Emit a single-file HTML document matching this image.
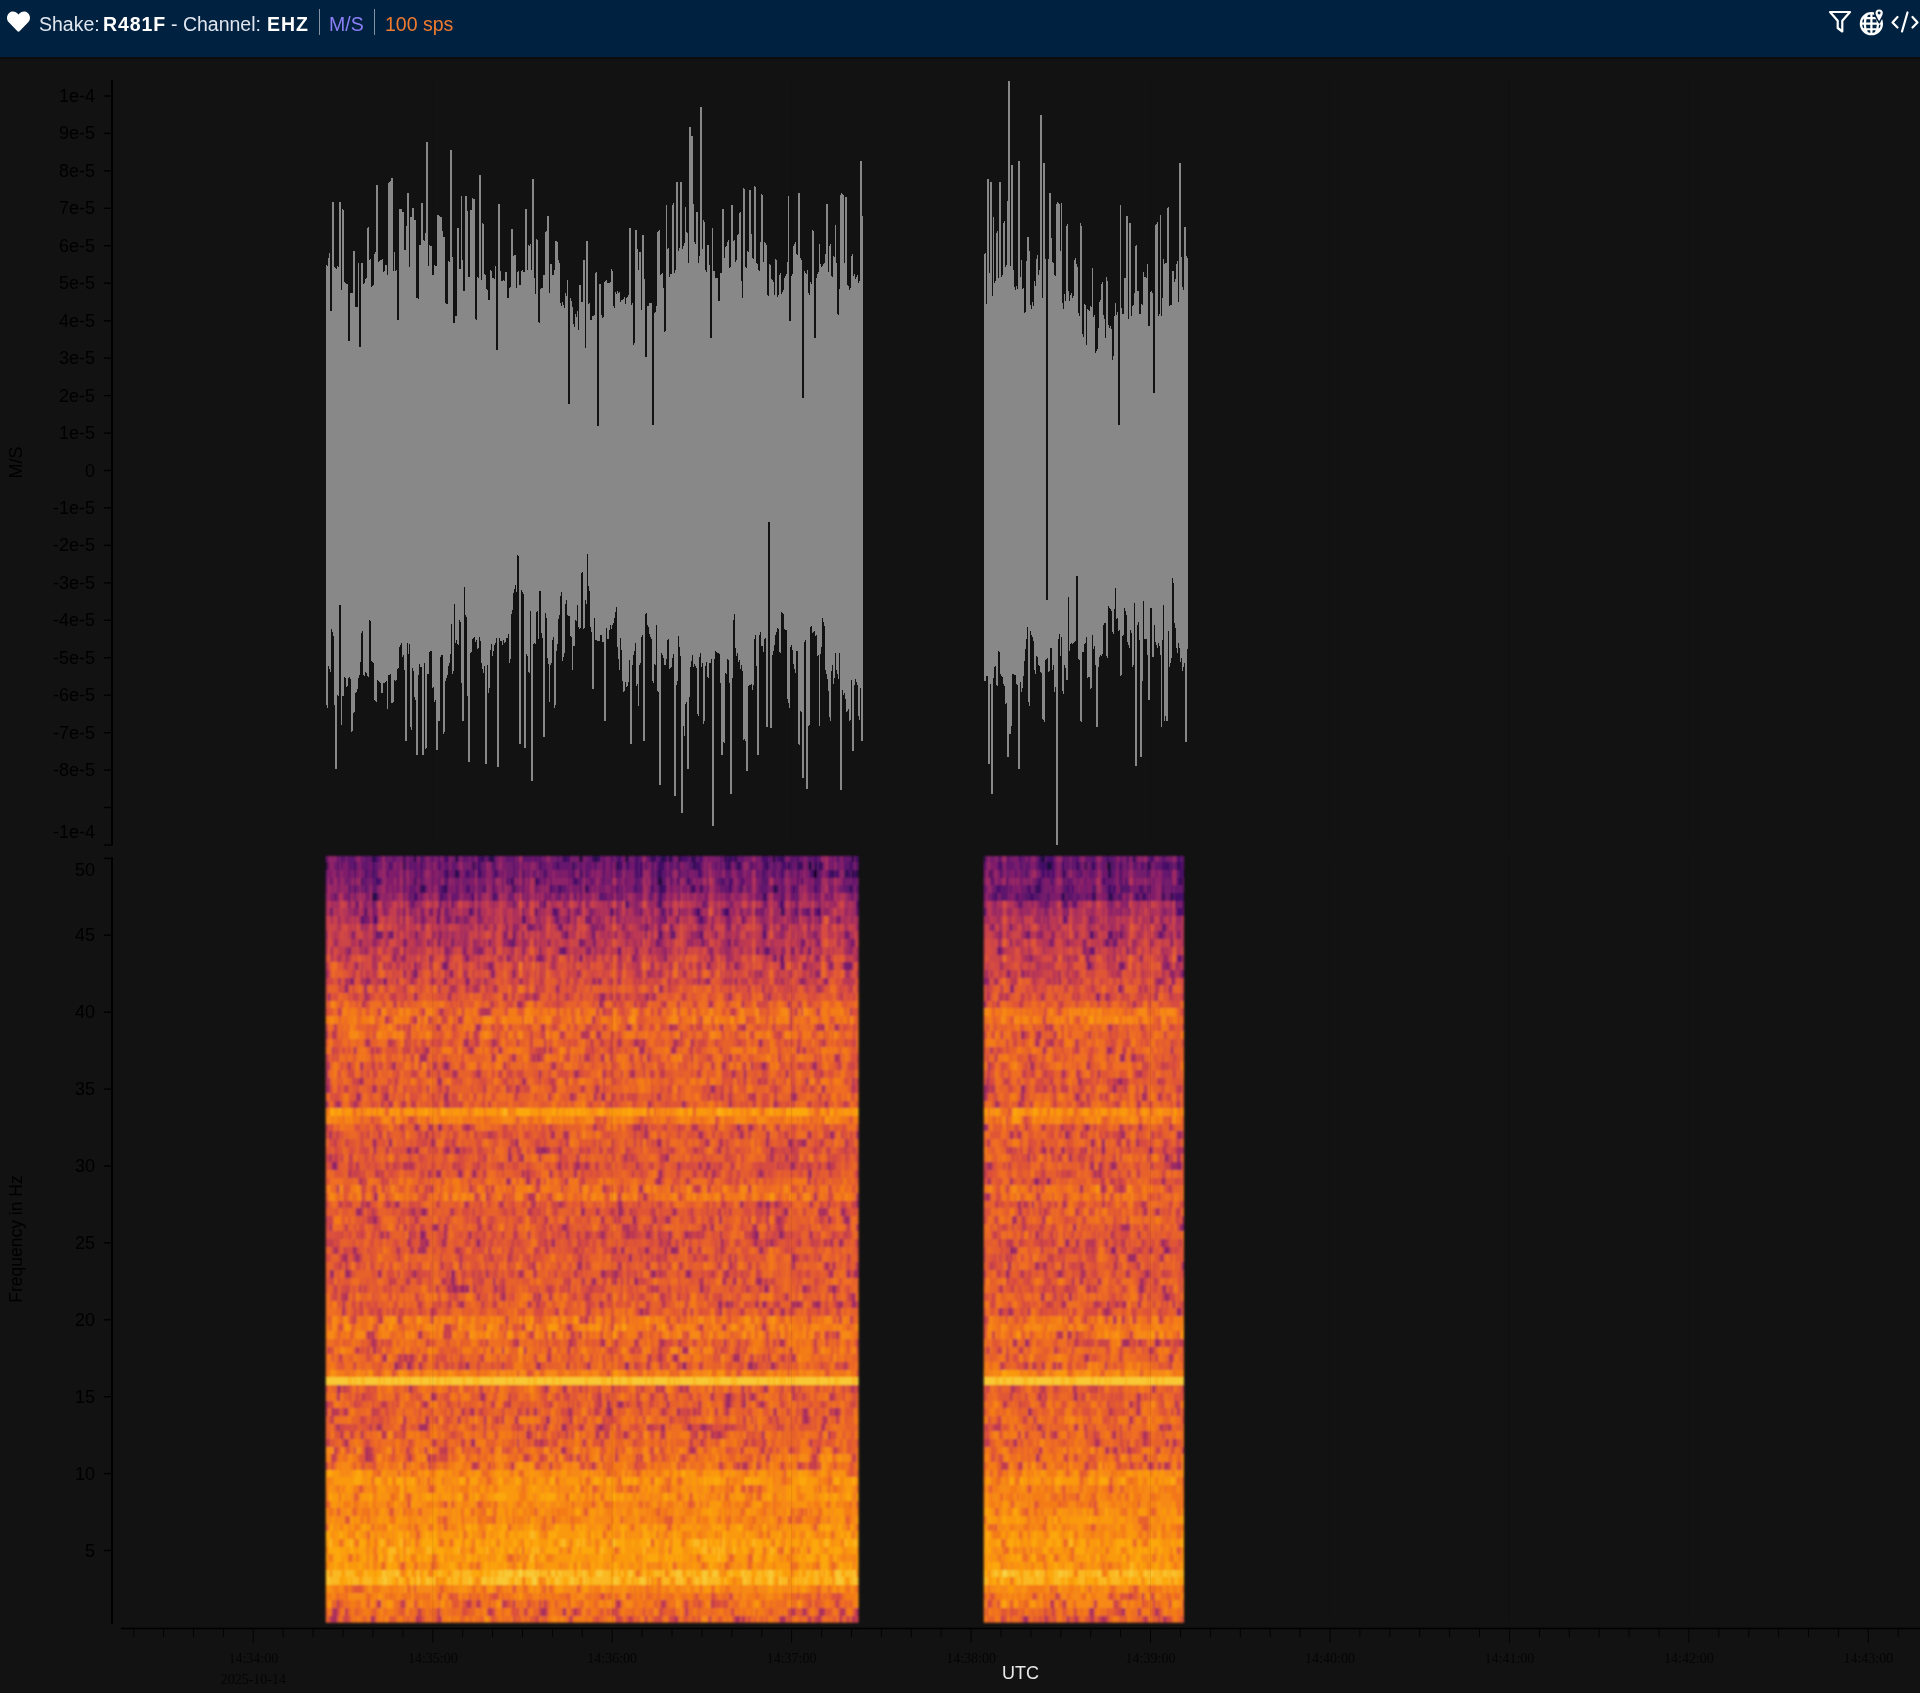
<!DOCTYPE html>
<html><head><meta charset="utf-8"><title>Shake R481F EHZ</title>
<style>
html,body{margin:0;padding:0;background:#121212;width:1920px;height:1693px;overflow:hidden;font-family:"Liberation Sans",sans-serif}
#wrap{position:absolute;left:0;top:0;width:1920px;height:1693px;filter:blur(0.45px)}
#hdr{position:absolute;left:0;top:0;width:1920px;height:57px;background:#00213f;box-shadow:0 1px 3px rgba(0,0,0,.6);z-index:2}
#hdr span{position:absolute;top:12.5px;font-size:19.5px;line-height:22px;white-space:nowrap}
.lt{color:#dfe6ef}
.bd{color:#ffffff;font-weight:bold;letter-spacing:0.9px}
.sep{position:absolute;top:9px;width:1px;height:26px;background:#8492a3}
svg{position:absolute;left:0;top:0}
.yl{font-size:18px;fill:#000;text-anchor:end;font-family:"Liberation Sans",sans-serif}
.xl{font-size:14px;fill:#050505;text-anchor:middle;font-family:"Liberation Serif",serif}
</style></head><body><div id="wrap">
<div id="hdr">
<svg width="23" height="21" viewBox="0 22 512 463" style="left:7px;top:11px"><path fill="#fff" d="M462.3 62.6C407.5 15.9 326 24.3 275.7 76.2L256 96.5l-19.7-20.3C186.1 24.3 104.5 15.9 49.7 62.6c-62.8 53.6-66.1 149.8-9.9 207.9l193.5 199.8c12.5 12.9 32.8 12.9 45.3 0l193.5-199.8c56.3-58.1 53-154.3-9.8-207.9z"/></svg>
<span class="lt" style="left:39px">Shake:</span>
<span class="bd" style="left:103px">R481F</span>
<span class="lt" style="left:171px">- Channel:</span>
<span class="bd" style="left:267px">EHZ</span>
<div class="sep" style="left:319px"></div>
<span style="left:329px;color:#8b7ff6">M/S</span>
<div class="sep" style="left:374px"></div>
<span style="left:385px;color:#f07b30">100 sps</span>
<svg width="26" height="26" viewBox="0 0 26 26" style="left:1827px;top:9px"><path fill="none" stroke="#fff" stroke-width="2.2" stroke-linejoin="round" d="M3 3H23L15.3 11.8V22.5L10.7 19V11.8Z"/></svg>
<svg width="31" height="29" viewBox="0 0 28 26" style="left:1857px;top:7px"><g fill="none" stroke="#fff" stroke-width="2"><circle cx="13" cy="15" r="9.5"/><path d="M3.5 15H22.5M5 10H21M5 20H21M13 5.5V24.5M9 6.5C6.5 12 6.5 18 9 23.5M17 6.5C19.5 12 19.5 18 17 23.5"/></g><path fill="#fff" stroke="#00213f" stroke-width="1.4" d="M20 1.5C17.6 1.5 16 3.3 16 5.4C16 7.8 20 14 20 14C20 14 24 7.8 24 5.4C24 3.3 22.4 1.5 20 1.5Z"/><circle cx="20" cy="5.3" r="1.3" fill="#00213f"/></svg>
<svg width="30" height="24" viewBox="0 0 30 24" style="left:1890px;top:10px"><path fill="none" stroke="#fff" stroke-width="2.2" stroke-linecap="round" stroke-linejoin="round" d="M7.5 7L2.5 12.5L7.5 17.5M22.5 7L27.5 12.5L22.5 17.5M17.5 2.5L12 21.5"/></svg>
</div>

<svg width="1920" height="1693" viewBox="0 0 1920 1693" style="top:0;left:0;pointer-events:none">
<path stroke="rgba(0,0,0,0.07)" stroke-width="1" fill="none" d="M253.3 80V845M432.8 80V845M612.2 80V845M791.6 80V845M971.1 80V845M1150.5 80V845M1330.0 80V845M1509.4 80V845M1688.9 80V845M1868.3 80V845"/>
<path stroke="#888" stroke-width="1" fill="none" d="M326.5 265V705M327.5 266V708M328.5 258V666M329.5 253V669M330.5 311V672M331.5 311V629M332.5 202V632M333.5 202V636M334.5 267V705M335.5 268V769M336.5 269V769M337.5 266V695M338.5 267V696M339.5 202V605M340.5 202V605M341.5 290V725M342.5 209V696M343.5 210V696M344.5 282V677M345.5 283V678M346.5 284V687M347.5 284V686M348.5 341V678M349.5 341V677M350.5 293V679M351.5 293V732M352.5 293V731M353.5 251V713M354.5 251V712M355.5 307V693M356.5 307V692M357.5 307V689M358.5 263V678M359.5 347V675M360.5 347V662M361.5 263V633M362.5 263V631M363.5 284V675M364.5 283V676M365.5 279V672M366.5 278V673M367.5 228V676M368.5 227V677M369.5 260V620M370.5 259V621M371.5 287V661M372.5 286V662M373.5 285V663M374.5 254V700M375.5 252V701M376.5 185V702M377.5 185V680M378.5 262V681M379.5 261V682M380.5 260V683M381.5 260V693M382.5 259V693M383.5 272V683M384.5 271V683M385.5 265V682M386.5 265V681M387.5 275V709M388.5 183V675M389.5 182V675M390.5 181V674M391.5 178V703M392.5 178V703M393.5 271V702M394.5 252V680M395.5 271V681M396.5 270V680M397.5 320V669M398.5 320V668M399.5 209V647M400.5 209V645M401.5 209V643M402.5 212V657M403.5 212V655M404.5 250V670M405.5 250V741M406.5 226V741M407.5 193V643M408.5 193V654M409.5 267V644M410.5 217V727M411.5 217V730M412.5 208V668M413.5 208V671M414.5 220V697M415.5 220V700M416.5 298V755M417.5 298V755M418.5 299V675M419.5 245V664M420.5 245V667M421.5 203V667M422.5 203V755M423.5 240V755M424.5 241V663M425.5 233V749M426.5 142V748M427.5 142V674M428.5 266V674M429.5 245V652M430.5 246V651M431.5 246V651M432.5 275V688M433.5 275V687M434.5 265V702M435.5 266V700M436.5 266V750M437.5 215V750M438.5 215V721M439.5 216V721M440.5 217V657M441.5 217V655M442.5 231V655M443.5 237V734M444.5 237V732M445.5 303V681M446.5 304V678M447.5 304V675M448.5 261V666M449.5 262V663M450.5 150V654M451.5 150V624M452.5 257V674M453.5 323V671M454.5 323V604M455.5 316V643M456.5 316V640M457.5 228V644M458.5 228V645M459.5 269V620M460.5 269V622M461.5 196V683M462.5 260V721M463.5 291V721M464.5 291V587M465.5 196V615M466.5 196V617M467.5 211V696M468.5 277V762M469.5 277V762M470.5 210V653M471.5 210V652M472.5 198V639M473.5 199V638M474.5 199V637M475.5 319V642M476.5 320V640M477.5 277V649M478.5 278V648M479.5 175V637M480.5 175V641M481.5 280V663M482.5 223V669M483.5 224V673M484.5 274V666M485.5 275V764M486.5 289V764M487.5 290V665M488.5 300V693M489.5 300V688M490.5 270V650M491.5 271V644M492.5 278V656M493.5 278V651M494.5 279V645M495.5 266V643M496.5 350V638M497.5 350V767M498.5 204V767M499.5 204V638M500.5 271V641M501.5 281V641M502.5 281V645M503.5 280V640M504.5 281V643M505.5 272V642M506.5 272V638M507.5 298V638M508.5 298V634M509.5 288V663M510.5 287V659M511.5 229V614M512.5 229V610M513.5 256V593M514.5 255V589M515.5 255V585M516.5 288V592M517.5 272V555M518.5 271V556M519.5 285V744M520.5 285V744M521.5 271V590M522.5 270V592M523.5 272V594M524.5 272V748M525.5 209V748M526.5 209V654M527.5 270V656M528.5 245V672M529.5 246V673M530.5 244V611M531.5 270V781M532.5 179V781M533.5 179V644M534.5 278V643M535.5 294V644M536.5 239V612M537.5 240V611M538.5 322V639M539.5 323V591M540.5 289V591M541.5 288V633M542.5 288V638M543.5 275V737M544.5 275V737M545.5 232V613M546.5 231V618M547.5 216V658M548.5 216V664M549.5 293V702M550.5 264V665M551.5 264V663M552.5 275V640M553.5 275V637M554.5 270V708M555.5 241V705M556.5 241V651M557.5 242V644M558.5 260V619M559.5 263V615M560.5 303V596M561.5 306V592M562.5 302V661M563.5 305V657M564.5 308V653M565.5 293V604M566.5 296V600M567.5 280V615M568.5 404V616M569.5 404V616M570.5 298V636M571.5 301V637M572.5 307V670M573.5 324V646M574.5 327V646M575.5 314V620M576.5 317V621M577.5 311V605M578.5 330V627M579.5 285V629M580.5 285V628M581.5 302V573M582.5 302V572M583.5 260V629M584.5 260V628M585.5 348V600M586.5 241V604M587.5 241V554M588.5 304V586M589.5 303V591M590.5 320V627M591.5 320V632M592.5 316V689M593.5 316V689M594.5 315V618M595.5 273V640M596.5 272V640M597.5 426V641M598.5 426V641M599.5 284V641M600.5 284V635M601.5 315V635M602.5 318V642M603.5 317V642M604.5 282V721M605.5 281V721M606.5 280V628M607.5 283V639M608.5 283V639M609.5 283V630M610.5 282V625M611.5 269V629M612.5 271V625M613.5 306V623M614.5 308V618M615.5 292V612M616.5 294V607M617.5 291V647M618.5 293V659M619.5 292V670M620.5 302V638M621.5 300V650M622.5 300V681M623.5 299V692M624.5 297V691M625.5 304V682M626.5 298V687M627.5 297V686M628.5 295V682M629.5 228V660M630.5 228V744M631.5 305V744M632.5 303V665M633.5 345V655M634.5 343V651M635.5 230V643M636.5 230V686M637.5 249V684M638.5 270V706M639.5 252V665M640.5 252V663M641.5 310V637M642.5 235V635M643.5 235V741M644.5 279V741M645.5 357V614M646.5 357V613M647.5 306V625M648.5 306V627M649.5 303V634M650.5 303V637M651.5 303V639M652.5 425V681M653.5 425V683M654.5 313V664M655.5 312V665M656.5 306V625M657.5 232V691M658.5 231V692M659.5 230V785M660.5 275V785M661.5 274V653M662.5 273V655M663.5 288V658M664.5 332V665M665.5 331V665M666.5 205V659M667.5 249V640M668.5 248V639M669.5 277V669M670.5 274V668M671.5 274V667M672.5 205V658M673.5 203V654M674.5 273V796M675.5 270V796M676.5 182V685M677.5 182V681M678.5 251V636M679.5 248V647M680.5 182V656M681.5 182V813M682.5 249V813M683.5 246V726M684.5 243V736M685.5 207V704M686.5 232V702M687.5 233V769M688.5 263V769M689.5 127V697M690.5 127V667M691.5 136V661M692.5 136V655M693.5 204V667M694.5 242V664M695.5 244V666M696.5 212V668M697.5 212V714M698.5 263V716M699.5 256V657M700.5 107V653M701.5 107V667M702.5 249V663M703.5 220V724M704.5 222V721M705.5 270V666M706.5 272V662M707.5 245V677M708.5 245V678M709.5 265V663M710.5 338V663M711.5 338V659M712.5 228V826M713.5 271V826M714.5 271V659M715.5 278V651M716.5 278V652M717.5 278V653M718.5 301V653M719.5 301V654M720.5 273V683M721.5 273V755M722.5 209V755M723.5 209V742M724.5 258V743M725.5 247V673M726.5 246V674M727.5 242V659M728.5 240V660M729.5 268V683M730.5 267V794M731.5 205V794M732.5 205V678M733.5 241V620M734.5 240V614M735.5 262V648M736.5 260V656M737.5 235V653M738.5 234V662M739.5 213V660M740.5 212V669M741.5 281V665M742.5 298V671M743.5 188V740M744.5 189V739M745.5 267V741M746.5 268V771M747.5 251V771M748.5 252V686M749.5 190V685M750.5 190V685M751.5 234V684M752.5 258V690M753.5 259V685M754.5 186V639M755.5 187V635M756.5 263V666M757.5 264V755M758.5 270V755M759.5 271V635M760.5 242V632M761.5 194V646M762.5 195V646M763.5 262V652M764.5 242V639M765.5 243V638M766.5 245V727M767.5 295V727M768.5 296V522M769.5 264V522M770.5 265V728M771.5 279V728M772.5 280V655M773.5 282V651M774.5 295V645M775.5 259V635M776.5 260V632M777.5 297V628M778.5 295V629M779.5 275V652M780.5 273V653M781.5 294V612M782.5 292V613M783.5 290V614M784.5 278V629M785.5 276V630M786.5 274V630M787.5 262V699M788.5 196V703M789.5 321V708M790.5 321V647M791.5 276V645M792.5 274V650M793.5 246V664M794.5 244V669M795.5 242V673M796.5 254V651M797.5 255V651M798.5 193V744M799.5 193V745M800.5 258V711M801.5 260V712M802.5 398V778M803.5 398V778M804.5 271V642M805.5 273V640M806.5 274V789M807.5 270V789M808.5 293V726M809.5 295V725M810.5 282V627M811.5 284V626M812.5 230V633M813.5 231V632M814.5 338V631M815.5 338V636M816.5 278V635M817.5 274V656M818.5 272V655M819.5 244V726M820.5 264V654M821.5 267V647M822.5 266V618M823.5 264V622M824.5 263V626M825.5 254V670M826.5 204V674M827.5 204V679M828.5 272V691M829.5 246V717M830.5 244V721M831.5 276V671M832.5 277V665M833.5 256V684M834.5 257V678M835.5 225V653M836.5 263V670M837.5 314V674M838.5 315V679M839.5 289V653M840.5 195V790M841.5 193V790M842.5 194V690M843.5 195V695M844.5 263V693M845.5 197V699M846.5 197V712M847.5 285V711M848.5 286V709M849.5 290V721M850.5 288V720M851.5 256V680M852.5 254V751M853.5 276V751M854.5 274V685M855.5 279V679M856.5 277V682M857.5 275V685M858.5 283V716M859.5 281V720M860.5 161V688M861.5 161V741M862.5 216V741"/>
<path stroke="#888" stroke-width="1" fill="none" d="M984.5 254V681M985.5 253V681M986.5 304V676M987.5 179V676M988.5 179V764M989.5 273V764M990.5 182V684M991.5 182V794M992.5 296V794M993.5 217V678M994.5 283V667M995.5 281V666M996.5 233V685M997.5 231V686M998.5 278V651M999.5 182V652M1000.5 182V674M1001.5 277V676M1002.5 275V677M1003.5 223V684M1004.5 221V686M1005.5 267V704M1006.5 265V703M1007.5 201V757M1008.5 81V757M1009.5 81V734M1010.5 266V734M1011.5 165V726M1012.5 165V674M1013.5 270V674M1014.5 287V675M1015.5 290V675M1016.5 286V684M1017.5 289V685M1018.5 161V769M1019.5 161V769M1020.5 277V682M1021.5 260V692M1022.5 289V688M1023.5 288V676M1024.5 313V661M1025.5 312V649M1026.5 261V639M1027.5 237V627M1028.5 237V702M1029.5 251V706M1030.5 305V631M1031.5 309V635M1032.5 302V637M1033.5 306V641M1034.5 281V670M1035.5 286V674M1036.5 259V656M1037.5 255V657M1038.5 275V665M1039.5 270V666M1040.5 115V672M1041.5 115V673M1042.5 298V719M1043.5 163V720M1044.5 163V722M1045.5 259V660M1046.5 600V659M1047.5 600V658M1048.5 259V672M1049.5 193V671M1050.5 193V648M1051.5 238V648M1052.5 262V670M1053.5 263V665M1054.5 275V692M1055.5 276V687M1056.5 204V845M1057.5 202V845M1058.5 203V639M1059.5 204V634M1060.5 251V656M1061.5 203V637M1062.5 303V691M1063.5 309V694M1064.5 294V665M1065.5 301V668M1066.5 226V680M1067.5 224V680M1068.5 291V597M1069.5 301V651M1070.5 295V644M1071.5 293V643M1072.5 298V644M1073.5 296V643M1074.5 260V642M1075.5 258V641M1076.5 264V576M1077.5 267V576M1078.5 313V659M1079.5 316V660M1080.5 223V721M1081.5 226V722M1082.5 334V652M1083.5 337V652M1084.5 304V644M1085.5 305V643M1086.5 345V637M1087.5 309V678M1088.5 310V677M1089.5 311V677M1090.5 306V689M1091.5 307V688M1092.5 268V635M1093.5 317V649M1094.5 315V646M1095.5 353V665M1096.5 351V727M1097.5 349V727M1098.5 328V667M1099.5 302V657M1100.5 300V655M1101.5 284V656M1102.5 282V654M1103.5 315V625M1104.5 319V623M1105.5 338V623M1106.5 277V656M1107.5 281V658M1108.5 325V606M1109.5 328V608M1110.5 326V609M1111.5 329V611M1112.5 360V632M1113.5 356V634M1114.5 316V609M1115.5 303V588M1116.5 315V619M1117.5 312V618M1118.5 425V631M1119.5 425V630M1120.5 205V676M1121.5 308V675M1122.5 314V636M1123.5 314V635M1124.5 278V608M1125.5 278V611M1126.5 216V615M1127.5 216V642M1128.5 319V645M1129.5 223V648M1130.5 223V630M1131.5 316V633M1132.5 306V667M1133.5 305V665M1134.5 293V603M1135.5 246V766M1136.5 245V766M1137.5 291V625M1138.5 291V622M1139.5 314V640M1140.5 314V757M1141.5 304V757M1142.5 305V681M1143.5 272V601M1144.5 277V639M1145.5 277V639M1146.5 278V639M1147.5 264V655M1148.5 326V700M1149.5 326V700M1150.5 292V608M1151.5 291V608M1152.5 293V657M1153.5 393V657M1154.5 393V625M1155.5 225V642M1156.5 224V645M1157.5 222V648M1158.5 316V643M1159.5 314V646M1160.5 215V655M1161.5 316V727M1162.5 298V640M1163.5 259V605M1164.5 264V721M1165.5 263V716M1166.5 263V721M1167.5 208V721M1168.5 207V631M1169.5 306V667M1170.5 305V663M1171.5 305V658M1172.5 271V578M1173.5 271V583M1174.5 282V623M1175.5 279V628M1176.5 264V648M1177.5 261V653M1178.5 302V643M1179.5 163V648M1180.5 163V662M1181.5 257V658M1182.5 287V671M1183.5 290V667M1184.5 227V663M1185.5 227V742M1186.5 256V742M1187.5 258V649"/>
<defs><filter id="sblur" x="-2%" y="-2%" width="104%" height="104%"><feGaussianBlur stdDeviation="0.85"/></filter></defs>
<clipPath id="c325"><rect x="325.5" y="856.0" width="533.0" height="766.5"/></clipPath><g filter="url(#sblur)"><g clip-path="url(#c325)"><rect x="325.5" y="854.56" width="533.0" height="7.69" fill="#63156d"/>
<rect x="325.5" y="862.25" width="533.0" height="7.69" fill="#69176e"/>
<rect x="325.5" y="869.94" width="533.0" height="7.69" fill="#71196d"/>
<rect x="325.5" y="877.62" width="533.0" height="7.69" fill="#7c1e6b"/>
<rect x="325.5" y="885.32" width="533.0" height="7.69" fill="#781c6c"/>
<rect x="325.5" y="893.01" width="533.0" height="7.69" fill="#8a2368"/>
<rect x="325.5" y="900.70" width="533.0" height="7.69" fill="#aa2f5c"/>
<rect x="325.5" y="908.39" width="533.0" height="7.69" fill="#9c2a63"/>
<rect x="325.5" y="916.08" width="533.0" height="7.69" fill="#a72e5e"/>
<rect x="325.5" y="923.77" width="533.0" height="7.69" fill="#b93655"/>
<rect x="325.5" y="931.46" width="533.0" height="7.69" fill="#b43458"/>
<rect x="325.5" y="939.15" width="533.0" height="7.69" fill="#b53457"/>
<rect x="325.5" y="946.84" width="533.0" height="7.69" fill="#ba3655"/>
<rect x="325.5" y="954.53" width="533.0" height="7.69" fill="#c8404b"/>
<rect x="325.5" y="962.22" width="533.0" height="7.69" fill="#cc4447"/>
<rect x="325.5" y="969.91" width="533.0" height="7.69" fill="#d14744"/>
<rect x="325.5" y="977.60" width="533.0" height="7.69" fill="#cc4348"/>
<rect x="325.5" y="985.29" width="533.0" height="7.69" fill="#db4f3c"/>
<rect x="325.5" y="992.98" width="533.0" height="7.69" fill="#d94e3d"/>
<rect x="325.5" y="1000.67" width="533.0" height="7.69" fill="#e35b32"/>
<rect x="325.5" y="1008.36" width="533.0" height="7.69" fill="#ea6628"/>
<rect x="325.5" y="1016.05" width="533.0" height="7.69" fill="#ed6c23"/>
<rect x="325.5" y="1023.74" width="533.0" height="7.69" fill="#e25a33"/>
<rect x="325.5" y="1031.43" width="533.0" height="7.69" fill="#e9642a"/>
<rect x="325.5" y="1039.12" width="533.0" height="7.69" fill="#e05536"/>
<rect x="325.5" y="1046.81" width="533.0" height="7.69" fill="#e35c31"/>
<rect x="325.5" y="1054.50" width="533.0" height="7.69" fill="#e45d30"/>
<rect x="325.5" y="1062.18" width="533.0" height="7.69" fill="#e25933"/>
<rect x="325.5" y="1069.88" width="533.0" height="7.69" fill="#df5537"/>
<rect x="325.5" y="1077.57" width="533.0" height="7.69" fill="#e45c30"/>
<rect x="325.5" y="1085.26" width="533.0" height="7.69" fill="#e05735"/>
<rect x="325.5" y="1092.95" width="533.0" height="7.69" fill="#e05735"/>
<rect x="325.5" y="1100.64" width="533.0" height="7.69" fill="#e05636"/>
<rect x="325.5" y="1108.33" width="533.0" height="7.69" fill="#f99310"/>
<rect x="325.5" y="1116.02" width="533.0" height="7.69" fill="#f3761b"/>
<rect x="325.5" y="1123.70" width="533.0" height="7.69" fill="#e05636"/>
<rect x="325.5" y="1131.39" width="533.0" height="7.69" fill="#de5338"/>
<rect x="325.5" y="1139.09" width="533.0" height="7.69" fill="#de5438"/>
<rect x="325.5" y="1146.78" width="533.0" height="7.69" fill="#d94e3d"/>
<rect x="325.5" y="1154.47" width="533.0" height="7.69" fill="#e05636"/>
<rect x="325.5" y="1162.16" width="533.0" height="7.69" fill="#d74c3f"/>
<rect x="325.5" y="1169.85" width="533.0" height="7.69" fill="#dc513a"/>
<rect x="325.5" y="1177.54" width="533.0" height="7.69" fill="#e55f2f"/>
<rect x="325.5" y="1185.23" width="533.0" height="7.69" fill="#e96529"/>
<rect x="325.5" y="1192.91" width="533.0" height="7.69" fill="#ec6b24"/>
<rect x="325.5" y="1200.61" width="533.0" height="7.69" fill="#dc503b"/>
<rect x="325.5" y="1208.30" width="533.0" height="7.69" fill="#d94e3d"/>
<rect x="325.5" y="1215.99" width="533.0" height="7.69" fill="#de5338"/>
<rect x="325.5" y="1223.68" width="533.0" height="7.69" fill="#df5437"/>
<rect x="325.5" y="1231.37" width="533.0" height="7.69" fill="#d64b40"/>
<rect x="325.5" y="1239.06" width="533.0" height="7.69" fill="#d94e3d"/>
<rect x="325.5" y="1246.75" width="533.0" height="7.69" fill="#dc513a"/>
<rect x="325.5" y="1254.43" width="533.0" height="7.69" fill="#df5437"/>
<rect x="325.5" y="1262.12" width="533.0" height="7.69" fill="#e25933"/>
<rect x="325.5" y="1269.82" width="533.0" height="7.69" fill="#d94e3d"/>
<rect x="325.5" y="1277.51" width="533.0" height="7.69" fill="#df5437"/>
<rect x="325.5" y="1285.20" width="533.0" height="7.69" fill="#dc503b"/>
<rect x="325.5" y="1292.88" width="533.0" height="7.69" fill="#e35a32"/>
<rect x="325.5" y="1300.58" width="533.0" height="7.69" fill="#dd513a"/>
<rect x="325.5" y="1308.27" width="533.0" height="7.69" fill="#e15834"/>
<rect x="325.5" y="1315.96" width="533.0" height="7.69" fill="#ef7020"/>
<rect x="325.5" y="1323.64" width="533.0" height="7.69" fill="#f1721e"/>
<rect x="325.5" y="1331.34" width="533.0" height="7.69" fill="#ee6d22"/>
<rect x="325.5" y="1339.03" width="533.0" height="7.69" fill="#e55e2f"/>
<rect x="325.5" y="1346.72" width="533.0" height="7.69" fill="#e96529"/>
<rect x="325.5" y="1354.41" width="533.0" height="7.69" fill="#e55e2f"/>
<rect x="325.5" y="1362.10" width="533.0" height="7.69" fill="#e05735"/>
<rect x="325.5" y="1369.79" width="533.0" height="7.69" fill="#f4791a"/>
<rect x="325.5" y="1377.48" width="533.0" height="7.69" fill="#f8c42f"/>
<rect x="325.5" y="1385.16" width="533.0" height="7.69" fill="#e45c31"/>
<rect x="325.5" y="1392.86" width="533.0" height="7.69" fill="#e35a32"/>
<rect x="325.5" y="1400.55" width="533.0" height="7.69" fill="#e15834"/>
<rect x="325.5" y="1408.24" width="533.0" height="7.69" fill="#e05636"/>
<rect x="325.5" y="1415.93" width="533.0" height="7.69" fill="#e45e30"/>
<rect x="325.5" y="1423.62" width="533.0" height="7.69" fill="#de5338"/>
<rect x="325.5" y="1431.31" width="533.0" height="7.69" fill="#e55f2e"/>
<rect x="325.5" y="1439.00" width="533.0" height="7.69" fill="#e55f2e"/>
<rect x="325.5" y="1446.69" width="533.0" height="7.69" fill="#e9642a"/>
<rect x="325.5" y="1454.38" width="533.0" height="7.69" fill="#eb6827"/>
<rect x="325.5" y="1462.07" width="533.0" height="7.69" fill="#eb6926"/>
<rect x="325.5" y="1469.76" width="533.0" height="7.69" fill="#f68715"/>
<rect x="325.5" y="1477.45" width="533.0" height="7.69" fill="#f88f12"/>
<rect x="325.5" y="1485.13" width="533.0" height="7.69" fill="#f68416"/>
<rect x="325.5" y="1492.83" width="533.0" height="7.69" fill="#f88e12"/>
<rect x="325.5" y="1500.52" width="533.0" height="7.69" fill="#f58117"/>
<rect x="325.5" y="1508.21" width="533.0" height="7.69" fill="#f58316"/>
<rect x="325.5" y="1515.89" width="533.0" height="7.69" fill="#f58117"/>
<rect x="325.5" y="1523.59" width="533.0" height="7.69" fill="#f88e12"/>
<rect x="325.5" y="1531.28" width="533.0" height="7.69" fill="#f99311"/>
<rect x="325.5" y="1538.97" width="533.0" height="7.69" fill="#fa9b0e"/>
<rect x="325.5" y="1546.66" width="533.0" height="7.69" fill="#fa9a0e"/>
<rect x="325.5" y="1554.35" width="533.0" height="7.69" fill="#f99410"/>
<rect x="325.5" y="1562.04" width="533.0" height="7.69" fill="#f88f12"/>
<rect x="325.5" y="1569.73" width="533.0" height="7.69" fill="#fbae15"/>
<rect x="325.5" y="1577.42" width="533.0" height="7.69" fill="#fbaf15"/>
<rect x="325.5" y="1585.11" width="533.0" height="7.69" fill="#f58117"/>
<rect x="325.5" y="1592.80" width="533.0" height="7.69" fill="#f0711f"/>
<rect x="325.5" y="1600.49" width="533.0" height="7.69" fill="#ec6a25"/>
<rect x="325.5" y="1608.18" width="533.0" height="7.69" fill="#e7622c"/>
<rect x="325.5" y="1615.87" width="533.0" height="7.69" fill="#e55f2f"/><g fill="none" stroke-width="1" shape-rendering="crispEdges" transform="translate(325.50 854.555) scale(2.20248 7.69000)"><path stroke="#070415" d="M222 2.5h1"/>
<path stroke="#0e0726" d="M203 0.5h1"/>
<path stroke="#150b37" d="M40 0.5h1m74 0h1m20 0h1m19 0h1m3 0h1m78 0h1M0 1.5h1M239 2.5h1M151 3.5h2"/>
<path stroke="#230b47" d="M21 0.5h1m37 0h1m15 0h1m40 0h1m5 0h1m30 0h1m27 0h1m1 0h1m2 0h1M35 1.5h1m31 0h1m64 0h1m86 0h2M59 2.5h1m176 0h1m4 0h1M204 4.5h1M21 5.5h2"/>
<path stroke="#310a56" d="M22 0.5h1m12 0h1m35 0h1m2 0h1m1 0h1m31 0h1m14 0h1m13 0h1m10 0h1m17 0h2m39 0h1M112 1.5h1m39 0h1m14 0h1m15 0h1m3 0h1m12 0h1m9 0h1m3 0h1m1 0h1m5 0h1m1 0h1M55 2.5h1m95 0h1m78 0h1M40 3.5h1m43 0h1m10 0h1M43 4.5h2m9 0h1m30 0h1m32 0h1m33 0h1m13 0h1m3 0h1m32 0h1m34 0h1M23 5.5h1m175 0h1M152 6.5h1M207 7.5h1"/>
<path stroke="#3f0a65" d="M43 0.5h1m10 0h1m15 0h1m39 0h1m10 0h1m27 0h1m2 0h1m1 0h1m2 0h1m3 0h1m36 0h1m7 0h1m7 0h1m26 0h1M13 1.5h1m29 0h1m32 0h1m20 0h1m7 0h1m27 0h1m26 0h1m8 0h1m12 0h1m10 0h1m21 0h1m9 0h1m12 0h1M21 2.5h1m38 0h1m9 0h1m6 0h1m11 0h1m9 0h1m12 0h1m3 0h1m35 0h1m7 0h1m9 0h1m50 0h1m7 0h1m7 0h1M16 3.5h1m6 0h1m89 0h1m50 0h1M106 4.5h1m46 0h1m29 0h1m4 0h1M40 5.5h1m35 0h1M18 7.5h1m76 0h1m73 0h1m12 0h1m41 0h1M152 10.5h1"/>
<path stroke="#4c0d6a" d="M23 0.5h1m31 0h1m13 0h1m25 0h1m1 0h1m11 0h1m14 0h1m8 0h1m7 0h1m20 0h2m6 0h1m11 0h1m1 0h2m13 0h2m4 0h1m16 0h1M21 1.5h1m7 0h1m21 0h1m17 0h1m52 0h1m3 0h1m7 0h1m2 0h1m2 0h2m1 0h1m7 0h1m1 0h1m14 0h1m19 0h1m10 0h1m7 0h2M18 2.5h1m24 0h1m10 0h1m9 0h1m2 0h1m1 0h1m62 0h1m8 0h1m1 0h1m25 0h1m28 0h1m4 0h1m3 0h1m6 0h1m5 0h1m7 0h1m3 0h1m7 0h1M24 3.5h1m71 0h1m63 0h1m19 0h1m2 0h2m4 0h1m10 0h1m13 0h1m1 0h1M53 4.5h1m10 0h1m7 0h1m29 0h1m29 0h1m7 0h1m7 0h1m18 0h1m44 0h1m9 0h1M41 5.5h1m10 0h1m13 0h1m85 0h1M99 6.5h1m36 0h1m70 0h1m33 0h1M51 7.5h1m13 0h1m38 0h1m63 0h1m12 0h1m41 0h1M22 8.5h1m66 0h1m80 0h1M199 10.5h1"/>
<path stroke="#59126b" d="M7 0.5h2m1 0h1m1 0h1m5 0h1m25 0h1m6 0h1m11 0h1m3 0h1m4 0h1m9 0h1m2 0h1m4 0h1m1 0h1m12 0h1m20 0h1m5 0h1m7 0h1m1 0h1m4 0h1m3 0h1m12 0h1m4 0h1m9 0h1m24 0h1m3 0h1m3 0h1m6 0h2m3 0h1m7 0h1m2 0h1m2 0h1M5 1.5h1m5 0h1m6 0h1m3 0h1m15 0h1m1 0h1m14 0h1m2 0h1m11 0h1m14 0h1m18 0h1m8 0h1m5 0h1m16 0h1m5 0h1m2 0h1m2 0h1m8 0h1m7 0h2m3 0h1m8 0h1m1 0h1m4 0h1m11 0h1m2 0h1m1 0h1m7 0h1m11 0h1m12 0h2m1 0h1m1 0h1M5 2.5h1m7 0h1m8 0h2m11 0h1m5 0h1m23 0h1m10 0h1m8 0h1m29 0h1m2 0h1m7 0h1m13 0h1m1 0h1m5 0h1m1 0h1m2 0h1m2 0h1m26 0h1m15 0h1m23 0h2m6 0h1m6 0h1M2 3.5h1m19 0h1m12 0h1m7 0h1m7 0h1m2 0h1m21 0h1m5 0h1m6 0h1m24 0h1m26 0h1m11 0h1m3 0h1m7 0h1m13 0h1m18 0h2m22 0h1m1 0h1M10 4.5h1m2 0h1m4 0h1m3 0h1m12 0h1m9 0h1m6 0h1m42 0h1m11 0h1m7 0h1m25 0h1m9 0h1m2 0h1m24 0h1m18 0h1m6 0h1m8 0h1m22 0h1m1 0h1m1 0h1M38 5.5h1m14 0h1m23 0h1m46 0h2m25 0h1m46 0h1m8 0h1m6 0h1M85 6.5h1m51 0h1m13 0h1M2 7.5h1m126 0h1m23 0h1m41 0h1m17 0h1m5 0h1M16 8.5h1m6 0h1M23 10.5h1m61 0h1m23 0h1m47 0h1m12 0h1M51 11.5h1m33 0h1M200 12.5h1"/>
<path stroke="#66166d" d="M0 0.5h1m4 0h1m5 0h1m1 0h1m2 0h1m2 0h2m3 0h1m2 0h1m2 0h2m4 0h1m1 0h2m1 0h1m6 0h1m11 0h1m1 0h1m1 0h1m1 0h1m16 0h2m2 0h1m1 0h1m1 0h1m1 0h1m13 0h1m11 0h2m8 0h2m3 0h1m8 0h1m2 0h1m3 0h1m4 0h1m9 0h1m2 0h1m2 0h1m15 0h3m11 0h2m8 0h1m1 0h1m2 0h1m4 0h1m1 0h1m6 0h1m5 0h2m2 0h1M7 1.5h1m2 0h1m1 0h1m3 0h2m1 0h1m3 0h1m12 0h1m2 0h1m1 0h1m2 0h1m7 0h1m1 0h1m2 0h1m1 0h1m6 0h1m5 0h1m14 0h1m1 0h1m8 0h2m3 0h1m2 0h5m4 0h2m1 0h1m1 0h1m8 0h1m8 0h1m11 0h1m5 0h1m2 0h1m17 0h1m17 0h1m8 0h1m4 0h1m2 0h1m17 0h1m4 0h1M0 2.5h1m9 0h1m8 0h1m8 0h1m11 0h1m16 0h2m4 0h1m8 0h1m5 0h1m8 0h1m6 0h1m5 0h1m9 0h1m8 0h1m9 0h1m3 0h1m20 0h1m9 0h1m14 0h1m2 0h1m4 0h2m7 0h1m3 0h1m5 0h1M17 3.5h2m2 0h1m33 0h1m27 0h1m1 0h1m11 0h1m1 0h1m12 0h1m2 0h1m4 0h2m3 0h2m2 0h1m6 0h1m3 0h1m1 0h1m5 0h1m1 0h1m27 0h1m2 0h1m6 0h1m18 0h1m15 0h1m11 0h1m3 0h2M21 4.5h1m16 0h3m10 0h1m3 0h1m3 0h1m5 0h1m1 0h1m3 0h1m4 0h1m12 0h1m13 0h1m1 0h1m2 0h1m10 0h1m22 0h2m27 0h1m1 0h1m7 0h2m1 0h1m12 0h1m1 0h2m6 0h1m5 0h1m9 0h2m10 0h2M4 5.5h1m38 0h1m10 0h1m2 0h3m7 0h1m21 0h1m9 0h1m6 0h1m6 0h1m12 0h2m4 0h1m1 0h1m12 0h1m12 0h1m39 0h1m11 0h1m26 0h1M14 6.5h1m6 0h1m17 0h1m17 0h1m148 0h1M66 7.5h1m36 0h1m6 0h1m19 0h1m25 0h1m41 0h1m19 0h1m3 0h1m18 0h1M17 8.5h1m33 0h1m38 0h1m13 0h1m5 0h1m43 0h1m16 0h1m17 0h1m34 0h1M92 9.5h1m13 0h1m92 0h1M41 10.5h1m194 0h1M115 11.5h1m34 0h1m20 0h1m11 0h1m32 0h1m22 0h1M108 12.5h1m24 0h1m85 0h1M207 13.5h1M207 14.5h1"/>
<path stroke="#731a6c" d="M6 0.5h1m2 0h1m7 0h1m10 0h2m2 0h2m13 0h1m1 0h1m7 0h2m6 0h1m7 0h1m3 0h1m3 0h1m12 0h1m1 0h1m1 0h2m2 0h3m1 0h1m5 0h2m4 0h1m12 0h1m6 0h2m18 0h1m18 0h1m2 0h1m9 0h1m1 0h1m2 0h1m1 0h1m12 0h1m4 0h1m2 0h1m14 0h1M4 1.5h1m9 0h1m9 0h1m3 0h1m1 0h1m14 0h1m2 0h1m14 0h2m3 0h1m2 0h1m3 0h1m1 0h1m2 0h1m1 0h3m1 0h1m5 0h1m2 0h1m4 0h1m10 0h1m2 0h1m8 0h1m30 0h1m3 0h1m4 0h2m10 0h2m15 0h1m9 0h1m2 0h2m6 0h1m7 0h1m6 0h1m3 0h2M11 2.5h1m5 0h1m2 0h1m11 0h1m5 0h1m5 0h1m6 0h1m1 0h1m12 0h1m4 0h1m8 0h1m1 0h3m1 0h1m4 0h2m2 0h1m1 0h2m7 0h1m4 0h1m22 0h1m1 0h2m11 0h1m7 0h1m3 0h3m3 0h2m4 0h1m18 0h1m2 0h1m1 0h1m4 0h1m1 0h2m2 0h1m2 0h2m6 0h1m15 0h1M0 3.5h1m8 0h2m2 0h1m5 0h1m5 0h1m15 0h1m2 0h1m3 0h1m10 0h2m1 0h3m4 0h2m1 0h1m7 0h1m21 0h1m13 0h1m11 0h1m4 0h1m9 0h1m10 0h1m1 0h1m2 0h1m3 0h1m2 0h1m3 0h1m2 0h1m3 0h1m4 0h1m14 0h1m5 0h1m2 0h1m21 0h1m7 0h3m2 0h1M11 4.5h1m2 0h1m1 0h2m1 0h1m3 0h1m33 0h1m5 0h1m5 0h2m9 0h1m3 0h1m1 0h2m16 0h1m4 0h1m3 0h1m10 0h1m1 0h1m6 0h2m2 0h1m1 0h1m10 0h1m9 0h1m19 0h1m6 0h1m3 0h2m15 0h1m11 0h1m8 0h2m2 0h2M10 5.5h1m2 0h1m21 0h1m3 0h1m29 0h1m8 0h1m4 0h2m20 0h1m3 0h1m5 0h1m13 0h1m18 0h1m4 0h1m42 0h1m16 0h1m8 0h1m18 0h1M10 6.5h1m15 0h1m25 0h1m118 0h2m11 0h1m14 0h1m24 0h1M35 7.5h1m18 0h1m14 0h1m19 0h1m15 0h1m8 0h1m5 0h1m11 0h1m10 0h1m8 0h1m7 0h1m19 0h1m7 0h1m25 0h1m2 0h1M18 8.5h1m36 0h1m3 0h1m3 0h1m41 0h1m12 0h1m1 0h1m38 0h1m9 0h1m44 0h1M121 9.5h1m35 0h1m25 0h1M12 10.5h1m11 0h2m3 0h2m90 0h1m23 0h1m5 0h1m6 0h1m39 0h1M15 11.5h1m20 0h1m20 0h1m26 0h1m37 0h1M97 12.5h1m8 0h2m91 0h1m1 0h1M154 13.5h1m49 0h1M54 14.5h1m181 0h3M40 15.5h1m44 0h1"/>
<path stroke="#801f6a" d="M25 0.5h1m8 0h1m2 0h1m7 0h1m4 0h1m1 0h2m24 0h1m1 0h1m5 0h1m24 0h1m2 0h1m2 0h1m7 0h1m1 0h2m6 0h1m9 0h1m13 0h1m13 0h4m1 0h1m12 0h1m1 0h1m2 0h1m20 0h1m10 0h2M1 1.5h1m4 0h1m1 0h2m10 0h1m4 0h1m1 0h1m4 0h2m3 0h1m4 0h1m4 0h1m2 0h1m2 0h1m8 0h1m2 0h1m12 0h1m2 0h1m9 0h1m4 0h1m4 0h2m14 0h1m3 0h1m2 0h2m1 0h2m1 0h2m7 0h1m6 0h1m2 0h1m5 0h1m6 0h1m8 0h1m1 0h1m4 0h1m1 0h1m3 0h2m3 0h1m4 0h1m1 0h2m19 0h2m7 0h1m2 0h1m10 0h1M2 2.5h1m5 0h2m2 0h1m1 0h1m1 0h1m10 0h1m1 0h3m1 0h1m5 0h1m2 0h1m5 0h2m2 0h1m3 0h1m5 0h1m12 0h1m3 0h1m10 0h1m10 0h2m1 0h2m1 0h3m3 0h1m6 0h1m1 0h1m2 0h1m1 0h2m9 0h2m15 0h1m9 0h2m4 0h1m5 0h2m2 0h1m7 0h1m1 0h1m9 0h1m8 0h1m4 0h2m1 0h1m6 0h1m1 0h1m5 0h1M5 3.5h2m4 0h1m8 0h1m7 0h3m1 0h2m2 0h1m1 0h2m9 0h1m7 0h1m7 0h3m3 0h1m15 0h1m4 0h1m5 0h1m11 0h2m6 0h2m2 0h1m4 0h1m4 0h1m4 0h2m10 0h1m18 0h1m18 0h1m2 0h3m3 0h1m7 0h2m6 0h1m6 0h2m9 0h1M0 4.5h1m4 0h1m6 0h1m14 0h2m1 0h1m1 0h2m2 0h1m4 0h2m5 0h1m11 0h1m1 0h1m3 0h1m8 0h1m1 0h1m19 0h1m1 0h1m1 0h1m8 0h1m1 0h1m3 0h1m3 0h1m1 0h1m2 0h1m3 0h2m5 0h1m1 0h1m8 0h1m1 0h1m6 0h2m4 0h2m1 0h1m3 0h1m7 0h1m11 0h1m6 0h1m4 0h2m3 0h1m4 0h1m7 0h1m1 0h1m6 0h1m11 0h1M2 5.5h1m6 0h1m8 0h2m4 0h1m5 0h1m16 0h1m3 0h1m3 0h1m4 0h1m2 0h3m4 0h1m4 0h1m9 0h1m5 0h1m9 0h2m1 0h1m5 0h1m5 0h1m11 0h1m1 0h1m2 0h1m2 0h1m4 0h3m28 0h1m9 0h2m11 0h1m1 0h1m5 0h4m1 0h1m2 0h1m8 0h1m2 0h2m2 0h1m1 0h2m7 0h1M18 6.5h1m3 0h1m68 0h1m5 0h1m43 0h1m8 0h1m49 0h1m12 0h2M13 7.5h1m7 0h2m15 0h1m4 0h1m3 0h2m6 0h1m111 0h1m29 0h1m10 0h1m3 0h1M19 8.5h1m1 0h1m13 0h1m8 0h1m5 0h1m5 0h1m13 0h1m48 0h1m12 0h1m12 0h1m6 0h2m28 0h2m28 0h1m19 0h2M82 9.5h1m2 0h1m7 0h1m3 0h1m9 0h1m27 0h1m9 0h2m4 0h2m22 0h1m31 0h1m11 0h1M81 10.5h1m7 0h1m81 0h1m50 0h1m14 0h1M46 11.5h1m36 0h1m17 0h1m15 0h1m33 0h1m34 0h1m36 0h1M10 12.5h1m52 0h1m6 0h1m48 0h1m21 0h1m33 0h1m20 0h1m15 0h1m3 0h1M64 13.5h1m32 0h1m18 0h1m22 0h1m63 0h1m19 0h1M40 14.5h1m132 0h1m12 0h1M57 15.5h1m165 0h1M12 16.5h1m14 0h1m36 0h1m59 0h1m48 0h1m12 0h1M152 17.5h1"/>
<path stroke="#8e2468" d="M1 0.5h4m9 0h2m26 0h1m3 0h1m9 0h1m4 0h1m6 0h1m10 0h1m20 0h1m71 0h1m36 0h1m16 0h1m4 0h1m2 0h1M2 1.5h2m11 0h1m15 0h1m2 0h1m11 0h1m2 0h1m6 0h1m3 0h1m13 0h1m13 0h1m1 0h1m2 0h1m41 0h1m8 0h1m2 0h1m13 0h1m10 0h1m61 0h1M1 2.5h1m1 0h2m1 0h2m7 0h1m8 0h2m10 0h1m10 0h1m2 0h1m10 0h1m11 0h2m6 0h1m11 0h1m2 0h1m6 0h1m13 0h1m3 0h1m1 0h2m5 0h2m15 0h1m24 0h1m2 0h2m7 0h3m3 0h1m2 0h1m19 0h1m3 0h1m8 0h1M3 3.5h1m4 0h1m18 0h1m14 0h1m2 0h3m2 0h1m1 0h1m5 0h1m2 0h1m12 0h2m14 0h1m9 0h2m1 0h7m14 0h1m9 0h2m3 0h1m5 0h1m12 0h1m8 0h1m1 0h1m15 0h1m7 0h1m1 0h1m5 0h1m6 0h1m1 0h2m1 0h1m1 0h1m1 0h2m2 0h1m7 0h1m4 0h1M3 4.5h1m2 0h1m1 0h1m6 0h1m8 0h1m4 0h1m1 0h1m5 0h1m8 0h2m1 0h1m6 0h1m1 0h1m2 0h1m16 0h1m4 0h1m4 0h1m1 0h3m3 0h1m14 0h1m2 0h1m6 0h1m1 0h1m3 0h2m2 0h1m3 0h1m22 0h2m4 0h1m3 0h1m3 0h1m5 0h1m6 0h2m6 0h1m1 0h1m14 0h1m5 0h1m1 0h1m13 0h1M0 5.5h1m2 0h1m1 0h1m2 0h1m2 0h1m14 0h3m2 0h1m5 0h1m4 0h1m1 0h1m17 0h1m24 0h1m4 0h1m2 0h1m1 0h1m2 0h1m7 0h1m9 0h3m19 0h1m9 0h1m3 0h1m1 0h2m8 0h1m2 0h2m2 0h1m3 0h1m1 0h1m1 0h1m4 0h2m4 0h2m25 0h1m8 0h1m8 0h1M17 6.5h1m20 0h1m1 0h1m10 0h1m3 0h1m2 0h1m8 0h1m30 0h1m9 0h1m6 0h1m2 0h1m21 0h1m42 0h1m14 0h1m6 0h1m25 0h1M14 7.5h1m2 0h1m5 0h1m2 0h2m16 0h1m22 0h1m45 0h1m1 0h1m5 0h1m18 0h3m5 0h1m5 0h1m2 0h1m12 0h1m12 0h1m1 0h1m6 0h1m3 0h1m19 0h1m10 0h1m8 0h1M40 8.5h1m2 0h1m10 0h1m5 0h1m3 0h1m4 0h1m11 0h1m27 0h1m14 0h1m4 0h1m21 0h1m8 0h1m7 0h1m3 0h1m2 0h1m14 0h1m7 0h1m4 0h1m15 0h2M16 9.5h1m70 0h1m6 0h1m27 0h2m1 0h2m29 0h1m25 0h1m15 0h1m10 0h1M51 10.5h2m29 0h1m25 0h1m13 0h1m14 0h1m28 0h1m1 0h2m7 0h1m29 0h1M22 11.5h1m12 0h1m31 0h1m6 0h1m41 0h1m35 0h1m11 0h1m1 0h1m15 0h1m34 0h1m6 0h1m13 0h1M18 12.5h1m35 0h2m13 0h1m6 0h1m12 0h1m57 0h1m6 0h1m52 0h1m30 0h1M31 13.5h1m3 0h1m11 0h1m7 0h1m40 0h1m1 0h1m16 0h1m24 0h1m34 0h1M53 14.5h1m20 0h2m141 0h1m11 0h1m5 0h1M41 15.5h1m33 0h2M11 16.5h1m7 0h1m6 0h1m27 0h1m114 0h1m46 0h1m10 0h1M9 17.5h1m8 0h1m86 0h1M126 18.5h1m56 0h1m17 0h1M22 37.5h1m128 0h1m48 0h1M38 38.5h1m2 0h1m13 0h1m43 0h1m6 0h1M3 40.5h2m101 0h1m7 0h1m45 0h1m12 0h1m54 0h1M51 41.5h1m15 0h1m84 0h1M200 45.5h1m3 0h1M44 46.5h1M22 47.5h1m117 0h1M43 49.5h2m20 0h1m90 0h1m6 0h1m31 0h2m9 0h1m13 0h1M69 50.5h1m125 0h1M13 51.5h1m143 0h1M212 52.5h1M40 54.5h1m17 0h1m105 0h1M141 55.5h1M58 56.5h1m3 0h1m107 0h1m29 0h1m29 0h1M199 58.5h1m14 0h1m8 0h1"/>
<path stroke="#9b2963" d="M26 0.5h1m74 0h1m123 0h1M26 1.5h1m34 0h1m11 0h1m5 0h1m14 0h1m95 0h2m39 0h1M26 2.5h1m7 0h1m2 0h1m7 0h2m21 0h1m19 0h1m25 0h1m20 0h1m8 0h3m11 0h2m20 0h1m28 0h1m24 0h1M1 3.5h1m2 0h1m2 0h1m4 0h1m1 0h2m10 0h1m4 0h1m5 0h1m15 0h1m2 0h1m16 0h1m3 0h1m1 0h1m1 0h1m4 0h1m4 0h1m25 0h1m5 0h1m22 0h2m7 0h1m6 0h1m8 0h1m4 0h1m9 0h1m38 0h1m6 0h2M2 4.5h1m1 0h1m2 0h1m1 0h1m10 0h1m4 0h1m8 0h1m15 0h1m17 0h1m4 0h2m4 0h1m1 0h2m15 0h1m18 0h1m28 0h1m8 0h1m5 0h1m14 0h1m13 0h1m18 0h1m15 0h2M12 5.5h1m1 0h1m1 0h1m3 0h1m4 0h1m3 0h1m2 0h1m3 0h1m11 0h1m7 0h1m4 0h1m10 0h1m1 0h1m5 0h1m1 0h1m7 0h1m12 0h1m3 0h1m4 0h1m9 0h2m11 0h1m1 0h1m1 0h1m6 0h1m16 0h1m1 0h1m2 0h1m2 0h1m8 0h1m4 0h1m2 0h1m21 0h1m5 0h1m9 0h1m9 0h1m3 0h1M0 6.5h1m4 0h1m7 0h1m5 0h1m3 0h1m4 0h1m6 0h1m5 0h3m10 0h1m14 0h1m6 0h1m6 0h1m2 0h1m32 0h1m8 0h1m3 0h2m4 0h2m2 0h1m4 0h2m4 0h1m2 0h1m11 0h1m4 0h1m8 0h1m20 0h1m4 0h1m13 0h2m2 0h1m2 0h1m6 0h1m2 0h1M3 7.5h1m6 0h3m6 0h1m8 0h1m4 0h1m5 0h2m16 0h1m12 0h1m14 0h1m10 0h2m21 0h1m2 0h1m10 0h1m2 0h1m14 0h1m10 0h2m2 0h1m10 0h1m1 0h1m9 0h1m1 0h1m7 0h2m2 0h4m4 0h1m8 0h1m5 0h1m1 0h1m10 0h2M15 8.5h1m25 0h1m3 0h1m11 0h1m3 0h2m32 0h3m8 0h1m1 0h1m4 0h1m9 0h1m2 0h1m6 0h1m14 0h1m1 0h1m46 0h1m1 0h2m3 0h2m4 0h1m2 0h1m8 0h2m5 0h1m9 0h1M18 9.5h1m3 0h1m21 0h1m27 0h2m3 0h1m8 0h1m8 0h1m9 0h1m14 0h1m22 0h2m3 0h1m20 0h3m15 0h1m12 0h1m2 0h1m20 0h1m11 0h1m4 0h1M0 10.5h1m21 0h1m5 0h1m20 0h1m5 0h1m1 0h1m3 0h1m1 0h1m43 0h1m23 0h1m21 0h1m2 0h1m10 0h1m32 0h1m5 0h1m12 0h1m1 0h1M4 11.5h1m16 0h1m19 0h1m6 0h1m9 0h1m4 0h1m17 0h2m6 0h2m4 0h1m25 0h1m14 0h1m33 0h1m2 0h1m24 0h1m38 0h1M31 12.5h1m30 0h1m4 0h2m2 0h1m46 0h1m1 0h1m1 0h1m30 0h1m2 0h1m17 0h1m6 0h3m4 0h1m14 0h1m4 0h1m11 0h1m16 0h1M30 13.5h1m51 0h2m98 0h1m23 0h1m15 0h1m5 0h1M55 14.5h1m92 0h1m79 0h1m1 0h1M0 15.5h1m34 0h1m27 0h1m50 0h1m31 0h1m48 0h1m1 0h1m22 0h1M18 16.5h1m53 0h1m48 0h1m95 0h1M223 17.5h1M1 18.5h1m16 0h1m21 0h1m15 0h1m37 0h1m30 0h1m20 0h1M87 19.5h1m36 0h1m64 0h1m20 0h1M69 22.5h1M63 24.5h1m12 0h1m89 0h1m30 0h1M13 25.5h1m129 0h1m70 0h1M43 26.5h1m41 0h1M16 27.5h1m37 0h2m142 0h2m22 0h1M58 28.5h1m38 0h1m28 0h1m12 0h1m45 0h1m4 0h1m18 0h1M16 29.5h1m34 0h1m166 0h1M0 30.5h1m21 0h1m64 0h1m87 0h2m49 0h1M27 31.5h1m26 0h1m67 0h1m3 0h1m85 0h1M0 32.5h1m4 0h1m7 0h1m133 0h1m14 0h1m20 0h1m20 0h1M41 35.5h1m5 0h1m3 0h2m69 0h1m19 0h1m2 0h1m41 0h1M2 36.5h1m106 0h1m35 0h1m24 0h1m17 0h1m30 0h1m9 0h2M29 37.5h1m56 0h1m86 0h1m36 0h2m5 0h1M22 38.5h1m14 0h1m21 0h2m35 0h1m1 0h1m79 0h1M83 39.5h1m5 0h1m46 0h1m18 0h1m53 0h1M212 40.5h1M47 41.5h1m12 0h2m27 0h1m12 0h1m73 0h1m20 0h1m21 0h2M151 42.5h1M28 45.5h1m3 0h1m61 0h1m38 0h1m54 0h1m8 0h1m3 0h1m18 0h1m20 0h1M14 46.5h2m41 0h1m58 0h2m15 0h2m23 0h1m49 0h2m14 0h1m1 0h1m7 0h2M149 47.5h1m5 0h1m23 0h1m48 0h1m7 0h2M2 48.5h1m46 0h2m57 0h1m26 0h1m1 0h1m37 0h1M25 49.5h1m2 0h1m96 0h1m11 0h1m8 0h1m60 0h1M45 50.5h1m7 0h1m49 0h1m98 0h1m26 0h1m3 0h2M42 51.5h1m1 0h1m86 0h1m2 0h1m10 0h2m7 0h1m3 0h2m37 0h1M14 52.5h1m123 0h1M115 53.5h1M2 54.5h2m5 0h2m13 0h1m32 0h1m15 0h1m51 0h2m4 0h1m16 0h2m15 0h1m63 0h1m7 0h1m2 0h1M37 55.5h1m19 0h2m17 0h1m44 0h2m8 0h1m49 0h1m3 0h1m10 0h2M64 56.5h1m12 0h1m139 0h1m13 0h1M80 57.5h1m16 0h1m141 0h1M62 58.5h1m29 0h1m85 0h2m2 0h1m1 0h1m27 0h1m20 0h1m5 0h2M8 59.5h1m134 0h1m35 0h1m27 0h1M32 66.5h1m4 0h2m25 0h1m31 0h1m22 0h1m16 0h2m24 0h1m29 0h2m9 0h1M38 69.5h1M71 70.5h1m110 0h2M45 71.5h1m82 0h1m4 0h2m20 0h1m26 0h1m7 0h1m7 0h1M66 72.5h1m28 0h1m32 0h2m30 0h1M5 74.5h1m37 0h1m1 0h1m53 0h1m8 0h1m15 0h2m27 0h1m11 0h1m5 0h1M198 75.5h1M67 76.5h1M21 99.5h1"/>
<path stroke="#a82f5d" d="M88 0.5h1m55 0h1m49 0h1m32 0h1M174 1.5h1m52 0h1M34 3.5h1m33 0h1m9 0h1m9 0h1m5 0h1m35 0h1m30 0h1m10 0h1m36 0h1m16 0h2M1 4.5h1m24 0h1m67 0h1m5 0h1m43 0h2m28 0h2m39 0h1m1 0h1m13 0h1M1 5.5h1m13 0h1m1 0h1m15 0h1m11 0h2m2 0h2m20 0h1m9 0h1m11 0h2m1 0h1m1 0h1m15 0h1m2 0h1m13 0h1m6 0h1m6 0h1m3 0h1m5 0h1m2 0h2m2 0h1m1 0h1m2 0h1m8 0h1m1 0h1m5 0h1m4 0h1m1 0h1m2 0h1m6 0h1m7 0h1m5 0h1m2 0h1m2 0h1m10 0h2M2 6.5h3m6 0h1m8 0h1m6 0h1m1 0h1m3 0h1m25 0h1m5 0h2m3 0h1m4 0h1m2 0h1m3 0h1m1 0h1m2 0h1m4 0h1m9 0h2m5 0h1m4 0h1m11 0h1m2 0h1m13 0h1m2 0h1m2 0h1m7 0h1m2 0h1m8 0h2m6 0h1m1 0h1m5 0h1m1 0h2m3 0h1m2 0h1m15 0h2m6 0h2m7 0h1m1 0h1m6 0h1m2 0h1M0 7.5h1m4 0h1m10 0h1m15 0h1m8 0h1m8 0h1m1 0h1m3 0h1m2 0h1m2 0h3m7 0h1m3 0h1m4 0h1m5 0h1m2 0h2m6 0h2m6 0h1m2 0h1m6 0h1m6 0h2m1 0h1m1 0h1m8 0h1m1 0h1m7 0h1m13 0h1m2 0h1m6 0h3m10 0h1m5 0h1m10 0h1m8 0h1m14 0h1m3 0h1m7 0h2M5 8.5h2m2 0h2m2 0h1m18 0h2m31 0h1m5 0h1m2 0h1m1 0h1m8 0h1m1 0h1m3 0h2m6 0h1m3 0h1m3 0h1m14 0h1m12 0h2m1 0h1m1 0h4m5 0h1m23 0h1m2 0h1m2 0h1m1 0h1m2 0h1m10 0h1m10 0h2m1 0h1m1 0h1m6 0h1m11 0h1m4 0h2m1 0h1m2 0h1M21 9.5h1m13 0h1m7 0h1m7 0h1m3 0h1m5 0h1m1 0h1m1 0h2m2 0h1m6 0h1m14 0h1m6 0h1m10 0h1m3 0h1m10 0h1m9 0h1m7 0h1m58 0h1m6 0h1m5 0h1m7 0h1m5 0h1M13 10.5h1m4 0h1m2 0h1m16 0h1m1 0h1m2 0h1m10 0h1m3 0h1m5 0h1m11 0h1m3 0h1m5 0h1m25 0h1m7 0h1m5 0h1m1 0h1m3 0h1m3 0h1m1 0h1m9 0h1m32 0h3m2 0h2m3 0h1m12 0h2m6 0h1m1 0h1m1 0h1m3 0h1m2 0h2m8 0h1m1 0h1m3 0h1M12 11.5h1m3 0h1m6 0h1m3 0h2m13 0h2m10 0h1m5 0h1m1 0h1m1 0h1m3 0h2m2 0h1m7 0h1m5 0h1m4 0h1m5 0h1m29 0h1m12 0h1m2 0h1m4 0h1m4 0h1m11 0h1m2 0h1m3 0h1m7 0h2m3 0h1m1 0h1m11 0h1m2 0h1m11 0h1m5 0h1m1 0h1m10 0h1m6 0h1M2 12.5h1m6 0h1m1 0h1m4 0h1m15 0h2m1 0h1m20 0h2m26 0h1m5 0h1m18 0h1m15 0h2m13 0h1m9 0h1m1 0h1m7 0h1m2 0h1m9 0h1m5 0h1m15 0h1m2 0h1m3 0h1m8 0h1m3 0h1m8 0h1m11 0h1m2 0h1m1 0h1M5 13.5h1m3 0h1m11 0h2m11 0h1m13 0h1m14 0h1m25 0h1m5 0h1m7 0h1m18 0h1m10 0h1m7 0h1m11 0h1m29 0h2m15 0h1m11 0h1m5 0h1m22 0h1M13 14.5h2m6 0h1m1 0h1m2 0h1m20 0h1m55 0h1m38 0h1m26 0h1m4 0h1m7 0h1m4 0h1m30 0h1m1 0h1M39 15.5h1m16 0h1m85 0h1m4 0h1m3 0h2m69 0h1m1 0h1m11 0h2M6 16.5h1m2 0h1m6 0h1m15 0h1m6 0h1m8 0h1m39 0h1m33 0h1m6 0h1m3 0h1m47 0h1m22 0h1m2 0h1m7 0h1m10 0h1M51 17.5h1m6 0h1m9 0h1m8 0h1m120 0h1M81 18.5h1m9 0h1m3 0h1m13 0h1m14 0h1m4 0h1m15 0h1m3 0h1M31 19.5h1m43 0h1m12 0h1m36 0h1m48 0h1M52 20.5h1m17 0h1m1 0h1m150 0h1M40 21.5h1M51 22.5h1m85 0h1m18 0h1m22 0h1m10 0h1m32 0h1m1 0h1m6 0h1M0 23.5h1m106 0h1m16 0h1M19 24.5h1m44 0h1m68 0h1m6 0h2m2 0h1m14 0h1m66 0h1M45 25.5h2m18 0h2m12 0h1m19 0h1m2 0h1m54 0h2M44 26.5h2m30 0h1m17 0h1m1 0h1m28 0h1m20 0h1m36 0h1m48 0h1M10 27.5h1m19 0h2m17 0h1m31 0h1m21 0h1m76 0h1m12 0h1m27 0h1M0 28.5h1m68 0h1m43 0h2M1 29.5h1m13 0h1m36 0h1m36 0h2m148 0h1M1 30.5h1m53 0h1m67 0h1M14 31.5h2m95 0h1m13 0h1m25 0h1m31 0h1m10 0h1m18 0h1M6 32.5h1m22 0h1m5 0h1m191 0h1M64 35.5h1m75 0h1m51 0h2M103 36.5h1m137 0h1M48 37.5h1m60 0h1m69 0h1m36 0h1m19 0h1M83 38.5h1m13 0h1m3 0h1m100 0h1M2 39.5h1m111 0h1m39 0h1m47 0h1M118 40.5h1m22 0h1m28 0h1m40 0h1M23 41.5h1m26 0h1m62 0h1M15 42.5h1m66 0h2m7 0h2m3 0h1m12 0h1m40 0h1m13 0h1m54 0h1M5 43.5h1m42 0h1m77 0h1m16 0h1M22 44.5h2m198 0h1M16 45.5h1m2 0h1m86 0h1m121 0h1M39 46.5h1m5 0h1m46 0h1m30 0h1M125 47.5h1m79 0h2M54 48.5h1m139 0h2M38 49.5h1m15 0h1m37 0h1m16 0h1m16 0h1m24 0h1m27 0h1m14 0h1M38 50.5h1m4 0h1m2 0h1m105 0h1m27 0h1m19 0h1M4 51.5h1m28 0h1m131 0h1M8 52.5h2m51 0h1m121 0h1M61 53.5h1m32 0h1m19 0h1m18 0h1m12 0h1m14 0h1m21 0h1m28 0h1m14 0h1M88 54.5h1m43 0h1m49 0h1m58 0h1M53 55.5h1m63 0h1m22 0h1M59 56.5h1m1 0h1m88 0h1m48 0h1M9 57.5h1m92 0h1m106 0h1M8 58.5h1m87 0h1m28 0h1m69 0h1m2 0h1m23 0h1m11 0h1M119 59.5h1m82 0h1M21 62.5h1m21 0h1M21 63.5h1m65 0h1m23 0h1m13 0h2m14 0h1m10 0h1m28 0h1m25 0h1M22 64.5h1m67 0h1m19 0h1m51 0h2M26 65.5h2m8 0h1m64 0h1m45 0h1m4 0h1m5 0h2m25 0h3m24 0h1M31 66.5h1m11 0h1m119 0h1m31 0h1m40 0h1M5 69.5h2m93 0h1m7 0h1m41 0h1m10 0h1m2 0h1m24 0h1m9 0h1m39 0h1M5 70.5h1m42 0h2m74 0h1m29 0h1m20 0h1m17 0h2m34 0h1M0 71.5h1m182 0h1M3 72.5h1m58 0h1m28 0h1m18 0h2m105 0h2m10 0h1m1 0h2M46 73.5h1m13 0h1m11 0h1m13 0h1m13 0h2m9 0h1m105 0h2m7 0h1M24 74.5h1m19 0h1m127 0h1m53 0h1M7 75.5h1m8 0h1m9 0h1m65 0h1m30 0h1m12 0h1m38 0h1m2 0h1m49 0h1M9 76.5h1m56 0h1m28 0h1m21 0h1m102 0h1M18 77.5h1m89 0h1m57 0h1m31 0h1m24 0h1M18 78.5h1m19 0h1M4 98.5h1m93 0h2m8 0h1m103 0h1m4 0h1m6 0h2m9 0h1m5 0h1M3 99.5h2m36 0h1m69 0h1m47 0h1m26 0h2m1 0h1m17 0h1m31 0h1"/>
<path stroke="#b53457" d="M174 2.5h1m19 0h1M93 3.5h1m37 0h1m12 0h1m30 0h1m26 0h1m28 0h1M93 4.5h1m100 0h1m32 0h1M6 5.5h2m26 0h1m33 0h1m4 0h1m5 0h1m6 0h1m24 0h1m9 0h1m22 0h1m16 0h1m13 0h1m14 0h1m11 0h1m14 0h1m7 0h1m5 0h1m2 0h2M12 6.5h1m3 0h1m8 0h1m11 0h1m6 0h1m3 0h1m4 0h1m8 0h1m9 0h1m1 0h1m2 0h1m11 0h2m4 0h1m4 0h1m3 0h1m5 0h1m5 0h1m6 0h3m1 0h1m6 0h1m19 0h2m7 0h1m2 0h2m8 0h1m4 0h1m4 0h1m6 0h1m3 0h1m3 0h1m2 0h1m5 0h1m5 0h3m6 0h1m1 0h1m4 0h1m5 0h1M1 7.5h1m2 0h1m3 0h2m5 0h1m4 0h1m4 0h1m8 0h1m1 0h1m9 0h1m2 0h1m8 0h1m1 0h1m10 0h1m3 0h1m4 0h1m1 0h1m3 0h1m5 0h1m8 0h2m5 0h1m2 0h2m5 0h1m6 0h1m1 0h1m3 0h1m2 0h1m3 0h1m5 0h2m4 0h1m4 0h1m9 0h1m10 0h1m9 0h2m5 0h1m15 0h1m5 0h1m5 0h1m8 0h1m1 0h2m1 0h1M2 8.5h2m7 0h1m8 0h1m6 0h1m10 0h2m2 0h1m3 0h3m3 0h1m5 0h1m8 0h1m4 0h1m2 0h1m2 0h1m3 0h1m3 0h1m1 0h1m9 0h1m12 0h2m8 0h1m3 0h1m8 0h1m2 0h1m1 0h1m16 0h3m3 0h3m2 0h1m12 0h1m4 0h2m1 0h1m2 0h1m4 0h1m4 0h1m14 0h2m7 0h1m5 0h1m2 0h1m2 0h1m2 0h1M5 9.5h2m6 0h1m3 0h1m1 0h1m3 0h1m6 0h1m2 0h2m3 0h1m1 0h1m11 0h1m1 0h1m7 0h1m1 0h1m2 0h1m28 0h1m2 0h1m4 0h1m7 0h1m6 0h1m9 0h1m6 0h2m3 0h1m5 0h1m2 0h1m7 0h1m7 0h1m1 0h1m3 0h1m3 0h1m4 0h1m4 0h1m19 0h1m5 0h1m2 0h1m7 0h1M4 10.5h1m6 0h1m20 0h2m1 0h1m3 0h1m8 0h1m4 0h1m5 0h1m2 0h1m6 0h1m17 0h1m4 0h1m2 0h1m1 0h3m10 0h1m8 0h1m4 0h2m3 0h1m5 0h1m3 0h1m1 0h1m1 0h1m11 0h1m8 0h2m9 0h2m7 0h1m7 0h1m4 0h1m5 0h1m4 0h1m9 0h1m9 0h1m1 0h1m7 0h1M0 11.5h1m4 0h1m7 0h1m4 0h2m4 0h1m15 0h1m6 0h1m4 0h1m2 0h1m3 0h1m1 0h1m13 0h2m10 0h1m4 0h1m6 0h1m4 0h1m4 0h1m8 0h3m5 0h1m10 0h1m1 0h1m1 0h1m7 0h1m4 0h1m1 0h2m9 0h1m1 0h1m9 0h1m9 0h1m6 0h2m2 0h1m2 0h1m1 0h1m1 0h1m7 0h1m16 0h1m3 0h1M0 12.5h1m14 0h1m1 0h1m1 0h1m2 0h1m3 0h1m3 0h1m5 0h1m1 0h4m1 0h1m7 0h1m12 0h1m20 0h1m24 0h1m2 0h1m9 0h1m8 0h1m15 0h1m2 0h1m28 0h1m3 0h1m4 0h1m2 0h1m4 0h1m6 0h2m16 0h1m2 0h1m2 0h1m1 0h1m4 0h1M6 13.5h1m3 0h1m21 0h1m3 0h1m17 0h1m24 0h1m19 0h1m10 0h1m2 0h1m15 0h1m12 0h1m8 0h2m21 0h1m1 0h1m47 0h1m2 0h1m12 0h1M0 14.5h1m15 0h1m5 0h1m6 0h1m2 0h2m1 0h1m5 0h3m25 0h1m2 0h1m3 0h1m8 0h1m33 0h1m13 0h2m6 0h1m10 0h1m3 0h2m2 0h1m4 0h1m4 0h1m35 0h1m1 0h1m30 0h1M16 15.5h1m5 0h1m13 0h1m78 0h1m25 0h1m6 0h1m13 0h2m5 0h1m5 0h1m29 0h1m4 0h2M10 16.5h1m6 0h1m6 0h1m24 0h1m19 0h1m39 0h1m46 0h1m15 0h1m10 0h1m5 0h1m1 0h1m43 0h1m1 0h1m1 0h1M56 17.5h2m6 0h1m2 0h1m1 0h1m6 0h1m18 0h1m122 0h1m5 0h2m12 0h1M19 18.5h1m21 0h1m54 0h1m35 0h1m15 0h1m50 0h1m34 0h1M17 19.5h1m122 0h1m19 0h1m14 0h1m39 0h1M6 20.5h1m66 0h2m51 0h1m86 0h1m24 0h1M27 21.5h1m19 0h1m12 0h2m59 0h1m48 0h1M98 22.5h1m27 0h1m30 0h1m31 0h1m13 0h1m22 0h1M3 23.5h1m64 0h1m47 0h3m4 0h1m37 0h1m44 0h1M18 24.5h1m10 0h1m6 0h1m31 0h1m18 0h1m37 0h1m32 0h1M3 25.5h1m17 0h1m1 0h1m105 0h1m14 0h1m72 0h1M97 26.5h1m20 0h2m9 0h1M0 27.5h2m19 0h1m159 0h1m51 0h1M46 28.5h1m4 0h1m7 0h1m109 0h1m55 0h1M0 29.5h1m189 0h1M21 30.5h1m24 0h1m25 0h1m9 0h1m121 0h1m34 0h1M28 31.5h1m26 0h1m45 0h1m10 0h1M25 32.5h1m28 0h2m73 0h1m106 0h1M40 35.5h1m7 0h1m14 0h1m103 0h2m36 0h1M45 36.5h1m28 0h1m33 0h1m60 0h1m19 0h1m10 0h2M49 37.5h1m8 0h1m25 0h1m2 0h1m64 0h1m61 0h1m10 0h1M28 38.5h1m25 0h1m32 0h1m12 0h1m18 0h1m37 0h1m70 0h1M11 39.5h1m60 0h1m15 0h1m8 0h1M14 40.5h1m16 0h1m3 0h2m1 0h2m18 0h1m21 0h1m32 0h1m55 0h1m4 0h1m9 0h1m20 0h1m13 0h1m4 0h1M10 41.5h2m56 0h1m3 0h1m18 0h2m58 0h1m20 0h1m25 0h1M152 42.5h1M157 43.5h1M68 44.5h1m4 0h1m18 0h3m49 0h2m95 0h1M6 45.5h1m26 0h1m29 0h2m14 0h2m26 0h1m26 0h1m54 0h1m6 0h1M16 46.5h1m4 0h1m18 0h1m125 0h1m11 0h1m4 0h1m16 0h2m23 0h1m1 0h1M21 47.5h1m1 0h1m17 0h1m27 0h1m30 0h1m30 0h1m7 0h1m14 0h1m45 0h1m34 0h1M70 48.5h1m38 0h1m37 0h1m23 0h1m29 0h1m3 0h2m34 0h1M86 49.5h1m27 0h1m3 0h1m20 0h1m7 0h1m16 0h2m5 0h1m21 0h1M37 50.5h1m6 0h1m9 0h1m100 0h2m2 0h1m19 0h1m35 0h1M39 51.5h1m3 0h1m15 0h2m23 0h1m10 0h1m4 0h1m34 0h1m33 0h1m9 0h1m18 0h1M13 52.5h1m69 0h1m102 0h1m37 0h1M178 53.5h1m51 0h1m10 0h1M89 54.5h1m5 0h1m17 0h1m38 0h1m10 0h1m17 0h1m14 0h1M170 55.5h2M15 56.5h1m34 0h1m4 0h2m6 0h1m3 0h1m12 0h1m29 0h1m37 0h1m22 0h1m19 0h1m36 0h1M7 57.5h1m61 0h1m11 0h1m12 0h1m23 0h1m33 0h1M56 58.5h1m3 0h2m9 0h1m52 0h1m21 0h1m6 0h1m42 0h1m8 0h1m10 0h1m4 0h1m2 0h1m7 0h1M48 59.5h1m97 0h1m19 0h1M13 60.5h1m19 0h1m14 0h1m33 0h1m35 0h1m119 0h1M89 61.5h1m20 0h1m59 0h1m10 0h1m16 0h2M19 62.5h1m22 0h1m13 0h1m55 0h1m2 0h1m116 0h1M22 63.5h1m130 0h1m6 0h1M14 64.5h1m65 0h1M33 65.5h1m5 0h1m153 0h1m7 0h1M80 66.5h1m16 0h1m48 0h1m5 0h1m17 0h1m31 0h1M70 69.5h1m59 0h1m69 0h1m11 0h1M70 70.5h1m119 0h1m21 0h1M83 71.5h1m18 0h1m21 0h1m17 0h1m26 0h1m19 0h1m7 0h1M5 72.5h1m3 0h1m11 0h1m48 0h1m82 0h1m13 0h1m14 0h1m20 0h2M35 73.5h1m44 0h1M20 74.5h1m14 0h1m71 0h1m8 0h1m29 0h1m17 0h1m5 0h1M91 75.5h1m17 0h1m17 0h1m25 0h1m14 0h1m10 0h1M49 76.5h1m12 0h1m24 0h1m9 0h2m26 0h1M19 77.5h1m17 0h1m7 0h1m6 0h1m1 0h1m52 0h1m59 0h1m63 0h1M3 78.5h1m15 0h2m26 0h1m63 0h1m2 0h1m17 0h1M67 79.5h2m15 0h1m17 0h1m18 0h1m57 0h1m9 0h3m4 0h1M5 97.5h1m18 0h1m10 0h1m29 0h1m3 0h1m10 0h1m4 0h1m13 0h1m32 0h2m19 0h1m21 0h1M3 98.5h1m38 0h1m8 0h1m22 0h1m38 0h1m49 0h1m62 0h1M2 99.5h1m48 0h1m122 0h1m33 0h1m10 0h1m3 0h2"/>
<path stroke="#c13b50" d="M174 3.5h1m19 0h1M88 5.5h1m85 0h1M1 6.5h1m4 0h1m2 0h1m5 0h1m14 0h1m1 0h1m3 0h1m8 0h1m1 0h1m1 0h1m6 0h1m6 0h2m6 0h1m8 0h2m23 0h3m5 0h1m6 0h1m1 0h1m39 0h1m1 0h2m14 0h1m10 0h1m4 0h1m5 0h1m12 0h1m19 0h1M6 7.5h2m16 0h1m4 0h2m11 0h1m2 0h1m7 0h1m7 0h1m6 0h1m4 0h2m2 0h2m4 0h2m9 0h1m5 0h1m6 0h1m38 0h1m2 0h1m8 0h1m19 0h1m55 0h1M0 8.5h1m6 0h2m3 0h1m1 0h1m9 0h1m3 0h1m1 0h1m18 0h1m3 0h1m12 0h1m1 0h1m4 0h1m6 0h1m2 0h2m8 0h1m8 0h1m13 0h1m11 0h1m17 0h2m7 0h1m10 0h1m10 0h1m14 0h2m8 0h1m5 0h1m12 0h1m6 0h1M0 9.5h1m9 0h2m15 0h1m4 0h1m3 0h1m2 0h1m8 0h3m2 0h1m3 0h1m1 0h2m9 0h2m2 0h1m5 0h2m1 0h2m3 0h2m12 0h1m5 0h1m1 0h1m16 0h2m3 0h2m5 0h2m12 0h1m6 0h1m3 0h2m7 0h2m9 0h1m3 0h2m5 0h1m1 0h1m6 0h1m5 0h1m2 0h1m2 0h1m1 0h1m1 0h1m8 0h1m2 0h1m2 0h1m1 0h1m1 0h2M3 10.5h1m1 0h1m4 0h1m6 0h1m1 0h1m6 0h2m8 0h1m5 0h1m1 0h1m5 0h1m5 0h1m3 0h1m6 0h1m2 0h1m4 0h1m8 0h1m17 0h1m8 0h1m1 0h1m1 0h1m2 0h1m8 0h1m6 0h1m5 0h1m1 0h1m7 0h1m3 0h1m5 0h1m2 0h1m9 0h1m5 0h1m5 0h1m7 0h1m1 0h2m12 0h1m5 0h1m13 0h1m2 0h1m1 0h1m6 0h1M3 11.5h1m7 0h1m2 0h1m2 0h1m2 0h1m11 0h3m2 0h3m4 0h1m5 0h1m2 0h1m2 0h1m13 0h2m16 0h1m5 0h1m3 0h1m1 0h1m1 0h1m2 0h1m2 0h1m1 0h1m12 0h2m3 0h2m4 0h1m3 0h1m3 0h1m2 0h1m1 0h1m15 0h1m13 0h1m6 0h1m3 0h1m1 0h3m2 0h1m8 0h1m1 0h1m1 0h1m1 0h4m5 0h1m15 0h1M3 12.5h1m2 0h3m4 0h1m7 0h1m1 0h1m3 0h1m16 0h1m21 0h1m5 0h1m4 0h1m2 0h1m2 0h1m11 0h1m2 0h2m4 0h2m6 0h1m1 0h3m7 0h1m2 0h1m1 0h3m2 0h1m1 0h1m2 0h1m2 0h1m3 0h1m2 0h1m5 0h1m1 0h1m12 0h1m5 0h1m1 0h1m6 0h1m1 0h1m3 0h1m1 0h1m12 0h1m7 0h1m2 0h2m4 0h1m16 0h1M2 13.5h2m3 0h1m15 0h2m13 0h1m1 0h1m2 0h1m18 0h1m2 0h3m1 0h1m8 0h1m1 0h1m3 0h2m1 0h1m4 0h2m10 0h1m13 0h2m1 0h1m4 0h1m7 0h1m13 0h1m1 0h1m21 0h1m6 0h1m5 0h1m1 0h1m11 0h1m2 0h1m8 0h1m1 0h2m4 0h1m9 0h1m6 0h2m1 0h1M9 14.5h1m18 0h1m8 0h2m9 0h1m24 0h1m12 0h1m15 0h1m1 0h1m7 0h1m14 0h2m10 0h2m27 0h1m6 0h1m7 0h1m1 0h1m2 0h1m9 0h2m13 0h1m2 0h1m2 0h1m1 0h2m1 0h1M1 15.5h1m10 0h2m4 0h2m1 0h1m26 0h1m5 0h1m9 0h1m19 0h1m1 0h1m4 0h1m5 0h1m12 0h1m22 0h1m6 0h1m2 0h1m5 0h1m6 0h1m3 0h1m18 0h1m4 0h1m7 0h1m3 0h1m1 0h1m18 0h1m10 0h1m12 0h1M0 16.5h1m19 0h1m2 0h1m14 0h1m1 0h1m22 0h1m1 0h1m7 0h1m10 0h1m4 0h1m1 0h1m5 0h2m7 0h1m6 0h1m9 0h1m16 0h1m1 0h1m2 0h1m9 0h1m3 0h1m7 0h1m6 0h1m7 0h1m1 0h1m5 0h1m3 0h3m8 0h2m3 0h1m7 0h1m3 0h1m13 0h1m1 0h1M23 17.5h1m11 0h2m22 0h1m13 0h1m30 0h1m51 0h1m35 0h1M13 18.5h1m16 0h2m4 0h1m18 0h1m26 0h1m2 0h1m4 0h1m1 0h1m12 0h1m27 0h1m2 0h1m5 0h1m19 0h1M89 19.5h1m15 0h1m25 0h1m11 0h1m1 0h1m7 0h2m41 0h1M24 20.5h1m19 0h1m8 0h1m17 0h1m79 0h1m32 0h2M28 21.5h1m182 0h1M4 22.5h1m33 0h1m11 0h1m7 0h1m9 0h1m69 0h1m19 0h2m6 0h1m3 0h1m17 0h1m22 0h1m12 0h1m6 0h1M4 23.5h1m114 0h1m73 0h1M75 24.5h1m1 0h1m21 0h1m20 0h1m8 0h1m12 0h1m71 0h1m25 0h1M35 25.5h1m1 0h1m59 0h1m23 0h1m44 0h1m12 0h1M0 26.5h1m125 0h1m39 0h1m39 0h1m24 0h1M175 27.5h1m14 0h1m24 0h1M40 28.5h1m38 0h1m58 0h1m9 0h1m3 0h2m30 0h1M32 29.5h1m69 0h2m5 0h1m86 0h2m1 0h1M9 30.5h1m42 0h1m33 0h1m16 0h1m12 0h2m94 0h1m27 0h1M26 31.5h1m59 0h1m43 0h1m3 0h1m44 0h2m11 0h2m10 0h1m19 0h1M4 32.5h1m9 0h1m24 0h2m20 0h1m132 0h1m8 0h1m15 0h1M0 35.5h1m22 0h1m10 0h1m7 0h1m22 0h1m36 0h1m38 0h1m12 0h1m5 0h1m5 0h1m10 0h1M5 36.5h1m18 0h1m3 0h1m17 0h1m21 0h1m6 0h1m26 0h1m37 0h1m5 0h1m24 0h1m37 0h1m10 0h1m13 0h1M4 37.5h1m16 0h1m108 0h1m9 0h1m9 0h1m21 0h1m39 0h1m2 0h1M40 38.5h1m21 0h2m31 0h1m19 0h1m8 0h1m12 0h1m29 0h2m34 0h1m7 0h2m9 0h1m13 0h1M1 39.5h1m2 0h1m2 0h1m98 0h1m32 0h1m12 0h2m60 0h1m13 0h1M11 40.5h1m16 0h1m8 0h1m22 0h1m8 0h1m35 0h1m3 0h1m5 0h1m3 0h1m3 0h1m55 0h1m36 0h1m12 0h2M13 41.5h1m11 0h1m26 0h1m86 0h1m27 0h1m7 0h1m53 0h1m11 0h1M16 42.5h1m100 0h1m57 0h1M22 43.5h1m18 0h1m3 0h1m19 0h1m7 0h1m22 0h1m37 0h1m33 0h2m22 0h1M102 44.5h1m30 0h1M11 45.5h1m6 0h1m12 0h1m19 0h1m64 0h1m25 0h1m9 0h1m27 0h2m23 0h2m32 0h1M43 46.5h1m23 0h1m17 0h1m7 0h1m10 0h1m24 0h2m7 0h1m9 0h2m86 0h1M0 47.5h1m1 0h1m16 0h2m12 0h1m6 0h1m58 0h1m9 0h1m16 0h1m6 0h1m22 0h1m9 0h1m7 0h1m29 0h1m2 0h1m17 0h1m3 0h1M9 48.5h1m26 0h1m6 0h1m25 0h1m4 0h1m24 0h1m2 0h1m4 0h1m28 0h1m3 0h2m30 0h1m34 0h1m29 0h1M16 49.5h1m23 0h1m4 0h1m34 0h1m4 0h1m24 0h1m8 0h1m4 0h1m11 0h1m1 0h1m1 0h1m4 0h1m20 0h1m1 0h2m60 0h1m5 0h1M0 50.5h1m1 0h1m96 0h2m14 0h1m78 0h1m8 0h1m17 0h1m4 0h2m2 0h1m10 0h1M5 51.5h1m6 0h1m19 0h1m12 0h1m28 0h1m38 0h2m15 0h1m49 0h1M7 52.5h1m7 0h1m17 0h1m41 0h1m39 0h2m33 0h2m2 0h1m12 0h1m4 0h1m40 0h2m3 0h1m18 0h1M6 53.5h1m2 0h1m42 0h2m62 0h1m67 0h1m7 0h1m35 0h1m2 0h1M11 54.5h1m21 0h1m5 0h1m15 0h1m11 0h1m26 0h1m9 0h1m22 0h1m2 0h1m20 0h1m23 0h2m51 0h1m1 0h1M29 55.5h1m1 0h1m22 0h1m16 0h1m8 0h1m29 0h1m23 0h1m2 0h1m42 0h1m5 0h1m3 0h1m4 0h1m4 0h1M4 56.5h1m52 0h1m2 0h1m40 0h2m17 0h1m97 0h2M8 57.5h1m32 0h1m77 0h1m8 0h1m24 0h1m6 0h1m3 0h1m14 0h1m51 0h1m6 0h1m1 0h1M42 58.5h2m32 0h2m41 0h1m43 0h1m49 0h1m1 0h1M16 59.5h1m7 0h1m24 0h1m54 0h2m39 0h1m42 0h2m21 0h1M24 60.5h2m207 0h1M54 61.5h1m1 0h1m54 0h1m37 0h1M54 62.5h1m38 0h1m106 0h1m26 0h1M46 63.5h1m26 0h1m11 0h2m23 0h1m21 0h1m7 0h1m62 0h1m2 0h1m15 0h1M1 64.5h1m73 0h1m25 0h1m27 0h1m9 0h1m12 0h1m11 0h1m46 0h1M6 65.5h1m31 0h1m6 0h1m25 0h1m79 0h1m55 0h1M13 66.5h1m19 0h1m16 0h1m10 0h1m47 0h1m30 0h1m19 0h1M8 69.5h1m90 0h1m15 0h1m36 0h2M17 70.5h1m54 0h1m75 0h1m40 0h1m40 0h1M13 71.5h1m11 0h3m16 0h1m30 0h2m4 0h1m55 0h1m43 0h1M0 72.5h1m3 0h1m3 0h1m14 0h1m43 0h1m54 0h2m40 0h1m4 0h1m7 0h1M3 73.5h1m12 0h1m28 0h1m4 0h1m26 0h1m48 0h1m63 0h1m28 0h1m7 0h1m4 0h1M23 74.5h1m18 0h1m24 0h1m19 0h1m4 0h1m3 0h1m18 0h1m7 0h1m2 0h1m20 0h2m3 0h1m13 0h1m7 0h1m6 0h2m1 0h1m20 0h1m19 0h1M11 75.5h1m23 0h1m76 0h1m22 0h1m40 0h2M1 76.5h1m164 0h1m3 0h2m19 0h1m7 0h1M4 77.5h1m15 0h1m54 0h1m89 0h1M46 78.5h1m2 0h1m40 0h2m49 0h1m59 0h1m20 0h1m17 0h1M47 79.5h1m139 0h1m27 0h1m4 0h1m1 0h1M64 97.5h1m16 0h1m81 0h1m68 0h1M9 98.5h1m65 0h1m14 0h1m39 0h1m1 0h1m19 0h1m80 0h2M42 99.5h2m8 0h1m79 0h1m5 0h1m6 0h1m12 0h1m47 0h1m26 0h1m6 0h2"/>
<path stroke="#cc4447" d="M7 6.5h2m15 0h1m6 0h1m2 0h1m15 0h1m9 0h1m7 0h1m4 0h1m5 0h1m14 0h1m1 0h1m4 0h1m10 0h1m8 0h1m8 0h1m14 0h1m12 0h2m14 0h2m2 0h1m10 0h1m19 0h1m11 0h1m11 0h1M31 7.5h1m5 0h1m41 0h1m8 0h1m46 0h1m23 0h1m34 0h1m7 0h1M1 8.5h1m2 0h1m21 0h1m2 0h1m1 0h1m2 0h1m1 0h1m40 0h1m1 0h1m14 0h1m5 0h1m14 0h1m1 0h1m9 0h1m2 0h2m12 0h1m16 0h1m3 0h1m8 0h1m3 0h1m8 0h1m27 0h1M1 9.5h4m2 0h1m4 0h1m2 0h1m10 0h1m14 0h1m3 0h1m1 0h1m10 0h1m16 0h1m27 0h1m7 0h1m4 0h1m1 0h1m19 0h1m10 0h1m9 0h1m2 0h2m3 0h1m9 0h1m1 0h1m5 0h1m4 0h1m2 0h1m2 0h1m8 0h1m5 0h1m9 0h1m8 0h1m2 0h1m4 0h1M2 10.5h1m3 0h1m1 0h2m4 0h1m1 0h1m3 0h1m16 0h1m7 0h1m19 0h2m4 0h2m4 0h1m5 0h1m4 0h1m1 0h2m1 0h2m8 0h4m9 0h1m6 0h1m6 0h1m2 0h1m10 0h1m1 0h2m11 0h1m2 0h1m9 0h1m1 0h1m3 0h1m9 0h1m1 0h1m3 0h1m6 0h1m8 0h2m1 0h1m3 0h1m22 0h1M6 11.5h5m14 0h2m18 0h1m3 0h1m15 0h2m6 0h1m3 0h1m18 0h1m6 0h1m2 0h2m4 0h3m10 0h1m6 0h2m1 0h1m19 0h1m2 0h1m1 0h1m1 0h1m13 0h1m16 0h1m7 0h1m16 0h1m2 0h1m6 0h1m1 0h1m10 0h1M5 12.5h1m6 0h1m1 0h1m14 0h1m7 0h1m4 0h1m2 0h1m2 0h2m8 0h2m1 0h1m3 0h1m8 0h2m5 0h2m4 0h2m2 0h1m11 0h1m7 0h1m5 0h1m3 0h1m6 0h1m9 0h1m4 0h2m13 0h1m3 0h1m1 0h1m1 0h1m2 0h1m7 0h1m8 0h1m3 0h1m19 0h1m2 0h1m13 0h1m3 0h3M11 13.5h1m6 0h1m14 0h1m5 0h1m4 0h1m4 0h1m6 0h2m14 0h1m2 0h2m11 0h1m11 0h1m1 0h1m2 0h1m3 0h1m4 0h1m5 0h1m4 0h1m10 0h1m6 0h1m2 0h1m8 0h4m1 0h1m1 0h1m6 0h2m10 0h1m4 0h1m1 0h1m3 0h1m5 0h1m2 0h1m3 0h1m2 0h1m1 0h1m27 0h1M8 14.5h1m9 0h1m8 0h1m24 0h1m6 0h1m2 0h3m6 0h1m15 0h1m2 0h1m1 0h1m2 0h1m1 0h3m10 0h1m2 0h1m4 0h1m7 0h1m5 0h1m4 0h2m14 0h1m1 0h1m5 0h2m3 0h1m9 0h2m1 0h1m9 0h1m3 0h1m6 0h1m11 0h1m1 0h1m8 0h1m10 0h1M23 15.5h1m6 0h1m7 0h1m4 0h1m7 0h1m3 0h1m2 0h1m3 0h1m4 0h1m6 0h1m12 0h1m4 0h1m2 0h1m2 0h2m4 0h2m6 0h2m7 0h1m4 0h1m23 0h1m2 0h1m16 0h1m5 0h1m4 0h3m3 0h1m5 0h2m4 0h2m3 0h1m1 0h3m5 0h1m1 0h1m1 0h2m1 0h1m16 0h1M2 16.5h1m2 0h1m15 0h2m2 0h1m4 0h1m10 0h1m5 0h1m5 0h1m1 0h1m3 0h1m7 0h2m1 0h1m3 0h1m10 0h1m9 0h1m14 0h1m7 0h1m6 0h1m2 0h1m3 0h1m10 0h1m5 0h2m7 0h1m5 0h1m1 0h1m1 0h1m1 0h2m8 0h1m7 0h1m9 0h3m7 0h2m4 0h1m4 0h3m18 0h1M6 17.5h1m1 0h1m8 0h1m9 0h1m15 0h1m22 0h1m18 0h2m4 0h1m4 0h3m13 0h2m6 0h1m20 0h1m6 0h1m2 0h1m1 0h1m1 0h1m27 0h1m2 0h1m12 0h1m1 0h2m5 0h4m1 0h1m8 0h1m10 0h1m3 0h1M14 18.5h1m2 0h1m11 0h1m42 0h1m20 0h1m16 0h1m5 0h1m5 0h1m4 0h1m9 0h1m3 0h1m1 0h2m18 0h1m17 0h2m1 0h1m7 0h1m9 0h1m5 0h1m3 0h1m20 0h1M16 19.5h1m1 0h1m7 0h1m34 0h1m22 0h1m41 0h1m7 0h1m9 0h1m22 0h1m30 0h1m1 0h1m18 0h1M58 20.5h1m3 0h1m60 0h1m5 0h1m81 0h1m4 0h1M53 21.5h2m67 0h1m68 0h1M0 22.5h1m32 0h1m1 0h1m34 0h1m4 0h1m23 0h1m3 0h1m14 0h3m21 0h2m24 0h1m7 0h1m3 0h1m6 0h1m52 0h1M37 23.5h2m25 0h1m2 0h1m10 0h1m14 0h1m4 0h1m31 0h1m55 0h1m17 0h1M28 24.5h1m1 0h2m6 0h1m5 0h1m6 0h2m16 0h1m8 0h1m14 0h1m27 0h1m21 0h1m17 0h1m7 0h1m1 0h1m5 0h1m9 0h2m22 0h1m3 0h1m8 0h1m11 0h1M5 25.5h1m2 0h1m11 0h1m3 0h1m16 0h1m2 0h1m50 0h2m1 0h1m48 0h1m17 0h1M39 26.5h1m35 0h1m8 0h1m8 0h1m1 0h1m2 0h1m10 0h2m4 0h1m22 0h2m7 0h1m25 0h2m6 0h1m51 0h1M25 27.5h1m24 0h1m2 0h1m8 0h1m41 0h1m34 0h1m4 0h1m31 0h1m20 0h1m2 0h1m10 0h1m26 0h2M10 28.5h1m1 0h1m3 0h1m5 0h1m16 0h1m7 0h1m20 0h1m1 0h1m12 0h2m3 0h1m40 0h1m4 0h1m5 0h1m3 0h1m53 0h1m23 0h1m1 0h1M12 29.5h3m16 0h1m29 0h1m19 0h2m14 0h1m28 0h1m4 0h1m41 0h1m26 0h1m2 0h1m19 0h1m12 0h1m4 0h1M25 30.5h1m1 0h2m2 0h1m51 0h1m6 0h1m1 0h1m11 0h1m17 0h1m3 0h1m29 0h1m3 0h1m13 0h1m4 0h2m2 0h1m36 0h2m3 0h1M51 31.5h1m6 0h1m54 0h1m17 0h1m5 0h1m1 0h2m11 0h1m20 0h2m36 0h1M11 32.5h2m8 0h1m12 0h1m14 0h2m5 0h1m1 0h1m12 0h1m2 0h1m45 0h1m25 0h1m16 0h1m20 0h1m13 0h1m6 0h1m6 0h1m7 0h1m3 0h1m10 0h1M35 35.5h1m20 0h2m4 0h1m4 0h1m13 0h1m43 0h1m13 0h1m3 0h1m44 0h1m9 0h2m12 0h1M1 36.5h1m14 0h1m2 0h1m15 0h1m6 0h2m4 0h1m9 0h1m17 0h2m3 0h1m9 0h1m52 0h1m15 0h1m15 0h1m7 0h1m7 0h1m15 0h1m18 0h1m10 0h1M9 37.5h1m6 0h1m27 0h2m9 0h1m1 0h1m37 0h2m2 0h1m22 0h1m1 0h1m23 0h1m6 0h1m22 0h1m1 0h1m1 0h1m18 0h1m22 0h1m12 0h1M17 38.5h2m8 0h1m8 0h1m2 0h1m2 0h1m4 0h1m2 0h1m5 0h1m8 0h1m3 0h2m5 0h1m11 0h1m15 0h2m10 0h1m8 0h1m2 0h3m5 0h1m15 0h1m2 0h1m15 0h1m7 0h1m2 0h1m21 0h1m2 0h2m4 0h2m20 0h1m3 0h2M0 39.5h1m4 0h1m12 0h1m2 0h1m10 0h1m5 0h1m4 0h1m40 0h1m50 0h1m2 0h1m43 0h1m6 0h1m10 0h1m2 0h1m2 0h1m1 0h1m3 0h2m16 0h1m5 0h1M5 40.5h1m4 0h1m16 0h1m5 0h1m25 0h1m7 0h1m10 0h2m5 0h1m31 0h1m10 0h1m13 0h1m4 0h2m3 0h1m11 0h1m11 0h1m1 0h1m6 0h1m11 0h1m9 0h1m5 0h1m4 0h1m1 0h1m2 0h1m3 0h1m3 0h1M14 41.5h2m1 0h1m6 0h1m18 0h2m1 0h1m15 0h1m3 0h1m40 0h1m8 0h1m26 0h1m15 0h2m16 0h1m5 0h1m3 0h1m8 0h1m4 0h1M17 42.5h2m6 0h2m1 0h1m36 0h1m31 0h1m18 0h1m66 0h1m2 0h1m3 0h1m31 0h1M17 43.5h1m8 0h1m39 0h1m8 0h1m31 0h1m7 0h1m11 0h1m14 0h1m24 0h1m5 0h2m53 0h1M17 44.5h1m27 0h1m115 0h1m52 0h1m14 0h1M0 45.5h1m6 0h1m1 0h2m6 0h1m11 0h1m8 0h1m3 0h1m7 0h1m19 0h1m22 0h1m9 0h3m2 0h1m42 0h1m21 0h1m2 0h1m21 0h2m25 0h1m8 0h2m4 0h1M22 46.5h1m12 0h1m1 0h2m3 0h1m15 0h1m22 0h1m14 0h2m14 0h1m18 0h1m3 0h1m3 0h2m16 0h1m1 0h1m13 0h1m5 0h1m1 0h1m13 0h4m8 0h1m9 0h1M55 47.5h1m19 0h1m12 0h1m6 0h1m23 0h1m28 0h1m1 0h1m24 0h1m16 0h1m3 0h1m27 0h1M0 48.5h1m21 0h1m9 0h1m2 0h1m3 0h1m4 0h1m6 0h1m23 0h1m10 0h1m39 0h2m10 0h2m5 0h1m30 0h1M7 49.5h1m6 0h1m9 0h1m1 0h1m12 0h1m28 0h1m3 0h1m24 0h1m8 0h1m13 0h1m2 0h1m3 0h1m7 0h1m5 0h2m5 0h1m3 0h2m1 0h1m1 0h1m9 0h1m2 0h1m19 0h3m7 0h1m2 0h2m3 0h1m2 0h1m19 0h1m3 0h1m1 0h1M1 50.5h1m1 0h1m1 0h1m58 0h1m3 0h1m6 0h1m8 0h2m1 0h1m9 0h1m4 0h1m7 0h1m3 0h1m3 0h1m6 0h2m9 0h1m14 0h1m1 0h2m7 0h1m2 0h1m20 0h2m8 0h2m3 0h1m2 0h1m9 0h1m5 0h1m1 0h2M3 51.5h1m4 0h2m4 0h1m23 0h1m22 0h1m5 0h1m28 0h1m19 0h1m25 0h1m23 0h1m3 0h1m6 0h1m3 0h1m27 0h1M52 52.5h1m19 0h1m1 0h1m9 0h1m7 0h1m50 0h1m4 0h1m3 0h2m23 0h1m1 0h1M20 53.5h1m17 0h1m53 0h2m24 0h2m31 0h1m4 0h1m29 0h1m9 0h1M41 54.5h2m4 0h1m14 0h2m5 0h2m6 0h1m6 0h1m43 0h2m3 0h1m3 0h1m2 0h1m12 0h2m16 0h1m14 0h1m1 0h2m1 0h1m23 0h1m2 0h2M3 55.5h1m26 0h1m11 0h2m12 0h1m5 0h1m4 0h1m1 0h2m37 0h2m6 0h1m10 0h1m2 0h1m12 0h2m24 0h1m29 0h1m2 0h2m18 0h1M9 56.5h2m6 0h2m15 0h2m11 0h1m20 0h1m7 0h1m2 0h1m1 0h1m18 0h1m18 0h1m1 0h1m3 0h2m19 0h1m2 0h1m5 0h2m16 0h1m18 0h1m4 0h1m3 0h1m27 0h1m2 0h1M4 57.5h1m51 0h1m2 0h1m19 0h1m15 0h2m16 0h1m15 0h1m9 0h1m3 0h2m11 0h1m16 0h1m34 0h1m28 0h1M12 58.5h1m2 0h2m34 0h1m3 0h1m127 0h1m6 0h1m12 0h2m22 0h1m13 0h1M13 59.5h1m6 0h2m6 0h1m1 0h1m3 0h1m8 0h1m11 0h1m53 0h1m32 0h1m1 0h1m17 0h2m14 0h1m29 0h1m3 0h1m10 0h1m3 0h1m4 0h2M116 60.5h1m13 0h1m24 0h1m4 0h1m58 0h1M23 61.5h1m31 0h1m16 0h1m107 0h1M20 62.5h1m82 0h1m21 0h1m16 0h2m20 0h1m65 0h1M20 63.5h1m2 0h1m1 0h1m86 0h2m17 0h1m29 0h1m5 0h1m19 0h1m3 0h1m8 0h1m40 0h1M19 64.5h1m1 0h1m120 0h1m8 0h1m27 0h1m7 0h1m34 0h1M34 65.5h2m8 0h1m5 0h1m10 0h1m8 0h1m24 0h1m102 0h1M34 66.5h1m4 0h1m2 0h1m12 0h1m1 0h1m2 0h1m8 0h1m40 0h1m30 0h1m5 0h1m46 0h1m30 0h1m6 0h1m2 0h1M9 69.5h1m29 0h1m16 0h1m67 0h1m16 0h1m1 0h1m18 0h2m12 0h1m30 0h1m7 0h1m7 0h1m6 0h1m4 0h1m2 0h1m2 0h1M16 70.5h1m15 0h1m50 0h1m21 0h1m3 0h2m12 0h1m17 0h2m22 0h1m10 0h1m4 0h1m2 0h1m7 0h1m13 0h1m10 0h1m13 0h1M2 71.5h1m52 0h1m4 0h1m21 0h1m31 0h1m8 0h1m8 0h1m8 0h1m5 0h1m22 0h1m36 0h1m17 0h2m11 0h1m1 0h1M22 72.5h1m34 0h1m7 0h1m14 0h1m6 0h2m5 0h1m12 0h1m19 0h1m15 0h1m10 0h1m4 0h1m2 0h1m18 0h1m28 0h1m3 0h1m18 0h1M2 73.5h1m33 0h1m18 0h1m22 0h1m8 0h1m41 0h1m14 0h1m11 0h2m5 0h1m29 0h1m8 0h1m1 0h2M6 74.5h2m5 0h1m11 0h1m20 0h1m25 0h1m36 0h1m17 0h2m21 0h1m22 0h1m1 0h1m9 0h1m4 0h1m4 0h1m11 0h1M12 75.5h1m14 0h1m3 0h1m26 0h1m13 0h1m4 0h1m15 0h1m11 0h1m22 0h1m8 0h1m14 0h1m13 0h2m4 0h1m51 0h1M0 76.5h1m7 0h1m10 0h1m18 0h1m15 0h1m45 0h1m3 0h1m35 0h1m24 0h1m24 0h1m2 0h2m3 0h1M13 77.5h1m39 0h1m15 0h1m12 0h1m49 0h1m15 0h1m3 0h1m35 0h2m21 0h1M4 78.5h1m16 0h1m30 0h1m1 0h1m43 0h1m26 0h1m17 0h1m18 0h1m37 0h1m20 0h1m17 0h1M0 79.5h1m34 0h1m86 0h1m84 0h1m6 0h1m6 0h1M183 96.5h1M34 97.5h1m47 0h1m9 0h1m4 0h1m71 0h1m6 0h1m4 0h1M5 98.5h1m91 0h1m2 0h1m83 0h1m25 0h1M8 99.5h2m10 0h1m1 0h1m62 0h1m9 0h2m36 0h1m18 0h1m3 0h1m63 0h1m1 0h1m11 0h1m2 0h1"/>
<path stroke="#d74c3f" d="M46 6.5h1m14 0h1m31 0h1m17 0h1m5 0h1m13 0h1m3 0h1m25 0h1m28 0h1m43 0h1M93 7.5h1m23 0h1m57 0h1m55 0h1M25 8.5h1m11 0h1m63 0h1m12 0h1m111 0h1M8 9.5h2m4 0h1m5 0h1m7 0h2m1 0h1m5 0h1m4 0h1m13 0h1m11 0h1m9 0h2m10 0h1m9 0h1m13 0h2m38 0h2m22 0h1m1 0h1m10 0h2m9 0h1m14 0h1m7 0h3m6 0h1M1 10.5h1m5 0h1m7 0h1m15 0h1m2 0h1m11 0h2m20 0h1m5 0h1m3 0h2m16 0h1m3 0h2m15 0h1m31 0h1m30 0h1m8 0h1m35 0h3m3 0h1M1 11.5h2m26 0h3m46 0h2m31 0h1m34 0h1m27 0h2m2 0h1m30 0h1m15 0h1m3 0h1m4 0h1M4 12.5h1m15 0h1m4 0h1m2 0h1m18 0h1m2 0h1m1 0h2m6 0h1m12 0h1m18 0h1m3 0h1m3 0h1m1 0h1m32 0h1m1 0h1m7 0h1m13 0h1m1 0h1m3 0h1m1 0h2m2 0h2m36 0h1m11 0h1m4 0h1m2 0h1m4 0h1M0 13.5h1m3 0h1m3 0h1m4 0h1m2 0h1m2 0h2m4 0h1m3 0h1m7 0h1m3 0h1m3 0h1m5 0h1m16 0h1m1 0h2m2 0h1m15 0h1m21 0h1m10 0h1m4 0h1m3 0h1m2 0h1m2 0h1m6 0h1m1 0h1m1 0h1m21 0h1m1 0h1m3 0h1m2 0h1m10 0h1m1 0h1m1 0h1m1 0h1m11 0h1m5 0h2m3 0h2m8 0h1M1 14.5h1m8 0h3m4 0h1m1 0h2m9 0h2m2 0h1m1 0h1m2 0h1m4 0h2m10 0h2m9 0h2m1 0h1m8 0h2m3 0h1m4 0h1m11 0h1m3 0h1m1 0h1m1 0h1m5 0h3m4 0h1m6 0h1m6 0h1m6 0h1m3 0h1m1 0h1m1 0h1m2 0h1m17 0h1m8 0h1m2 0h1m5 0h1m1 0h1m2 0h1m5 0h1m1 0h3m21 0h1m5 0h1m7 0h1M10 15.5h2m3 0h1m4 0h1m6 0h2m2 0h3m3 0h1m4 0h1m16 0h1m6 0h1m2 0h2m1 0h1m4 0h1m5 0h1m5 0h2m12 0h1m2 0h1m2 0h1m1 0h1m4 0h1m2 0h2m1 0h2m1 0h1m1 0h2m3 0h1m1 0h1m2 0h3m5 0h1m11 0h1m8 0h1m1 0h1m17 0h1m1 0h2m13 0h1m5 0h1m2 0h1m16 0h2m8 0h1M1 16.5h1m1 0h1m4 0h1m4 0h1m1 0h1m12 0h2m3 0h1m2 0h2m5 0h2m5 0h3m3 0h2m2 0h3m8 0h1m3 0h2m3 0h1m2 0h1m2 0h2m2 0h1m1 0h1m12 0h1m8 0h1m2 0h1m1 0h2m9 0h1m5 0h1m2 0h1m1 0h1m4 0h3m2 0h2m4 0h1m2 0h1m2 0h1m1 0h1m13 0h1m5 0h1m1 0h1m5 0h1m3 0h1m3 0h1m1 0h1m9 0h1m9 0h3m2 0h1m3 0h1m1 0h1M0 17.5h1m6 0h1m2 0h1m1 0h1m9 0h1m5 0h1m3 0h3m17 0h1m10 0h1m1 0h1m6 0h1m1 0h2m2 0h1m5 0h1m14 0h1m6 0h1m2 0h1m19 0h1m2 0h1m7 0h1m6 0h1m9 0h2m16 0h2m2 0h1m7 0h1m1 0h1m1 0h1m3 0h1m9 0h3m4 0h1m4 0h1m1 0h2m5 0h1m7 0h2m3 0h1m1 0h1M0 18.5h1m1 0h1m1 0h1m5 0h1m1 0h1m7 0h2m3 0h1m6 0h1m1 0h2m15 0h3m3 0h1m1 0h1m11 0h1m2 0h1m5 0h1m3 0h1m3 0h2m7 0h1m3 0h2m5 0h1m2 0h2m2 0h1m7 0h1m4 0h1m1 0h1m7 0h1m1 0h1m6 0h1m26 0h1m14 0h2m9 0h1m3 0h1m2 0h1m1 0h1m9 0h1m1 0h2m9 0h1m4 0h1m1 0h2M7 19.5h1m26 0h1m22 0h1m18 0h1m5 0h2m11 0h1m4 0h1m2 0h2m1 0h2m6 0h1m6 0h1m11 0h1m7 0h1m10 0h1m15 0h1m13 0h1m14 0h1m1 0h1m11 0h1m2 0h1m5 0h1M0 20.5h1m4 0h1m45 0h1m30 0h1m22 0h1m10 0h1m10 0h2m5 0h2m7 0h1m4 0h1m3 0h1m7 0h1m4 0h1m20 0h1m53 0h1M39 21.5h1m1 0h1m20 0h1m49 0h1m23 0h1m63 0h1m28 0h1M37 22.5h1m14 0h1m23 0h1m2 0h1m3 0h1m8 0h1m11 0h1m5 0h1m2 0h1m13 0h1m8 0h1m10 0h2m3 0h2m15 0h1m26 0h1m13 0h1m3 0h1m7 0h1m12 0h2M22 23.5h1m35 0h1m10 0h1m12 0h1m16 0h1m6 0h1m1 0h1m20 0h1m3 0h1m46 0h1m24 0h1m9 0h1m5 0h1M40 24.5h1m7 0h3m5 0h2m8 0h1m35 0h1m7 0h1m2 0h1m10 0h1m1 0h1m5 0h1m1 0h1m4 0h1m20 0h1m6 0h1m2 0h1m1 0h1m17 0h1m7 0h1m6 0h1m2 0h2m15 0h1m12 0h2M4 25.5h1m5 0h1m19 0h1m1 0h1m3 0h1m1 0h1m1 0h1m1 0h1m21 0h1m2 0h1m7 0h1m17 0h1m7 0h1m8 0h1m7 0h3m7 0h1m1 0h1m1 0h1m3 0h1m5 0h1m25 0h3m35 0h1m8 0h1M3 26.5h1m1 0h1m15 0h1m13 0h1m18 0h1m7 0h1m23 0h1m30 0h1m3 0h1m21 0h1m7 0h1m23 0h1m8 0h1m2 0h1m24 0h1m9 0h1m1 0h1m14 0h1m1 0h1M7 27.5h1m3 0h1m3 0h1m6 0h1m1 0h1m4 0h1m12 0h2m2 0h1m9 0h1m4 0h1m7 0h1m32 0h1m4 0h1m13 0h1m8 0h2m19 0h3m6 0h1m2 0h1m6 0h1m18 0h1m5 0h1m11 0h1m6 0h1m1 0h2m2 0h1m3 0h1m7 0h1m4 0h1m2 0h1M6 28.5h1m4 0h1m7 0h1m1 0h1m1 0h1m8 0h2m7 0h1m13 0h1m1 0h1m9 0h1m8 0h1m5 0h1m4 0h1m1 0h1m11 0h1m3 0h5m5 0h2m10 0h1m2 0h1m16 0h1m18 0h1m1 0h1m1 0h1m9 0h3m3 0h1m12 0h2m5 0h1m5 0h1m10 0h1m4 0h1m1 0h1m8 0h1M17 29.5h1m10 0h2m12 0h1m7 0h1m8 0h1m10 0h3m7 0h1m20 0h1m28 0h1m26 0h1m22 0h1m3 0h1m2 0h1m10 0h1m9 0h1m3 0h1m27 0h1M2 30.5h1m2 0h2m1 0h1m5 0h1m8 0h1m2 0h1m8 0h2m5 0h2m7 0h1m2 0h1m11 0h1m4 0h1m6 0h1m5 0h1m3 0h1m2 0h1m60 0h1m2 0h1m15 0h2m4 0h1m6 0h1m5 0h1m11 0h2m2 0h1m9 0h2m20 0h1m2 0h1M2 31.5h1m1 0h2m14 0h1m4 0h1m9 0h1m3 0h1m1 0h1m6 0h2m7 0h1m1 0h1m7 0h2m7 0h1m10 0h1m7 0h1m6 0h1m20 0h1m14 0h1m2 0h1m6 0h1m1 0h1m5 0h1m3 0h1m10 0h1m4 0h2m6 0h1m10 0h1m2 0h3m27 0h1m10 0h1M26 32.5h1m1 0h1m1 0h1m5 0h1m22 0h2m58 0h1m7 0h2m2 0h2m6 0h2m7 0h1m5 0h2m32 0h1m2 0h1m3 0h1m3 0h2m5 0h1m2 0h2m15 0h1m10 0h1M21 34.5h1m8 0h1m7 0h2m47 0h1m38 0h1m16 0h1m33 0h1m60 0h1M2 35.5h1m11 0h1m9 0h1m6 0h1m14 0h1m19 0h1m13 0h1m1 0h1m2 0h1m9 0h1m2 0h1m2 0h1m19 0h1m1 0h1m20 0h1m1 0h1m1 0h1m4 0h1m7 0h2m22 0h2m2 0h1m4 0h1m9 0h1m21 0h3m6 0h1M0 36.5h1m3 0h1m2 0h1m17 0h1m23 0h1m1 0h1m3 0h1m3 0h1m4 0h1m6 0h3m6 0h1m1 0h3m5 0h1m1 0h1m5 0h2m10 0h1m3 0h1m11 0h1m1 0h1m14 0h1m7 0h1m12 0h1m1 0h1m12 0h1m3 0h1m1 0h1m1 0h1m18 0h1m5 0h1m13 0h1m1 0h1m2 0h1m4 0h1M2 37.5h2m6 0h1m12 0h1m2 0h1m8 0h1m5 0h3m3 0h1m6 0h1m14 0h2m5 0h1m8 0h1m11 0h1m8 0h2m28 0h1m6 0h1m2 0h1m16 0h1m6 0h1m47 0h1m3 0h1m3 0h1m3 0h1m8 0h1M4 38.5h2m5 0h2m2 0h2m2 0h1m10 0h1m1 0h1m1 0h1m14 0h1m3 0h1m4 0h1m2 0h1m2 0h1m1 0h1m4 0h1m20 0h1m10 0h1m3 0h1m3 0h1m5 0h2m19 0h1m12 0h1m4 0h1m1 0h1m10 0h2m6 0h1m8 0h2m12 0h1m4 0h2m2 0h2m10 0h1m1 0h2m2 0h1m5 0h2m2 0h1M3 39.5h1m6 0h1m31 0h1m1 0h1m9 0h1m5 0h3m6 0h3m15 0h1m19 0h3m17 0h1m2 0h2m2 0h1m2 0h1m2 0h2m24 0h1m4 0h2m8 0h1m1 0h2m16 0h1m8 0h1m7 0h1m3 0h1m8 0h2m4 0h1m3 0h1M1 40.5h2m9 0h1m6 0h1m2 0h2m6 0h1m1 0h1m7 0h1m2 0h1m1 0h1m2 0h2m3 0h1m7 0h2m5 0h1m3 0h1m13 0h2m3 0h2m8 0h1m2 0h1m2 0h2m3 0h1m3 0h1m5 0h1m4 0h1m1 0h1m5 0h2m6 0h1m9 0h1m5 0h1m1 0h2m2 0h3m4 0h1m4 0h1m16 0h3m1 0h6m2 0h1m1 0h3m3 0h1m2 0h1m3 0h1m14 0h1M12 41.5h1m9 0h1m3 0h1m2 0h2m17 0h1m6 0h1m15 0h1m8 0h1m9 0h1m2 0h2m11 0h1m10 0h1m2 0h1m2 0h1m21 0h1m7 0h1m14 0h1m4 0h1m4 0h1m5 0h1m8 0h1m1 0h1m3 0h1m2 0h1m8 0h1m3 0h2m6 0h1m4 0h1m4 0h1M27 42.5h1m14 0h1m10 0h1m17 0h1m23 0h1m3 0h1m8 0h1m6 0h1m28 0h1m4 0h1m8 0h1m1 0h1m2 0h1m18 0h1m1 0h1m2 0h1m11 0h1m26 0h1M16 43.5h1m4 0h1m24 0h2m28 0h1m8 0h1m9 0h1m32 0h1m8 0h1m48 0h1m25 0h1m4 0h1m11 0h1M27 44.5h1m16 0h1m11 0h1m12 0h1m4 0h1m6 0h1m19 0h1m40 0h1m17 0h1m19 0h1m47 0h1M20 45.5h1m5 0h2m11 0h2m33 0h1m9 0h2m3 0h2m4 0h1m1 0h1m1 0h1m22 0h1m9 0h1m6 0h1m8 0h1m1 0h1m5 0h2m21 0h1m11 0h1m3 0h1m6 0h2m3 0h1m2 0h2m9 0h1m2 0h1m6 0h1m4 0h1M19 46.5h2m2 0h1m6 0h1m3 0h1m6 0h1m4 0h1m9 0h1m5 0h3m5 0h1m9 0h1m1 0h1m1 0h1m9 0h2m3 0h1m3 0h1m20 0h1m3 0h1m12 0h1m5 0h1m4 0h1m11 0h2m9 0h1m14 0h3m11 0h2m17 0h1m13 0h1m2 0h1M1 47.5h1m15 0h1m6 0h1m10 0h1m2 0h1m3 0h1m8 0h1m12 0h1m1 0h1m1 0h1m1 0h1m3 0h1m1 0h1m5 0h1m4 0h1m5 0h2m9 0h1m5 0h1m21 0h1m8 0h1m10 0h2m7 0h1m5 0h1m3 0h1m4 0h1m1 0h1m10 0h1m7 0h1m10 0h1m17 0h1m4 0h1M1 48.5h1m11 0h1m1 0h3m5 0h2m13 0h1m1 0h1m7 0h1m6 0h1m29 0h1m12 0h1m6 0h2m3 0h1m13 0h1m3 0h1m5 0h1m9 0h1m3 0h1m2 0h2m21 0h1m6 0h2m5 0h2m3 0h1m10 0h1m11 0h1m2 0h1m5 0h1M0 49.5h1m1 0h1m1 0h3m3 0h2m3 0h1m1 0h1m3 0h2m4 0h1m23 0h3m7 0h1m2 0h1m1 0h1m2 0h1m1 0h1m3 0h3m9 0h1m10 0h2m3 0h1m1 0h1m9 0h1m18 0h1m8 0h1m10 0h1m7 0h1m13 0h1m25 0h1m2 0h1m3 0h2m1 0h1m1 0h2m3 0h1m1 0h1m1 0h2m7 0h1m5 0h1M4 50.5h1m7 0h1m7 0h2m9 0h2m6 0h1m11 0h2m10 0h1m1 0h1m4 0h3m1 0h1m3 0h1m9 0h1m9 0h1m12 0h1m4 0h2m1 0h1m1 0h2m4 0h1m4 0h1m7 0h1m6 0h2m20 0h1m7 0h1m3 0h2m10 0h1m4 0h2m5 0h1m3 0h2m2 0h1m10 0h1m3 0h1m6 0h1M10 51.5h2m7 0h1m29 0h1m3 0h1m8 0h1m6 0h3m8 0h1m2 0h1m5 0h1m7 0h1m1 0h1m1 0h1m4 0h1m3 0h1m1 0h1m4 0h1m3 0h2m3 0h4m2 0h1m10 0h2m2 0h1m3 0h1m1 0h1m2 0h1m3 0h1m3 0h1m24 0h1m1 0h1m8 0h1m7 0h1m1 0h3m9 0h1m7 0h1m10 0h1M0 52.5h2m4 0h1m5 0h1m3 0h1m3 0h1m39 0h1m1 0h1m13 0h1m1 0h1m8 0h1m2 0h2m2 0h2m1 0h1m16 0h1m3 0h1m11 0h4m1 0h1m1 0h1m8 0h1m21 0h1m1 0h2m1 0h1m16 0h2m7 0h1m17 0h1m4 0h1M4 53.5h2m1 0h1m6 0h2m1 0h1m3 0h1m3 0h1m3 0h1m12 0h2m12 0h2m10 0h1m4 0h1m3 0h2m4 0h1m1 0h1m19 0h2m4 0h1m22 0h1m2 0h1m7 0h1m1 0h1m4 0h1m2 0h1m4 0h1m18 0h1m5 0h1m40 0h1m10 0h1M21 54.5h1m3 0h1m2 0h3m6 0h2m4 0h3m20 0h1m7 0h1m1 0h1m3 0h1m2 0h1m1 0h1m1 0h1m13 0h1m8 0h1m3 0h1m1 0h1m17 0h1m3 0h1m2 0h1m1 0h1m3 0h1m2 0h1m9 0h1m5 0h1m6 0h2m5 0h1m2 0h1m1 0h1m11 0h1m16 0h1m23 0h2M1 55.5h2m33 0h1m1 0h1m2 0h1m5 0h1m7 0h1m3 0h1m19 0h1m1 0h1m29 0h1m8 0h1m5 0h1m5 0h1m9 0h1m2 0h1m14 0h1m28 0h1m8 0h1m15 0h1m8 0h1m2 0h1m6 0h1M7 56.5h2m17 0h2m1 0h1m21 0h1m18 0h1m7 0h1m13 0h1m3 0h1m6 0h1m2 0h3m7 0h1m1 0h1m3 0h3m9 0h1m3 0h1m2 0h1m5 0h1m3 0h1m9 0h1m1 0h1m8 0h1m1 0h1m8 0h2m4 0h1m14 0h1m9 0h1m1 0h1m3 0h1m1 0h1m14 0h1M3 57.5h1m17 0h1m7 0h1m21 0h1m6 0h1m14 0h1m2 0h1m7 0h2m15 0h1m10 0h1m4 0h1m2 0h1m13 0h1m7 0h1m11 0h1m17 0h1m3 0h3m8 0h1m8 0h1m33 0h1M13 58.5h1m5 0h1m2 0h2m7 0h2m16 0h1m2 0h1m40 0h1m1 0h1m1 0h3m18 0h1m1 0h2m4 0h1m1 0h2m2 0h1m4 0h1m3 0h1m3 0h1m1 0h1m6 0h1m25 0h2m4 0h1m4 0h2m7 0h1m5 0h1m4 0h1m19 0h1m6 0h1M7 59.5h1m7 0h1m7 0h1m1 0h1m5 0h1m1 0h1m1 0h1m2 0h1m3 0h1m4 0h1m2 0h1m19 0h1m7 0h1m10 0h1m5 0h4m19 0h1m6 0h1m15 0h1m10 0h1m17 0h1m6 0h1m5 0h1m13 0h1m3 0h1m1 0h1m2 0h1m3 0h1m8 0h1m4 0h1m3 0h1M11 60.5h2m21 0h1m62 0h1m17 0h1m5 0h1m61 0h1m15 0h1M6 61.5h2m74 0h1m2 0h1m23 0h1m20 0h1m25 0h2m13 0h1M55 62.5h1m8 0h1m16 0h1m18 0h1m10 0h1m93 0h1m22 0h1M28 63.5h2m25 0h1m14 0h1m29 0h1m23 0h1m26 0h1m2 0h4m18 0h1m31 0h1m18 0h1M3 64.5h1m12 0h1m7 0h1m77 0h1m25 0h1m2 0h1m6 0h1m1 0h1m29 0h1m6 0h1m2 0h2m4 0h1m3 0h1m10 0h1M7 65.5h1m11 0h1m5 0h1m11 0h1m14 0h3m23 0h1m21 0h1m1 0h1m7 0h1m5 0h1m3 0h1m5 0h1m19 0h1m3 0h1m2 0h1m22 0h1m1 0h1m17 0h1m2 0h1m8 0h1m1 0h1M7 66.5h1m46 0h1m7 0h2m11 0h1m19 0h1m22 0h1m7 0h1m15 0h1m12 0h1m9 0h1m17 0h1m4 0h2m6 0h1m3 0h1m3 0h2m4 0h1m23 0h1M30 67.5h1m61 0h1m35 0h1m58 0h1M0 69.5h1m9 0h1m8 0h1m2 0h1m55 0h1m19 0h1m10 0h1m2 0h1m3 0h1m1 0h1m14 0h1m10 0h1m6 0h1m8 0h1m22 0h1m8 0h1m5 0h1m41 0h1M14 70.5h1m3 0h3m20 0h1m1 0h1m6 0h1m3 0h2m30 0h1m12 0h1m4 0h1m3 0h1m12 0h1m5 0h2m18 0h1m11 0h1m6 0h1m2 0h1m15 0h1m2 0h1m6 0h1m17 0h2m1 0h1m18 0h1m4 0h1M1 71.5h1m12 0h2m5 0h1m8 0h1m1 0h1m13 0h1m9 0h1m15 0h1m16 0h1m9 0h3m8 0h1m1 0h1m9 0h1m2 0h1m3 0h1m5 0h1m7 0h1m4 0h1m35 0h1m3 0h1m7 0h1m2 0h1m14 0h1m5 0h1m18 0h1M24 72.5h1m2 0h2m19 0h1m14 0h1m7 0h1m20 0h1m15 0h2m2 0h1m6 0h1m4 0h1m27 0h1m8 0h1m1 0h1m1 0h1m2 0h1m1 0h1m21 0h1m16 0h1m6 0h1m5 0h1m7 0h1M17 73.5h2m2 0h1m2 0h2m2 0h1m81 0h1m6 0h1m10 0h1m1 0h2m57 0h1m11 0h1m11 0h1m2 0h1M4 74.5h1m3 0h4m7 0h1m14 0h1m50 0h1m2 0h2m5 0h1m4 0h1m16 0h1m14 0h2m6 0h2m7 0h1m17 0h3m7 0h1m1 0h1m3 0h1m2 0h1m19 0h1m9 0h1M6 75.5h1m18 0h1m31 0h1m37 0h1m37 0h1m9 0h1m4 0h1m31 0h2m9 0h1m2 0h1m30 0h1m3 0h3M3 76.5h1m14 0h1m73 0h1m3 0h1m2 0h1m3 0h1m91 0h1m27 0h2M10 77.5h1m10 0h1m8 0h1m31 0h1m17 0h1m21 0h1m79 0h1m14 0h1m3 0h2m2 0h1m4 0h1m1 0h1m11 0h1m7 0h1M30 78.5h1m6 0h1m15 0h1m38 0h1m4 0h1m6 0h1m4 0h1m8 0h1m29 0h1m4 0h1M3 79.5h1m13 0h1m4 0h1m43 0h1m2 0h1m4 0h1m10 0h1m9 0h2m19 0h2m22 0h2m18 0h1m24 0h1m30 0h1m2 0h1m4 0h1m6 0h1m6 0h1M54 84.5h1M85 95.5h1M51 96.5h1m5 0h1m18 0h2m47 0h2m10 0h1m30 0h1m6 0h2m7 0h1m29 0h1m8 0h1m6 0h1m1 0h2M23 97.5h1m16 0h1m111 0h1m1 0h1m22 0h2m41 0h1M43 98.5h1m18 0h2m12 0h1m8 0h1m1 0h1m3 0h1m20 0h1m1 0h2m9 0h1m5 0h1m12 0h1m19 0h1m46 0h1m4 0h1m1 0h1m21 0h1M10 99.5h1m39 0h1m72 0h1m10 0h1m2 0h1m1 0h1m9 0h3m5 0h1m5 0h1m5 0h1m15 0h1m4 0h1m1 0h1m17 0h1"/>
<path stroke="#e05636" d="M88 6.5h1m55 0h1m49 0h1M194 8.5h1M24 9.5h2m20 0h1m54 0h1m15 0h1m12 0h2m29 0h1m32 0h1m36 0h1M73 10.5h1m40 0h1m46 0h1m40 0h1M93 11.5h1m36 0h2m12 0h1m14 0h1m1 0h1m32 0h1m31 0h1m4 0h1M1 12.5h1m22 0h1m9 0h1m11 0h1m31 0h2m6 0h1m7 0h1m6 0h1m92 0h1M12 13.5h1m1 0h1m2 0h1m8 0h3m13 0h1m3 0h1m3 0h1m1 0h2m4 0h4m11 0h1m3 0h1m3 0h1m4 0h1m4 0h1m2 0h1m6 0h1m6 0h1m2 0h1m5 0h1m6 0h1m2 0h1m2 0h1m28 0h1m3 0h1m1 0h2m1 0h1m20 0h2m5 0h1m20 0h1m7 0h2m5 0h2m1 0h1M5 14.5h3m7 0h1m30 0h1m4 0h1m6 0h1m1 0h1m4 0h2m10 0h2m3 0h2m7 0h1m1 0h1m12 0h1m1 0h1m2 0h1m8 0h2m1 0h3m4 0h1m14 0h1m4 0h1m12 0h2m2 0h1m3 0h1m19 0h1m4 0h2m4 0h1m8 0h1m19 0h2m7 0h1M2 15.5h1m2 0h1m2 0h2m4 0h1m2 0h1m11 0h1m4 0h1m9 0h1m2 0h1m1 0h2m1 0h1m15 0h1m2 0h1m6 0h3m1 0h1m10 0h2m7 0h1m5 0h1m9 0h1m5 0h1m4 0h1m6 0h1m17 0h2m5 0h1m2 0h2m8 0h1m5 0h1m4 0h1m4 0h2m9 0h1m13 0h1m11 0h1m4 0h2m1 0h1m4 0h1M4 16.5h1m2 0h1m6 0h1m16 0h1m3 0h1m10 0h1m11 0h1m7 0h1m10 0h1m1 0h1m2 0h1m11 0h1m1 0h1m2 0h1m2 0h1m1 0h1m2 0h2m3 0h1m2 0h1m10 0h2m6 0h1m2 0h2m5 0h1m16 0h2m12 0h1m1 0h2m13 0h1m18 0h2m18 0h1m1 0h1m7 0h1M5 17.5h1m7 0h1m7 0h1m4 0h1m4 0h1m8 0h3m1 0h1m2 0h2m4 0h3m4 0h2m8 0h1m9 0h1m1 0h1m9 0h1m9 0h2m3 0h2m1 0h2m3 0h3m6 0h1m1 0h1m1 0h1m7 0h1m2 0h1m2 0h1m3 0h1m12 0h2m1 0h3m1 0h1m4 0h1m8 0h3m1 0h1m3 0h1m1 0h1m5 0h2m2 0h1m2 0h1m10 0h1m6 0h1m5 0h2m3 0h1m3 0h1M3 18.5h1m1 0h1m5 0h1m3 0h2m5 0h1m1 0h1m1 0h1m6 0h1m3 0h3m2 0h2m2 0h1m1 0h3m3 0h1m3 0h1m1 0h2m1 0h2m2 0h1m5 0h1m1 0h2m10 0h1m16 0h1m1 0h2m10 0h2m1 0h1m9 0h1m2 0h2m3 0h1m10 0h1m1 0h1m2 0h3m3 0h1m4 0h2m5 0h1m1 0h2m8 0h1m5 0h1m1 0h1m4 0h1m4 0h1m1 0h1m4 0h2m2 0h1m3 0h1m1 0h1m2 0h2m2 0h3m5 0h2m1 0h1M1 19.5h1m9 0h1m2 0h1m4 0h1m10 0h1m1 0h1m2 0h1m1 0h2m17 0h1m2 0h1m2 0h1m2 0h2m4 0h1m2 0h1m2 0h2m11 0h1m8 0h1m1 0h2m5 0h1m13 0h1m7 0h1m1 0h1m2 0h1m6 0h1m16 0h1m4 0h1m8 0h1m2 0h1m13 0h3m10 0h1m5 0h1m6 0h1m4 0h1m2 0h1m10 0h2M1 20.5h2m12 0h1m3 0h1m23 0h1m10 0h2m13 0h1m11 0h1m6 0h2m22 0h1m20 0h1m3 0h1m17 0h1m12 0h1m11 0h2m1 0h1m13 0h1m2 0h2m10 0h1m11 0h1m14 0h1m1 0h1M6 21.5h1m16 0h1m5 0h1m18 0h1m9 0h1m19 0h1m10 0h1m5 0h1m7 0h4m27 0h1m7 0h3m7 0h1m8 0h1m6 0h1m6 0h1m16 0h3m8 0h1m15 0h1m4 0h1m5 0h1M19 22.5h1m1 0h3m8 0h1m3 0h1m6 0h1m5 0h1m7 0h1m1 0h1m18 0h1m1 0h1m3 0h1m4 0h1m1 0h1m1 0h1m11 0h1m15 0h3m30 0h1m10 0h1m29 0h1m1 0h1m1 0h2m6 0h2m24 0h1m3 0h1m1 0h1M7 23.5h1m11 0h1m1 0h1m14 0h1m12 0h1m1 0h3m5 0h1m16 0h1m9 0h1m10 0h1m43 0h1m9 0h1m5 0h1m4 0h2m3 0h1m3 0h3m9 0h1m10 0h1m8 0h1m3 0h1m14 0h1m3 0h1m8 0h1m3 0h2M0 24.5h1m3 0h3m3 0h1m9 0h1m16 0h1m3 0h1m1 0h1m1 0h1m1 0h1m7 0h1m2 0h1m3 0h1m2 0h1m1 0h1m6 0h1m7 0h1m25 0h1m2 0h2m5 0h1m8 0h2m1 0h1m7 0h1m6 0h1m4 0h1m1 0h2m3 0h1m4 0h1m15 0h2m5 0h2m2 0h1m3 0h1m2 0h1m3 0h1m5 0h1m5 0h1m7 0h1m6 0h1m4 0h1m2 0h1m1 0h1M7 25.5h1m14 0h1m2 0h1m1 0h3m1 0h1m11 0h1m3 0h1m2 0h2m6 0h2m2 0h1m13 0h1m1 0h1m15 0h1m8 0h2m4 0h1m12 0h2m2 0h1m6 0h1m12 0h1m12 0h1m30 0h1m6 0h1m3 0h1m3 0h1m10 0h1m3 0h2m2 0h1m8 0h1m5 0h2M1 26.5h1m2 0h1m8 0h1m6 0h1m7 0h2m12 0h1m3 0h1m2 0h2m2 0h1m23 0h1m5 0h1m24 0h1m11 0h1m3 0h1m5 0h2m16 0h1m1 0h1m4 0h1m6 0h3m4 0h1m1 0h2m9 0h1m3 0h1m5 0h2m11 0h1m32 0h1m1 0h1M9 27.5h1m2 0h1m4 0h1m1 0h2m7 0h1m4 0h2m4 0h1m12 0h1m10 0h1m16 0h1m1 0h2m5 0h1m4 0h1m20 0h2m9 0h2m4 0h1m10 0h1m18 0h1m3 0h1m2 0h1m1 0h1m10 0h1m11 0h1m1 0h1m4 0h1m4 0h1m1 0h1m3 0h1m6 0h1m3 0h1m7 0h1m9 0h1M5 28.5h1m12 0h1m11 0h2m4 0h1m1 0h1m10 0h2m3 0h1m1 0h1m9 0h1m5 0h1m2 0h1m2 0h1m7 0h1m7 0h3m1 0h1m3 0h1m7 0h1m1 0h1m4 0h3m8 0h1m13 0h1m6 0h1m1 0h1m2 0h4m3 0h1m11 0h1m2 0h1m6 0h1m3 0h1m1 0h1m1 0h1m2 0h2m9 0h1m2 0h1m1 0h1m7 0h1m7 0h1m2 0h1m7 0h2M5 29.5h1m1 0h1m13 0h2m14 0h1m5 0h1m13 0h2m1 0h1m6 0h1m1 0h1m3 0h1m1 0h1m8 0h2m2 0h1m2 0h1m3 0h2m2 0h2m3 0h1m8 0h1m8 0h2m8 0h2m2 0h1m15 0h1m3 0h1m7 0h1m16 0h3m5 0h1m3 0h2m16 0h1m5 0h1m6 0h1m4 0h1m7 0h1M10 30.5h1m1 0h2m5 0h2m11 0h1m5 0h2m1 0h1m8 0h1m7 0h1m1 0h1m8 0h2m6 0h1m11 0h1m12 0h1m6 0h1m2 0h1m2 0h1m8 0h1m2 0h2m19 0h1m4 0h1m3 0h1m3 0h1m11 0h1m4 0h1m9 0h2m5 0h1m9 0h1m12 0h1m3 0h1M3 31.5h1m2 0h1m4 0h3m2 0h1m13 0h2m1 0h1m4 0h1m1 0h1m2 0h1m2 0h1m6 0h1m8 0h1m1 0h1m6 0h2m2 0h1m9 0h1m22 0h1m1 0h1m16 0h1m1 0h1m3 0h1m1 0h1m8 0h1m1 0h1m7 0h2m16 0h1m5 0h1m3 0h1m2 0h1m4 0h1m10 0h1m1 0h1m10 0h1m8 0h1m1 0h1m1 0h1m5 0h1M1 32.5h1m5 0h1m7 0h1m4 0h1m1 0h2m3 0h1m15 0h1m1 0h2m1 0h1m2 0h1m5 0h1m4 0h1m2 0h3m4 0h1m5 0h1m3 0h1m2 0h1m2 0h2m8 0h2m6 0h1m2 0h1m2 0h1m8 0h1m2 0h1m5 0h1m2 0h1m7 0h1m10 0h2m2 0h6m2 0h1m2 0h1m9 0h1m2 0h1m1 0h1m2 0h2m2 0h2m2 0h1m7 0h1m5 0h2m9 0h1m3 0h2m1 0h1m2 0h1m1 0h1m2 0h2m6 0h1M16 34.5h1m3 0h1m25 0h1m75 0h3m2 0h1m27 0h1m64 0h1M1 35.5h1m1 0h1m1 0h1m7 0h1m1 0h1m2 0h2m2 0h1m2 0h1m7 0h1m19 0h1m1 0h1m30 0h1m2 0h1m2 0h1m6 0h1m3 0h2m3 0h1m15 0h1m1 0h1m6 0h1m3 0h2m10 0h2m1 0h1m4 0h3m9 0h1m1 0h1m3 0h2m6 0h2m10 0h1m10 0h1m3 0h1m2 0h1m2 0h2m4 0h1m8 0h2m1 0h1m1 0h1m4 0h1M3 36.5h1m2 0h1m8 0h1m1 0h2m2 0h2m6 0h1m4 0h1m6 0h1m2 0h1m22 0h1m1 0h2m7 0h1m7 0h2m5 0h1m2 0h2m29 0h1m1 0h1m1 0h1m6 0h2m1 0h2m12 0h2m2 0h1m1 0h1m3 0h1m1 0h2m3 0h1m2 0h1m2 0h1m1 0h1m9 0h1m14 0h1m1 0h1m2 0h1m7 0h1m3 0h1m12 0h1m3 0h1M1 37.5h1m3 0h2m4 0h3m1 0h1m1 0h1m6 0h2m2 0h1m4 0h1m4 0h2m6 0h1m9 0h1m2 0h1m2 0h1m2 0h1m2 0h1m8 0h2m4 0h1m9 0h2m3 0h1m1 0h1m4 0h1m2 0h1m1 0h1m4 0h2m1 0h1m1 0h2m9 0h2m16 0h1m4 0h1m16 0h1m2 0h1m6 0h1m2 0h1m3 0h1m6 0h1m2 0h2m2 0h1m2 0h3m1 0h1m3 0h1m6 0h1m2 0h1m14 0h1M0 38.5h3m3 0h2m2 0h1m2 0h1m7 0h1m1 0h1m7 0h1m1 0h1m1 0h1m10 0h1m1 0h1m8 0h1m14 0h2m1 0h1m8 0h3m4 0h1m10 0h1m6 0h2m9 0h3m8 0h2m6 0h2m2 0h1m3 0h4m2 0h2m9 0h3m9 0h1m4 0h1m1 0h1m4 0h3m1 0h1m5 0h2m1 0h1m17 0h2m4 0h1m3 0h1m2 0h1m5 0h1m2 0h1M6 39.5h1m5 0h1m2 0h1m1 0h1m1 0h1m2 0h1m4 0h1m3 0h1m1 0h1m3 0h1m1 0h1m5 0h2m1 0h2m3 0h1m5 0h1m3 0h2m2 0h1m5 0h1m1 0h1m35 0h1m1 0h1m4 0h1m32 0h1m8 0h1m1 0h1m6 0h1m4 0h2m9 0h2m1 0h1m15 0h2m1 0h1m3 0h1m5 0h1m5 0h1m5 0h1m3 0h2m5 0h1M0 40.5h1m6 0h1m5 0h1m1 0h1m1 0h2m1 0h2m2 0h1m4 0h1m4 0h1m6 0h1m2 0h1m2 0h1m4 0h1m1 0h2m1 0h1m5 0h1m2 0h1m3 0h2m3 0h3m4 0h3m4 0h1m3 0h1m5 0h2m9 0h1m9 0h1m5 0h1m4 0h2m1 0h1m2 0h4m3 0h1m1 0h1m4 0h1m5 0h2m4 0h1m4 0h1m2 0h1m3 0h1m4 0h1m2 0h1m4 0h2m3 0h1m10 0h1m10 0h1m6 0h1m2 0h2m5 0h2m3 0h1m3 0h1M4 41.5h4m8 0h1m3 0h1m7 0h1m2 0h2m3 0h1m1 0h3m1 0h1m6 0h1m7 0h1m1 0h1m9 0h1m8 0h1m6 0h4m6 0h1m1 0h1m3 0h1m1 0h1m1 0h1m4 0h1m1 0h1m5 0h2m1 0h2m1 0h2m2 0h3m1 0h1m5 0h1m1 0h3m1 0h1m12 0h1m3 0h1m4 0h1m3 0h2m7 0h1m2 0h1m3 0h1m1 0h1m1 0h1m1 0h1m7 0h1m2 0h2m2 0h1m1 0h1m2 0h1m1 0h1m3 0h1m3 0h1m1 0h1m1 0h1m3 0h3m7 0h1M0 42.5h2m28 0h1m1 0h1m10 0h2m1 0h1m23 0h1m16 0h1m5 0h1m13 0h1m14 0h1m3 0h1m7 0h1m18 0h1m5 0h1m5 0h1m7 0h2m1 0h1m4 0h1m9 0h1m3 0h2m5 0h1m17 0h1m4 0h1m4 0h1m3 0h1m6 0h1M8 43.5h3m7 0h1m6 0h1m2 0h1m5 0h1m5 0h1m11 0h1m14 0h2m28 0h1m22 0h1m9 0h1m2 0h1m26 0h1m9 0h1m8 0h1m34 0h1m7 0h2m15 0h2M0 44.5h1m7 0h2m6 0h1m4 0h1m6 0h1m13 0h2m7 0h1m28 0h1m2 0h1m1 0h1m4 0h2m8 0h1m18 0h1m7 0h2m17 0h1m59 0h1m23 0h1M1 45.5h1m3 0h1m2 0h1m12 0h2m7 0h1m4 0h1m5 0h1m1 0h1m15 0h1m5 0h1m1 0h3m3 0h1m4 0h1m4 0h1m14 0h1m3 0h1m6 0h1m2 0h2m1 0h1m1 0h1m6 0h1m2 0h2m1 0h2m3 0h3m2 0h2m1 0h1m1 0h2m6 0h1m12 0h1m5 0h1m9 0h3m5 0h1m1 0h3m13 0h2m9 0h1m6 0h2m1 0h2m2 0h1m4 0h1M0 46.5h1m1 0h1m1 0h2m2 0h2m3 0h1m3 0h1m10 0h1m2 0h2m3 0h1m12 0h1m3 0h1m5 0h1m5 0h2m2 0h1m1 0h2m6 0h1m3 0h1m2 0h1m2 0h1m1 0h1m6 0h1m6 0h1m4 0h1m7 0h5m3 0h2m4 0h1m3 0h1m5 0h5m4 0h1m1 0h4m3 0h1m1 0h1m4 0h1m2 0h3m3 0h2m4 0h1m1 0h1m4 0h1m3 0h1m5 0h1m3 0h1m2 0h1m3 0h1m1 0h2m14 0h1m4 0h1m4 0h2m1 0h1M3 47.5h1m4 0h1m1 0h1m3 0h3m1 0h1m15 0h1m4 0h1m7 0h1m4 0h1m1 0h1m1 0h1m6 0h1m3 0h1m5 0h1m3 0h1m7 0h2m2 0h1m7 0h2m14 0h4m1 0h1m11 0h1m3 0h2m1 0h1m4 0h1m8 0h1m10 0h1m1 0h2m7 0h1m8 0h1m5 0h1m6 0h1m3 0h1m1 0h1m7 0h1m4 0h1m4 0h1m2 0h2m3 0h1m2 0h1M8 48.5h1m12 0h1m11 0h1m11 0h1m1 0h1m5 0h1m4 0h1m4 0h1m7 0h1m1 0h1m3 0h1m3 0h2m12 0h3m3 0h1m1 0h1m7 0h2m1 0h1m1 0h3m1 0h1m4 0h1m6 0h1m13 0h1m3 0h1m12 0h1m5 0h2m12 0h2m5 0h2m4 0h1m3 0h1m2 0h1m6 0h1m3 0h2m1 0h1m2 0h1m5 0h3m7 0h1M1 49.5h1m1 0h1m4 0h2m8 0h1m1 0h1m8 0h1m5 0h1m5 0h2m5 0h1m1 0h1m4 0h1m3 0h2m1 0h1m4 0h1m2 0h1m8 0h1m1 0h1m13 0h2m3 0h1m1 0h1m1 0h1m2 0h2m2 0h3m2 0h2m3 0h2m5 0h3m13 0h1m5 0h1m21 0h1m2 0h1m1 0h2m1 0h3m16 0h1m1 0h1m11 0h1m8 0h1m5 0h2m3 0h2M6 50.5h1m3 0h1m2 0h1m1 0h2m7 0h2m2 0h1m1 0h1m2 0h1m1 0h1m4 0h3m4 0h1m2 0h1m7 0h2m7 0h1m8 0h1m2 0h2m1 0h2m2 0h1m2 0h2m1 0h1m3 0h1m4 0h1m2 0h3m1 0h2m21 0h1m2 0h2m1 0h3m1 0h3m1 0h2m2 0h2m6 0h2m1 0h1m5 0h1m3 0h1m4 0h2m11 0h1m2 0h2m13 0h3m2 0h2m3 0h1m1 0h2m12 0h1m4 0h1m2 0h1M2 51.5h1m3 0h1m8 0h2m3 0h3m2 0h1m4 0h2m2 0h2m4 0h2m10 0h1m1 0h1m3 0h1m4 0h1m2 0h1m1 0h1m8 0h1m7 0h1m1 0h2m1 0h1m3 0h1m8 0h2m3 0h2m1 0h1m3 0h1m3 0h2m12 0h1m4 0h2m1 0h1m6 0h1m1 0h1m1 0h1m2 0h1m12 0h1m9 0h1m5 0h2m4 0h1m5 0h1m2 0h1m7 0h1m15 0h1m2 0h1m6 0h1m5 0h1M2 52.5h1m7 0h2m9 0h2m8 0h2m1 0h1m3 0h1m16 0h1m3 0h1m3 0h6m4 0h1m5 0h2m1 0h1m2 0h2m2 0h1m6 0h1m1 0h1m6 0h1m2 0h1m3 0h2m5 0h1m6 0h1m2 0h1m4 0h1m1 0h1m2 0h4m2 0h1m1 0h1m1 0h1m5 0h1m2 0h2m4 0h3m2 0h1m6 0h1m3 0h1m1 0h1m1 0h2m6 0h4m1 0h2m6 0h2m4 0h1m3 0h2m2 0h2m2 0h1m6 0h1m2 0h2m3 0h1m2 0h1M10 53.5h1m11 0h1m12 0h1m1 0h1m3 0h1m6 0h1m5 0h2m4 0h1m2 0h1m2 0h2m1 0h1m2 0h1m3 0h1m5 0h1m6 0h1m1 0h1m3 0h1m2 0h1m11 0h1m9 0h1m11 0h1m3 0h1m1 0h1m1 0h1m1 0h1m1 0h1m9 0h1m7 0h1m2 0h2m3 0h1m6 0h1m15 0h1m1 0h1m9 0h1m5 0h1m1 0h1m2 0h1m16 0h1m2 0h1m1 0h1m1 0h1M1 54.5h1m3 0h1m6 0h2m8 0h2m11 0h2m9 0h1m4 0h2m1 0h1m1 0h1m2 0h1m1 0h1m2 0h2m2 0h1m2 0h2m2 0h1m2 0h1m24 0h1m3 0h3m2 0h1m2 0h1m2 0h1m1 0h1m3 0h1m11 0h1m2 0h1m19 0h1m7 0h4m1 0h1m4 0h1m6 0h1m2 0h1m2 0h1m1 0h1m2 0h1m7 0h1m1 0h2m4 0h3m2 0h2m2 0h1m1 0h3m2 0h1m8 0h1M0 55.5h1m4 0h2m1 0h3m5 0h1m1 0h2m1 0h2m5 0h1m3 0h1m2 0h1m10 0h1m1 0h1m3 0h1m10 0h1m4 0h1m8 0h1m9 0h1m1 0h4m6 0h2m1 0h1m20 0h1m1 0h1m3 0h1m16 0h2m7 0h1m9 0h3m5 0h2m1 0h1m5 0h1m1 0h1m16 0h1m2 0h1m7 0h1m2 0h2m7 0h1M0 56.5h1m2 0h1m1 0h1m6 0h2m2 0h1m2 0h1m2 0h2m4 0h1m3 0h1m4 0h1m16 0h1m14 0h1m1 0h1m3 0h1m8 0h2m7 0h3m3 0h1m9 0h1m3 0h1m3 0h1m19 0h1m1 0h1m12 0h2m5 0h2m3 0h1m4 0h1m11 0h1m3 0h1m2 0h1m1 0h1m2 0h2m1 0h1m1 0h1m4 0h1m1 0h2m6 0h1m9 0h1m9 0h1m2 0h1M2 57.5h1m2 0h1m6 0h2m9 0h1m8 0h1m7 0h1m1 0h1m14 0h1m10 0h1m1 0h3m4 0h1m5 0h1m26 0h2m4 0h1m7 0h1m8 0h1m3 0h2m2 0h1m13 0h1m3 0h1m1 0h3m5 0h1m14 0h1m1 0h1m1 0h1m6 0h1m8 0h2m1 0h1m2 0h1m2 0h1m3 0h2m1 0h1m2 0h2m2 0h1M5 58.5h3m10 0h1m1 0h2m3 0h1m9 0h1m5 0h1m2 0h1m5 0h1m3 0h1m2 0h1m1 0h1m3 0h1m6 0h1m1 0h2m1 0h1m7 0h1m1 0h1m17 0h1m5 0h3m2 0h1m7 0h1m10 0h2m1 0h1m1 0h1m13 0h1m2 0h2m7 0h1m8 0h5m7 0h1m1 0h1m5 0h2m6 0h1m23 0h1m4 0h1m4 0h3M9 59.5h1m2 0h1m1 0h1m4 0h1m2 0h1m14 0h1m1 0h1m4 0h2m8 0h1m1 0h1m5 0h1m2 0h1m5 0h2m6 0h2m6 0h2m1 0h1m3 0h1m6 0h1m1 0h1m4 0h1m2 0h1m8 0h1m5 0h1m3 0h1m5 0h1m10 0h1m2 0h2m6 0h1m1 0h1m8 0h1m1 0h3m8 0h1m4 0h1m2 0h1m9 0h1m15 0h1m1 0h1m1 0h3m3 0h1M1 60.5h1m93 0h1m21 0h1m8 0h1m10 0h1m25 0h1m34 0h1m21 0h1m10 0h1m7 0h1M12 61.5h1m9 0h1m12 0h1m22 0h1m20 0h1m6 0h2m2 0h1m3 0h1m34 0h1m39 0h1m25 0h1M11 62.5h1m10 0h1m63 0h1m5 0h1m1 0h1m4 0h1m13 0h1m19 0h2m12 0h1m4 0h1m9 0h2m7 0h1m12 0h1m37 0h2m7 0h1M8 63.5h1m7 0h1m2 0h1m6 0h2m17 0h1m1 0h3m11 0h1m9 0h1m12 0h1m12 0h1m5 0h3m12 0h1m2 0h2m19 0h1m19 0h2m8 0h1m2 0h1m2 0h1m3 0h1m5 0h1m1 0h1m10 0h1m2 0h1m27 0h1m4 0h1M2 64.5h1m10 0h1m1 0h1m1 0h2m4 0h1m4 0h1m6 0h1m6 0h1m9 0h2m3 0h3m1 0h1m10 0h1m24 0h1m7 0h1m3 0h1m3 0h1m16 0h1m1 0h1m8 0h1m1 0h1m4 0h1m4 0h3m26 0h1m6 0h1m13 0h1m26 0h1m6 0h1m3 0h1M3 65.5h1m14 0h1m1 0h1m19 0h2m9 0h1m5 0h1m4 0h1m6 0h1m13 0h1m10 0h1m12 0h1m3 0h2m16 0h2m2 0h2m13 0h1m5 0h1m2 0h1m2 0h1m5 0h1m10 0h1m6 0h1m4 0h1m2 0h1m13 0h1m4 0h1m1 0h1m15 0h1M5 66.5h1m15 0h1m2 0h2m18 0h1m4 0h1m1 0h1m6 0h1m6 0h1m7 0h1m2 0h1m1 0h2m1 0h4m13 0h2m1 0h1m11 0h1m3 0h1m2 0h1m12 0h1m1 0h1m7 0h1m1 0h1m7 0h2m4 0h1m1 0h1m7 0h1m1 0h1m10 0h1m1 0h1m2 0h1m3 0h1m5 0h2m9 0h1m4 0h1m4 0h1m5 0h1m1 0h2m3 0h1m1 0h1m3 0h1M24 67.5h1m6 0h1m55 0h1m5 0h1m116 0h1m16 0h2m12 0h1M7 69.5h1m3 0h1m2 0h1m3 0h1m1 0h2m9 0h1m4 0h1m3 0h2m17 0h1m3 0h2m2 0h1m3 0h1m5 0h1m6 0h2m15 0h1m5 0h1m5 0h1m7 0h1m1 0h1m7 0h2m2 0h2m22 0h1m28 0h1m6 0h1m1 0h1m8 0h1m4 0h1m2 0h1m7 0h1m3 0h1m4 0h1m2 0h1m2 0h1M6 70.5h1m3 0h2m1 0h1m7 0h2m8 0h1m1 0h1m5 0h1m2 0h1m9 0h1m7 0h1m5 0h2m1 0h1m6 0h2m6 0h2m12 0h1m1 0h1m5 0h1m5 0h2m4 0h1m3 0h1m2 0h1m4 0h2m6 0h1m10 0h1m3 0h1m10 0h1m9 0h1m5 0h1m5 0h1m20 0h1m11 0h1m2 0h1m5 0h1m10 0h1M3 71.5h1m7 0h1m4 0h1m7 0h1m3 0h1m4 0h1m9 0h1m7 0h1m5 0h1m5 0h1m1 0h1m5 0h1m16 0h1m2 0h2m2 0h1m19 0h1m3 0h1m16 0h1m1 0h1m11 0h1m3 0h1m1 0h1m6 0h1m3 0h1m17 0h1m9 0h1m4 0h1m5 0h1m1 0h1m10 0h1m4 0h1m2 0h1M2 72.5h1m3 0h2m22 0h2m3 0h1m4 0h1m1 0h2m3 0h1m6 0h1m6 0h1m2 0h1m4 0h1m2 0h2m15 0h1m7 0h1m3 0h1m12 0h1m5 0h1m9 0h1m2 0h1m1 0h1m6 0h1m4 0h1m7 0h1m10 0h1m6 0h1m15 0h1m3 0h1m5 0h2m18 0h1m3 0h1m2 0h1m1 0h1m7 0h4M1 73.5h1m13 0h1m4 0h1m1 0h2m2 0h1m15 0h1m6 0h1m4 0h1m1 0h2m3 0h1m2 0h1m10 0h2m2 0h1m18 0h2m5 0h1m2 0h2m2 0h1m5 0h1m8 0h1m4 0h1m8 0h1m16 0h1m1 0h3m1 0h2m11 0h1m9 0h1m7 0h1m15 0h1m8 0h1m1 0h1m2 0h1m10 0h1M12 74.5h1m1 0h1m1 0h3m2 0h2m5 0h1m7 0h1m2 0h2m12 0h3m10 0h1m8 0h2m7 0h1m1 0h1m10 0h2m5 0h1m5 0h3m1 0h1m7 0h1m15 0h2m2 0h1m8 0h1m4 0h1m5 0h2m12 0h1m1 0h1m1 0h1m6 0h3m8 0h1m4 0h2m6 0h2m2 0h1m1 0h4m1 0h1M1 75.5h1m2 0h2m2 0h1m8 0h1m14 0h3m11 0h1m9 0h1m2 0h1m1 0h1m25 0h1m10 0h2m3 0h1m2 0h3m13 0h1m1 0h1m1 0h1m5 0h1m9 0h1m28 0h1m20 0h2m3 0h1m37 0h1m3 0h1M7 76.5h1m2 0h1m6 0h1m21 0h1m8 0h1m1 0h1m10 0h1m1 0h1m9 0h1m2 0h1m7 0h2m8 0h1m23 0h1m2 0h4m1 0h1m12 0h1m1 0h2m9 0h1m1 0h1m13 0h1m3 0h1m4 0h1m11 0h1m6 0h2m5 0h1m10 0h1m4 0h1m1 0h2m2 0h1m1 0h3m7 0h2m2 0h1M5 77.5h1m3 0h1m7 0h1m18 0h1m1 0h1m12 0h1m3 0h1m1 0h2m6 0h1m1 0h1m15 0h1m3 0h2m20 0h1m15 0h2m8 0h1m11 0h1m5 0h1m3 0h1m6 0h1m7 0h1m10 0h2m14 0h1m14 0h1m6 0h2m7 0h1m6 0h2M15 78.5h3m4 0h1m13 0h1m2 0h1m8 0h1m1 0h2m3 0h1m8 0h1m34 0h2m9 0h1m4 0h1m15 0h1m10 0h1m6 0h1m11 0h1m1 0h1m4 0h1m23 0h2m2 0h1m23 0h1M13 79.5h1m2 0h1m4 0h1m27 0h1m26 0h1m20 0h1m21 0h2m5 0h1m15 0h3m33 0h1m1 0h1m5 0h1m10 0h1m2 0h1m16 0h1m5 0h1M33 80.5h1m94 0h1m13 0h1m65 0h1m29 0h2M15 82.5h2m30 0h2m67 0h1m5 0h1m15 0h1m2 0h1m13 0h1m28 0h1m4 0h2m1 0h2m3 0h1M13 83.5h1m24 0h1M37 84.5h2m18 0h1m11 0h2m50 0h1m43 0h2M5 85.5h1m7 0h1m15 0h2m64 0h1m22 0h1m32 0h1m64 0h1M9 86.5h2m43 0h1m21 0h1m26 0h1m30 0h1m19 0h1m1 0h2m48 0h1m3 0h2m3 0h1m7 0h1M0 87.5h1m53 0h1m101 0h1m65 0h1M35 92.5h1M13 95.5h4m23 0h1m11 0h1m25 0h1m20 0h1m2 0h1m11 0h1M56 96.5h1m2 0h1m5 0h1m9 0h1m2 0h1m31 0h1m108 0h1m4 0h1m6 0h1M6 97.5h2m11 0h1m38 0h2m2 0h2m2 0h1m1 0h1m1 0h1m12 0h1m16 0h1m3 0h1m5 0h1m5 0h1m32 0h1m14 0h1m2 0h1m2 0h1m8 0h2m1 0h1m15 0h1m20 0h1m2 0h2m7 0h1m6 0h1M22 98.5h1m11 0h2m14 0h1m13 0h1m19 0h1m1 0h1m32 0h1m8 0h1m24 0h1m3 0h2m26 0h1m16 0h1m10 0h2m8 0h1m3 0h3M1 99.5h1m3 0h1m23 0h3m5 0h1m6 0h1m30 0h2m10 0h1m5 0h2m4 0h1m10 0h1m11 0h1m19 0h1m24 0h1m10 0h2m8 0h1m11 0h1m10 0h1m13 0h1m5 0h1m4 0h1"/>
<path stroke="#e7622c" d="M174 7.5h1M227 8.5h1M227 11.5h1M93 12.5h1M1 13.5h1m13 0h1m90 0h2m23 0h1m5 0h1m6 0h1m16 0h1m2 0h1m2 0h1m10 0h1m52 0h1m2 0h1M2 14.5h1m21 0h2m23 0h2m10 0h1m19 0h1m14 0h1m3 0h1m13 0h1m16 0h1m3 0h1m10 0h1m11 0h1m19 0h1m1 0h1m13 0h1m14 0h2m4 0h1m9 0h1M4 15.5h1m1 0h2m16 0h1m1 0h1m18 0h2m6 0h1m6 0h2m3 0h1m7 0h1m22 0h1m4 0h1m5 0h1m9 0h1m13 0h1m12 0h1m22 0h1m3 0h1m1 0h1m3 0h1m35 0h1m11 0h1m5 0h1M34 16.5h1m7 0h1m2 0h1m32 0h1m2 0h1m11 0h1m6 0h2m1 0h1m7 0h1m4 0h1m14 0h1m3 0h1m17 0h2m21 0h1m25 0h1m26 0h2M1 17.5h4m6 0h1m2 0h1m1 0h1m2 0h1m4 0h1m4 0h2m6 0h2m6 0h1m4 0h1m11 0h1m8 0h1m7 0h1m1 0h1m5 0h1m2 0h1m3 0h1m5 0h2m12 0h1m3 0h2m1 0h3m1 0h1m1 0h1m2 0h2m1 0h2m2 0h2m4 0h1m1 0h1m8 0h1m10 0h1m2 0h3m1 0h1m4 0h2m6 0h1m7 0h2m9 0h1m10 0h2m23 0h1M7 18.5h3m13 0h1m3 0h2m15 0h2m1 0h1m14 0h1m2 0h1m2 0h3m6 0h2m4 0h1m2 0h1m11 0h3m2 0h1m9 0h2m2 0h1m2 0h1m30 0h1m1 0h2m3 0h1m1 0h1m3 0h2m2 0h3m6 0h1m2 0h1m5 0h1m1 0h1m6 0h2m9 0h1m6 0h1m1 0h3m7 0h2m3 0h1m10 0h1M0 19.5h1m4 0h2m6 0h1m11 0h1m1 0h1m11 0h3m1 0h1m10 0h2m2 0h1m1 0h1m2 0h2m2 0h1m2 0h1m1 0h1m7 0h2m3 0h2m7 0h1m3 0h1m10 0h5m1 0h2m2 0h2m2 0h1m12 0h1m1 0h2m6 0h1m1 0h4m10 0h1m3 0h1m14 0h1m1 0h1m4 0h1m4 0h1m7 0h1m2 0h1m3 0h1m3 0h2m4 0h1m3 0h2m5 0h2m3 0h1m2 0h3M3 20.5h1m3 0h1m10 0h1m4 0h1m4 0h2m2 0h1m9 0h1m7 0h1m5 0h2m1 0h1m15 0h1m11 0h1m9 0h1m3 0h1m6 0h1m2 0h1m13 0h1m10 0h1m5 0h1m1 0h1m5 0h1m13 0h1m4 0h1m28 0h2m3 0h1m10 0h1m7 0h1m5 0h1m7 0h1M15 21.5h1m14 0h1m7 0h1m4 0h1m2 0h1m2 0h2m1 0h1m2 0h1m3 0h1m7 0h1m2 0h1m6 0h1m16 0h1m22 0h1m5 0h2m4 0h1m5 0h1m5 0h1m3 0h2m1 0h1m1 0h1m2 0h2m5 0h1m8 0h1m16 0h1m25 0h1m5 0h1m12 0h1m5 0h1m2 0h2M3 22.5h1m1 0h1m1 0h1m2 0h1m3 0h5m1 0h1m13 0h1m5 0h1m5 0h3m6 0h1m5 0h1m10 0h1m4 0h1m8 0h1m1 0h1m1 0h1m6 0h1m3 0h2m6 0h1m4 0h1m9 0h2m2 0h1m4 0h3m8 0h2m3 0h1m5 0h1m4 0h2m1 0h2m2 0h1m3 0h1m1 0h1m1 0h1m2 0h1m3 0h2m10 0h1m3 0h1m3 0h1m1 0h3m2 0h1m2 0h1m6 0h1m8 0h2m4 0h1m3 0h1m2 0h1M1 23.5h2m2 0h1m3 0h1m8 0h1m22 0h1m8 0h1m6 0h1m2 0h1m2 0h1m13 0h1m1 0h1m1 0h1m3 0h1m4 0h3m1 0h3m5 0h1m9 0h2m1 0h1m9 0h1m1 0h1m3 0h2m1 0h1m12 0h1m2 0h1m1 0h1m3 0h1m7 0h1m1 0h1m14 0h1m2 0h2m1 0h1m2 0h1m1 0h1m21 0h1m1 0h1m10 0h2m1 0h1m2 0h2M3 24.5h1m3 0h1m6 0h1m2 0h1m3 0h3m8 0h2m1 0h1m3 0h1m13 0h2m4 0h1m12 0h2m5 0h1m3 0h2m1 0h1m1 0h3m1 0h1m7 0h2m3 0h3m1 0h1m4 0h1m4 0h1m2 0h2m7 0h1m3 0h3m8 0h1m2 0h1m1 0h1m3 0h2m8 0h1m2 0h1m4 0h1m1 0h2m3 0h5m9 0h1m4 0h1m1 0h1m2 0h1m2 0h1m2 0h1m5 0h1m1 0h2m2 0h2m5 0h2m2 0h2M6 25.5h1m2 0h1m1 0h2m1 0h1m4 0h1m14 0h1m4 0h1m9 0h1m2 0h1m10 0h1m7 0h1m2 0h1m5 0h1m11 0h1m7 0h1m4 0h1m18 0h1m2 0h1m3 0h1m2 0h2m1 0h3m5 0h1m2 0h1m7 0h1m4 0h1m2 0h1m2 0h1m3 0h2m5 0h1m1 0h4m12 0h1m1 0h3m6 0h1m1 0h2m2 0h1m4 0h2m2 0h1m15 0h1m2 0h1M2 26.5h1m6 0h1m2 0h1m9 0h1m1 0h1m2 0h1m3 0h2m3 0h1m1 0h1m9 0h1m3 0h1m2 0h3m1 0h1m1 0h1m3 0h8m15 0h1m3 0h1m12 0h1m7 0h1m8 0h2m18 0h1m6 0h1m2 0h1m3 0h1m8 0h1m4 0h1m9 0h1m7 0h1m5 0h1m1 0h1m6 0h1m3 0h2m1 0h2m11 0h1m1 0h1m1 0h2m6 0h1M2 27.5h1m3 0h1m1 0h1m4 0h1m4 0h1m4 0h1m3 0h1m4 0h1m2 0h1m11 0h2m2 0h1m5 0h2m1 0h1m9 0h1m4 0h2m8 0h1m1 0h1m4 0h2m1 0h2m2 0h1m1 0h1m3 0h2m5 0h1m1 0h1m2 0h1m1 0h2m1 0h2m1 0h1m3 0h1m3 0h1m4 0h1m1 0h2m3 0h4m1 0h1m5 0h2m3 0h1m2 0h1m14 0h1m5 0h2m22 0h2m2 0h1m4 0h1m6 0h1m2 0h3m3 0h1M1 28.5h1m7 0h1m3 0h1m1 0h1m1 0h1m7 0h4m6 0h1m1 0h1m4 0h1m2 0h1m2 0h1m3 0h2m6 0h6m5 0h1m1 0h1m6 0h1m4 0h1m4 0h4m5 0h2m10 0h1m8 0h1m1 0h1m2 0h1m5 0h3m3 0h1m3 0h1m1 0h1m1 0h1m12 0h3m1 0h4m1 0h1m6 0h2m12 0h1m3 0h2m2 0h2m3 0h1m2 0h1m2 0h1m3 0h1m4 0h2m1 0h1m7 0h1m4 0h2m2 0h1m3 0h1M2 29.5h1m3 0h1m3 0h2m6 0h3m3 0h1m1 0h1m3 0h1m2 0h1m1 0h1m2 0h1m2 0h1m2 0h1m8 0h1m8 0h2m2 0h1m1 0h1m5 0h1m4 0h1m3 0h1m3 0h1m6 0h1m3 0h1m9 0h1m3 0h1m1 0h1m6 0h1m7 0h1m4 0h1m2 0h1m1 0h2m4 0h1m2 0h1m1 0h2m1 0h1m1 0h1m2 0h1m4 0h1m4 0h1m19 0h1m2 0h1m3 0h1m5 0h2m1 0h1m1 0h2m5 0h1m2 0h1m2 0h1m2 0h1m12 0h1m2 0h1M3 30.5h1m3 0h1m3 0h1m3 0h4m5 0h1m5 0h1m6 0h1m2 0h1m3 0h2m3 0h1m3 0h1m2 0h2m1 0h1m1 0h5m1 0h2m4 0h1m1 0h2m2 0h1m5 0h1m11 0h1m1 0h3m8 0h2m1 0h2m3 0h1m1 0h2m3 0h1m3 0h6m3 0h1m1 0h2m7 0h3m2 0h1m7 0h1m3 0h5m10 0h2m4 0h1m6 0h1m1 0h4m1 0h1m5 0h1m3 0h1m1 0h3m3 0h1m7 0h1m1 0h2m6 0h1M0 31.5h1m6 0h1m2 0h1m8 0h1m1 0h2m1 0h1m4 0h1m4 0h1m7 0h1m4 0h1m2 0h1m1 0h1m3 0h1m6 0h1m13 0h1m4 0h1m5 0h5m1 0h1m1 0h3m4 0h1m2 0h2m1 0h1m8 0h2m1 0h1m2 0h1m7 0h1m3 0h1m5 0h2m1 0h1m1 0h1m1 0h1m3 0h1m3 0h1m1 0h1m1 0h2m3 0h1m3 0h1m4 0h1m5 0h1m4 0h3m2 0h1m5 0h1m7 0h1m1 0h4m4 0h3m2 0h1m1 0h1m6 0h1m2 0h1m3 0h1m1 0h1m1 0h1M3 32.5h1m6 0h1m5 0h1m1 0h2m4 0h1m8 0h1m4 0h1m2 0h1m2 0h1m2 0h1m5 0h1m15 0h2m4 0h1m3 0h3m4 0h2m2 0h2m2 0h1m1 0h2m2 0h3m2 0h1m2 0h1m2 0h1m6 0h1m3 0h2m10 0h3m5 0h2m5 0h3m13 0h1m2 0h1m3 0h1m8 0h1m5 0h1m4 0h1m4 0h1m13 0h1m2 0h1m6 0h1m7 0h1m2 0h1m7 0h1M13 33.5h1m13 0h2m117 0h1m2 0h1m17 0h1m30 0h1m24 0h1M22 34.5h3m10 0h1m1 0h1m2 0h2m30 0h1m20 0h1m3 0h1m44 0h1m1 0h1m1 0h2m8 0h1m21 0h1m46 0h2M16 35.5h2m3 0h1m4 0h3m3 0h1m3 0h4m3 0h1m5 0h2m3 0h1m3 0h2m1 0h1m13 0h2m1 0h2m3 0h2m2 0h1m2 0h1m2 0h2m1 0h1m3 0h1m4 0h2m2 0h7m2 0h3m6 0h1m1 0h1m6 0h1m10 0h1m3 0h1m3 0h2m6 0h1m1 0h1m4 0h1m1 0h1m1 0h1m6 0h2m7 0h2m4 0h1m6 0h1m4 0h2m1 0h1m2 0h1m3 0h2m4 0h2m4 0h1m2 0h1M8 36.5h3m1 0h1m1 0h1m8 0h1m6 0h4m4 0h3m6 0h1m2 0h1m1 0h1m1 0h1m1 0h2m2 0h1m1 0h2m1 0h1m13 0h1m5 0h1m3 0h1m4 0h2m4 0h2m2 0h4m7 0h1m5 0h2m2 0h1m4 0h1m1 0h3m1 0h2m9 0h1m2 0h1m1 0h1m1 0h1m2 0h2m3 0h2m9 0h1m3 0h1m3 0h2m3 0h1m4 0h1m1 0h1m1 0h5m3 0h1m7 0h1m1 0h1m7 0h1m1 0h1m13 0h1m2 0h1M7 37.5h2m5 0h1m3 0h3m6 0h1m2 0h1m1 0h1m1 0h1m1 0h2m2 0h1m20 0h1m1 0h2m1 0h2m6 0h2m4 0h3m6 0h1m1 0h2m8 0h4m12 0h1m1 0h1m3 0h1m1 0h3m1 0h1m3 0h1m1 0h1m1 0h3m1 0h2m2 0h1m1 0h1m5 0h1m2 0h1m3 0h1m1 0h1m1 0h1m1 0h2m1 0h1m7 0h1m5 0h1m1 0h1m3 0h4m4 0h1m5 0h2m3 0h1m12 0h1m5 0h3m3 0h1m1 0h1m5 0h1M3 38.5h1m5 0h1m4 0h1m9 0h3m2 0h1m13 0h2m6 0h2m14 0h2m5 0h1m6 0h2m10 0h2m13 0h1m3 0h3m8 0h1m2 0h2m5 0h1m7 0h2m3 0h1m12 0h2m2 0h1m8 0h1m7 0h1m3 0h2m5 0h1m3 0h1m19 0h4m11 0h2M8 39.5h1m5 0h1m1 0h1m3 0h1m2 0h2m1 0h1m1 0h1m5 0h3m3 0h2m5 0h1m2 0h3m2 0h1m2 0h1m6 0h2m9 0h3m2 0h2m2 0h2m5 0h1m3 0h1m1 0h1m5 0h2m4 0h1m1 0h1m2 0h2m2 0h2m1 0h5m1 0h2m3 0h1m8 0h5m3 0h1m5 0h3m6 0h1m1 0h2m1 0h1m2 0h1m2 0h5m9 0h2m3 0h3m1 0h1m24 0h1m2 0h1m7 0h1m2 0h2M6 40.5h1m1 0h2m6 0h1m8 0h2m15 0h1m3 0h1m3 0h2m4 0h1m7 0h2m7 0h2m6 0h1m6 0h1m1 0h1m3 0h2m1 0h1m4 0h2m7 0h1m9 0h1m2 0h2m7 0h1m11 0h1m3 0h2m3 0h3m24 0h2m3 0h1m3 0h3m41 0h2m2 0h2M0 41.5h1m1 0h1m5 0h2m8 0h2m1 0h1m5 0h1m5 0h1m1 0h1m1 0h1m7 0h1m8 0h1m1 0h1m1 0h1m4 0h1m1 0h1m4 0h1m2 0h1m3 0h1m1 0h1m1 0h4m11 0h1m11 0h2m1 0h1m2 0h2m10 0h2m3 0h1m1 0h2m1 0h2m8 0h1m3 0h1m3 0h3m1 0h1m3 0h4m3 0h1m4 0h1m6 0h1m3 0h1m3 0h1m1 0h1m2 0h1m10 0h2m1 0h1m1 0h1m2 0h1m3 0h1m3 0h1m3 0h1m1 0h1m7 0h3m1 0h1M8 42.5h5m1 0h1m9 0h1m6 0h1m3 0h2m3 0h1m6 0h1m1 0h1m2 0h1m3 0h1m4 0h2m1 0h1m1 0h4m2 0h1m5 0h2m10 0h1m11 0h1m3 0h1m11 0h4m1 0h1m7 0h1m1 0h1m1 0h1m1 0h1m4 0h2m13 0h1m4 0h1m3 0h1m12 0h2m4 0h1m3 0h1m2 0h1m5 0h1m1 0h2m1 0h2m1 0h2m1 0h1m1 0h1m6 0h1m2 0h1m1 0h2m2 0h2m2 0h3m3 0h2m1 0h1M4 43.5h1m15 0h1m2 0h1m9 0h1m1 0h1m2 0h2m2 0h1m1 0h1m4 0h1m6 0h2m4 0h1m9 0h1m1 0h1m7 0h1m1 0h1m23 0h2m6 0h1m8 0h1m3 0h1m2 0h1m2 0h1m16 0h1m5 0h1m18 0h1m5 0h1m1 0h1m1 0h1m11 0h1m1 0h1m4 0h1m4 0h1m1 0h1m18 0h1m3 0h1M5 44.5h1m7 0h1m15 0h1m8 0h1m7 0h1m5 0h1m22 0h1m6 0h1m1 0h1m10 0h1m2 0h1m9 0h2m3 0h1m2 0h1m26 0h1m4 0h1m13 0h1m16 0h1m11 0h2m4 0h2m6 0h1m3 0h1m5 0h2m4 0h1m1 0h1M2 45.5h1m9 0h4m7 0h1m10 0h1m1 0h2m6 0h1m3 0h2m2 0h7m1 0h1m5 0h1m4 0h1m3 0h2m4 0h2m3 0h3m2 0h1m4 0h1m3 0h1m9 0h2m2 0h1m3 0h1m1 0h2m1 0h1m5 0h1m8 0h1m5 0h1m2 0h1m1 0h1m4 0h1m3 0h1m4 0h3m1 0h1m3 0h1m2 0h2m1 0h1m7 0h1m1 0h1m24 0h1m3 0h3m3 0h1m9 0h1m4 0h1M1 46.5h1m1 0h1m3 0h1m2 0h3m5 0h1m5 0h4m1 0h1m3 0h1m14 0h1m1 0h3m1 0h2m4 0h2m6 0h1m4 0h6m8 0h2m13 0h1m3 0h4m1 0h1m1 0h1m1 0h1m9 0h1m11 0h1m12 0h1m10 0h1m1 0h1m4 0h2m4 0h1m5 0h1m4 0h4m5 0h1m7 0h1m11 0h1m1 0h1m1 0h4m8 0h2M7 47.5h1m3 0h1m1 0h1m11 0h1m5 0h2m3 0h1m6 0h4m1 0h1m4 0h1m3 0h1m2 0h1m1 0h1m2 0h1m12 0h4m1 0h2m5 0h1m5 0h1m4 0h1m1 0h1m1 0h1m2 0h1m8 0h1m2 0h1m1 0h1m1 0h1m2 0h3m6 0h1m1 0h1m4 0h1m1 0h3m9 0h2m1 0h1m2 0h1m4 0h1m1 0h1m1 0h1m7 0h2m1 0h3m4 0h2m6 0h1m4 0h1m6 0h4m1 0h4m14 0h2m3 0h1m2 0h1M3 48.5h1m1 0h1m1 0h1m2 0h3m1 0h1m4 0h2m4 0h3m3 0h1m5 0h1m3 0h2m3 0h1m5 0h1m4 0h1m1 0h2m1 0h1m1 0h1m1 0h3m3 0h1m3 0h1m1 0h1m4 0h2m2 0h1m1 0h1m3 0h1m6 0h1m3 0h1m8 0h1m1 0h1m3 0h1m9 0h1m3 0h1m8 0h2m9 0h1m2 0h1m1 0h1m1 0h3m1 0h1m1 0h3m4 0h1m4 0h3m6 0h1m4 0h1m9 0h1m5 0h1m2 0h3m4 0h1m3 0h1m6 0h3m6 0h1M12 49.5h2m9 0h1m6 0h5m2 0h1m8 0h2m1 0h1m8 0h1m4 0h1m9 0h2m3 0h1m3 0h3m3 0h2m1 0h1m1 0h1m37 0h3m15 0h1m8 0h1m1 0h2m11 0h2m8 0h1m3 0h1m9 0h2m17 0h3m8 0h1m11 0h1m1 0h1M7 50.5h3m1 0h1m2 0h1m2 0h1m1 0h1m2 0h2m3 0h1m1 0h1m4 0h1m1 0h1m11 0h2m5 0h3m2 0h3m3 0h1m6 0h1m3 0h1m3 0h1m9 0h1m15 0h1m4 0h2m6 0h1m2 0h2m3 0h3m2 0h1m10 0h1m16 0h1m1 0h2m2 0h2m2 0h4m3 0h1m4 0h1m1 0h1m3 0h2m26 0h1m7 0h1m5 0h1m4 0h1m1 0h2M0 51.5h2m5 0h1m9 0h2m4 0h2m4 0h1m6 0h2m8 0h3m1 0h2m3 0h3m14 0h1m2 0h1m5 0h2m3 0h1m4 0h1m6 0h1m3 0h1m2 0h1m1 0h1m10 0h1m4 0h1m1 0h1m10 0h2m2 0h1m8 0h1m12 0h1m4 0h1m5 0h1m1 0h2m5 0h2m2 0h1m1 0h1m3 0h1m2 0h1m7 0h1m2 0h1m6 0h6m1 0h2m2 0h2m3 0h1m1 0h2m1 0h1m1 0h2m2 0h1M3 52.5h3m11 0h3m3 0h1m2 0h5m4 0h1m3 0h3m1 0h4m1 0h4m1 0h2m1 0h2m11 0h1m1 0h1m5 0h1m15 0h1m5 0h3m2 0h1m1 0h2m1 0h1m7 0h1m2 0h4m1 0h1m1 0h1m16 0h1m11 0h2m2 0h3m11 0h2m2 0h1m2 0h1m5 0h3m6 0h1m7 0h1m2 0h1m13 0h1m3 0h1m2 0h2m1 0h1m3 0h2m2 0h2M0 53.5h4m4 0h1m2 0h1m1 0h1m2 0h1m1 0h1m5 0h1m1 0h1m3 0h1m3 0h1m4 0h2m6 0h1m3 0h1m10 0h1m2 0h1m4 0h1m3 0h2m4 0h1m3 0h1m5 0h1m8 0h1m2 0h3m2 0h1m1 0h1m3 0h1m3 0h1m7 0h2m1 0h4m7 0h1m3 0h1m6 0h1m2 0h1m3 0h1m6 0h1m2 0h3m1 0h1m4 0h1m3 0h1m1 0h1m7 0h2m5 0h1m1 0h2m5 0h3m1 0h1m3 0h2m2 0h5m6 0h1m2 0h1m1 0h1m4 0h1M0 54.5h1m3 0h1m1 0h1m1 0h1m5 0h7m6 0h1m3 0h2m15 0h2m3 0h1m25 0h1m1 0h2m3 0h1m3 0h1m5 0h4m2 0h1m2 0h2m4 0h1m5 0h1m1 0h1m1 0h3m11 0h1m6 0h1m12 0h4m2 0h2m35 0h1m1 0h1m3 0h1m2 0h2m1 0h1m10 0h1m3 0h2m5 0h1M7 55.5h1m3 0h1m3 0h1m1 0h1m2 0h1m2 0h1m2 0h2m5 0h2m4 0h2m3 0h2m15 0h1m2 0h1m1 0h1m5 0h4m2 0h1m3 0h5m1 0h1m5 0h2m2 0h1m2 0h1m1 0h2m1 0h1m6 0h3m2 0h2m13 0h1m1 0h2m1 0h2m8 0h1m2 0h4m1 0h1m4 0h4m3 0h1m3 0h1m2 0h1m7 0h1m4 0h1m2 0h2m12 0h3m2 0h2m1 0h1m4 0h4m3 0h1m2 0h1m5 0h1m4 0h3M1 56.5h2m3 0h1m4 0h1m2 0h1m5 0h2m2 0h2m4 0h2m1 0h1m2 0h1m1 0h6m2 0h1m1 0h2m2 0h2m11 0h2m5 0h3m7 0h2m2 0h2m1 0h2m6 0h2m5 0h1m6 0h2m2 0h1m11 0h3m1 0h3m2 0h1m3 0h1m1 0h2m1 0h1m8 0h1m2 0h2m3 0h1m2 0h4m7 0h5m1 0h1m3 0h2m7 0h1m11 0h1m2 0h3m8 0h1m2 0h2m1 0h1m7 0h1m2 0h2m1 0h1M6 57.5h1m3 0h1m5 0h3m3 0h1m1 0h1m3 0h1m4 0h1m1 0h1m2 0h1m4 0h2m7 0h1m2 0h1m4 0h4m3 0h1m7 0h1m6 0h1m4 0h1m10 0h1m4 0h1m2 0h2m6 0h2m5 0h3m1 0h1m1 0h1m12 0h1m4 0h4m2 0h1m5 0h1m7 0h1m2 0h1m1 0h2m3 0h1m4 0h3m2 0h1m7 0h2m8 0h1m2 0h1m4 0h1m2 0h1m4 0h1m1 0h2m5 0h1m3 0h2m2 0h1M2 58.5h1m6 0h1m1 0h1m2 0h1m2 0h1m6 0h1m1 0h3m1 0h1m5 0h1m1 0h2m8 0h1m4 0h1m10 0h2m2 0h2m4 0h1m3 0h1m1 0h2m5 0h1m3 0h1m2 0h1m9 0h1m7 0h1m2 0h1m7 0h1m3 0h1m2 0h1m4 0h1m4 0h1m1 0h1m5 0h4m5 0h2m1 0h1m7 0h4m25 0h1m4 0h1m4 0h4m8 0h2m5 0h1m1 0h2M5 59.5h1m5 0h1m5 0h1m8 0h2m1 0h1m2 0h1m3 0h1m3 0h2m9 0h3m3 0h1m5 0h2m1 0h2m1 0h1m3 0h1m1 0h3m3 0h2m1 0h1m15 0h1m1 0h1m7 0h1m1 0h4m5 0h2m1 0h1m4 0h1m10 0h1m7 0h2m3 0h1m2 0h2m1 0h1m5 0h1m8 0h1m9 0h3m5 0h2m2 0h1m1 0h2m4 0h2m3 0h1m3 0h2m10 0h1m3 0h2m4 0h2m1 0h4M2 60.5h1m4 0h1m15 0h1m16 0h1m18 0h1m21 0h1m5 0h1m1 0h1m6 0h1m1 0h1m7 0h1m12 0h1m9 0h1m1 0h1m22 0h1m1 0h1m2 0h1m2 0h1m3 0h1m10 0h2m3 0h1m3 0h1m6 0h1m12 0h2m3 0h1m18 0h1m3 0h1m5 0h1M2 61.5h1m2 0h1m15 0h1m11 0h2m5 0h1m2 0h1m13 0h1m1 0h1m20 0h1m7 0h1m10 0h1m6 0h1m5 0h1m13 0h1m21 0h1m19 0h1m19 0h2m10 0h1m8 0h1m27 0h1M5 62.5h2m5 0h1m5 0h1m4 0h1m6 0h1m4 0h1m8 0h1m1 0h1m6 0h1m3 0h1m5 0h1m27 0h1m16 0h1m5 0h1m1 0h1m1 0h2m4 0h1m4 0h1m15 0h1m2 0h1m2 0h1m18 0h1m5 0h1m9 0h1m8 0h1m5 0h1m7 0h1m8 0h1m5 0h1m4 0h1m3 0h1M4 63.5h2m3 0h3m5 0h2m5 0h1m7 0h2m6 0h1m13 0h1m1 0h1m1 0h1m3 0h4m3 0h1m2 0h1m7 0h1m2 0h1m6 0h1m3 0h2m2 0h2m1 0h1m4 0h1m1 0h2m5 0h1m3 0h2m2 0h1m3 0h1m2 0h1m2 0h2m1 0h1m8 0h1m2 0h1m9 0h2m4 0h1m1 0h1m1 0h1m2 0h1m5 0h1m1 0h2m2 0h1m1 0h2m2 0h1m2 0h1m6 0h1m5 0h1m8 0h1m6 0h1m6 0h1m1 0h1m5 0h1m3 0h1M0 64.5h1m24 0h1m1 0h1m1 0h1m9 0h1m1 0h1m3 0h1m5 0h1m2 0h3m10 0h2m7 0h1m7 0h3m4 0h1m3 0h1m4 0h1m5 0h1m4 0h1m2 0h1m4 0h1m1 0h2m1 0h1m2 0h1m5 0h1m15 0h2m9 0h1m15 0h1m8 0h1m2 0h1m2 0h1m7 0h2m1 0h1m5 0h1m1 0h1m3 0h1m6 0h1m1 0h1m8 0h1M5 65.5h1m4 0h3m3 0h1m4 0h1m9 0h2m13 0h1m2 0h1m6 0h1m2 0h2m2 0h1m1 0h3m14 0h1m1 0h1m1 0h1m3 0h1m13 0h1m3 0h2m3 0h1m1 0h1m5 0h1m1 0h1m1 0h1m2 0h1m10 0h4m6 0h1m21 0h1m2 0h1m8 0h1m4 0h1m5 0h1m2 0h1m2 0h1m1 0h1m2 0h1m3 0h1m11 0h1m2 0h2m10 0h1m2 0h3M6 66.5h1m1 0h1m3 0h1m3 0h2m4 0h2m5 0h1m5 0h2m3 0h1m4 0h1m7 0h1m2 0h1m2 0h1m6 0h3m1 0h3m1 0h1m2 0h1m12 0h3m9 0h5m5 0h1m2 0h2m5 0h1m4 0h1m2 0h1m3 0h1m3 0h1m12 0h1m4 0h1m7 0h1m1 0h1m6 0h1m1 0h5m1 0h1m3 0h2m12 0h1m1 0h1m5 0h1m1 0h1m1 0h2m1 0h1m4 0h1m2 0h2m4 0h1m10 0h1M22 67.5h2m19 0h1m25 0h1m8 0h1m12 0h1m6 0h1m38 0h1m4 0h2m2 0h1m10 0h1m1 0h1m16 0h1m5 0h2m4 0h1m5 0h2m2 0h1M3 69.5h2m12 0h1m5 0h1m1 0h1m6 0h2m1 0h1m1 0h1m10 0h2m5 0h1m1 0h2m6 0h2m2 0h1m3 0h2m8 0h1m2 0h2m1 0h1m6 0h2m7 0h2m7 0h1m2 0h1m1 0h1m2 0h1m6 0h1m4 0h1m2 0h1m4 0h1m2 0h3m1 0h1m8 0h1m9 0h1m3 0h2m4 0h3m3 0h1m5 0h2m1 0h1m7 0h1m2 0h2m3 0h2m2 0h1m2 0h2m1 0h1m4 0h1m2 0h2m4 0h1m2 0h1M8 70.5h2m5 0h1m7 0h1m2 0h1m11 0h1m1 0h1m12 0h1m2 0h1m11 0h1m4 0h1m13 0h1m2 0h3m4 0h1m5 0h1m7 0h1m2 0h1m1 0h1m12 0h1m2 0h1m3 0h1m3 0h1m9 0h2m3 0h1m2 0h1m1 0h1m1 0h2m4 0h1m1 0h1m6 0h3m7 0h1m8 0h1m1 0h1m4 0h1m4 0h2m5 0h1m2 0h1m13 0h3m3 0h1m2 0h1M8 71.5h1m3 0h1m4 0h3m2 0h2m5 0h1m1 0h1m4 0h5m11 0h1m1 0h1m3 0h2m1 0h1m2 0h1m1 0h3m5 0h1m5 0h1m3 0h4m2 0h1m2 0h2m2 0h2m4 0h1m1 0h5m1 0h1m1 0h1m2 0h1m10 0h1m2 0h2m7 0h2m4 0h2m2 0h1m1 0h1m1 0h1m3 0h4m1 0h1m1 0h1m1 0h1m1 0h1m6 0h3m2 0h1m5 0h2m4 0h1m16 0h1m6 0h3m2 0h3m5 0h1m2 0h1m3 0h2m3 0h1M10 72.5h1m3 0h2m1 0h1m2 0h1m4 0h2m2 0h1m15 0h2m5 0h2m2 0h1m1 0h1m15 0h3m1 0h2m1 0h1m1 0h3m4 0h1m2 0h1m2 0h1m2 0h2m3 0h3m6 0h1m1 0h1m5 0h1m3 0h2m5 0h1m1 0h1m4 0h3m3 0h2m4 0h1m4 0h2m18 0h1m3 0h1m2 0h1m2 0h3m1 0h2m6 0h1m2 0h1m5 0h1m3 0h1m1 0h1m1 0h1m8 0h2M0 73.5h1m11 0h3m4 0h1m7 0h1m1 0h1m1 0h1m6 0h1m2 0h1m1 0h1m3 0h2m10 0h1m3 0h1m6 0h2m1 0h1m11 0h1m21 0h1m6 0h2m5 0h2m2 0h1m7 0h1m6 0h1m8 0h2m3 0h1m4 0h1m7 0h1m3 0h1m6 0h2m2 0h1m17 0h1m2 0h1m2 0h3m3 0h1m1 0h1m6 0h1m2 0h1m4 0h3m1 0h1m3 0h3M0 74.5h2m13 0h1m10 0h2m1 0h2m7 0h1m2 0h1m5 0h1m3 0h1m6 0h2m4 0h2m2 0h2m1 0h1m1 0h1m3 0h2m12 0h1m1 0h1m7 0h1m3 0h1m7 0h1m15 0h1m13 0h1m10 0h1m36 0h1m7 0h4m5 0h1m1 0h1m3 0h1m6 0h1m2 0h1m2 0h2m7 0h5M0 75.5h1m12 0h1m1 0h1m2 0h1m1 0h1m15 0h1m6 0h1m1 0h1m1 0h1m3 0h1m2 0h2m4 0h1m1 0h1m4 0h1m3 0h1m6 0h1m6 0h1m3 0h1m10 0h1m1 0h1m1 0h1m5 0h2m3 0h1m2 0h2m11 0h1m2 0h1m3 0h1m2 0h1m5 0h1m6 0h1m10 0h1m8 0h1m7 0h1m5 0h1m6 0h2m2 0h1m3 0h2m2 0h1m1 0h1m1 0h3m2 0h1m6 0h1m14 0h1M2 76.5h1m1 0h2m14 0h2m2 0h1m5 0h1m3 0h2m1 0h1m13 0h3m1 0h1m3 0h1m5 0h1m8 0h2m4 0h1m2 0h1m5 0h3m1 0h1m7 0h2m2 0h1m2 0h2m2 0h1m3 0h1m15 0h3m8 0h2m3 0h1m2 0h1m5 0h1m1 0h4m4 0h1m1 0h1m5 0h1m2 0h1m8 0h1m4 0h1m7 0h1m1 0h1m4 0h1m1 0h4m17 0h2m1 0h2m4 0h2M6 77.5h1m15 0h3m6 0h1m2 0h1m4 0h1m23 0h2m3 0h1m1 0h1m3 0h1m1 0h1m4 0h1m2 0h1m4 0h1m6 0h3m11 0h2m4 0h1m1 0h2m7 0h1m3 0h1m2 0h1m7 0h1m25 0h1m16 0h2m17 0h1m8 0h1m19 0h2m4 0h2M2 78.5h1m23 0h1m2 0h1m1 0h1m25 0h2m10 0h1m2 0h1m13 0h1m2 0h1m3 0h1m11 0h1m2 0h1m3 0h1m3 0h1m2 0h1m9 0h1m20 0h1m3 0h2m8 0h1m9 0h1m4 0h1m3 0h3m2 0h1m1 0h2m5 0h1m25 0h1M2 79.5h1m16 0h2m15 0h1m6 0h2m3 0h1m5 0h1m26 0h1m1 0h1m17 0h1m3 0h2m8 0h1m12 0h2m15 0h1m2 0h1m13 0h1m8 0h1m9 0h1m6 0h1m3 0h1m13 0h1m1 0h1m30 0h2M24 80.5h1m14 0h1m21 0h1m9 0h1m1 0h1m14 0h1m42 0h1m9 0h1m49 0h1m45 0h1m3 0h1M21 81.5h1m24 0h1m27 0h1m44 0h1m13 0h1m14 0h1m7 0h1m3 0h2m46 0h1m19 0h2M121 82.5h1m12 0h1m40 0h1m20 0h1m27 0h1m3 0h1m2 0h1M14 83.5h1m15 0h1m6 0h1m25 0h1m45 0h1m15 0h1m34 0h1m4 0h2m15 0h1m10 0h1m2 0h2M0 84.5h2m26 0h1m48 0h1m34 0h1m14 0h1m15 0h1m47 0h1m36 0h1m9 0h1m2 0h1M35 85.5h1m6 0h2m22 0h1m5 0h1m77 0h1m38 0h1m9 0h1m24 0h1M51 86.5h1m1 0h1m45 0h1m55 0h1m27 0h1m10 0h1m18 0h2m21 0h2M21 87.5h1m19 0h1m41 0h1m15 0h1m12 0h1m15 0h1m10 0h1m15 0h1M19 88.5h1m21 0h2m20 0h1m62 0h1m74 0h1m28 0h1M57 89.5h1m90 0h1M89 90.5h1m42 0h1m23 0h1m42 0h1m7 0h1m11 0h1M11 91.5h1m37 0h1m33 0h2m84 0h1m13 0h2m7 0h2M26 92.5h1m7 0h1m13 0h2m19 0h1m88 0h1m12 0h1m10 0h1m9 0h1m30 0h1m6 0h1M9 95.5h1m2 0h1m24 0h1m15 0h1m13 0h1m4 0h1m17 0h1m132 0h2m3 0h1M5 96.5h1m13 0h1m32 0h1m5 0h1m10 0h1m2 0h1m1 0h1m5 0h1m28 0h1m14 0h1m3 0h2m2 0h1m5 0h1m7 0h2m3 0h1m5 0h1m9 0h1m9 0h1m3 0h1m14 0h1m11 0h1m3 0h1m4 0h2m1 0h1m5 0h1m2 0h1m4 0h1M3 97.5h2m36 0h1m15 0h1m2 0h1m13 0h1m9 0h1m6 0h1m1 0h2m3 0h1m2 0h1m20 0h1m8 0h1m18 0h1m11 0h1m5 0h1m2 0h1m14 0h1m21 0h1m9 0h1m5 0h2m7 0h1m2 0h1M0 98.5h1m5 0h1m3 0h1m2 0h2m6 0h1m11 0h1m4 0h1m2 0h1m2 0h1m2 0h1m1 0h1m8 0h1m6 0h3m5 0h1m6 0h1m13 0h3m10 0h1m3 0h1m12 0h1m8 0h1m5 0h1m7 0h2m2 0h1m2 0h3m9 0h1m2 0h1m5 0h1m5 0h1m13 0h1m5 0h1m13 0h1m3 0h1m16 0h1m2 0h1M0 99.5h1m10 0h1m5 0h2m16 0h1m4 0h1m8 0h1m11 0h2m2 0h1m4 0h2m5 0h1m8 0h1m1 0h1m1 0h1m7 0h1m1 0h1m11 0h1m8 0h1m2 0h2m10 0h1m3 0h2m4 0h1m1 0h1m11 0h1m1 0h1m1 0h1m1 0h1m24 0h1m2 0h2m1 0h2m10 0h1m5 0h2m1 0h1m2 0h1m6 0h1m1 0h1m7 0h1"/>
<path stroke="#ee6e22" d="M194 13.5h1M3 14.5h2m89 0h1m64 0h1m66 0h1M3 15.5h1m21 0h1m55 0h1m6 0h1m11 0h1m29 0h1m4 0h1m22 0h2m12 0h1m5 0h1m23 0h1m23 0h1m7 0h1M15 17.5h1m4 0h1m4 0h1m13 0h1m6 0h1m2 0h1m33 0h1m5 0h1m3 0h1m41 0h1m8 0h1m4 0h2m10 0h1m5 0h1m5 0h2m54 0h3M6 18.5h1m59 0h1m12 0h1m79 0h1m11 0h2m5 0h2m7 0h1m6 0h1m2 0h1m33 0h1M8 19.5h1m1 0h1m1 0h1m2 0h1m4 0h5m3 0h2m3 0h1m2 0h1m5 0h1m3 0h6m17 0h1m3 0h1m5 0h1m11 0h1m4 0h2m19 0h2m8 0h3m7 0h1m9 0h1m7 0h4m2 0h1m1 0h1m1 0h1m3 0h4m4 0h1m1 0h2m3 0h3m8 0h1m6 0h1m2 0h1m1 0h1m17 0h1m2 0h1m2 0h1m8 0h2M4 20.5h1m5 0h1m3 0h1m1 0h1m4 0h2m7 0h2m3 0h1m3 0h2m8 0h1m11 0h1m1 0h1m1 0h2m9 0h5m14 0h1m2 0h1m5 0h1m1 0h1m2 0h1m3 0h1m1 0h1m1 0h2m5 0h1m5 0h1m1 0h1m5 0h1m6 0h1m1 0h1m1 0h1m3 0h2m1 0h2m1 0h1m6 0h1m3 0h1m1 0h2m2 0h2m1 0h1m2 0h1m4 0h1m2 0h5m7 0h1m1 0h2m4 0h1m10 0h1m13 0h1m1 0h1M8 21.5h2m4 0h1m7 0h1m1 0h1m1 0h1m8 0h1m8 0h1m21 0h1m1 0h2m9 0h1m16 0h2m9 0h3m3 0h1m2 0h1m11 0h1m3 0h1m4 0h1m9 0h1m1 0h1m1 0h1m10 0h2m1 0h1m5 0h1m4 0h1m5 0h1m12 0h1m1 0h3m1 0h1m2 0h1m5 0h1m3 0h2m1 0h1m5 0h1m1 0h1m2 0h1m4 0h2M1 22.5h2m3 0h1m1 0h2m14 0h1m2 0h1m2 0h2m7 0h1m4 0h2m7 0h2m1 0h1m3 0h1m1 0h1m1 0h2m1 0h1m3 0h1m1 0h2m10 0h1m1 0h1m7 0h2m9 0h1m4 0h2m2 0h3m11 0h1m9 0h1m1 0h1m4 0h1m4 0h1m10 0h1m9 0h1m1 0h1m2 0h1m3 0h1m2 0h1m1 0h1m4 0h3m7 0h1m11 0h1m1 0h4m1 0h2m8 0h1M6 23.5h1m1 0h1m6 0h1m1 0h1m2 0h1m7 0h2m5 0h1m3 0h2m1 0h1m1 0h1m3 0h1m5 0h1m1 0h1m4 0h2m2 0h2m8 0h1m4 0h1m8 0h1m19 0h3m2 0h1m5 0h1m1 0h1m3 0h1m1 0h1m6 0h1m4 0h1m1 0h3m1 0h1m1 0h2m3 0h3m2 0h1m6 0h1m2 0h3m8 0h1m2 0h1m5 0h2m8 0h2m2 0h1m9 0h1m5 0h1m1 0h1m2 0h2m11 0h3m2 0h1M1 24.5h1m6 0h2m1 0h3m1 0h2m7 0h4m14 0h1m3 0h1m13 0h2m8 0h2m9 0h1m3 0h1m5 0h1m2 0h5m4 0h1m11 0h2m30 0h2m5 0h1m8 0h1m10 0h1m16 0h2m2 0h1m7 0h1m9 0h1m3 0h1m10 0h1m2 0h1m9 0h1M0 25.5h3m13 0h1m1 0h1m7 0h1m6 0h1m14 0h1m8 0h1m10 0h2m2 0h1m4 0h1m3 0h2m2 0h1m3 0h3m19 0h1m1 0h3m1 0h1m7 0h1m14 0h1m8 0h5m6 0h1m1 0h2m9 0h3m1 0h1m11 0h1m1 0h1m1 0h1m9 0h1m4 0h1m2 0h2m10 0h1m4 0h1m1 0h1m1 0h1m1 0h1m2 0h1M6 26.5h3m1 0h2m2 0h1m1 0h1m1 0h2m3 0h1m1 0h1m4 0h1m2 0h2m2 0h1m2 0h1m6 0h1m3 0h1m6 0h1m1 0h1m2 0h2m8 0h2m5 0h3m4 0h1m1 0h1m9 0h1m2 0h3m6 0h2m1 0h1m1 0h1m11 0h1m3 0h1m1 0h1m1 0h2m2 0h2m2 0h2m7 0h2m12 0h2m7 0h2m1 0h1m5 0h1m3 0h3m3 0h1m1 0h3m2 0h1m10 0h2m2 0h5m7 0h2m3 0h1m2 0h1M3 27.5h1m1 0h1m20 0h1m10 0h2m1 0h1m18 0h1m4 0h1m3 0h1m2 0h1m1 0h2m9 0h1m1 0h1m1 0h1m1 0h2m5 0h2m1 0h1m7 0h1m1 0h1m2 0h1m4 0h1m5 0h1m3 0h1m7 0h2m4 0h1m11 0h2m2 0h1m6 0h1m1 0h2m3 0h3m2 0h1m5 0h1m4 0h1m2 0h2m10 0h1m22 0h1m8 0h2M2 28.5h2m3 0h2m5 0h1m5 0h1m3 0h1m4 0h1m4 0h1m8 0h2m29 0h1m2 0h1m3 0h1m21 0h2m16 0h1m1 0h1m11 0h2m9 0h1m3 0h1m20 0h2m4 0h1m1 0h1m22 0h2m9 0h2m5 0h2m9 0h1m3 0h1m5 0h1M3 29.5h2m3 0h2m13 0h1m1 0h1m1 0h1m6 0h1m1 0h1m3 0h1m4 0h2m1 0h2m4 0h1m9 0h2m10 0h1m1 0h1m7 0h1m5 0h2m11 0h1m4 0h1m7 0h3m3 0h2m1 0h2m6 0h1m2 0h1m2 0h1m5 0h1m1 0h1m4 0h1m4 0h4m2 0h1m3 0h1m2 0h1m1 0h1m2 0h3m5 0h2m5 0h1m12 0h1m3 0h1m4 0h2m12 0h1m1 0h1m3 0h1M4 30.5h1m24 0h1m3 0h2m12 0h2m25 0h1m5 0h2m11 0h1m1 0h2m1 0h1m6 0h4m10 0h1m15 0h3m1 0h1m2 0h1m2 0h3m11 0h1m3 0h3m19 0h1m5 0h1m1 0h1m6 0h1m7 0h3m12 0h2m3 0h1m2 0h6M1 31.5h1m6 0h1m8 0h2m4 0h1m8 0h1m3 0h1m7 0h2m14 0h1m4 0h2m2 0h2m2 0h2m3 0h4m1 0h2m8 0h1m5 0h2m13 0h3m3 0h1m7 0h1m29 0h1m4 0h3m1 0h1m1 0h1m19 0h1m6 0h1m5 0h1m3 0h1m11 0h2m1 0h1m4 0h1m7 0h2m5 0h1M2 32.5h1m5 0h2m7 0h1m14 0h1m4 0h1m4 0h1m9 0h1m10 0h2m3 0h1m4 0h1m2 0h2m5 0h2m7 0h2m1 0h1m8 0h1m2 0h1m2 0h1m2 0h1m1 0h1m9 0h2m10 0h2m5 0h2m20 0h1m2 0h3m1 0h1m2 0h1m1 0h2m16 0h1m5 0h1m10 0h1m1 0h3m20 0h2M16 33.5h1m17 0h1m16 0h1m13 0h1m156 0h1m5 0h1M8 34.5h1m4 0h1m1 0h1m1 0h3m11 0h1m11 0h1m1 0h1m6 0h1m10 0h1m1 0h1m3 0h1m3 0h2m11 0h1m5 0h1m20 0h2m10 0h1m3 0h1m10 0h2m3 0h1m2 0h1m1 0h2m2 0h1m2 0h2m7 0h2m2 0h2m9 0h2m1 0h1m9 0h2m6 0h1m1 0h1m1 0h2m6 0h1m2 0h1m3 0h3m11 0h1m1 0h1m1 0h1M4 35.5h1m1 0h1m1 0h5m7 0h1m9 0h1m13 0h2m14 0h1m7 0h3m1 0h3m2 0h1m10 0h1m2 0h1m5 0h1m9 0h1m8 0h1m13 0h1m1 0h1m1 0h1m29 0h1m8 0h1m4 0h2m17 0h1m2 0h2m5 0h1m7 0h1m4 0h2m1 0h1m5 0h1m7 0h4M11 36.5h1m1 0h1m6 0h1m5 0h2m8 0h1m16 0h1m7 0h1m4 0h1m21 0h1m22 0h3m2 0h1m1 0h3m3 0h1m10 0h1m12 0h1m4 0h1m20 0h1m19 0h1m7 0h1m1 0h1m9 0h4m6 0h2m6 0h2M0 37.5h1m30 0h1m18 0h4m6 0h1m10 0h2m6 0h1m8 0h1m1 0h1m22 0h2m13 0h1m5 0h1m22 0h3m1 0h1m3 0h1m2 0h1m6 0h2m9 0h2m6 0h1m1 0h1m22 0h1m12 0h1m1 0h1m5 0h1M8 38.5h1m11 0h1m24 0h1m31 0h4m8 0h2m43 0h2m8 0h2m15 0h2m10 0h1m1 0h1m17 0h2m2 0h1m28 0h1M9 39.5h1m3 0h1m11 0h1m4 0h1m25 0h2m10 0h1m5 0h1m4 0h2m9 0h2m1 0h1m1 0h1m3 0h4m14 0h1m3 0h1m10 0h1m14 0h3m9 0h1m1 0h1m1 0h2m22 0h1m4 0h3m3 0h1m16 0h2m2 0h1m1 0h1m3 0h2M96 40.5h1m1 0h1m31 0h1m56 0h1m52 0h1M1 41.5h1m1 0h1m30 0h1m6 0h1m11 0h1m10 0h1m9 0h3m21 0h2m4 0h1m30 0h1m11 0h2m31 0h1m53 0h1m3 0h1M2 42.5h6m5 0h1m5 0h1m1 0h3m5 0h1m3 0h1m5 0h1m1 0h1m3 0h1m2 0h1m1 0h2m2 0h1m2 0h1m5 0h1m9 0h1m1 0h3m2 0h2m2 0h1m1 0h1m2 0h1m4 0h1m3 0h1m4 0h1m1 0h1m4 0h1m1 0h1m1 0h1m12 0h1m1 0h1m2 0h1m3 0h1m1 0h2m1 0h1m3 0h4m5 0h3m4 0h1m5 0h6m4 0h2m9 0h1m4 0h2m2 0h1m7 0h1m2 0h1m1 0h1m1 0h1m1 0h1m1 0h1m12 0h1m6 0h1m2 0h1M0 43.5h1m1 0h2m7 0h1m7 0h1m7 0h1m1 0h1m1 0h2m3 0h1m6 0h1m6 0h1m2 0h1m1 0h1m2 0h1m2 0h1m1 0h2m6 0h1m7 0h2m2 0h1m10 0h1m7 0h5m3 0h2m1 0h1m5 0h1m1 0h1m14 0h1m1 0h1m5 0h1m3 0h1m1 0h2m1 0h2m1 0h1m2 0h1m1 0h3m2 0h1m8 0h2m1 0h1m5 0h1m8 0h1m2 0h3m1 0h1m1 0h3m2 0h1m8 0h1m1 0h4m2 0h1m1 0h1m3 0h2m1 0h1m3 0h2m2 0h1M6 44.5h1m3 0h1m1 0h1m5 0h1m1 0h1m9 0h1m4 0h2m2 0h1m1 0h1m5 0h3m3 0h1m3 0h1m2 0h1m6 0h1m2 0h1m5 0h2m11 0h1m7 0h1m1 0h1m3 0h1m8 0h1m1 0h2m10 0h1m5 0h1m1 0h1m3 0h1m8 0h1m1 0h1m1 0h2m1 0h2m7 0h1m4 0h2m5 0h1m5 0h1m2 0h1m1 0h1m6 0h1m10 0h1m2 0h1m12 0h1m3 0h1m1 0h2m6 0h2m3 0h2M3 45.5h2m19 0h2m19 0h3m13 0h2m9 0h1m4 0h1m14 0h1m8 0h1m17 0h1m5 0h2m28 0h1m4 0h3m5 0h3m7 0h1m34 0h3m7 0h1M6 46.5h1m40 0h1m42 0h1m9 0h2m12 0h1m96 0h1m3 0h1m6 0h1m6 0h1m2 0h1M9 47.5h1m2 0h1m13 0h5m6 0h1m11 0h2m7 0h2m1 0h1m9 0h2m19 0h1m9 0h1m3 0h2m3 0h2m8 0h1m1 0h1m20 0h1m14 0h1m9 0h1m7 0h1m8 0h2m5 0h1m26 0h2m10 0h1m6 0h2M4 48.5h1m1 0h1m11 0h1m9 0h1m1 0h1m3 0h1m21 0h1m4 0h1m3 0h1m22 0h1m1 0h1m1 0h1m1 0h1m26 0h1m1 0h1m6 0h2m17 0h1m4 0h2m1 0h1m1 0h1m5 0h1m11 0h1m7 0h2m10 0h3m9 0h1m11 0h1m1 0h2m7 0h4m3 0h2M19 49.5h1m16 0h1m19 0h2m32 0h1m3 0h1m6 0h1m57 0h1m24 0h3m1 0h2m35 0h2m13 0h1M18 50.5h1m7 0h1m66 0h1m1 0h1m88 0h1M27 51.5h2m35 0h2m7 0h1m2 0h1m1 0h2m12 0h2m30 0h1m36 0h1m1 0h1m7 0h2m1 0h1m12 0h1m5 0h2m6 0h1m2 0h2m13 0h1m7 0h2m6 0h1m2 0h1M25 52.5h1m11 0h1m4 0h1m4 0h1m10 0h1m11 0h1m10 0h1m6 0h1m13 0h1m7 0h2m12 0h1m3 0h1m34 0h1m36 0h2m1 0h1m4 0h3m15 0h2m4 0h1M19 53.5h1m3 0h1m3 0h2m3 0h2m2 0h1m7 0h2m3 0h2m7 0h1m5 0h1m6 0h1m7 0h1m6 0h1m1 0h1m8 0h1m2 0h2m6 0h1m3 0h1m8 0h4m2 0h1m7 0h1m5 0h1m6 0h2m9 0h1m3 0h1m9 0h3m11 0h1m1 0h1m4 0h1m3 0h1m2 0h1m1 0h2m4 0h1m7 0h1m5 0h3m9 0h1M7 54.5h1m18 0h1m7 0h1m15 0h1m9 0h1m30 0h3m6 0h1m43 0h3m31 0h2m13 0h2m4 0h1m1 0h2m6 0h1m21 0h1m1 0h3M4 55.5h1m7 0h3m9 0h2m23 0h3m8 0h1m4 0h1m27 0h1m3 0h1m7 0h1m1 0h1m4 0h1m11 0h1m3 0h1m21 0h1m6 0h3m17 0h1m1 0h1m7 0h1m5 0h2m13 0h2m7 0h1m9 0h1m1 0h2m1 0h1m2 0h4M45 56.5h1m42 0h1m2 0h1m13 0h1m8 0h1m15 0h1m4 0h1m8 0h1m30 0h1m26 0h1m5 0h2m5 0h1m10 0h1m7 0h1m5 0h1M0 57.5h2m9 0h1m3 0h1m3 0h2m4 0h3m2 0h2m2 0h1m1 0h2m1 0h1m7 0h2m1 0h1m3 0h1m19 0h1m3 0h1m7 0h1m1 0h1m3 0h2m5 0h2m4 0h1m3 0h1m16 0h1m3 0h1m1 0h1m3 0h1m13 0h1m7 0h1m15 0h1m8 0h1m5 0h4m4 0h1m1 0h2m11 0h1m3 0h1m8 0h2m7 0h2m5 0h1M0 58.5h2m8 0h1m18 0h1m3 0h2m2 0h1m2 0h1m4 0h3m10 0h1m7 0h2m11 0h1m2 0h1m1 0h1m1 0h1m2 0h2m9 0h3m2 0h2m1 0h1m4 0h1m2 0h2m13 0h1m11 0h2m17 0h1m2 0h1m6 0h1m15 0h2m27 0h2M0 59.5h5m1 0h1m3 0h1m7 0h1m27 0h1m11 0h4m6 0h1m5 0h1m8 0h1m1 0h1m5 0h3m5 0h1m6 0h1m9 0h2m5 0h1m3 0h2m2 0h1m1 0h2m2 0h1m1 0h1m14 0h2m5 0h1m2 0h1m2 0h2m7 0h1m3 0h2m9 0h1m2 0h2m19 0h1m1 0h1m13 0h1m2 0h1m2 0h1M0 60.5h1m5 0h1m3 0h1m3 0h1m1 0h3m3 0h1m9 0h1m6 0h1m7 0h1m3 0h1m12 0h2m2 0h2m3 0h1m9 0h3m8 0h1m4 0h1m1 0h1m7 0h3m10 0h1m9 0h2m2 0h1m2 0h1m1 0h1m16 0h1m2 0h1m6 0h1m3 0h1m1 0h1m4 0h1m4 0h2m1 0h1m6 0h1m2 0h1m2 0h1m7 0h1m4 0h3m1 0h2m3 0h2m1 0h1m6 0h1m8 0h1M1 61.5h1m11 0h1m2 0h3m8 0h1m8 0h3m11 0h1m11 0h1m5 0h4m9 0h1m2 0h1m12 0h2m9 0h1m16 0h1m2 0h1m12 0h1m2 0h1m2 0h1m7 0h1m2 0h1m14 0h3m3 0h1m2 0h1m14 0h1m3 0h1m2 0h2m2 0h1m6 0h2m1 0h2m8 0h1m7 0h1m1 0h2M8 62.5h1m20 0h1m1 0h2m1 0h1m6 0h1m3 0h1m4 0h1m9 0h1m1 0h1m12 0h1m3 0h2m4 0h1m1 0h1m16 0h1m5 0h1m10 0h2m5 0h1m6 0h2m4 0h1m2 0h1m4 0h2m5 0h2m14 0h2m3 0h1m3 0h1m1 0h1m1 0h1m1 0h2m2 0h2m6 0h1m3 0h1m2 0h1m1 0h1m2 0h1m14 0h1m13 0h2M0 63.5h4m2 0h2m5 0h3m14 0h1m4 0h2m1 0h2m1 0h1m1 0h2m5 0h4m3 0h1m1 0h1m14 0h6m1 0h2m5 0h2m1 0h3m2 0h1m5 0h1m4 0h1m6 0h1m1 0h2m11 0h1m5 0h1m1 0h3m3 0h2m2 0h1m1 0h2m14 0h1m3 0h2m2 0h1m19 0h1m4 0h1m3 0h1m6 0h1m6 0h2m2 0h1m2 0h3m3 0h1m1 0h1m1 0h1m4 0h2M5 64.5h1m6 0h1m7 0h1m9 0h1m3 0h1m3 0h1m1 0h1m2 0h2m15 0h1m5 0h1m2 0h1m1 0h1m11 0h1m3 0h1m5 0h2m1 0h1m1 0h2m7 0h2m3 0h1m2 0h1m4 0h1m2 0h1m2 0h1m10 0h1m18 0h1m11 0h1m2 0h1m6 0h1m4 0h2m8 0h1m3 0h2m5 0h2m1 0h1m4 0h1m11 0h1m4 0h1m6 0h1M0 65.5h1m1 0h1m1 0h1m3 0h2m4 0h2m1 0h1m4 0h1m1 0h1m5 0h1m12 0h1m4 0h1m6 0h1m2 0h1m5 0h1m3 0h1m3 0h1m2 0h3m1 0h3m3 0h1m1 0h1m1 0h1m2 0h2m2 0h1m6 0h1m1 0h1m8 0h1m2 0h1m1 0h1m2 0h1m4 0h1m3 0h2m2 0h1m2 0h1m4 0h1m1 0h1m10 0h1m6 0h3m4 0h1m1 0h2m1 0h1m3 0h1m1 0h2m7 0h1m4 0h1m8 0h1m15 0h1m1 0h2m2 0h3m1 0h1m1 0h2m1 0h1m1 0h2M0 66.5h2m2 0h1m4 0h3m2 0h2m2 0h3m5 0h3m1 0h1m10 0h1m4 0h3m3 0h1m32 0h1m3 0h1m3 0h2m5 0h1m6 0h2m2 0h1m2 0h1m6 0h1m1 0h1m1 0h1m2 0h2m1 0h2m6 0h1m4 0h1m3 0h1m1 0h1m7 0h1m8 0h2m3 0h1m1 0h1m15 0h1m15 0h1m9 0h2m2 0h2m7 0h1m8 0h1m1 0h2M0 67.5h1m8 0h2m1 0h1m5 0h1m6 0h1m6 0h1m5 0h2m11 0h1m8 0h1m11 0h1m21 0h1m2 0h1m7 0h3m3 0h1m1 0h1m10 0h4m1 0h1m8 0h1m2 0h1m6 0h1m7 0h1m1 0h1m1 0h1m2 0h3m20 0h1m6 0h1m3 0h1m1 0h1m4 0h1m9 0h1m15 0h1m2 0h1m1 0h1m3 0h1M1 69.5h2m9 0h2m1 0h2m9 0h2m2 0h1m3 0h1m7 0h2m1 0h3m2 0h1m2 0h2m5 0h1m1 0h1m9 0h1m3 0h1m4 0h2m5 0h1m2 0h1m3 0h1m6 0h1m1 0h1m5 0h2m8 0h1m4 0h4m9 0h1m1 0h1m7 0h1m5 0h1m10 0h3m1 0h2m4 0h1m1 0h1m4 0h1m2 0h3m8 0h1m6 0h1m4 0h1m9 0h1m1 0h2m3 0h1m3 0h1m2 0h1M0 70.5h3m1 0h1m7 0h1m12 0h1m1 0h4m3 0h2m8 0h1m2 0h1m3 0h1m7 0h1m1 0h1m3 0h1m8 0h2m2 0h1m2 0h2m5 0h2m5 0h2m5 0h1m4 0h1m7 0h1m1 0h1m2 0h1m5 0h1m6 0h1m3 0h1m1 0h1m3 0h1m1 0h2m5 0h1m3 0h2m3 0h1m5 0h1m3 0h3m17 0h1m5 0h1m1 0h1m1 0h2m1 0h2m5 0h1m8 0h2m1 0h4m9 0h2M6 71.5h2m1 0h2m9 0h1m14 0h1m6 0h1m4 0h1m5 0h1m8 0h1m6 0h2m2 0h1m3 0h1m18 0h1m20 0h2m1 0h2m4 0h1m17 0h1m7 0h1m8 0h1m3 0h1m5 0h2m5 0h2m11 0h1m1 0h1m7 0h1m1 0h3m4 0h4m1 0h1m12 0h1m1 0h2m1 0h1m1 0h1M1 72.5h1m11 0h1m2 0h1m1 0h2m12 0h3m1 0h4m1 0h1m2 0h1m4 0h3m3 0h1m3 0h2m7 0h1m8 0h1m4 0h1m3 0h1m11 0h1m3 0h1m13 0h1m1 0h1m12 0h1m4 0h1m1 0h1m5 0h1m3 0h3m7 0h1m12 0h2m5 0h2m4 0h2m8 0h3m5 0h1m2 0h2m1 0h1m3 0h1m7 0h2m5 0h1m6 0h2m5 0h1M4 73.5h6m1 0h1m18 0h1m1 0h1m4 0h1m1 0h2m3 0h1m6 0h1m1 0h1m4 0h1m3 0h1m3 0h2m1 0h1m11 0h1m1 0h2m6 0h1m3 0h1m1 0h1m4 0h3m1 0h1m9 0h1m3 0h1m13 0h1m2 0h2m3 0h2m1 0h1m2 0h1m2 0h3m1 0h1m10 0h1m1 0h3m1 0h1m3 0h1m3 0h2m1 0h1m2 0h1m1 0h1m2 0h2m1 0h1m3 0h2m9 0h2m4 0h1m7 0h1m4 0h1m6 0h1M2 74.5h2m27 0h3m3 0h1m10 0h1m1 0h1m1 0h1m3 0h2m2 0h1m2 0h1m6 0h1m3 0h1m4 0h5m6 0h1m3 0h1m8 0h1m2 0h1m11 0h4m8 0h1m3 0h4m6 0h2m9 0h1m1 0h5m30 0h3m1 0h1m12 0h1m3 0h1m9 0h1m5 0h2m1 0h4m5 0h1M2 75.5h1m6 0h2m3 0h1m4 0h1m1 0h3m6 0h1m9 0h1m3 0h1m7 0h1m12 0h2m2 0h2m2 0h1m2 0h1m5 0h1m1 0h1m1 0h1m1 0h1m1 0h1m3 0h1m2 0h1m18 0h1m3 0h2m3 0h1m14 0h1m8 0h1m1 0h1m5 0h4m8 0h2m2 0h1m9 0h1m1 0h3m1 0h1m12 0h1m2 0h1m2 0h1m1 0h1m3 0h2m1 0h1m1 0h4m9 0h1m1 0h1m1 0h2m2 0h1M6 76.5h1m4 0h2m2 0h2m5 0h2m1 0h5m1 0h1m4 0h1m3 0h1m2 0h1m3 0h1m8 0h3m1 0h1m3 0h1m3 0h1m8 0h2m2 0h2m3 0h1m1 0h1m18 0h1m2 0h2m3 0h1m11 0h3m1 0h1m3 0h1m1 0h2m7 0h2m1 0h2m2 0h1m2 0h1m1 0h1m4 0h2m8 0h2m1 0h1m5 0h3m3 0h1m15 0h3m1 0h1m4 0h1m1 0h1m2 0h1m7 0h1m9 0h1M11 77.5h2m3 0h1m8 0h2m8 0h1m6 0h3m1 0h1m2 0h2m5 0h1m9 0h1m5 0h2m11 0h1m4 0h3m2 0h1m7 0h2m1 0h1m5 0h1m2 0h1m8 0h1m4 0h1m3 0h1m5 0h3m1 0h1m7 0h1m2 0h1m3 0h2m11 0h1m1 0h2m3 0h2m1 0h1m5 0h1m2 0h1m1 0h1m1 0h3m3 0h1m2 0h1m2 0h2m7 0h1m4 0h1m4 0h1m10 0h1m4 0h1M5 78.5h1m2 0h2m4 0h1m13 0h1m3 0h2m1 0h1m4 0h1m18 0h1m5 0h2m3 0h2m1 0h1m1 0h2m6 0h3m1 0h1m8 0h1m16 0h1m10 0h1m1 0h1m1 0h1m4 0h1m3 0h1m1 0h2m6 0h1m3 0h2m3 0h1m1 0h1m1 0h1m4 0h1m1 0h1m1 0h3m4 0h1m5 0h1m3 0h1m2 0h1m9 0h1m3 0h1m3 0h1m6 0h1m15 0h2m6 0h1m2 0h1M1 79.5h1m2 0h1m7 0h1m2 0h1m2 0h1m4 0h1m1 0h1m3 0h2m1 0h1m5 0h1m7 0h1m3 0h2m1 0h1m1 0h1m7 0h1m9 0h1m1 0h1m6 0h1m15 0h2m3 0h2m13 0h1m4 0h1m3 0h1m2 0h1m6 0h3m11 0h2m1 0h1m1 0h1m2 0h1m1 0h1m1 0h1m1 0h3m1 0h2m5 0h1m16 0h1m1 0h1m5 0h1m8 0h2m6 0h1m10 0h2m1 0h1m1 0h2m1 0h1M22 80.5h2m17 0h1m20 0h1m9 0h1m11 0h1m4 0h1m39 0h1m6 0h1m2 0h1m11 0h1m18 0h1m24 0h1m26 0h1m5 0h1m11 0h1M42 81.5h1m10 0h1m10 0h1m8 0h1m15 0h1m14 0h2m12 0h1m35 0h2m26 0h1m24 0h1M5 82.5h1m16 0h1m26 0h1m39 0h1m33 0h1m8 0h2m3 0h1m1 0h1m2 0h1m10 0h1m2 0h1m25 0h1m5 0h1m5 0h1m46 0h1M0 83.5h1m5 0h1m29 0h1m27 0h1m56 0h1m39 0h1m16 0h1m2 0h1m9 0h1m11 0h1m36 0h1M13 84.5h1m38 0h2m4 0h1m12 0h1m2 0h1m12 0h1m34 0h1m5 0h2m12 0h1m2 0h2m4 0h1m3 0h1m1 0h1m6 0h1m2 0h1m2 0h1m2 0h1m9 0h1m6 0h1m1 0h1m6 0h1m3 0h1M2 85.5h1m3 0h1m5 0h1m4 0h1m1 0h1m3 0h1m14 0h1m23 0h1m4 0h1m2 0h2m4 0h2m27 0h1m11 0h1m36 0h1m33 0h1m14 0h1m7 0h2m1 0h2m1 0h2m1 0h1M16 86.5h1m2 0h1m10 0h1m31 0h1m6 0h2m2 0h3m9 0h1m6 0h1m18 0h2m30 0h1m7 0h1m1 0h1m8 0h1m6 0h1m8 0h1m3 0h1m5 0h1m16 0h1m10 0h1m5 0h1m1 0h1m3 0h1M26 87.5h1m11 0h1m1 0h1m6 0h2m49 0h1m83 0h1m10 0h1m11 0h1m31 0h1m3 0h1M71 88.5h2m77 0h1m3 0h1m42 0h1m41 0h1M6 89.5h2m6 0h1m13 0h1m12 0h1m10 0h2m13 0h1m10 0h1m32 0h1m17 0h1m32 0h1m40 0h1m30 0h1M22 90.5h1m43 0h1m43 0h1m20 0h1m73 0h2m5 0h1M10 91.5h1m12 0h1m63 0h1M25 92.5h1m14 0h2m24 0h1m18 0h1m4 0h1m90 0h1m29 0h3m17 0h1M141 93.5h2M151 94.5h1M11 95.5h1m5 0h1m3 0h1m1 0h1m14 0h1m32 0h1m7 0h1m6 0h1m4 0h1m6 0h1m16 0h1m24 0h1m4 0h2m4 0h1m18 0h1m4 0h2m5 0h1m12 0h1m41 0h1m3 0h1M7 96.5h1m1 0h1m17 0h1m1 0h2m4 0h2m1 0h1m1 0h3m1 0h4m7 0h1m6 0h1m3 0h3m13 0h2m7 0h3m3 0h1m1 0h1m3 0h1m2 0h3m9 0h3m1 0h2m7 0h1m4 0h1m3 0h1m2 0h1m1 0h1m2 0h1m1 0h1m3 0h3m5 0h2m5 0h1m3 0h1m5 0h2m1 0h1m5 0h1m6 0h1m13 0h1m1 0h1m1 0h1m1 0h2m5 0h1m4 0h2m6 0h1M8 97.5h3m3 0h2m15 0h3m2 0h1m9 0h1m4 0h1m3 0h1m11 0h1m4 0h1m3 0h1m9 0h4m5 0h2m8 0h1m8 0h2m7 0h1m10 0h1m5 0h2m2 0h2m5 0h1m3 0h2m1 0h1m6 0h2m17 0h2m1 0h1m3 0h2m6 0h1m2 0h1m1 0h4m4 0h2m3 0h1m8 0h1m2 0h2m3 0h2m1 0h1M2 98.5h1m5 0h1m2 0h1m3 0h2m3 0h1m2 0h1m2 0h2m3 0h2m6 0h2m4 0h1m2 0h1m3 0h2m1 0h3m1 0h3m8 0h1m6 0h1m10 0h2m2 0h1m8 0h1m2 0h3m2 0h1m6 0h1m1 0h1m1 0h1m2 0h1m2 0h2m1 0h1m6 0h3m1 0h1m1 0h2m1 0h2m13 0h1m1 0h1m2 0h1m2 0h1m1 0h5m1 0h2m4 0h2m3 0h1m1 0h2m2 0h1m5 0h2m2 0h3m1 0h1m1 0h1m12 0h1m7 0h1m1 0h1M6 99.5h2m5 0h1m2 0h1m6 0h1m2 0h1m5 0h1m3 0h1m1 0h2m5 0h4m8 0h1m5 0h1m2 0h1m1 0h2m8 0h1m1 0h4m7 0h2m4 0h1m11 0h1m8 0h1m7 0h2m3 0h1m3 0h1m8 0h1m8 0h1m1 0h1m9 0h1m2 0h1m1 0h1m2 0h1m1 0h1m1 0h1m2 0h1m1 0h1m1 0h1m8 0h1m5 0h1m3 0h3m6 0h1m1 0h1m2 0h1m8 0h2m1 0h1m2 0h1m2 0h1"/>
<path stroke="#f47b19" d="M88 14.5h1m55 0h1M88 17.5h1M2 19.5h1m1 0h1m4 0h1m34 0h2m6 0h2m14 0h1m23 0h2m84 0h1m8 0h1m6 0h1m11 0h1m10 0h1m8 0h2m4 0h2M9 20.5h1m1 0h3m3 0h1m2 0h1m4 0h1m1 0h1m5 0h1m2 0h1m1 0h1m2 0h1m3 0h1m1 0h1m12 0h1m3 0h1m2 0h2m14 0h4m3 0h1m2 0h2m1 0h1m2 0h2m1 0h2m3 0h1m2 0h1m8 0h4m18 0h1m4 0h1m14 0h3m3 0h1m3 0h1m6 0h1m27 0h1m8 0h1m3 0h2m4 0h3m1 0h5M0 21.5h2m2 0h2m1 0h1m2 0h3m3 0h4m5 0h1m6 0h3m1 0h2m13 0h1m4 0h2m5 0h3m5 0h1m3 0h2m5 0h7m3 0h1m5 0h2m2 0h1m7 0h2m3 0h1m2 0h3m4 0h3m2 0h1m2 0h1m21 0h2m7 0h1m1 0h1m11 0h4m1 0h1m1 0h1m1 0h1m2 0h1m11 0h1m3 0h3m4 0h1m2 0h1m3 0h3m3 0h2m4 0h1m2 0h2m2 0h1M12 22.5h2m11 0h2m1 0h1m12 0h2m20 0h1m2 0h1m14 0h2m11 0h1m5 0h1m6 0h2m21 0h1m1 0h1m7 0h1m9 0h1m34 0h1m41 0h1M10 23.5h1m5 0h1m6 0h1m1 0h3m2 0h1m1 0h2m9 0h1m1 0h1m1 0h1m7 0h1m14 0h2m2 0h1m8 0h2m2 0h1m13 0h1m1 0h3m15 0h1m14 0h4m5 0h1m13 0h2m13 0h1m2 0h2m16 0h3m2 0h1m7 0h1m1 0h2m1 0h1m3 0h1m1 0h1m5 0h1m3 0h1m2 0h1M2 24.5h1m31 0h1m45 0h1m23 0h1m12 0h1m46 0h1m37 0h1m18 0h1M15 25.5h1m1 0h1m35 0h4m3 0h2m8 0h1m2 0h1m9 0h2m1 0h3m17 0h1m1 0h1m3 0h1m3 0h1m24 0h1m12 0h2m20 0h1m7 0h5m3 0h1m2 0h1m6 0h1m1 0h1m20 0h3m1 0h1m1 0h1m3 0h2M15 26.5h1m1 0h1m8 0h1m14 0h1m36 0h2m10 0h2m8 0h2m4 0h2m19 0h1m5 0h1m1 0h1m21 0h4m17 0h1m21 0h1m3 0h1m4 0h1m5 0h2m9 0h1m9 0h1M4 27.5h1m9 0h1m21 0h1m4 0h1m2 0h2m19 0h3m4 0h1m4 0h3m29 0h1m1 0h1m22 0h2m13 0h1m9 0h1m18 0h1m5 0h1m2 0h1m14 0h1m1 0h2m21 0h1M4 28.5h1m119 0h1m53 0h1m36 0h1m18 0h1M39 29.5h1m7 0h1m7 0h2m20 0h1m28 0h2m3 0h1m3 0h3m24 0h3m1 0h1m19 0h2m2 0h2m3 0h2m33 0h1m9 0h1m4 0h3m3 0h3M94 30.5h1m48 0h2m13 0h1m27 0h1m5 0h1M9 31.5h1m27 0h1m23 0h1m42 0h2m11 0h1m50 0h1m61 0h2m5 0h1M31 32.5h1m71 0h1m10 0h1m1 0h1m57 0h2m55 0h1M0 33.5h2m10 0h1m10 0h1m16 0h1m31 0h1m5 0h1m4 0h1m1 0h1m11 0h1m53 0h1m2 0h1m1 0h1m6 0h1m12 0h1m14 0h1m5 0h1m10 0h1m15 0h1m2 0h1m3 0h1M3 34.5h1m1 0h3m2 0h1m1 0h1m1 0h1m10 0h1m3 0h1m4 0h1m1 0h1m7 0h1m2 0h2m2 0h1m1 0h3m1 0h1m1 0h1m2 0h1m1 0h1m1 0h3m1 0h2m3 0h5m5 0h1m2 0h2m1 0h1m2 0h3m1 0h2m3 0h1m1 0h1m2 0h1m1 0h1m4 0h3m10 0h1m3 0h2m2 0h1m2 0h1m9 0h1m2 0h2m5 0h2m2 0h1m1 0h1m2 0h2m2 0h2m5 0h1m3 0h1m1 0h1m5 0h3m6 0h2m1 0h1m1 0h1m2 0h1m1 0h3m3 0h1m1 0h2m4 0h1m5 0h1m2 0h2m1 0h1m3 0h2M7 35.5h1m21 0h1m41 0h1m45 0h1m10 0h1m2 0h1m3 0h1m44 0h1m21 0h1M37 36.5h1m85 0h1m25 0h1M73 37.5h1m37 0h2m31 0h1m48 0h1m37 0h1M174 38.5h1m21 0h1M29 39.5h1m64 0h1m8 0h1m116 0h1M100 41.5h1m48 0h1M20 42.5h1m13 0h1m2 0h2m16 0h1m2 0h3m13 0h1m10 0h1m2 0h1m11 0h2m2 0h1m6 0h1m1 0h1m10 0h2m2 0h1m1 0h1m9 0h1m72 0h1m1 0h1m1 0h1m17 0h1M6 43.5h1m5 0h2m1 0h1m8 0h1m12 0h1m13 0h1m2 0h1m4 0h2m8 0h2m6 0h2m2 0h1m4 0h6m1 0h1m4 0h4m10 0h1m1 0h1m7 0h3m6 0h1m7 0h3m3 0h1m1 0h1m7 0h1m15 0h2m7 0h1m1 0h1m8 0h1m3 0h1m9 0h1m4 0h1m4 0h1m9 0h1m1 0h1m6 0h2M1 44.5h1m2 0h1m2 0h1m3 0h1m2 0h1m4 0h1m4 0h3m4 0h1m1 0h2m2 0h1m2 0h1m9 0h1m4 0h1m5 0h1m2 0h2m6 0h1m5 0h2m7 0h1m16 0h1m2 0h1m2 0h2m6 0h1m1 0h1m2 0h2m11 0h2m1 0h1m1 0h1m8 0h1m2 0h1m2 0h2m1 0h1m5 0h2m3 0h2m1 0h2m1 0h1m5 0h2m1 0h1m1 0h2m1 0h1m4 0h2m2 0h3m6 0h1m1 0h1m1 0h2m11 0h1m5 0h3m3 0h2M159 45.5h1m26 0h1M4 47.5h3m84 0h1m102 0h1m7 0h1M29 48.5h1m49 0h2m10 0h1m30 0h1M94 50.5h1M26 51.5h1m175 0h1M24 52.5h1m11 0h1m66 0h1m98 0h1M12 53.5h1m18 0h1m14 0h1m12 0h1m21 0h1m5 0h1m8 0h1m61 0h1m13 0h1m8 0h1m6 0h1m13 0h1M96 55.5h1m52 0h1m28 0h1m52 0h1M44 56.5h1M14 57.5h1m30 0h2m2 0h1m3 0h1m10 0h3m22 0h3m12 0h1m3 0h1m22 0h1m3 0h1m13 0h1m16 0h2m30 0h1m2 0h2m12 0h1m13 0h1M3 58.5h2m83 0h1m18 0h1m31 0h1m19 0h1m1 0h1m4 0h2M86 59.5h1m20 0h1m24 0h1m2 0h1m2 0h1m36 0h1M5 60.5h1m9 0h1m3 0h1m1 0h1m4 0h1m8 0h1m1 0h2m5 0h3m2 0h1m2 0h1m1 0h2m1 0h2m3 0h2m6 0h3m1 0h1m1 0h2m1 0h2m5 0h1m3 0h1m1 0h1m7 0h1m1 0h1m2 0h1m6 0h1m7 0h1m4 0h1m1 0h2m5 0h1m3 0h1m1 0h1m1 0h3m2 0h3m1 0h3m3 0h1m6 0h2m1 0h1m5 0h1m6 0h2m6 0h2m14 0h2m4 0h1m1 0h1m3 0h1m4 0h1m2 0h1m1 0h1m9 0h2M0 61.5h1m7 0h1m2 0h1m2 0h2m3 0h1m4 0h1m3 0h1m1 0h3m6 0h1m1 0h2m1 0h1m6 0h1m1 0h1m9 0h2m8 0h1m3 0h1m5 0h1m11 0h1m4 0h1m6 0h1m5 0h2m3 0h1m14 0h1m3 0h4m1 0h2m1 0h1m4 0h1m1 0h1m1 0h1m6 0h3m1 0h1m1 0h1m4 0h1m4 0h2m4 0h1m3 0h1m2 0h1m5 0h1m15 0h3m5 0h1m3 0h4m1 0h2m1 0h1m1 0h2m4 0h1M0 62.5h1m3 0h1m2 0h1m1 0h2m2 0h1m10 0h2m1 0h1m5 0h1m4 0h1m1 0h1m6 0h3m1 0h1m7 0h1m1 0h1m7 0h1m1 0h2m3 0h1m1 0h1m3 0h1m5 0h1m1 0h1m6 0h2m3 0h1m2 0h1m3 0h1m10 0h1m2 0h1m2 0h2m4 0h1m4 0h4m5 0h1m6 0h1m4 0h2m5 0h1m13 0h1m2 0h1m13 0h1m1 0h1m3 0h1m1 0h1m5 0h1m1 0h1m1 0h3m2 0h1m18 0h2M12 63.5h1m18 0h1m2 0h1m2 0h1m4 0h1m17 0h1m5 0h3m59 0h1m17 0h1m27 0h1m9 0h1m9 0h4m12 0h4m1 0h1m2 0h2m6 0h1m7 0h2M4 64.5h1m1 0h1m2 0h3m14 0h1m4 0h3m2 0h2m8 0h1m1 0h3m11 0h4m4 0h1m2 0h2m2 0h3m1 0h1m7 0h1m2 0h1m10 0h2m11 0h1m1 0h1m6 0h1m8 0h1m1 0h1m8 0h3m13 0h1m5 0h1m1 0h1m3 0h1m1 0h1m16 0h1m2 0h2m9 0h1m2 0h1m3 0h1m1 0h6m6 0h2m2 0h1m1 0h1m1 0h1m2 0h2M1 65.5h1m11 0h1m9 0h1m4 0h2m12 0h1m4 0h1m25 0h2m16 0h1m5 0h3m6 0h1m11 0h1m5 0h1m11 0h2m6 0h1m10 0h1m5 0h2m4 0h3m21 0h1m11 0h1m10 0h1m1 0h4m14 0h1M2 66.5h2m82 0h3m35 0h1m24 0h1m7 0h1m22 0h1m34 0h1m14 0h1M1 67.5h1m3 0h4m2 0h1m1 0h1m2 0h1m4 0h1m4 0h1m2 0h1m7 0h1m6 0h1m7 0h1m1 0h1m4 0h1m1 0h2m2 0h4m1 0h2m1 0h2m7 0h1m1 0h1m14 0h1m8 0h1m1 0h1m1 0h1m1 0h2m3 0h2m15 0h1m2 0h2m6 0h1m1 0h1m2 0h2m12 0h1m3 0h1m4 0h1m1 0h1m3 0h1m2 0h1m4 0h1m1 0h2m3 0h1m3 0h1m2 0h1m3 0h1m1 0h1m2 0h2m3 0h1m4 0h3m1 0h1m2 0h1m1 0h2m1 0h1m1 0h1m1 0h1m1 0h1M24 69.5h1m3 0h2m14 0h1m6 0h2m15 0h1m6 0h1m3 0h2m9 0h1m1 0h1m1 0h1m8 0h1m35 0h1m16 0h2m13 0h1m9 0h1m12 0h1m7 0h1M3 70.5h1m3 0h1m16 0h1m11 0h2m7 0h2m10 0h2m3 0h3m14 0h2m12 0h2m6 0h1m17 0h1m14 0h2m8 0h1m55 0h1m9 0h1m16 0h1M4 71.5h2m28 0h1m6 0h1m6 0h3m27 0h2m24 0h1m68 0h2m19 0h1m7 0h1m31 0h1M11 72.5h2m90 0h1m33 0h1m36 0h2m21 0h1m42 0h1M10 73.5h1m22 0h2m30 0h1m8 0h1m7 0h1m5 0h3m1 0h3m1 0h1m16 0h1m5 0h1m3 0h2m10 0h2m2 0h1m7 0h1m25 0h1m1 0h1m8 0h2m10 0h2m36 0h1m5 0h2M49 74.5h1m11 0h2m39 0h1m28 0h1m65 0h1m33 0h1M3 75.5h1m20 0h1m3 0h1m8 0h3m1 0h2m5 0h3m2 0h1m9 0h2m3 0h1m5 0h2m3 0h3m1 0h1m12 0h1m4 0h1m11 0h1m3 0h1m11 0h2m8 0h1m4 0h1m1 0h1m3 0h1m4 0h2m4 0h4m19 0h1m5 0h1m9 0h2m4 0h1m11 0h1m7 0h2m5 0h1m7 0h1M13 76.5h2m17 0h2m7 0h2m1 0h3m22 0h4m6 0h1m26 0h1m6 0h2m4 0h2m9 0h1m5 0h1m8 0h1m9 0h1m23 0h1m1 0h1m3 0h2m14 0h1m14 0h2m14 0h1m2 0h1M8 77.5h1m18 0h1m4 0h2m6 0h1m6 0h1m11 0h1m1 0h1m9 0h1m5 0h1m8 0h1m6 0h2m6 0h1m3 0h1m11 0h1m2 0h3m5 0h1m1 0h1m5 0h1m9 0h1m2 0h1m5 0h2m3 0h1m1 0h2m5 0h2m4 0h1m1 0h1m2 0h1m10 0h1m1 0h1m14 0h2m6 0h4m6 0h1m2 0h1m5 0h1M0 78.5h1m5 0h2m4 0h2m9 0h1m1 0h1m1 0h1m6 0h1m6 0h1m1 0h1m1 0h1m10 0h1m3 0h1m2 0h1m3 0h2m5 0h1m5 0h1m1 0h1m5 0h1m5 0h2m6 0h2m13 0h1m2 0h2m5 0h1m2 0h1m3 0h3m1 0h1m5 0h1m12 0h1m8 0h1m5 0h2m1 0h1m2 0h1m1 0h2m5 0h1m6 0h2m2 0h1m3 0h1m1 0h2m2 0h2m2 0h2m5 0h1m4 0h1M6 79.5h1m4 0h1m2 0h1m9 0h1m1 0h1m1 0h1m2 0h1m5 0h1m2 0h3m2 0h1m6 0h1m3 0h3m3 0h1m1 0h2m4 0h3m4 0h2m15 0h1m5 0h1m6 0h1m2 0h2m13 0h1m5 0h4m11 0h2m1 0h2m2 0h1m1 0h1m12 0h1m3 0h1m2 0h1m1 0h1m4 0h3m13 0h2m3 0h3m3 0h1m2 0h2m14 0h1m4 0h1m2 0h1m4 0h1M21 80.5h1m13 0h2m3 0h1m6 0h3m8 0h1m1 0h1m2 0h1m10 0h1m24 0h4m7 0h1m8 0h1m4 0h1m1 0h2m2 0h1m1 0h2m6 0h1m2 0h1m1 0h1m4 0h1m1 0h1m3 0h2m2 0h1m7 0h2m9 0h2m8 0h2m10 0h1m1 0h1m3 0h1m13 0h1m7 0h1m6 0h1M1 81.5h1m25 0h1m2 0h2m15 0h1m22 0h1m4 0h1m5 0h1m9 0h1m2 0h1m5 0h1m14 0h1m10 0h1m16 0h1m15 0h1m25 0h2m2 0h1m13 0h1m5 0h3m12 0h1m1 0h2m6 0h1M0 82.5h1m7 0h1m4 0h2m2 0h1m3 0h1m9 0h3m2 0h1m9 0h1m10 0h1m3 0h4m4 0h1m3 0h1m2 0h2m12 0h1m14 0h1m6 0h1m4 0h2m7 0h1m9 0h1m3 0h1m4 0h1m6 0h1m1 0h1m2 0h1m2 0h1m15 0h1m2 0h1m1 0h1m1 0h1m1 0h1m9 0h1m2 0h2m14 0h1m7 0h1m7 0h1m1 0h2M22 83.5h1m6 0h1m1 0h2m37 0h2m16 0h3m19 0h1m7 0h1m7 0h1m13 0h1m6 0h1m4 0h1m6 0h1m14 0h1m17 0h1m2 0h1m8 0h1m9 0h3M8 84.5h3m3 0h1m3 0h1m2 0h2m6 0h2m4 0h1m10 0h3m2 0h1m3 0h1m7 0h1m8 0h2m2 0h1m11 0h1m3 0h2m15 0h1m7 0h4m5 0h1m3 0h1m1 0h1m5 0h1m8 0h1m4 0h1m3 0h1m5 0h1m17 0h3m3 0h2m1 0h1m8 0h1m1 0h2m2 0h3m12 0h1m2 0h3m2 0h1m4 0h1m2 0h3M1 85.5h1m1 0h1m10 0h1m1 0h1m1 0h1m3 0h1m13 0h2m1 0h1m21 0h1m7 0h1m12 0h1m2 0h1m4 0h1m2 0h2m8 0h1m2 0h4m2 0h1m15 0h2m7 0h2m7 0h1m1 0h2m2 0h2m1 0h1m1 0h1m5 0h4m2 0h1m9 0h1m1 0h1m1 0h1m6 0h1m6 0h2m5 0h1m3 0h1m14 0h1m1 0h1m10 0h3m2 0h1M29 86.5h1m1 0h1m6 0h1m13 0h1m2 0h1m15 0h2m4 0h1m4 0h1m4 0h3m8 0h1m5 0h3m2 0h1m3 0h3m13 0h2m5 0h1m7 0h2m2 0h1m1 0h1m1 0h1m8 0h1m6 0h1m2 0h3m5 0h1m1 0h1m4 0h2m4 0h2m1 0h1m2 0h1m8 0h1m4 0h1m5 0h4m16 0h1M7 87.5h1m5 0h2m9 0h1m2 0h1m9 0h1m13 0h1m3 0h1m1 0h2m3 0h1m7 0h2m29 0h1m27 0h1m8 0h1m18 0h1m2 0h1m29 0h1m1 0h1m4 0h1m3 0h1m19 0h1M10 88.5h1m1 0h1m69 0h1m16 0h2m18 0h1m7 0h1m8 0h1m25 0h2m1 0h1m3 0h2m6 0h1m1 0h1m18 0h1m1 0h1m7 0h1m3 0h1m3 0h1m6 0h1m2 0h1m2 0h1M13 89.5h1m5 0h1m2 0h2m11 0h1m15 0h1m4 0h1m5 0h1m26 0h1m14 0h1m18 0h1m92 0h1M0 90.5h1m60 0h1m5 0h1m38 0h1m4 0h1m11 0h1m69 0h1m17 0h1m2 0h1M1 91.5h2m11 0h1m7 0h1m16 0h2m41 0h1m2 0h1m5 0h1m3 0h1m4 0h3m27 0h1m10 0h1m26 0h1m16 0h1m12 0h2m9 0h3m11 0h1m5 0h1m5 0h1m4 0h1M0 92.5h1m21 0h1m27 0h1m9 0h2m3 0h1m2 0h1m20 0h1m5 0h1m10 0h1m6 0h1m5 0h1m14 0h1m11 0h1m4 0h2m19 0h1m10 0h1m9 0h1m4 0h1m4 0h1m10 0h1m6 0h2m6 0h1M35 93.5h1m11 0h2m105 0h1m26 0h1m29 0h1m18 0h1M37 94.5h1m12 0h1m38 0h1m7 0h1m66 0h1m20 0h1m24 0h1M4 95.5h2m2 0h1m1 0h1m7 0h1m3 0h1m1 0h1m4 0h2m1 0h1m17 0h2m2 0h2m1 0h1m8 0h1m1 0h1m1 0h1m6 0h1m2 0h1m1 0h1m1 0h1m4 0h1m11 0h1m1 0h1m16 0h1m1 0h3m4 0h1m8 0h1m3 0h2m3 0h2m1 0h1m1 0h1m1 0h2m3 0h2m5 0h1m12 0h1m1 0h1m1 0h1m4 0h1m5 0h1m19 0h1m5 0h3m6 0h1m2 0h1m3 0h1m3 0h1M0 96.5h3m1 0h1m1 0h1m1 0h1m9 0h1m1 0h2m1 0h1m4 0h1m2 0h2m1 0h1m2 0h1m5 0h1m6 0h1m9 0h1m2 0h2m5 0h2m1 0h1m5 0h1m1 0h1m2 0h2m1 0h1m1 0h2m4 0h1m2 0h1m1 0h3m1 0h2m5 0h1m1 0h1m7 0h1m5 0h1m5 0h1m5 0h1m1 0h2m6 0h1m2 0h2m4 0h1m1 0h2m2 0h3m3 0h3m1 0h1m3 0h1m6 0h1m1 0h1m3 0h4m2 0h3m3 0h3m1 0h1m2 0h1m10 0h1m3 0h1m10 0h5M0 97.5h1m10 0h3m4 0h1m3 0h1m19 0h1m1 0h2m1 0h3m4 0h1m6 0h1m9 0h1m1 0h1m1 0h1m1 0h1m12 0h1m11 0h2m2 0h4m1 0h1m1 0h1m3 0h1m1 0h3m4 0h2m7 0h1m3 0h1m2 0h2m2 0h3m8 0h1m14 0h1m1 0h1m8 0h1m5 0h1m3 0h1m3 0h1m2 0h2m1 0h1m5 0h1m1 0h1m4 0h1m4 0h1m5 0h2m10 0h2M1 98.5h1m5 0h1m4 0h1m4 0h3m4 0h1m3 0h3m5 0h1m9 0h1m7 0h1m13 0h2m1 0h1m6 0h2m1 0h3m9 0h1m8 0h2m6 0h1m10 0h2m11 0h2m5 0h1m8 0h1m8 0h1m7 0h1m10 0h3m5 0h1m1 0h1m2 0h2m3 0h3m7 0h1m1 0h1m11 0h2m9 0h1m5 0h2M12 99.5h1m1 0h2m3 0h1m4 0h2m2 0h1m4 0h2m18 0h3m2 0h3m3 0h1m2 0h1m6 0h1m4 0h1m4 0h1m4 0h1m11 0h2m2 0h2m1 0h1m4 0h5m1 0h2m7 0h3m12 0h1m3 0h1m6 0h1m6 0h1m14 0h1m4 0h1m1 0h1m12 0h1m4 0h2m10 0h1"/>
<path stroke="#f78a14" d="M3 19.5h1M8 20.5h1m17 0h1m7 0h1m2 0h1m8 0h1m1 0h1m42 0h2m21 0h1m16 0h1m7 0h2m17 0h1m15 0h2m12 0h2m5 0h2m10 0h3m7 0h2m15 0h1M2 21.5h2m9 0h1m6 0h2m9 0h1m10 0h1m2 0h1m26 0h3m5 0h2m8 0h2m1 0h1m6 0h2m12 0h1m16 0h1m6 0h1m1 0h1m16 0h3m7 0h1m4 0h3m2 0h1m10 0h2m6 0h1m8 0h1m3 0h1m28 0h1M11 22.5h1m17 0h1m101 0h1M11 23.5h4m9 0h1m6 0h1m2 0h1m11 0h1m25 0h2m14 0h1m11 0h1m74 0h2m14 0h1m9 0h1m7 0h1m21 0h1M107 25.5h1m86 0h1M161 26.5h1m39 0h1M221 29.5h1M117 32.5h1M7 33.5h2m5 0h2m1 0h2m1 0h2m4 0h1m4 0h1m3 0h1m5 0h1m5 0h1m1 0h2m4 0h1m1 0h1m3 0h1m2 0h1m1 0h2m16 0h1m20 0h1m14 0h3m4 0h2m18 0h1m2 0h1m1 0h2m3 0h2m14 0h1m1 0h1m9 0h1m2 0h2m2 0h1m6 0h1m3 0h1m3 0h1m11 0h3m10 0h1m1 0h1m3 0h1M0 34.5h3m1 0h1m4 0h1m1 0h1m14 0h3m3 0h2m8 0h1m6 0h2m5 0h1m1 0h1m1 0h2m18 0h5m5 0h1m11 0h1m1 0h1m1 0h2m1 0h1m1 0h2m5 0h4m8 0h2m2 0h2m1 0h2m22 0h2m1 0h1m9 0h3m3 0h1m5 0h5m5 0h4m9 0h1m3 0h1m1 0h1m12 0h2m1 0h2M117 36.5h1M1 43.5h1m5 0h1m6 0h1m15 0h1m61 0h1m24 0h2m27 0h1m2 0h1m14 0h2m15 0h1m6 0h3m3 0h1m13 0h2M2 44.5h2m11 0h1m16 0h1m21 0h1m3 0h2m2 0h2m2 0h1m4 0h1m14 0h1m1 0h1m7 0h1m8 0h2m10 0h1m3 0h2m2 0h1m3 0h2m4 0h1m4 0h1m17 0h1m5 0h1m2 0h1m4 0h1m4 0h2m10 0h1m4 0h1m8 0h1m7 0h1m5 0h3m16 0h1M3 60.5h2m3 0h2m10 0h1m6 0h3m1 0h1m4 0h1m4 0h1m1 0h1m6 0h1m2 0h1m2 0h1m3 0h1m5 0h2m7 0h1m2 0h1m9 0h1m2 0h1m11 0h2m2 0h2m5 0h1m8 0h2m10 0h1m9 0h1m4 0h1m18 0h3m3 0h2m13 0h1m1 0h1m2 0h2m4 0h2m6 0h1m17 0h3m5 0h1M3 61.5h2m15 0h1m4 0h2m18 0h5m2 0h1m7 0h2m3 0h3m7 0h2m1 0h1m12 0h1m1 0h1m2 0h1m8 0h1m9 0h3m1 0h1m1 0h2m1 0h1m2 0h1m3 0h1m2 0h1m1 0h1m9 0h1m4 0h1m7 0h2m3 0h1m1 0h1m9 0h1m7 0h1m1 0h1m4 0h4m7 0h2m2 0h2m2 0h2m5 0h1m3 0h3m7 0h1m1 0h1m7 0h1M1 62.5h3m10 0h4m8 0h1m1 0h1m7 0h2m1 0h1m12 0h1m5 0h1m6 0h1m1 0h2m1 0h1m3 0h1m2 0h1m6 0h1m4 0h1m5 0h2m4 0h1m4 0h2m9 0h1m12 0h1m23 0h2m4 0h2m4 0h4m4 0h2m2 0h1m1 0h1m8 0h1m3 0h2m2 0h1m9 0h1m5 0h1m3 0h1m2 0h2m3 0h1m8 0h4M7 64.5h2m38 0h1m34 0h1m34 0h1m17 0h1m8 0h1m12 0h3m5 0h2m5 0h1m1 0h1m19 0h1m30 0h2m7 0h1m5 0h1M88 65.5h1m91 0h1m34 0h1m15 0h1M2 67.5h1m1 0h1m9 0h2m1 0h1m1 0h1m7 0h2m4 0h1m1 0h2m3 0h3m2 0h6m2 0h1m1 0h1m1 0h2m4 0h2m10 0h3m1 0h3m1 0h1m1 0h2m1 0h3m4 0h2m3 0h5m4 0h1m6 0h3m2 0h3m6 0h1m2 0h3m8 0h2m4 0h2m2 0h2m5 0h2m4 0h3m1 0h3m5 0h1m5 0h1m4 0h1m10 0h2m2 0h2m1 0h1m2 0h1m3 0h2m1 0h4m3 0h1m11 0h1M61 69.5h1m31 0h1m61 0h1m18 0h1M117 72.5h1M52 73.5h1m15 0h1m77 0h1m27 0h1M29 75.5h1m84 0h1m30 0h1M180 76.5h1M0 77.5h4m3 0h1m6 0h2m12 0h2m11 0h1m6 0h1m11 0h1m17 0h2m19 0h2m12 0h2m8 0h1m13 0h2m5 0h2m4 0h1m10 0h1m14 0h1m50 0h2M1 78.5h1m8 0h2m12 0h1m17 0h1m1 0h1m16 0h2m14 0h3m1 0h1m19 0h1m4 0h2m14 0h2m21 0h2m12 0h1m17 0h1m28 0h1m3 0h2m3 0h4m7 0h2m4 0h1m1 0h4M5 79.5h1m1 0h4m16 0h1m5 0h2m4 0h1m19 0h3m17 0h2m5 0h2m1 0h4m15 0h2m2 0h3m9 0h1m10 0h2m20 0h2m5 0h1m8 0h2m19 0h1m7 0h1m22 0h1m1 0h1M6 80.5h6m5 0h2m6 0h1m1 0h6m1 0h1m2 0h2m4 0h2m9 0h2m1 0h1m1 0h1m4 0h1m1 0h2m2 0h1m4 0h2m3 0h1m2 0h1m1 0h1m1 0h1m2 0h1m1 0h1m2 0h1m1 0h2m5 0h3m2 0h1m1 0h6m4 0h3m10 0h1m2 0h2m7 0h4m3 0h1m10 0h1m6 0h1m1 0h1m9 0h1m2 0h3m3 0h1m1 0h1m1 0h1m3 0h1m1 0h1m1 0h3m2 0h1m2 0h1m1 0h1m4 0h2m2 0h2m2 0h1m2 0h1m1 0h1m1 0h1M0 81.5h1m1 0h2m14 0h1m1 0h1m4 0h2m8 0h2m4 0h1m1 0h2m3 0h2m4 0h4m1 0h1m5 0h1m3 0h1m1 0h2m3 0h2m4 0h2m1 0h1m4 0h1m1 0h1m2 0h1m3 0h1m1 0h1m4 0h1m1 0h1m7 0h1m3 0h1m6 0h1m3 0h2m1 0h1m7 0h1m4 0h1m5 0h1m3 0h1m4 0h1m2 0h1m2 0h1m14 0h2m2 0h2m11 0h1m3 0h3m16 0h1m1 0h1m4 0h1m10 0h1M1 82.5h1m1 0h2m1 0h2m4 0h1m5 0h3m2 0h1m3 0h4m4 0h1m5 0h5m8 0h2m2 0h3m5 0h3m3 0h1m1 0h1m3 0h1m8 0h2m2 0h1m6 0h1m3 0h2m2 0h6m3 0h1m3 0h1m4 0h2m1 0h1m1 0h1m1 0h1m3 0h1m7 0h1m4 0h1m2 0h1m6 0h2m1 0h1m1 0h4m1 0h4m1 0h2m2 0h2m1 0h1m10 0h1m8 0h1m2 0h6m6 0h1m7 0h1m1 0h1m1 0h1m1 0h1m4 0h2m3 0h2M9 83.5h1m1 0h2m2 0h1m5 0h1m1 0h1m1 0h1m1 0h1m5 0h1m1 0h1m3 0h1m2 0h2m7 0h2m4 0h2m3 0h1m4 0h1m4 0h2m17 0h1m2 0h2m9 0h2m1 0h1m5 0h2m3 0h1m2 0h1m1 0h1m4 0h1m6 0h1m2 0h1m2 0h4m2 0h4m4 0h1m5 0h1m6 0h2m1 0h2m1 0h3m1 0h1m3 0h1m1 0h1m4 0h1m14 0h1m1 0h2m8 0h1m4 0h2m4 0h1m4 0h2m4 0h1M2 84.5h1m2 0h2m4 0h2m2 0h3m1 0h1m3 0h5m5 0h2m1 0h1m4 0h1m1 0h3m3 0h2m8 0h1m1 0h2m1 0h2m1 0h2m6 0h1m2 0h1m1 0h3m2 0h2m2 0h1m1 0h1m2 0h2m1 0h3m2 0h3m1 0h3m1 0h2m1 0h4m6 0h1m9 0h5m1 0h3m2 0h1m3 0h1m1 0h1m2 0h2m3 0h3m2 0h1m5 0h1m1 0h2m11 0h2m2 0h1m4 0h1m8 0h1m4 0h6m1 0h1m1 0h1m1 0h1m1 0h2m7 0h1m3 0h2m4 0h2M0 85.5h1m3 0h1m2 0h3m1 0h1m3 0h1m4 0h2m2 0h1m2 0h2m2 0h3m6 0h2m2 0h5m2 0h2m1 0h4m1 0h1m5 0h1m2 0h1m6 0h1m5 0h1m2 0h1m1 0h2m1 0h1m1 0h2m3 0h2m1 0h4m1 0h1m5 0h2m4 0h1m2 0h1m3 0h1m2 0h2m2 0h1m1 0h3m1 0h1m2 0h1m2 0h4m1 0h1m8 0h1m1 0h1m1 0h3m4 0h2m1 0h1m7 0h1m3 0h1m1 0h4m5 0h1m1 0h2m3 0h3m2 0h3m5 0h1m5 0h1m1 0h2m5 0h1m1 0h1m4 0h1m3 0h2M0 86.5h3m1 0h5m4 0h1m1 0h1m1 0h2m1 0h4m2 0h1m8 0h1m1 0h1m1 0h3m1 0h4m3 0h1m5 0h2m1 0h1m1 0h1m1 0h5m11 0h1m3 0h2m1 0h1m3 0h2m3 0h3m2 0h3m4 0h2m1 0h1m5 0h4m2 0h7m4 0h1m1 0h1m1 0h4m1 0h1m3 0h2m1 0h1m8 0h3m2 0h4m3 0h1m6 0h1m6 0h2m3 0h3m4 0h2m1 0h3m1 0h2m3 0h2m7 0h1m7 0h3m2 0h1m1 0h1m6 0h2M1 87.5h1m2 0h1m1 0h1m3 0h2m3 0h1m4 0h1m1 0h2m1 0h1m4 0h1m2 0h4m2 0h1m2 0h2m2 0h1m5 0h2m2 0h1m2 0h1m3 0h1m5 0h1m2 0h1m4 0h1m6 0h2m1 0h3m5 0h1m1 0h1m2 0h1m1 0h2m7 0h1m7 0h2m1 0h1m3 0h2m4 0h1m7 0h1m1 0h1m3 0h3m2 0h1m2 0h1m4 0h1m7 0h1m2 0h5m8 0h1m7 0h1m2 0h3m3 0h1m1 0h3m1 0h2m2 0h1m1 0h1m1 0h1m5 0h1m2 0h1m7 0h1m3 0h2m3 0h1M3 88.5h1m7 0h1m1 0h1m3 0h2m3 0h2m1 0h2m1 0h1m1 0h1m4 0h1m2 0h3m2 0h1m7 0h2m6 0h1m2 0h1m1 0h1m2 0h1m1 0h2m4 0h1m21 0h2m32 0h3m4 0h1m1 0h1m1 0h2m7 0h1m1 0h1m1 0h1m1 0h1m6 0h1m3 0h1m2 0h2m16 0h2m4 0h2m10 0h1m7 0h1m1 0h1m4 0h1m1 0h2m5 0h1m8 0h1M8 89.5h1m20 0h2m5 0h1m1 0h1m1 0h1m1 0h1m23 0h1m4 0h1m16 0h1m30 0h2m1 0h1m5 0h1m23 0h2m2 0h2m21 0h1m3 0h1m3 0h1m3 0h1m10 0h1m4 0h2m9 0h1m5 0h1m5 0h1M18 90.5h2m1 0h1m1 0h1m2 0h1m8 0h1m5 0h1m1 0h1m18 0h2m1 0h1m9 0h2m5 0h1m3 0h2m4 0h1m5 0h1m8 0h1m1 0h1m5 0h1m17 0h1m12 0h1m4 0h3m9 0h1m10 0h1m7 0h1m9 0h1m1 0h1m3 0h1m16 0h1m2 0h1m7 0h2m7 0h2m4 0h1M3 91.5h1m8 0h1m6 0h1m1 0h1m4 0h2m4 0h2m1 0h1m12 0h1m1 0h1m3 0h1m2 0h1m4 0h2m5 0h1m4 0h1m1 0h1m9 0h1m1 0h3m12 0h1m14 0h1m12 0h1m10 0h2m8 0h1m12 0h2m3 0h1m11 0h1m8 0h1m14 0h2m4 0h1m15 0h1m1 0h1m2 0h2m1 0h4M7 92.5h1m10 0h2m1 0h1m1 0h1m3 0h1m5 0h1m2 0h1m6 0h3m1 0h1m3 0h1m15 0h1m2 0h1m12 0h2m1 0h1m9 0h3m8 0h3m6 0h3m8 0h2m9 0h2m2 0h2m3 0h4m3 0h1m4 0h1m2 0h2m1 0h1m3 0h2m2 0h1m4 0h2m4 0h2m1 0h2m2 0h1m4 0h2m20 0h2m4 0h1m3 0h1m3 0h1m6 0h2M2 93.5h1m12 0h1m18 0h1m5 0h1m2 0h1m12 0h1m44 0h1m53 0h1m23 0h1m32 0h1m28 0h1M32 94.5h1m20 0h1m14 0h2m20 0h1m7 0h2m46 0h1m1 0h1m1 0h1m1 0h1m4 0h1m7 0h1m20 0h1m1 0h1m41 0h1M0 95.5h1m1 0h2m2 0h2m11 0h1m5 0h4m2 0h1m1 0h3m3 0h1m1 0h9m6 0h1m1 0h3m1 0h1m1 0h2m3 0h1m3 0h1m2 0h1m4 0h1m1 0h1m3 0h2m3 0h1m1 0h2m1 0h1m2 0h1m7 0h6m2 0h1m2 0h1m1 0h1m5 0h2m1 0h5m1 0h2m1 0h1m1 0h1m2 0h1m4 0h1m3 0h1m2 0h1m1 0h1m2 0h3m1 0h1m1 0h1m1 0h1m1 0h1m8 0h1m3 0h4m1 0h5m2 0h5m2 0h3m1 0h6m2 0h1m2 0h2m5 0h3m2 0h1m2 0h1m1 0h1m2 0h2M3 96.5h1m6 0h8m4 0h1m2 0h2m6 0h1m5 0h1m8 0h2m3 0h2m6 0h1m24 0h1m7 0h1m1 0h1m15 0h1m1 0h4m12 0h1m3 0h1m9 0h1m14 0h1m26 0h1m2 0h2m9 0h3m3 0h1m34 0h1M2 97.5h1m13 0h2m2 0h2m3 0h3m2 0h1m6 0h3m3 0h1m6 0h1m1 0h1m3 0h1m22 0h1m32 0h1m5 0h1m5 0h2m2 0h3m5 0h3m21 0h2m11 0h1m14 0h1m1 0h1m3 0h1m15 0h1m3 0h1m26 0h1M25 98.5h1m11 0h1m34 0h1m44 0h1m31 0h1m11 0h1m32 0h1M27 99.5h1m28 0h1m15 0h1m30 0h2m2 0h1m63 0h2"/>
<path stroke="#fa990e" d="M139 21.5h1m44 0h1M4 33.5h2m3 0h3m7 0h1m2 0h1m1 0h2m3 0h2m1 0h2m2 0h4m2 0h3m1 0h1m1 0h1m3 0h1m1 0h1m1 0h1m1 0h3m1 0h2m5 0h3m1 0h5m1 0h1m6 0h1m6 0h4m1 0h5m1 0h1m2 0h2m1 0h1m2 0h1m2 0h1m1 0h2m3 0h1m2 0h1m2 0h6m1 0h1m2 0h5m1 0h1m2 0h1m6 0h1m3 0h2m1 0h1m1 0h1m1 0h1m1 0h5m1 0h1m2 0h1m3 0h2m1 0h1m1 0h2m2 0h1m2 0h1m1 0h2m3 0h2m2 0h3m4 0h1m13 0h2m3 0h1m2 0h1m1 0h3m1 0h2M100 34.5h2m125 0h1M131 44.5h1m70 0h1M30 60.5h1m11 0h1m18 0h1m31 0h1m19 0h1m32 0h1m44 0h1m11 0h1M9 61.5h2m18 0h1m44 0h1m17 0h1m8 0h4m15 0h1m2 0h1m8 0h1m20 0h1m31 0h1M66 62.5h1m6 0h1m9 0h1m47 0h1m58 0h1M88 64.5h1M3 67.5h1m16 0h1m13 0h1m21 0h1m74 0h2m41 0h1m3 0h1m1 0h1M225 78.5h1m2 0h2m3 0h1M88 79.5h1m4 0h1m132 0h1M0 80.5h1m2 0h3m6 0h2m2 0h1m2 0h2m5 0h1m15 0h1m2 0h2m3 0h4m2 0h1m8 0h1m2 0h2m7 0h3m1 0h2m3 0h1m4 0h1m1 0h2m1 0h1m6 0h1m3 0h2m8 0h2m1 0h1m4 0h1m9 0h1m8 0h1m9 0h2m2 0h2m1 0h1m1 0h1m1 0h3m4 0h1m1 0h5m2 0h2m1 0h2m7 0h1m3 0h3m10 0h2m1 0h1m2 0h3m6 0h2m4 0h1m1 0h1m1 0h1M4 81.5h9m3 0h2m1 0h1m2 0h1m5 0h1m9 0h1m1 0h1m4 0h1m4 0h3m5 0h1m1 0h1m2 0h1m3 0h1m10 0h1m1 0h1m3 0h1m3 0h1m4 0h1m2 0h3m8 0h1m1 0h6m2 0h1m3 0h1m2 0h2m3 0h2m5 0h1m1 0h2m1 0h1m2 0h3m2 0h1m1 0h2m5 0h1m4 0h2m1 0h2m1 0h3m1 0h1m1 0h1m3 0h3m11 0h1m1 0h1m1 0h3m1 0h2m9 0h3m3 0h5m10 0h1m1 0h4M2 82.5h1m6 0h3m12 0h3m10 0h4m9 0h4m2 0h1m8 0h1m4 0h2m3 0h1m3 0h8m5 0h2m1 0h3m1 0h3m2 0h1m8 0h1m6 0h1m7 0h1m1 0h1m13 0h1m1 0h2m1 0h2m11 0h1m4 0h1m4 0h1m13 0h2m13 0h2m6 0h5m2 0h6m4 0h1m9 0h3M1 83.5h1m1 0h3m1 0h2m1 0h1m5 0h4m4 0h1m1 0h1m1 0h1m11 0h2m2 0h2m1 0h4m2 0h4m2 0h1m5 0h2m2 0h1m4 0h3m5 0h6m4 0h2m2 0h2m1 0h1m4 0h1m2 0h1m4 0h2m2 0h2m2 0h1m2 0h1m3 0h2m3 0h2m1 0h1m1 0h2m2 0h1m4 0h1m6 0h1m1 0h1m1 0h2m4 0h2m2 0h2m2 0h1m8 0h1m3 0h1m1 0h4m4 0h1m3 0h3m1 0h1m3 0h1m2 0h5m4 0h4m2 0h3m2 0h2m1 0h1m2 0h2m1 0h1m2 0h1M3 84.5h2m2 0h1m12 0h1m10 0h2m6 0h2m1 0h1m13 0h1m3 0h1m5 0h1m12 0h1m3 0h2m5 0h1m5 0h1m3 0h2m3 0h1m18 0h2m5 0h1m17 0h1m11 0h1m6 0h1m5 0h6m14 0h4m15 0h1m1 0h1m1 0h1m7 0h2m3 0h2M10 85.5h1m14 0h2m7 0h1m14 0h2m2 0h1m4 0h1m1 0h1m2 0h2m8 0h2m3 0h3m2 0h1m4 0h1m9 0h1m14 0h1m1 0h1m4 0h3m1 0h2m5 0h1m3 0h1m4 0h2m17 0h1m11 0h3m1 0h3m2 0h1m10 0h2m1 0h1m14 0h2m15 0h2m1 0h1m1 0h4M3 86.5h1m7 0h2m1 0h1m9 0h2m1 0h2m3 0h3m1 0h1m5 0h1m4 0h3m8 0h1m1 0h1m7 0h1m9 0h1m1 0h2m11 0h2m25 0h2m9 0h2m8 0h1m25 0h1m6 0h3m3 0h1m21 0h1m26 0h1m1 0h1m1 0h3m5 0h1M3 87.5h1m1 0h1m2 0h2m2 0h1m3 0h1m1 0h2m8 0h1m2 0h2m11 0h2m3 0h2m9 0h2m4 0h2m5 0h1m1 0h2m1 0h2m2 0h1m3 0h1m3 0h3m1 0h1m1 0h1m9 0h5m2 0h1m1 0h2m1 0h1m2 0h1m1 0h3m4 0h2m1 0h1m2 0h2m3 0h1m1 0h1m6 0h1m1 0h2m4 0h1m2 0h6m1 0h2m5 0h1m1 0h1m1 0h3m2 0h3m2 0h1m8 0h1m9 0h2m1 0h1m1 0h1m1 0h5m4 0h1m1 0h1m2 0h2m1 0h1m1 0h1m3 0h2M2 88.5h1m1 0h2m2 0h2m5 0h2m3 0h2m2 0h1m2 0h1m1 0h1m1 0h2m3 0h1m7 0h1m2 0h2m1 0h1m2 0h6m1 0h1m5 0h1m1 0h1m5 0h1m1 0h3m2 0h1m1 0h1m1 0h3m1 0h1m1 0h1m13 0h10m3 0h1m1 0h1m1 0h2m1 0h1m2 0h3m6 0h1m1 0h1m1 0h1m5 0h2m3 0h1m3 0h1m2 0h3m4 0h2m5 0h4m1 0h1m3 0h7m3 0h3m4 0h1m2 0h4m3 0h3m1 0h2m5 0h2m5 0h2m3 0h2m1 0h2m1 0h1m2 0h1M0 89.5h1m2 0h3m12 0h1m1 0h2m5 0h1m3 0h2m4 0h1m5 0h1m10 0h2m2 0h1m4 0h1m1 0h1m4 0h1m1 0h1m1 0h1m2 0h1m1 0h1m1 0h4m2 0h1m5 0h1m3 0h4m2 0h1m1 0h1m3 0h2m1 0h1m5 0h1m5 0h1m11 0h3m1 0h3m6 0h1m1 0h1m9 0h1m1 0h2m5 0h1m2 0h1m2 0h1m5 0h1m5 0h1m3 0h1m5 0h2m6 0h1m3 0h3m1 0h2m3 0h2m4 0h1m3 0h1m1 0h3m1 0h1M7 90.5h1m1 0h2m2 0h2m1 0h1m3 0h1m4 0h1m1 0h1m4 0h2m2 0h1m3 0h1m1 0h1m1 0h1m4 0h1m4 0h4m6 0h1m3 0h1m3 0h1m1 0h1m3 0h1m2 0h1m3 0h1m4 0h1m6 0h1m1 0h1m8 0h1m13 0h1m5 0h3m5 0h8m1 0h1m1 0h3m5 0h1m1 0h1m4 0h1m1 0h3m1 0h1m4 0h1m9 0h2m2 0h2m11 0h2m8 0h1m2 0h1m3 0h1m2 0h1m3 0h2m2 0h1m1 0h1m3 0h1m2 0h3M0 91.5h1m6 0h3m3 0h1m1 0h2m1 0h1m12 0h1m4 0h1m1 0h1m2 0h1m1 0h2m1 0h2m3 0h1m3 0h2m1 0h4m4 0h2m2 0h4m1 0h1m1 0h1m2 0h2m10 0h1m3 0h2m1 0h1m4 0h8m1 0h5m1 0h5m2 0h4m2 0h7m1 0h1m4 0h1m5 0h1m1 0h1m2 0h1m1 0h1m1 0h1m1 0h3m2 0h1m3 0h1m14 0h5m6 0h1m2 0h1m2 0h3m2 0h1m4 0h2m1 0h2m4 0h1m1 0h1m7 0h1m8 0h1M1 92.5h3m1 0h2m1 0h1m1 0h5m1 0h2m6 0h1m5 0h1m1 0h1m4 0h3m2 0h1m3 0h1m5 0h4m3 0h1m2 0h3m6 0h1m2 0h1m1 0h1m1 0h3m1 0h1m4 0h1m3 0h1m7 0h7m4 0h1m1 0h1m7 0h1m1 0h2m1 0h2m2 0h2m2 0h1m1 0h3m2 0h2m3 0h1m7 0h1m1 0h1m1 0h1m2 0h2m2 0h1m1 0h3m7 0h2m2 0h1m5 0h1m2 0h2m3 0h2m3 0h4m1 0h7m4 0h3m2 0h1m14 0h3m3 0h1M8 93.5h1m5 0h1m1 0h1m5 0h1m13 0h1m2 0h1m6 0h1m8 0h1m5 0h1m8 0h1m42 0h1m5 0h2m9 0h1m5 0h1m3 0h1m2 0h1m2 0h2m14 0h1m5 0h1m5 0h1m5 0h1m13 0h1m13 0h2m4 0h1m2 0h1m6 0h1m1 0h1m2 0h1M7 94.5h1m7 0h1m20 0h1m3 0h1m2 0h1m7 0h2m1 0h1m6 0h1m53 0h2m17 0h2m3 0h1m18 0h1m7 0h1m13 0h1m2 0h2m2 0h1m5 0h2m9 0h2m5 0h1m12 0h2m10 0h2M1 95.5h1m18 0h1m15 0h1m24 0h1m1 0h1m10 0h2m17 0h1m2 0h1m7 0h4m9 0h2m6 0h2m8 0h1m21 0h1m6 0h1m3 0h1m3 0h3m2 0h2m22 0h2m3 0h1m6 0h1m2 0h2m13 0h1m2 0h1M24 96.5h1m63 0h1m46 0h1M1 97.5h1m26 0h2m23 0h1m24 0h1m80 0h1m35 0h2m18 0h1M73 99.5h1"/>
<path stroke="#fca80e" d="M2 33.5h2m2 0h1m38 0h1m7 0h1m14 0h1m11 0h1m1 0h1m4 0h6m10 0h1m2 0h1m2 0h1m1 0h2m1 0h2m1 0h1m6 0h2m9 0h1m1 0h2m5 0h1m16 0h1m3 0h1m13 0h2m2 0h1m10 0h1m7 0h1m6 0h2m1 0h7m10 0h1m11 0h1M135 61.5h1M1 80.5h2m11 0h2m146 0h1m52 0h1M13 81.5h3m7 0h2m4 0h1m2 0h3m2 0h1m1 0h1m21 0h2m3 0h1m1 0h1m10 0h1m6 0h2m14 0h2m18 0h2m4 0h1m6 0h1m1 0h1m2 0h1m9 0h1m21 0h1m1 0h1m1 0h3m11 0h3m1 0h1m1 0h1m18 0h3m13 0h2m6 0h2M34 82.5h1m59 0h1m19 0h1M2 83.5h1m17 0h1m13 0h1m11 0h1m13 0h2m6 0h1m8 0h5m16 0h1m1 0h4m7 0h1m18 0h2m2 0h1m19 0h1m46 0h1m25 0h1m3 0h1m5 0h1M114 85.5h1m59 0h1M2 87.5h1m14 0h1m11 0h1m34 0h2m2 0h1m5 0h1m5 0h2m11 0h1m10 0h2m8 0h1m2 0h1m16 0h2m8 0h2m3 0h1m26 0h1m1 0h1m8 0h2m10 0h1m25 0h1m1 0h2m4 0h1M0 88.5h2m4 0h2m6 0h1m18 0h2m2 0h1m7 0h2m2 0h1m11 0h1m3 0h1m7 0h1m5 0h2m3 0h1m3 0h1m1 0h1m1 0h1m2 0h2m4 0h4m10 0h3m3 0h1m2 0h1m9 0h2m8 0h3m2 0h1m8 0h1m21 0h2m9 0h1m14 0h1m11 0h2m14 0h1m2 0h1M1 89.5h1m7 0h2m1 0h1m2 0h3m6 0h1m1 0h1m6 0h1m5 0h1m4 0h7m8 0h3m2 0h1m3 0h2m3 0h1m1 0h2m3 0h1m4 0h2m3 0h3m1 0h3m4 0h2m3 0h1m6 0h1m1 0h2m4 0h1m3 0h3m4 0h4m3 0h1m3 0h3m1 0h1m2 0h1m3 0h2m2 0h3m4 0h2m4 0h1m2 0h2m1 0h2m2 0h1m2 0h3m2 0h2m2 0h1m1 0h3m2 0h2m2 0h2m3 0h1m3 0h1m3 0h1m3 0h3m2 0h1m1 0h1m8 0h3m1 0h1M1 90.5h6m1 0h1m2 0h2m2 0h1m1 0h1m6 0h1m3 0h1m5 0h1m3 0h2m5 0h1m2 0h1m1 0h4m4 0h2m9 0h3m5 0h1m1 0h2m2 0h2m3 0h1m2 0h1m1 0h1m1 0h1m4 0h6m6 0h3m1 0h6m2 0h1m1 0h2m6 0h2m14 0h1m3 0h1m3 0h4m5 0h1m1 0h2m4 0h1m1 0h1m1 0h1m1 0h1m4 0h1m2 0h3m3 0h3m5 0h2m3 0h2m6 0h1m4 0h3m5 0h1m1 0h3m6 0h1M4 91.5h3m10 0h1m2 0h1m3 0h2m2 0h1m1 0h1m3 0h1m2 0h1m4 0h1m2 0h1m6 0h2m10 0h2m2 0h1m9 0h2m14 0h1m3 0h1m13 0h1m11 0h2m13 0h1m4 0h1m1 0h5m3 0h2m1 0h1m1 0h1m1 0h1m10 0h6m1 0h3m12 0h3m4 0h2m12 0h1m2 0h4m3 0h3m3 0h1M4 92.5h1m4 0h1m5 0h1m4 0h1m7 0h2m1 0h1m24 0h3m13 0h2m1 0h1m1 0h1m3 0h1m6 0h1m3 0h3m16 0h1m2 0h2m5 0h1m2 0h1m6 0h2m11 0h1m11 0h1m17 0h2m49 0h3m5 0h2m3 0h1M7 93.5h1m5 0h1m3 0h1m1 0h3m1 0h2m12 0h1m6 0h1m4 0h2m2 0h2m2 0h1m8 0h4m1 0h1m1 0h2m2 0h1m7 0h1m11 0h1m6 0h1m16 0h2m6 0h1m3 0h1m1 0h1m9 0h1m2 0h1m3 0h1m3 0h1m6 0h1m2 0h1m2 0h2m7 0h1m3 0h1m2 0h3m5 0h1m1 0h1m2 0h1m5 0h2m1 0h1m2 0h1m2 0h1m2 0h1m3 0h2m6 0h1m5 0h2M6 94.5h1m1 0h2m1 0h1m4 0h1m4 0h3m6 0h2m3 0h1m2 0h1m5 0h1m12 0h1m2 0h1m6 0h1m2 0h1m13 0h2m6 0h1m3 0h1m5 0h2m4 0h2m10 0h1m8 0h1m6 0h1m4 0h1m7 0h1m6 0h1m6 0h1m6 0h1m8 0h1m2 0h1m15 0h3m2 0h1m8 0h1m1 0h1m1 0h1m2 0h3m4 0h1m1 0h1m2 0h1"/>
<path stroke="#fab821" d="M81 33.5h1m96 0h1M10 68.5h2m1 0h1m2 0h2m6 0h1m1 0h1m3 0h1m2 0h1m2 0h1m1 0h1m4 0h1m3 0h1m2 0h2m2 0h1m1 0h1m5 0h2m3 0h3m5 0h1m6 0h1m2 0h1m6 0h1m1 0h2m3 0h1m3 0h1m2 0h1m11 0h1m6 0h3m1 0h2m2 0h1m3 0h2m6 0h1m2 0h1m6 0h2m1 0h1m1 0h1m6 0h1m6 0h1m1 0h3m5 0h3m9 0h1m4 0h1m1 0h1m2 0h3m1 0h1m1 0h1m10 0h1m4 0h1m2 0h2m6 0h2M93 88.5h2M2 89.5h1m8 0h1m13 0h1m8 0h1m72 0h2m5 0h1m2 0h1m12 0h2m14 0h1m20 0h3m2 0h1m7 0h1m13 0h1m32 0h1m8 0h1m3 0h1M29 90.5h3m5 0h1m8 0h2m12 0h1m12 0h1m20 0h1m1 0h1m28 0h1m18 0h1m26 0h2m3 0h1m1 0h1m1 0h1m4 0h1m16 0h1M29 91.5h1m63 0h1m84 0h1M0 93.5h2m1 0h4m2 0h4m5 0h1m6 0h1m1 0h5m1 0h1m4 0h1m2 0h2m2 0h1m5 0h2m5 0h3m1 0h4m6 0h1m2 0h2m1 0h1m1 0h1m5 0h2m1 0h2m4 0h1m2 0h3m1 0h1m2 0h1m1 0h6m1 0h3m1 0h1m7 0h3m2 0h2m1 0h1m2 0h1m1 0h1m4 0h1m4 0h3m1 0h1m3 0h2m5 0h2m1 0h1m5 0h1m1 0h1m7 0h2m3 0h1m1 0h3m3 0h2m1 0h2m2 0h1m2 0h1m8 0h1m2 0h2m2 0h2m1 0h1m1 0h1m3 0h1m4 0h4M0 94.5h1m1 0h4m4 0h1m1 0h3m2 0h4m3 0h2m2 0h2m3 0h2m4 0h1m1 0h1m3 0h1m1 0h3m5 0h2m1 0h2m2 0h3m1 0h1m6 0h2m1 0h2m5 0h1m3 0h2m2 0h1m1 0h1m6 0h2m4 0h2m2 0h1m2 0h2m3 0h2m1 0h8m1 0h1m2 0h1m3 0h2m1 0h1m1 0h1m2 0h1m1 0h1m5 0h3m4 0h1m1 0h1m4 0h1m1 0h1m3 0h6m2 0h1m7 0h1m1 0h2m2 0h3m9 0h3m3 0h1m1 0h1m1 0h2m3 0h2m3 0h1m1 0h1m5 0h1m2 0h2m1 0h1"/>
<path stroke="#f8c835" d="M0 68.5h10m2 0h1m1 0h2m2 0h6m1 0h1m1 0h3m1 0h2m1 0h2m1 0h1m1 0h4m1 0h3m1 0h2m2 0h2m1 0h1m1 0h5m2 0h3m3 0h5m1 0h6m1 0h2m1 0h6m1 0h1m2 0h3m1 0h3m1 0h2m1 0h11m1 0h6m3 0h1m2 0h2m1 0h3m2 0h6m1 0h2m1 0h6m2 0h1m1 0h1m1 0h6m1 0h6m1 0h1m3 0h5m3 0h9m1 0h4m1 0h1m1 0h2m3 0h1m1 0h1m1 0h10m1 0h4m1 0h2m2 0h6m2 0h1M26 93.5h1m5 0h1m46 0h1m1 0h4m6 0h4m1 0h1m6 0h1m2 0h1m10 0h1m5 0h3m12 0h1m20 0h3m9 0h2m3 0h2m11 0h1m11 0h2m29 0h2m6 0h1M1 94.5h1m24 0h2m14 0h1m3 0h1m18 0h1m5 0h2m2 0h1m2 0h5m3 0h1m8 0h1m8 0h2m5 0h2m4 0h1m13 0h2m10 0h2m14 0h1m1 0h1m6 0h1m2 0h2m17 0h1m10 0h2m3 0h1m25 0h3m5 0h1"/>
<path stroke="#f6d849" d="M88 93.5h1M94 94.5h1"/></g></g></g>
<clipPath id="c983"><rect x="983.5" y="856.0" width="200.5" height="766.5"/></clipPath><g filter="url(#sblur)"><g clip-path="url(#c983)"><rect x="983.5" y="854.56" width="200.5" height="7.69" fill="#6d186e"/>
<rect x="983.5" y="862.25" width="200.5" height="7.69" fill="#61146d"/>
<rect x="983.5" y="869.94" width="200.5" height="7.69" fill="#731a6c"/>
<rect x="983.5" y="877.62" width="200.5" height="7.69" fill="#7d1e6b"/>
<rect x="983.5" y="885.32" width="200.5" height="7.69" fill="#6e186d"/>
<rect x="983.5" y="893.01" width="200.5" height="7.69" fill="#67166e"/>
<rect x="983.5" y="900.70" width="200.5" height="7.69" fill="#a12c60"/>
<rect x="983.5" y="908.39" width="200.5" height="7.69" fill="#a32d60"/>
<rect x="983.5" y="916.08" width="200.5" height="7.69" fill="#b33358"/>
<rect x="983.5" y="923.77" width="200.5" height="7.69" fill="#ba3655"/>
<rect x="983.5" y="931.46" width="200.5" height="7.69" fill="#af315a"/>
<rect x="983.5" y="939.15" width="200.5" height="7.69" fill="#bd3853"/>
<rect x="983.5" y="946.84" width="200.5" height="7.69" fill="#c33c4f"/>
<rect x="983.5" y="954.53" width="200.5" height="7.69" fill="#c8404b"/>
<rect x="983.5" y="962.22" width="200.5" height="7.69" fill="#c9414a"/>
<rect x="983.5" y="969.91" width="200.5" height="7.69" fill="#c63f4c"/>
<rect x="983.5" y="977.60" width="200.5" height="7.69" fill="#d14744"/>
<rect x="983.5" y="985.29" width="200.5" height="7.69" fill="#d84d3e"/>
<rect x="983.5" y="992.98" width="200.5" height="7.69" fill="#d54a41"/>
<rect x="983.5" y="1000.67" width="200.5" height="7.69" fill="#e15834"/>
<rect x="983.5" y="1008.36" width="200.5" height="7.69" fill="#f2741c"/>
<rect x="983.5" y="1016.05" width="200.5" height="7.69" fill="#f2741c"/>
<rect x="983.5" y="1023.74" width="200.5" height="7.69" fill="#e55e2f"/>
<rect x="983.5" y="1031.43" width="200.5" height="7.69" fill="#e35b31"/>
<rect x="983.5" y="1039.12" width="200.5" height="7.69" fill="#e35c31"/>
<rect x="983.5" y="1046.81" width="200.5" height="7.69" fill="#e25a32"/>
<rect x="983.5" y="1054.50" width="200.5" height="7.69" fill="#e35a32"/>
<rect x="983.5" y="1062.18" width="200.5" height="7.69" fill="#e45d30"/>
<rect x="983.5" y="1069.88" width="200.5" height="7.69" fill="#e05636"/>
<rect x="983.5" y="1077.57" width="200.5" height="7.69" fill="#dd513a"/>
<rect x="983.5" y="1085.26" width="200.5" height="7.69" fill="#dd513a"/>
<rect x="983.5" y="1092.95" width="200.5" height="7.69" fill="#e15834"/>
<rect x="983.5" y="1100.64" width="200.5" height="7.69" fill="#e15934"/>
<rect x="983.5" y="1108.33" width="200.5" height="7.69" fill="#f68814"/>
<rect x="983.5" y="1116.02" width="200.5" height="7.69" fill="#f3771b"/>
<rect x="983.5" y="1123.70" width="200.5" height="7.69" fill="#de5338"/>
<rect x="983.5" y="1131.39" width="200.5" height="7.69" fill="#de5239"/>
<rect x="983.5" y="1139.09" width="200.5" height="7.69" fill="#e15735"/>
<rect x="983.5" y="1146.78" width="200.5" height="7.69" fill="#d74d3e"/>
<rect x="983.5" y="1154.47" width="200.5" height="7.69" fill="#e15735"/>
<rect x="983.5" y="1162.16" width="200.5" height="7.69" fill="#da4f3c"/>
<rect x="983.5" y="1169.85" width="200.5" height="7.69" fill="#e05636"/>
<rect x="983.5" y="1177.54" width="200.5" height="7.69" fill="#dc503b"/>
<rect x="983.5" y="1185.23" width="200.5" height="7.69" fill="#e96529"/>
<rect x="983.5" y="1192.91" width="200.5" height="7.69" fill="#ea6628"/>
<rect x="983.5" y="1200.61" width="200.5" height="7.69" fill="#df5537"/>
<rect x="983.5" y="1208.30" width="200.5" height="7.69" fill="#e25933"/>
<rect x="983.5" y="1215.99" width="200.5" height="7.69" fill="#e55e2f"/>
<rect x="983.5" y="1223.68" width="200.5" height="7.69" fill="#dd5239"/>
<rect x="983.5" y="1231.37" width="200.5" height="7.69" fill="#e15834"/>
<rect x="983.5" y="1239.06" width="200.5" height="7.69" fill="#d64c3f"/>
<rect x="983.5" y="1246.75" width="200.5" height="7.69" fill="#d74c3f"/>
<rect x="983.5" y="1254.43" width="200.5" height="7.69" fill="#df5438"/>
<rect x="983.5" y="1262.12" width="200.5" height="7.69" fill="#dd513a"/>
<rect x="983.5" y="1269.82" width="200.5" height="7.69" fill="#d94e3d"/>
<rect x="983.5" y="1277.51" width="200.5" height="7.69" fill="#e25933"/>
<rect x="983.5" y="1285.20" width="200.5" height="7.69" fill="#dd513a"/>
<rect x="983.5" y="1292.88" width="200.5" height="7.69" fill="#e25a33"/>
<rect x="983.5" y="1300.58" width="200.5" height="7.69" fill="#de5338"/>
<rect x="983.5" y="1308.27" width="200.5" height="7.69" fill="#dc513a"/>
<rect x="983.5" y="1315.96" width="200.5" height="7.69" fill="#ec6a25"/>
<rect x="983.5" y="1323.64" width="200.5" height="7.69" fill="#f3781a"/>
<rect x="983.5" y="1331.34" width="200.5" height="7.69" fill="#ee6e22"/>
<rect x="983.5" y="1339.03" width="200.5" height="7.69" fill="#de5239"/>
<rect x="983.5" y="1346.72" width="200.5" height="7.69" fill="#e55f2e"/>
<rect x="983.5" y="1354.41" width="200.5" height="7.69" fill="#e7622c"/>
<rect x="983.5" y="1362.10" width="200.5" height="7.69" fill="#e7612d"/>
<rect x="983.5" y="1369.79" width="200.5" height="7.69" fill="#f68515"/>
<rect x="983.5" y="1377.48" width="200.5" height="7.69" fill="#f8c530"/>
<rect x="983.5" y="1385.16" width="200.5" height="7.69" fill="#e15834"/>
<rect x="983.5" y="1392.86" width="200.5" height="7.69" fill="#e15735"/>
<rect x="983.5" y="1400.55" width="200.5" height="7.69" fill="#e55f2e"/>
<rect x="983.5" y="1408.24" width="200.5" height="7.69" fill="#e55e2f"/>
<rect x="983.5" y="1415.93" width="200.5" height="7.69" fill="#ea6727"/>
<rect x="983.5" y="1423.62" width="200.5" height="7.69" fill="#e35b32"/>
<rect x="983.5" y="1431.31" width="200.5" height="7.69" fill="#e6602e"/>
<rect x="983.5" y="1439.00" width="200.5" height="7.69" fill="#e35b32"/>
<rect x="983.5" y="1446.69" width="200.5" height="7.69" fill="#e8632b"/>
<rect x="983.5" y="1454.38" width="200.5" height="7.69" fill="#ec6a25"/>
<rect x="983.5" y="1462.07" width="200.5" height="7.69" fill="#e8632b"/>
<rect x="983.5" y="1469.76" width="200.5" height="7.69" fill="#f58316"/>
<rect x="983.5" y="1477.45" width="200.5" height="7.69" fill="#f78d13"/>
<rect x="983.5" y="1485.13" width="200.5" height="7.69" fill="#f47c19"/>
<rect x="983.5" y="1492.83" width="200.5" height="7.69" fill="#f47a1a"/>
<rect x="983.5" y="1500.52" width="200.5" height="7.69" fill="#f57e18"/>
<rect x="983.5" y="1508.21" width="200.5" height="7.69" fill="#f68615"/>
<rect x="983.5" y="1515.89" width="200.5" height="7.69" fill="#f88f12"/>
<rect x="983.5" y="1523.59" width="200.5" height="7.69" fill="#f58117"/>
<rect x="983.5" y="1531.28" width="200.5" height="7.69" fill="#f78d13"/>
<rect x="983.5" y="1538.97" width="200.5" height="7.69" fill="#f9970f"/>
<rect x="983.5" y="1546.66" width="200.5" height="7.69" fill="#f89111"/>
<rect x="983.5" y="1554.35" width="200.5" height="7.69" fill="#f88f12"/>
<rect x="983.5" y="1562.04" width="200.5" height="7.69" fill="#f89211"/>
<rect x="983.5" y="1569.73" width="200.5" height="7.69" fill="#fab31a"/>
<rect x="983.5" y="1577.42" width="200.5" height="7.69" fill="#fba90f"/>
<rect x="983.5" y="1585.11" width="200.5" height="7.69" fill="#f58117"/>
<rect x="983.5" y="1592.80" width="200.5" height="7.69" fill="#f07020"/>
<rect x="983.5" y="1600.49" width="200.5" height="7.69" fill="#f0721f"/>
<rect x="983.5" y="1608.18" width="200.5" height="7.69" fill="#e8632b"/>
<rect x="983.5" y="1615.87" width="200.5" height="7.69" fill="#e05735"/><g fill="none" stroke-width="1" shape-rendering="crispEdges" transform="translate(983.50 854.555) scale(2.20330 7.69000)"><path stroke="#0e0726" d="M56 1.5h1"/>
<path stroke="#150b37" d="M27 0.5h1M29 1.5h1"/>
<path stroke="#230b47" d="M0 0.5h1m25 0h1M30 1.5h1m15 0h1m10 0h1M36 2.5h1m20 0h1M89 3.5h1M36 5.5h1m13 0h1m6 0h1m23 0h1m3 0h1"/>
<path stroke="#310a56" d="M68 0.5h1M74 1.5h2m12 0h1M3 2.5h1M24 4.5h1M58 5.5h1m13 0h1"/>
<path stroke="#3f0a65" d="M25 0.5h1m4 0h1m34 0h1m10 0h1M7 1.5h1m18 0h2m14 0h2m5 0h2m11 0h1m20 0h1M56 2.5h1m5 0h1M25 3.5h1M20 4.5h1m4 0h1m24 0h1m6 0h1m4 0h1M5 5.5h1m15 0h1m13 0h1m33 0h1m18 0h1m1 0h1"/>
<path stroke="#4c0d6a" d="M16 0.5h1m12 0h1m1 0h1m4 0h1m5 0h1m13 0h1m31 0h1M25 1.5h1m2 0h1m2 0h1m4 0h1m35 0h1m8 0h2m6 0h1M26 2.5h2m1 0h1m1 0h1m42 0h1m14 0h2M10 3.5h1m43 0h1m7 0h1m25 0h1M6 4.5h2m30 0h1m1 0h1m15 0h1m2 0h1m11 0h1m9 0h1M15 5.5h1m6 0h1m26 0h1m12 0h1m10 0h1m13 0h1m1 0h1M0 7.5h1m87 0h2M57 10.5h1m4 0h1"/>
<path stroke="#59126b" d="M7 0.5h1m20 0h1m9 0h1m1 0h1m8 0h2m4 0h1m1 0h2m3 0h1m12 0h1m5 0h1m7 0h1M8 1.5h1m8 0h1m2 0h1m3 0h1m10 0h1m2 0h1m1 0h1m17 0h2m5 0h1m2 0h1m10 0h1m4 0h2m4 0h1M8 2.5h1m10 0h1m24 0h1m13 0h1m25 0h1m3 0h1M24 3.5h1m5 0h2m4 0h1m1 0h1m25 0h1M5 4.5h1m3 0h1m13 0h1m12 0h2m20 0h1m4 0h3m6 0h1m1 0h2M4 5.5h1m3 0h2m9 0h2m2 0h2m4 0h1m8 0h2m2 0h1m13 0h1m4 0h1m8 0h1m15 0h1M16 6.5h1m19 0h2M82 9.5h1M20 10.5h1m28 0h1M56 11.5h1"/>
<path stroke="#66166d" d="M10 0.5h2m5 0h2m1 0h1m3 0h1m16 0h1m1 0h1m2 0h3m5 0h1m4 0h1m14 0h1m2 0h1m4 0h1m7 0h1M0 1.5h1m5 0h1m3 0h4m2 0h1m2 0h1m12 0h1m8 0h1m12 0h1m6 0h1m7 0h1m1 0h1m6 0h1m1 0h1m6 0h1M7 2.5h1m6 0h1m2 0h1m10 0h1m1 0h1m1 0h1m2 0h1m1 0h1m4 0h2m4 0h2m4 0h1m4 0h1m21 0h3M3 3.5h2m21 0h1m12 0h1m6 0h1m8 0h4m6 0h1m15 0h1m8 0h1M0 4.5h1m7 0h1m1 0h1m1 0h1m4 0h1m1 0h1m1 0h1m4 0h1m4 0h1m7 0h1m9 0h1m16 0h1m3 0h1m14 0h1m1 0h4M10 5.5h1m3 0h1m2 0h2m6 0h1m14 0h1m2 0h1m2 0h2m11 0h1m5 0h1m2 0h1m13 0h1m1 0h1M28 6.5h1m11 0h2m45 0h1m2 0h1M90 7.5h1M36 8.5h2M12 9.5h1m68 0h1M58 10.5h1m21 0h1M85 11.5h1M7 12.5h1m41 0h1M88 13.5h2"/>
<path stroke="#731a6c" d="M3 0.5h2m1 0h1m5 0h2m1 0h1m16 0h1m4 0h1m26 0h1m2 0h1m12 0h1m2 0h1m1 0h1M14 1.5h1m3 0h1m18 0h1m1 0h1m4 0h2m1 0h2m4 0h1m1 0h1m7 0h2m8 0h1m3 0h1m8 0h1M10 2.5h2m6 0h1m1 0h1m4 0h1m12 0h1m1 0h1m5 0h1m3 0h1m10 0h1m2 0h1m4 0h5m1 0h1M17 3.5h1m2 0h1m1 0h1m4 0h1m12 0h1m1 0h1m6 0h1m9 0h1m1 0h1m12 0h1m2 0h1m4 0h4M4 4.5h1m6 0h1m6 0h1m3 0h1m4 0h1m1 0h1m12 0h1m3 0h1m7 0h2m12 0h1m13 0h3m1 0h1M3 5.5h1m2 0h1m19 0h3m2 0h1m5 0h1m3 0h1m2 0h1m15 0h1m13 0h1m8 0h1M17 6.5h1m11 0h1m28 0h1m6 0h1m22 0h1M28 7.5h1m9 0h1M48 8.5h1m27 0h1M48 10.5h1m30 0h1M30 11.5h1m28 0h1M65 12.5h1M48 14.5h1m13 0h1M90 15.5h1"/>
<path stroke="#801f6a" d="M1 0.5h1m6 0h1m5 0h1m4 0h1m1 0h1m13 0h1m3 0h1m20 0h1m2 0h1m5 0h1m2 0h1m6 0h1m4 0h1m2 0h1M1 1.5h1m1 0h3m9 0h1m5 0h3m9 0h1m17 0h1m8 0h1m9 0h1m5 0h1M0 2.5h1m1 0h1m1 0h1m7 0h1m2 0h2m7 0h1m16 0h1m5 0h1m3 0h1m3 0h1m7 0h1m1 0h1m2 0h1m9 0h1m6 0h1M6 3.5h2m8 0h1m6 0h1m4 0h2m2 0h1m4 0h1m5 0h1m1 0h1m2 0h1m1 0h1m12 0h1m4 0h1m3 0h1m3 0h1M1 4.5h1m11 0h3m12 0h1m1 0h1m1 0h1m2 0h1m5 0h1m2 0h2m1 0h1m12 0h1m8 0h1m3 0h1m2 0h2M0 5.5h1m1 0h1m4 0h1m3 0h2m3 0h1m13 0h1m1 0h3m10 0h1m2 0h1m5 0h2m15 0h1m3 0h3m2 0h1M25 6.5h3m10 0h1m3 0h1m46 0h1M36 7.5h1m25 0h1m19 0h1m4 0h1M7 10.5h1m11 0h1m11 0h1m28 0h1m20 0h1m6 0h1M12 11.5h1m32 0h1m9 0h1m4 0h1M6 12.5h1m38 0h1m2 0h1M21 13.5h1m25 0h1m23 0h1M47 14.5h1m15 0h1m19 0h1M11 15.5h1m5 0h1m67 0h1"/>
<path stroke="#8e2468" d="M2 0.5h1m2 0h1m16 0h2m9 0h1m10 0h2m5 0h1m1 0h1m7 0h1m4 0h1m3 0h2m6 0h1M9 1.5h1m24 0h1m17 0h1m13 0h2M1 2.5h1m4 0h1m2 0h1m3 0h1m7 0h1m11 0h2m10 0h1m7 0h1m6 0h1m15 0h2m1 0h2m6 0h1M0 3.5h1m7 0h1m2 0h2m1 0h1m3 0h2m15 0h1m5 0h1m2 0h1m2 0h1m5 0h1m6 0h1m8 0h3m3 0h1m2 0h3m6 0h1M3 4.5h1m12 0h1m16 0h2m8 0h1m4 0h1m12 0h1m5 0h1m10 0h1m1 0h1M1 5.5h1m11 0h1m37 0h3m9 0h2m13 0h1M0 6.5h1m4 0h1m9 0h1m6 0h1m8 0h1m3 0h1m20 0h2m4 0h3M17 7.5h1m39 0h2m1 0h1m5 0h1m14 0h1M17 8.5h1m31 0h1m30 0h1M3 9.5h2m57 0h1M25 10.5h2m15 0h1m13 0h1m28 0h1M7 11.5h1m23 0h1m6 0h1m37 0h1M8 12.5h1M82 13.5h1M81 14.5h1M1 15.5h1m87 0h1M0 16.5h2m3 0h1m73 0h1m6 0h1M12 17.5h2m47 0h2m21 0h1M51 18.5h2M62 29.5h1M27 38.5h1m26 0h1M88 40.5h2M24 42.5h1m4 0h1m51 0h1M41 48.5h1m47 0h2M38 50.5h1m42 0h1M12 51.5h1m45 0h2m22 0h2M10 54.5h1m63 0h1M88 59.5h1"/>
<path stroke="#9b2963" d="M34 0.5h1m17 0h1m20 0h1m12 0h1M2 1.5h1M5 2.5h1m16 0h1m16 0h1m26 0h2M1 3.5h1m3 0h1m7 0h1m1 0h1m5 0h1m11 0h1m39 0h1M2 4.5h1m48 0h1m1 0h1m25 0h1M79 5.5h1M4 6.5h1m9 0h1m3 0h2m4 0h1m7 0h1m17 0h1m8 0h1m10 0h1m3 0h1m6 0h1m3 0h1M1 7.5h1m2 0h2m1 0h2m2 0h2m3 0h1m2 0h2m3 0h2m1 0h1m1 0h1m1 0h2m4 0h1m11 0h1m6 0h1m2 0h1m1 0h1m2 0h2m3 0h1m10 0h1m2 0h3M6 8.5h1m17 0h2m1 0h1m1 0h1m20 0h1m5 0h1m12 0h1m11 0h1m2 0h1m3 0h2M7 9.5h1m21 0h1m18 0h1m9 0h1m4 0h1m23 0h1M24 10.5h1m26 0h1m7 0h1m3 0h1m18 0h1M15 11.5h1m30 0h1m11 0h1m9 0h1M46 12.5h1m3 0h1M38 13.5h1M8 14.5h1m52 0h1m20 0h1m4 0h1M86 15.5h1M80 16.5h1M56 18.5h1M0 19.5h1M57 22.5h1M17 23.5h1m7 0h1M24 24.5h1m17 0h1M27 25.5h1m28 0h2m27 0h1M62 26.5h2M47 27.5h1M36 28.5h1M43 29.5h1m17 0h1M0 30.5h2m15 0h2m40 0h1M0 31.5h1m16 0h1m24 0h1m29 0h1M0 35.5h2m45 0h1m14 0h1m8 0h1M12 36.5h1m24 0h2m24 0h1m24 0h2M49 37.5h1m4 0h1m14 0h1M75 38.5h2M20 39.5h1m62 0h1m4 0h1M3 40.5h1m45 0h1m3 0h1m4 0h2m25 0h3M50 41.5h1M2 42.5h1m9 0h1m10 0h1M16 45.5h1m5 0h1m13 0h1M16 46.5h1M27 47.5h1M65 48.5h1M42 50.5h1M13 51.5h2M66 52.5h3M11 53.5h1m12 0h1m65 0h1M34 54.5h1m30 0h1M71 55.5h1M71 56.5h2m9 0h1M26 57.5h1m56 0h1M36 58.5h1m19 0h1m13 0h1M7 59.5h1m4 0h1m42 0h1M19 63.5h1m45 0h1m12 0h1M77 69.5h1M25 70.5h1m15 0h1m28 0h1M20 72.5h1M25 74.5h1M19 99.5h1m8 0h1m9 0h1m43 0h1"/>
<path stroke="#a82f5d" d="M9 0.5h1M23 2.5h1m28 0h1m33 0h1M2 3.5h1m6 0h1m24 0h1m16 0h1m34 0h1M52 4.5h1M66 5.5h2M7 6.5h1m12 0h2m8 0h1m8 0h1m4 0h1m4 0h1m19 0h1m10 0h1m1 0h1m1 0h1M6 7.5h1m3 0h1m4 0h1m2 0h1m2 0h1m4 0h1m6 0h1m7 0h2m3 0h3m1 0h1m3 0h1m8 0h1m6 0h1m1 0h1m3 0h2M0 8.5h3m4 0h1m7 0h1m7 0h1m4 0h1m4 0h1m4 0h1m3 0h1m9 0h1m4 0h3m2 0h1m9 0h1m14 0h1M18 9.5h1m1 0h1m4 0h2m7 0h1m5 0h1m6 0h1m5 0h2m2 0h1m1 0h1m12 0h1m1 0h1m8 0h1m4 0h2M5 10.5h2m1 0h1m1 0h1m6 0h2m22 0h1m8 0h1m10 0h1m2 0h1m5 0h1m7 0h1m5 0h1m4 0h1M27 11.5h1m1 0h1m24 0h1m2 0h1m6 0h1M20 12.5h1m6 0h1m19 0h1m11 0h1m8 0h1m12 0h1M19 13.5h2m11 0h1m3 0h1m5 0h1m3 0h1m9 0h1m2 0h1m23 0h1m6 0h1M24 14.5h1m24 0h1m34 0h1m3 0h1M10 15.5h1m7 0h1m1 0h1m1 0h1m11 0h1m3 0h1m3 0h1m18 0h1m19 0h1m2 0h1M2 16.5h1m29 0h1m1 0h1m43 0h1m2 0h1m3 0h1M10 18.5h1m15 0h1m28 0h1m22 0h1M6 19.5h1m61 0h1M30 22.5h1M18 23.5h1m13 0h1M30 24.5h1M3 25.5h1M67 26.5h2M2 27.5h1m18 0h2M52 28.5h1m18 0h1M79 29.5h1M47 31.5h1m25 0h1m5 0h1M5 32.5h2m9 0h1m53 0h1M35 35.5h1m10 0h1M16 36.5h1M65 37.5h1M35 38.5h2m9 0h1m41 0h2M39 39.5h1m42 0h1M2 40.5h1m73 0h1M52 41.5h1M44 43.5h1m9 0h1m7 0h1M1 44.5h2M72 45.5h1M42 46.5h1m30 0h1m5 0h1M13 47.5h2M18 48.5h1m44 0h2M24 49.5h1m33 0h1m11 0h1M37 50.5h1m17 0h1M80 52.5h1M27 53.5h1m42 0h1M17 54.5h1m27 0h1M40 55.5h1m3 0h1m7 0h1m19 0h1M39 57.5h1m42 0h1M50 58.5h1m9 0h1m2 0h1m22 0h1M11 59.5h1m8 0h1m35 0h1M59 60.5h1M14 63.5h1m48 0h2m14 0h1M46 65.5h2m36 0h1M8 66.5h1m23 0h1M13 69.5h1m27 0h1M70 71.5h1m16 0h1M21 72.5h1m48 0h1M80 74.5h1m3 0h1M27 75.5h1m4 0h1m26 0h1m13 0h1M14 76.5h1m36 0h1m34 0h1M56 77.5h1M24 78.5h1M49 98.5h1m13 0h1m6 0h1m7 0h1M18 99.5h1m35 0h1"/>
<path stroke="#b53457" d="M52 3.5h1m13 0h2M1 6.5h1m1 0h1m2 0h1m1 0h1m2 0h3m9 0h1m9 0h1m9 0h1m2 0h1m7 0h2m4 0h2m6 0h1m2 0h2m2 0h1m3 0h1m3 0h1M3 7.5h1m9 0h1m8 0h1m12 0h1m4 0h1m2 0h2m23 0h1m5 0h2m2 0h2M4 8.5h2m5 0h2m5 0h1m7 0h1m4 0h1m8 0h2m1 0h2m2 0h1m3 0h1m2 0h1m9 0h2m2 0h1m4 0h3m1 0h1m4 0h1m2 0h1M8 9.5h1m2 0h1m1 0h2m2 0h1m9 0h2m1 0h1m2 0h1m8 0h1m6 0h2m5 0h1m7 0h2m5 0h1m6 0h3m9 0h1M11 10.5h1m9 0h2m4 0h1m2 0h1m1 0h1m2 0h2m1 0h1m26 0h1m3 0h1m1 0h2m4 0h1m5 0h1m3 0h1m2 0h1M17 11.5h1m2 0h1m15 0h2m1 0h2m11 0h1m9 0h1m4 0h1m1 0h1m19 0h2M9 12.5h1m7 0h1m34 0h1m9 0h1m4 0h1m4 0h1m7 0h1m1 0h2m4 0h1M18 13.5h1m3 0h2m17 0h1m20 0h1m18 0h1M7 14.5h1m17 0h1m3 0h1m1 0h1m6 0h1m17 0h1m33 0h1M3 15.5h1m15 0h1m4 0h1m7 0h1m25 0h1m1 0h1m1 0h1m9 0h1m14 0h2M14 16.5h1m8 0h1m5 0h1m9 0h1M8 17.5h1m62 0h1m1 0h1m4 0h1M2 18.5h1m4 0h1m19 0h1M27 21.5h1M28 22.5h1M24 23.5h1m23 0h1M31 24.5h1M42 25.5h1m15 0h1M5 26.5h1m66 0h1M18 28.5h1m24 0h1m25 0h1M1 29.5h1m28 0h1M4 30.5h1m59 0h1m8 0h1M43 31.5h1M21 32.5h1m66 0h1M27 35.5h1m12 0h1m43 0h1M62 36.5h1m13 0h1M2 37.5h1m58 0h1m20 0h1M12 38.5h1m17 0h1m51 0h1m7 0h1M1 40.5h1M53 41.5h1m16 0h1M58 42.5h1m23 0h1M84 43.5h1M19 45.5h1m34 0h1M28 46.5h1m49 0h1M5 47.5h1m12 0h1m71 0h1M12 50.5h1m18 0h1m15 0h1m1 0h1m13 0h1m8 0h1m9 0h1M26 51.5h1m7 0h1m6 0h1m33 0h2m7 0h1M10 52.5h1m49 0h1m4 0h1m15 0h1M3 53.5h1m24 0h1m15 0h1m15 0h1M11 54.5h1m23 0h1m8 0h1m28 0h1M8 56.5h1m38 0h1m2 0h1m19 0h1m10 0h1M32 57.5h1M52 58.5h1M8 59.5h1m80 0h1M63 60.5h1m16 0h1M34 62.5h2m2 0h2m2 0h1M42 63.5h1m27 0h1m18 0h1M7 64.5h1m24 0h1m42 0h2M85 65.5h1M19 66.5h1m3 0h1m3 0h1m27 0h1M27 69.5h1M12 70.5h1m29 0h1M9 71.5h1m56 0h2M57 72.5h1m30 0h1M23 73.5h1m42 0h2M5 74.5h1m1 0h1m34 0h1m3 0h1M1 76.5h1m50 0h1m20 0h1m9 0h1M25 77.5h1m29 0h1m3 0h2m4 0h2m12 0h1M73 78.5h1M16 79.5h1m29 0h1m28 0h2m2 0h1m2 0h2M33 96.5h1m38 0h1M31 97.5h1m4 0h1m13 0h1M48 98.5h1M42 99.5h1m6 0h1m5 0h1m17 0h1"/>
<path stroke="#c13b50" d="M2 6.5h1m7 0h1m34 0h1m1 0h1m5 0h1m13 0h1m5 0h1m4 0h1M2 7.5h1m11 0h1m8 0h1m6 0h1m3 0h1m16 0h3m1 0h1m15 0h1m14 0h1M3 8.5h1m4 0h1m5 0h1m1 0h1m3 0h1m1 0h1m7 0h1m1 0h1m2 0h1m10 0h1m13 0h2m1 0h1m15 0h1m3 0h1m6 0h1M0 9.5h1m1 0h1m7 0h1m8 0h1m11 0h2m5 0h1m2 0h1m4 0h1m5 0h1m2 0h1m4 0h2m22 0h2M0 10.5h1m3 0h1m7 0h1m10 0h1m4 0h2m13 0h1m2 0h2m6 0h1m19 0h2M6 11.5h1m7 0h1m1 0h1m7 0h3m1 0h1m3 0h1m8 0h2m1 0h1m4 0h3m11 0h1m1 0h1m4 0h1m4 0h1m1 0h1m3 0h1m2 0h1m3 0h1M10 12.5h2m1 0h1m4 0h1m2 0h1m6 0h2m1 0h1m4 0h1m19 0h3m2 0h1m2 0h1m10 0h1m8 0h2m3 0h1M7 13.5h1m5 0h1m3 0h1m6 0h2m5 0h1m1 0h1m5 0h2m7 0h1m8 0h2m13 0h1m6 0h1M1 14.5h1m15 0h1m2 0h1m5 0h3m1 0h1m8 0h1m17 0h3m4 0h1m20 0h1m3 0h1M0 15.5h1m6 0h1m4 0h1m1 0h1m8 0h1m1 0h2m4 0h1m8 0h2m17 0h1m8 0h1m13 0h1M6 16.5h1m5 0h2m8 0h1m7 0h1m7 0h1m2 0h1m2 0h1m17 0h1m9 0h1m9 0h1M1 17.5h1m21 0h1m13 0h1m11 0h1m13 0h1m6 0h1m14 0h1M1 18.5h1m6 0h1m8 0h1m22 0h1m2 0h1m13 0h1m26 0h2m4 0h1M16 19.5h2m17 0h1M72 22.5h1M8 23.5h1m73 0h1M29 24.5h1m5 0h1m49 0h1M6 25.5h1m56 0h1M20 26.5h2M81 27.5h1M2 28.5h1m19 0h1m5 0h1m6 0h1m6 0h1m27 0h1m15 0h1M2 29.5h1m7 0h1m33 0h1m11 0h1m2 0h2m2 0h2m16 0h1M2 30.5h2m23 0h2m2 0h2m2 0h1m1 0h1m50 0h2M1 31.5h1m16 0h1m34 0h1m1 0h1m24 0h1M17 32.5h1m14 0h1m11 0h1m15 0h1M19 35.5h1m30 0h1m19 0h1m14 0h1M13 36.5h1m1 0h1m28 0h1m16 0h1M70 37.5h1M10 38.5h1m9 0h1m5 0h1m1 0h1m2 0h1m12 0h1m36 0h1m5 0h1M31 39.5h1m2 0h1m8 0h1m30 0h1m10 0h1M11 40.5h1m40 0h1m31 0h1M0 41.5h1m26 0h1m10 0h1M54 42.5h1m7 0h1M10 43.5h1m52 0h1M0 44.5h1m23 0h1m33 0h1M5 45.5h1m9 0h1m2 0h1m18 0h1m35 0h1M25 46.5h1m62 0h1M45 47.5h1M26 48.5h1m28 0h1m6 0h1M5 49.5h1m24 0h1M7 50.5h1m2 0h2m4 0h1m9 0h1m21 0h1m1 0h1m29 0h1m2 0h1m5 0h1M35 51.5h1m10 0h2m1 0h1m20 0h2M7 52.5h1m4 0h1m17 0h1M36 53.5h1m22 0h1M0 54.5h1m5 0h1m21 0h1m52 0h1M78 55.5h1M7 56.5h1m5 0h1m13 0h1m3 0h1m5 0h2m9 0h1M27 57.5h1m43 0h1m12 0h1M29 58.5h1m5 0h1m15 0h1m12 0h1M13 59.5h1m40 0h1m2 0h1M0 60.5h1m45 0h1m21 0h1M67 62.5h1M20 63.5h1m20 0h1m5 0h1m23 0h1m11 0h1M16 64.5h2m44 0h1M10 65.5h1m51 0h1M22 66.5h1m11 0h1M26 69.5h1m24 0h1M28 70.5h1m16 0h1M16 71.5h1m10 0h1m28 0h1M58 72.5h1m10 0h1M7 73.5h1m10 0h1M1 74.5h1m4 0h1m34 0h1M16 75.5h1m2 0h1m26 0h1m3 0h1m21 0h1M50 76.5h1m36 0h1M90 77.5h1M37 78.5h1M8 79.5h3m16 0h1m39 0h1M66 96.5h1m9 0h1M30 97.5h1m29 0h1M31 98.5h1M8 99.5h1m32 0h1m11 0h1m25 0h1"/>
<path stroke="#cc4447" d="M34 6.5h1m13 0h1m2 0h1m24 0h2m8 0h1M9 7.5h1m29 0h1m5 0h1m21 0h1m5 0h1M10 8.5h1m2 0h1m5 0h1m14 0h1m18 0h1m1 0h1m10 0h1m3 0h2m6 0h1M1 9.5h1m3 0h2m8 0h1m5 0h1m2 0h1m10 0h2m6 0h2m6 0h1m17 0h2m2 0h1m1 0h1m1 0h1m8 0h1M1 10.5h3m9 0h4m16 0h2m2 0h1m2 0h1m3 0h1m7 0h2m1 0h1m12 0h1m17 0h1M0 11.5h1m2 0h2m3 0h1m2 0h1m1 0h1m21 0h1m7 0h1m3 0h2m4 0h1m7 0h1m9 0h2m1 0h1m3 0h1m1 0h1m1 0h2m2 0h2M0 12.5h1m3 0h2m6 0h1m3 0h1m2 0h1m2 0h1m2 0h2m3 0h1m1 0h2m4 0h1m1 0h3m1 0h1m8 0h2m5 0h1m5 0h1m2 0h1m6 0h1m13 0h1M3 13.5h4m1 0h1m3 0h1m13 0h1m10 0h1m11 0h2m3 0h2m7 0h2m4 0h2m7 0h1m1 0h1m3 0h1M2 14.5h1m2 0h1m3 0h3m4 0h1m4 0h1m1 0h1m16 0h1m5 0h1m3 0h1m17 0h1m2 0h2m1 0h1M4 15.5h1m3 0h1m4 0h1m7 0h1m5 0h3m3 0h1m2 0h2m5 0h1m3 0h1m1 0h1m6 0h2m13 0h1m1 0h2m3 0h1m4 0h1M4 16.5h1m19 0h1m3 0h1m2 0h1m8 0h1m1 0h1m6 0h1m3 0h1m5 0h1m7 0h1M2 17.5h2m37 0h1m8 0h1m7 0h1m15 0h1m4 0h1m2 0h1M9 18.5h1m1 0h1m6 0h1m1 0h1m12 0h1m8 0h1m20 0h1m1 0h1m4 0h3m2 0h1m1 0h1m9 0h1m1 0h1M34 19.5h1m7 0h1m9 0h1m3 0h1m8 0h1m5 0h1m3 0h1M29 22.5h1m28 0h1m12 0h1m12 0h1m5 0h1M0 23.5h1m18 0h1m37 0h1m7 0h1M10 24.5h1m3 0h1m13 0h1m29 0h1m5 0h1M28 25.5h1m35 0h1M32 26.5h1m15 0h1m7 0h1m13 0h1m15 0h1M3 27.5h1m22 0h1m21 0h1m23 0h3m7 0h2M27 28.5h1M9 29.5h1m1 0h1m14 0h1m19 0h1m18 0h1m14 0h1M12 30.5h1m11 0h1m11 0h1m7 0h1m13 0h1m1 0h1m8 0h1M5 31.5h1m26 0h1m8 0h1m27 0h1m14 0h1M15 32.5h1m2 0h1m26 0h1m1 0h2m12 0h1m7 0h1m5 0h1M26 35.5h1m9 0h1m8 0h1m20 0h1M39 36.5h1m6 0h1m8 0h2m2 0h1m9 0h1m9 0h1m10 0h1M26 37.5h1m23 0h1m9 0h1m1 0h1m20 0h1m4 0h1M11 38.5h1m2 0h1m6 0h1m17 0h1m5 0h1m5 0h1m10 0h1m3 0h1M23 39.5h1m20 0h2m3 0h1m9 0h1m2 0h1m21 0h1M0 40.5h1m25 0h1m21 0h1m8 0h1m2 0h1m21 0h2M1 41.5h1m24 0h1m8 0h2m2 0h1m11 0h1m9 0h1m3 0h2m14 0h1M3 42.5h1m9 0h1m4 0h1m6 0h2m26 0h1m5 0h1m1 0h1m25 0h1M21 43.5h1m31 0h1m1 0h1m4 0h2M25 44.5h1m53 0h1M6 45.5h1m1 0h1m16 0h1m3 0h1m2 0h1m38 0h1m12 0h1m4 0h1M27 46.5h1m20 0h1m23 0h1m11 0h1M0 47.5h1m16 0h1m47 0h1M9 48.5h1m3 0h1m11 0h1m5 0h1m27 0h1m6 0h1m6 0h1m14 0h1M4 49.5h1m12 0h1m8 0h1m13 0h1m18 0h1m4 0h1M13 50.5h1m3 0h1m7 0h1m2 0h1m14 0h1m2 0h1m9 0h1m2 0h2m1 0h1M40 51.5h1m9 0h1m12 0h2m3 0h2m17 0h1M0 52.5h1m28 0h1m1 0h1m4 0h1m12 0h2M4 53.5h1m7 0h1m10 0h1m7 0h1m3 0h1m4 0h2m3 0h1m23 0h1M7 54.5h1m10 0h1m1 0h1m12 0h1m12 0h1m3 0h1m8 0h1m4 0h1m10 0h1m6 0h2M10 55.5h1m9 0h1m8 0h1m17 0h1m5 0h1m19 0h1m3 0h1M21 56.5h1m10 0h1m6 0h2m22 0h1m21 0h1m3 0h1M4 57.5h1m30 0h1m38 0h1m6 0h1m4 0h1M4 58.5h1m13 0h1m11 0h2m5 0h1m21 0h1m1 0h1m15 0h1m11 0h1M17 59.5h1m8 0h1m14 0h1m26 0h1m10 0h2M1 60.5h1m53 0h1M4 62.5h1m28 0h1M13 63.5h1m31 0h1m3 0h1m2 0h5m9 0h1m1 0h1m15 0h1m1 0h3m1 0h1M1 64.5h2m7 0h1m22 0h1m6 0h1m36 0h1M78 65.5h1M18 66.5h1m7 0h1m57 0h1M1 69.5h1m10 0h1m1 0h1m10 0h1m6 0h2m6 0h1m7 0h3m39 0h1M62 70.5h1m6 0h1M10 71.5h1m15 0h1m42 0h1m11 0h1m6 0h1M85 72.5h1M4 74.5h1m19 0h1m1 0h1m35 0h1m18 0h3M30 75.5h2m1 0h1m28 0h1m11 0h1M0 76.5h1m1 0h1m7 0h1m51 0h1m2 0h1m6 0h1M85 77.5h1M60 78.5h1M17 79.5h1m29 0h1m26 0h1M23 96.5h1M2 97.5h1m74 0h1m6 0h1M41 98.5h1m19 0h2m16 0h1M48 99.5h1m3 0h1m28 0h1m1 0h1"/>
<path stroke="#d74c3f" d="M9 6.5h1m42 0h1m13 0h1M21 8.5h1m17 0h1m5 0h1m21 0h1m18 0h1M9 9.5h1m6 0h1m5 0h1m14 0h1m7 0h1m20 0h1m1 0h1M9 10.5h1m35 0h1m20 0h1m6 0h1m2 0h1M1 11.5h2m2 0h1m4 0h1m7 0h2m1 0h1m11 0h2m44 0h1M1 12.5h3m10 0h1m9 0h1m9 0h2m1 0h1m13 0h1m3 0h1m7 0h1m7 0h1m1 0h2m2 0h2m8 0h1M0 13.5h1m1 0h1m7 0h2m2 0h3m10 0h4m12 0h1m16 0h1m4 0h1m2 0h1m5 0h1m2 0h1m7 0h1m1 0h1M0 14.5h1m2 0h2m1 0h1m5 0h2m4 0h2m2 0h1m9 0h1m2 0h3m13 0h2m1 0h2m4 0h1m4 0h1m1 0h1m5 0h1m6 0h1M2 15.5h1m3 0h1m2 0h1m5 0h1m14 0h1m8 0h1m6 0h1m1 0h1m1 0h1m14 0h1m1 0h1m7 0h1m1 0h1m1 0h2M10 16.5h1m10 0h1m3 0h1m1 0h1m5 0h1m1 0h1m7 0h1m10 0h1m1 0h1m9 0h1m4 0h1m1 0h1m3 0h1m5 0h1m3 0h1m1 0h2M19 17.5h2m1 0h1m1 0h1m1 0h3m2 0h1m4 0h1m1 0h1m3 0h2m2 0h3m7 0h1m15 0h1m10 0h1m6 0h1M3 18.5h1m17 0h1m2 0h2m6 0h1m8 0h1m5 0h2m1 0h1m2 0h1m4 0h2m2 0h1m1 0h1m4 0h1m4 0h1m11 0h1m1 0h1M1 19.5h1m2 0h1m52 0h1m4 0h1m4 0h1m1 0h1m10 0h1m4 0h4M28 20.5h1m5 0h1m54 0h2M43 21.5h1m35 0h1M5 22.5h1m11 0h1m13 0h1m3 0h1m20 0h1m3 0h1m18 0h1m5 0h2M4 23.5h1m8 0h2m45 0h1m11 0h2M18 24.5h1m4 0h1m10 0h1m24 0h1m5 0h2m4 0h1m2 0h1m12 0h1m2 0h1M4 25.5h1m2 0h2m1 0h1m29 0h2m1 0h1m4 0h2m9 0h1m7 0h1M1 26.5h1m21 0h1m3 0h1m41 0h1m1 0h1m9 0h1m5 0h1M4 27.5h1m3 0h2m9 0h1m3 0h1m56 0h1m4 0h2M1 28.5h1m6 0h1m2 0h1m7 0h1m1 0h1m7 0h3m5 0h1m11 0h1m12 0h1m5 0h1m3 0h2m3 0h1M3 29.5h2m10 0h1m8 0h2m5 0h1m3 0h2m10 0h2m2 0h1m5 0h2m23 0h1M11 30.5h1m7 0h1m3 0h1m1 0h2m11 0h1m4 0h1m1 0h1m3 0h1m7 0h1m4 0h2m17 0h1m5 0h1M56 31.5h1m5 0h1m20 0h1m4 0h1M7 32.5h1m34 0h2m12 0h1m2 0h1m11 0h1m4 0h1m8 0h1M10 34.5h1m7 0h2m64 0h1M14 35.5h2m14 0h1m6 0h3m8 0h1m14 0h1m16 0h1M30 36.5h2m2 0h1m10 0h1m7 0h1m6 0h1m16 0h1m2 0h1M1 37.5h1m7 0h1m10 0h2m1 0h1m3 0h1m10 0h1m27 0h1m4 0h3m2 0h1m10 0h1M13 38.5h1m2 0h2m4 0h1m2 0h1m12 0h1m1 0h1m8 0h1m3 0h1m11 0h1m8 0h1m4 0h1m3 0h1m1 0h2M13 39.5h1m1 0h1m1 0h3m2 0h1m5 0h1m6 0h1m12 0h1m5 0h1m25 0h1m8 0h1M4 40.5h1m4 0h1m2 0h1m3 0h1m3 0h1m23 0h2m8 0h1m14 0h2M3 41.5h1m29 0h1m3 0h1m3 0h1m7 0h1m4 0h1m1 0h2m11 0h1m12 0h1M0 42.5h2m5 0h1m9 0h1m4 0h1m4 0h2m1 0h1m26 0h1m5 0h1m13 0h2m1 0h1m7 0h2M6 43.5h1m19 0h1m32 0h1m23 0h1m1 0h1M6 44.5h2m28 0h2m16 0h1M12 45.5h1m17 0h1m2 0h1m9 0h3m4 0h1m5 0h2m6 0h1m4 0h1m15 0h1m4 0h1M0 46.5h1m1 0h1m12 0h1m1 0h1m2 0h1m8 0h1m5 0h1m7 0h1m5 0h1m19 0h1m11 0h1m5 0h1M26 47.5h1m10 0h2m20 0h1m27 0h2M6 48.5h1m1 0h1m1 0h1m6 0h1m1 0h1m1 0h1m5 0h1m4 0h1m7 0h1m7 0h1m12 0h1m12 0h1m5 0h1M7 49.5h1m13 0h1m1 0h1m7 0h1m1 0h1m2 0h1m13 0h1m1 0h1m9 0h2m1 0h1m8 0h1m9 0h1M18 50.5h1m4 0h2m2 0h1m1 0h2m1 0h1m33 0h1m6 0h1m2 0h2m10 0h1M0 51.5h1m7 0h1m1 0h1m9 0h1m15 0h2m1 0h1m2 0h2m4 0h1m2 0h1m3 0h1m1 0h1m4 0h1m9 0h1m1 0h1m6 0h1m3 0h2m1 0h1M4 52.5h2m5 0h1m5 0h1m3 0h1m12 0h1m8 0h1m3 0h2m10 0h1m9 0h1m4 0h1m4 0h1M5 53.5h1m2 0h1m16 0h2m12 0h1m2 0h2m6 0h1m11 0h1m5 0h1m5 0h1m2 0h1m11 0h1M16 54.5h1m4 0h1m10 0h1m3 0h1m3 0h1m8 0h1m1 0h1m6 0h1m7 0h1m4 0h2m4 0h1m6 0h1m4 0h2M11 55.5h1m1 0h2m3 0h2m8 0h1m1 0h1m29 0h2m8 0h1m18 0h1M12 56.5h1m3 0h1m5 0h1m2 0h1m2 0h2m6 0h1m4 0h1m4 0h1m2 0h1m1 0h1m12 0h1m8 0h1m3 0h2m5 0h1M1 57.5h1m15 0h1m40 0h2m2 0h1m7 0h1m4 0h1m9 0h1M3 58.5h1m7 0h1m8 0h1m7 0h1m24 0h1m3 0h2m3 0h1m8 0h1m9 0h1m1 0h1m6 0h1M9 59.5h2m14 0h1m2 0h1m2 0h1m1 0h1m4 0h1m1 0h1m5 0h6m6 0h1m8 0h1m6 0h1m7 0h1M10 60.5h1m7 0h1m20 0h1m5 0h1M0 61.5h1m48 0h1M0 62.5h1m20 0h1m44 0h1M38 63.5h1m4 0h1m2 0h1m1 0h1m23 0h2m6 0h1m1 0h1M6 64.5h1m49 0h1m15 0h1m13 0h2M14 65.5h1m30 0h1m4 0h1m24 0h1M9 66.5h1m5 0h1m15 0h1m7 0h1m6 0h1m38 0h1M2 69.5h1m4 0h1m7 0h2m11 0h1m13 0h1m10 0h1m8 0h1m13 0h1m8 0h1M0 70.5h1m18 0h1m4 0h1m1 0h2m16 0h1m13 0h1m1 0h1m10 0h1m1 0h1m6 0h1m6 0h1m1 0h1M18 71.5h1m17 0h1M45 72.5h1m1 0h1m11 0h1m3 0h1m18 0h1M2 73.5h1m3 0h1m12 0h1m12 0h1m15 0h1m6 0h1m34 0h1M0 74.5h1m21 0h1m27 0h1m15 0h1M1 75.5h1m36 0h1m12 0h2m5 0h1m22 0h1M13 76.5h1m3 0h1m18 0h1m32 0h1m4 0h2M12 77.5h1m13 0h1m36 0h1m3 0h2m9 0h1M4 78.5h1m2 0h2m32 0h2m5 0h1m17 0h1M50 79.5h1m10 0h1m4 0h1m4 0h1m12 0h1m3 0h1M20 82.5h1m36 0h2M50 84.5h1M57 96.5h2m3 0h1m4 0h1M3 97.5h1m2 0h1m52 0h1m12 0h1M12 98.5h1m15 0h1m7 0h1m23 0h1M9 99.5h1m15 0h1m3 0h1m2 0h1m23 0h1m15 0h1m1 0h1m9 0h1"/>
<path stroke="#e05636" d="M9 8.5h1M23 9.5h1m15 0h1m36 0h1M39 10.5h1m27 0h1M22 11.5h2m42 0h1m6 0h1M15 12.5h1m7 0h1m15 0h1m3 0h1m26 0h1m8 0h1M1 13.5h1m33 0h1m9 0h1m5 0h1m1 0h1m7 0h1m11 0h1m1 0h2M14 14.5h2m17 0h2m6 0h5m7 0h1m15 0h2m4 0h1m1 0h2m7 0h1M5 15.5h1m10 0h1m18 0h1m8 0h1m6 0h5m7 0h2m1 0h1m2 0h2m5 0h1M3 16.5h1m3 0h1m3 0h1m3 0h1m2 0h1m7 0h1m9 0h2m7 0h2m1 0h1m1 0h1m1 0h1m2 0h1m2 0h1m1 0h2m1 0h1m1 0h1m2 0h2m4 0h1m9 0h1m3 0h1M0 17.5h1m3 0h1m2 0h1m3 0h1m2 0h1m2 0h1m3 0h1m3 0h1m8 0h1m5 0h1m10 0h3m3 0h1m1 0h1m15 0h3m3 0h1m7 0h1M0 18.5h1m5 0h1m5 0h2m2 0h1m2 0h1m8 0h1m2 0h1m3 0h2m7 0h3m2 0h1m4 0h1m5 0h1m5 0h1m1 0h1m4 0h1m2 0h1m5 0h2M5 19.5h1m1 0h1m5 0h3m2 0h1m1 0h1m4 0h1m2 0h3m5 0h1m12 0h1m1 0h1m14 0h1m3 0h1m3 0h1m4 0h1m1 0h1m1 0h2M27 20.5h1m36 0h1m2 0h1M12 21.5h2m24 0h1m3 0h1M1 22.5h2m19 0h2m1 0h1m1 0h1m31 0h1m4 0h2m7 0h1m3 0h1m10 0h1M20 23.5h1m2 0h1m2 0h1m1 0h1m1 0h2m1 0h1m1 0h1m3 0h1m6 0h2m4 0h2m4 0h2m15 0h1m12 0h1M13 24.5h1m3 0h1m7 0h1m6 0h1m8 0h1m1 0h1m1 0h1m9 0h3m5 0h1m5 0h1m3 0h1m4 0h1m2 0h1m4 0h1m2 0h1M0 25.5h2m9 0h1m20 0h1m2 0h2m1 0h1m12 0h1m3 0h1m12 0h1m7 0h1m2 0h1m2 0h1m1 0h1m1 0h1M2 26.5h1m12 0h3m4 0h1m10 0h2m1 0h2m2 0h1m6 0h1m1 0h1m27 0h2m5 0h2m2 0h1M10 27.5h1m7 0h1m6 0h1m1 0h2m7 0h1m5 0h1m6 0h1m6 0h3m9 0h1m9 0h2m4 0h1m2 0h2M3 28.5h2m12 0h1m2 0h1m2 0h1m2 0h1m11 0h1m5 0h1m6 0h1m1 0h4m6 0h2m9 0h1m6 0h1m5 0h1m1 0h1M0 29.5h1m15 0h1m2 0h2m6 0h3m15 0h1m3 0h1m2 0h1m1 0h1m13 0h2m2 0h2m2 0h1m1 0h1m6 0h5M13 30.5h1m15 0h1m10 0h2m8 0h1m5 0h1m4 0h1m18 0h1m9 0h1M4 31.5h1m5 0h1m5 0h1m2 0h2m10 0h1m12 0h1m1 0h1m1 0h2m4 0h1m6 0h1m3 0h1m4 0h1m3 0h1m6 0h1m8 0h1M4 32.5h1m4 0h2m2 0h1m8 0h1m8 0h1m1 0h1m4 0h2m6 0h1m11 0h1m6 0h1m8 0h1m5 0h1m6 0h1m2 0h1M11 33.5h2M55 34.5h1m15 0h1m10 0h1M5 35.5h1m1 0h1m2 0h1m9 0h2m6 0h1m2 0h2m1 0h1m6 0h1m11 0h3m5 0h1m3 0h1m1 0h1m4 0h2m5 0h1m6 0h1M3 36.5h5m3 0h1m2 0h1m2 0h1m2 0h3m6 0h1m5 0h1m11 0h1m2 0h1m1 0h1m1 0h1m2 0h2m5 0h1m5 0h3m5 0h1m2 0h1m5 0h1M10 37.5h1m6 0h1m4 0h1m7 0h1m1 0h2m5 0h2m5 0h1m1 0h1m4 0h1m10 0h1m9 0h2m5 0h1m2 0h2m3 0h1M4 38.5h1m18 0h1m8 0h1m4 0h1m3 0h1m1 0h1m11 0h1m3 0h1m3 0h2m3 0h3m1 0h2m3 0h2m1 0h1m3 0h1M5 39.5h1m6 0h1m1 0h1m17 0h2m4 0h1m1 0h3m3 0h1m6 0h1m4 0h1m12 0h1m3 0h1m11 0h1M5 40.5h1m9 0h1m1 0h3m7 0h1m5 0h1m2 0h1m3 0h1m15 0h1m6 0h2m3 0h1m5 0h1m2 0h5m8 0h1M2 41.5h1m1 0h2m5 0h2m2 0h3m2 0h1m2 0h3m2 0h1m1 0h1m3 0h1m5 0h1m17 0h1m3 0h1m22 0h1m4 0h1M5 42.5h2m1 0h1m5 0h1m4 0h1m1 0h1m10 0h1m2 0h1m1 0h1m5 0h1m1 0h1m3 0h3m8 0h1m3 0h1m2 0h1m7 0h2m2 0h1m3 0h4m3 0h1M11 43.5h1m8 0h1m3 0h1m2 0h1m36 0h1m5 0h1m11 0h1M3 44.5h1m1 0h1m11 0h1m13 0h1m30 0h1m11 0h4m7 0h1M7 45.5h1m1 0h1m1 0h1m1 0h2m2 0h1m2 0h1m5 0h1m8 0h1m16 0h1m5 0h1m4 0h1m4 0h1m1 0h1M1 46.5h1m8 0h1m8 0h1m2 0h2m2 0h1m9 0h1m4 0h1m2 0h1m12 0h1m1 0h1m1 0h2m5 0h1m5 0h1m2 0h1m4 0h2m5 0h1M1 47.5h1m4 0h1m12 0h1m16 0h1m2 0h3m4 0h1m7 0h1m5 0h1m1 0h1m9 0h1m10 0h1m5 0h1M3 48.5h1m3 0h1m7 0h2m3 0h1m1 0h3m5 0h1m5 0h2m6 0h2m1 0h1m2 0h2m4 0h1m1 0h1m1 0h1m7 0h3m1 0h1m8 0h1m3 0h1M6 49.5h1m7 0h1m5 0h1m4 0h1m3 0h1m9 0h1m3 0h2m4 0h1m4 0h2m1 0h1m2 0h2m4 0h1m2 0h1m1 0h1m3 0h1m2 0h1m1 0h1m2 0h1M1 50.5h1m1 0h1m2 0h1m1 0h2m9 0h2m1 0h1m10 0h1m5 0h1m1 0h1m3 0h1m5 0h1m2 0h1m3 0h1m2 0h1m2 0h1m3 0h1m2 0h1m2 0h2m3 0h1m4 0h4M5 51.5h1m1 0h1m1 0h1m1 0h1m3 0h1m11 0h1m1 0h1m1 0h1m6 0h1m5 0h1m11 0h1m3 0h1m5 0h2m5 0h1m3 0h3m9 0h2M2 52.5h2m4 0h2m3 0h2m10 0h1m6 0h2m1 0h1m8 0h1m1 0h1m10 0h2m13 0h2m4 0h1m6 0h1m1 0h4M1 53.5h2m3 0h2m7 0h1m5 0h1m7 0h2m7 0h1m9 0h2m1 0h1m3 0h3m7 0h3m5 0h1m1 0h1m2 0h2m2 0h1m4 0h1M8 54.5h2m2 0h1m2 0h1m3 0h1m3 0h2m2 0h1m1 0h1m1 0h1m5 0h1m3 0h3m4 0h1m13 0h1m6 0h2m5 0h1m1 0h1m1 0h1m4 0h1m2 0h1M0 55.5h1m2 0h1m8 0h1m2 0h1m5 0h1m5 0h1m4 0h1m5 0h2m1 0h1m1 0h1m1 0h1m2 0h2m1 0h1m5 0h1m4 0h1m6 0h1m4 0h2m3 0h1m8 0h1M6 56.5h1m3 0h2m3 0h1m1 0h1m1 0h2m5 0h1m3 0h1m2 0h3m6 0h1m14 0h2m3 0h1m12 0h2m3 0h1m2 0h1M0 57.5h1m2 0h1m11 0h1m6 0h1m8 0h1m1 0h2m1 0h1m1 0h1m2 0h2m4 0h1m3 0h1m5 0h1m14 0h1m4 0h1m1 0h2m7 0h1M12 58.5h1m4 0h1m1 0h1m2 0h2m2 0h2m5 0h2m11 0h2m1 0h1m4 0h1m12 0h1m6 0h1m5 0h1m4 0h1m2 0h1M0 59.5h1m2 0h2m1 0h1m9 0h1m1 0h2m7 0h1m1 0h2m1 0h1m2 0h2m8 0h1m17 0h1m5 0h1m2 0h2m1 0h1m5 0h1m1 0h1m3 0h1m2 0h1M14 60.5h2m24 0h1m24 0h1m8 0h2m3 0h1m1 0h1M12 62.5h1m5 0h1m24 0h2m3 0h1m29 0h1m9 0h1M4 63.5h3m3 0h1m13 0h1m7 0h2m10 0h1m22 0h1M5 64.5h1m2 0h1m11 0h1m7 0h1m5 0h1m13 0h1m6 0h1m1 0h1m9 0h2m5 0h1m10 0h1m4 0h1M3 65.5h1m7 0h1m1 0h1m1 0h1m2 0h1m6 0h1m13 0h1m9 0h1m1 0h1m4 0h1m4 0h1m14 0h1m9 0h1m2 0h1M7 66.5h1m8 0h2m6 0h1m10 0h1m2 0h1m3 0h2m15 0h1m2 0h1m16 0h3m1 0h1M25 67.5h1m45 0h1M0 69.5h1m17 0h1m3 0h2m7 0h1m2 0h1m9 0h1m1 0h2m6 0h1m3 0h1m2 0h1m16 0h1m4 0h1m5 0h1M1 70.5h1m5 0h5m1 0h1m1 0h2m15 0h2m6 0h1m8 0h3m1 0h2m1 0h2m1 0h1m1 0h1m1 0h1m11 0h1m3 0h1m1 0h1m4 0h1m1 0h1m1 0h1M17 71.5h1m1 0h2m4 0h1m2 0h1m6 0h1m1 0h1m4 0h2m1 0h1m1 0h1m4 0h1m4 0h3m1 0h2m5 0h1m10 0h2M0 72.5h1m15 0h1m5 0h2m3 0h1m4 0h1m1 0h3m3 0h3m3 0h1m1 0h1m1 0h1m5 0h1m3 0h3m2 0h1m5 0h1m8 0h2m8 0h1M33 73.5h1m20 0h1m1 0h2m1 0h2m11 0h2M2 74.5h2m5 0h2m3 0h1m12 0h1m2 0h1m6 0h1m7 0h1m10 0h1m2 0h1m5 0h1m13 0h1m5 0h1m3 0h1M0 75.5h1m1 0h1m4 0h2m6 0h1m10 0h1m20 0h1m1 0h1m21 0h1m3 0h1M3 76.5h1m5 0h1m1 0h1m8 0h1m27 0h2m3 0h1m9 0h1m6 0h1m11 0h1m2 0h1m2 0h2M4 77.5h1m33 0h1m12 0h1m6 0h1m3 0h1m6 0h2m15 0h1M25 78.5h1m10 0h1m1 0h1m10 0h2m10 0h1m22 0h1M15 79.5h1m12 0h1m31 0h1m1 0h1m1 0h1m3 0h1m1 0h1m6 0h1m2 0h1m8 0h1M3 80.5h1m3 0h1m30 0h1m5 0h1m1 0h1M3 82.5h1m32 0h1m25 0h1M36 83.5h1m5 0h1M13 84.5h1m9 0h2m23 0h1m21 0h1M19 85.5h1m30 0h1m26 0h1M5 87.5h1m21 0h1m21 0h1m23 0h1M88 90.5h1M30 95.5h1m17 0h1m19 0h2M3 96.5h2m17 0h1m11 0h1m28 0h3m2 0h1m8 0h1M12 97.5h1m24 0h1M1 98.5h1m6 0h2m3 0h2m12 0h1m4 0h1m23 0h1m2 0h1m11 0h1m4 0h2m2 0h1M12 99.5h1m4 0h1m2 0h1m2 0h1m2 0h2m3 0h1m7 0h2m2 0h1m2 0h2m2 0h1m11 0h1m1 0h1m12 0h1m7 0h1m3 0h2"/>
<path stroke="#e7622c" d="M67 9.5h1M9 11.5h1M86 12.5h1M34 13.5h1m9 0h1m7 0h1m14 0h1M76 14.5h1m2 0h1M45 15.5h1M8 16.5h1m8 0h1m1 0h2m26 0h1m3 0h1m5 0h1m6 0h1m5 0h1m4 0h2M5 17.5h2m2 0h2m4 0h2m1 0h1m10 0h2m1 0h2m1 0h1m3 0h1m4 0h2m9 0h1m4 0h1m4 0h1m1 0h3m10 0h1m5 0h3M4 18.5h1m9 0h2m6 0h2m5 0h2m3 0h1m2 0h3m21 0h1m5 0h1m11 0h1m1 0h1M2 19.5h2m6 0h3m6 0h1m1 0h1m2 0h1m6 0h1m1 0h1m3 0h3m1 0h1m1 0h3m2 0h1m4 0h3m2 0h1m2 0h1m1 0h2m7 0h1m9 0h1m6 0h1M4 20.5h1m17 0h1m2 0h1m7 0h1m1 0h1m38 0h2m1 0h1m10 0h1M4 21.5h2m15 0h1m6 0h1m12 0h1m4 0h1m23 0h2m5 0h2m4 0h1m4 0h1m1 0h1M0 22.5h1m3 0h1m2 0h4m1 0h2m2 0h1m1 0h1m5 0h1m1 0h1m9 0h1m1 0h3m2 0h2m3 0h2m1 0h3m7 0h1m1 0h1m3 0h2m1 0h1m4 0h2m1 0h1m1 0h1m6 0h1m1 0h1M1 23.5h1m1 0h1m3 0h1m4 0h1m2 0h2m10 0h1m1 0h1m6 0h1m1 0h1m6 0h1m3 0h2m3 0h3m4 0h4m4 0h1m1 0h1m2 0h1m1 0h1m6 0h1m2 0h2M0 24.5h1m5 0h1m4 0h1m3 0h2m2 0h1m7 0h1m5 0h1m2 0h1m7 0h1m1 0h1m2 0h2m9 0h1m11 0h1m2 0h1m3 0h2m1 0h3m3 0h1M2 25.5h1m2 0h1m3 0h1m2 0h3m4 0h3m4 0h1m4 0h1m1 0h2m11 0h2m2 0h1m19 0h2m9 0h1m1 0h1m3 0h4M0 26.5h1m3 0h1m1 0h1m5 0h1m5 0h2m4 0h1m1 0h1m4 0h1m6 0h1m16 0h1m1 0h3m1 0h1m2 0h1m1 0h1m6 0h2m4 0h2m1 0h2m5 0h2M1 27.5h1m5 0h1m3 0h1m5 0h1m2 0h1m3 0h1m4 0h1m10 0h1m2 0h1m2 0h1m3 0h3m14 0h1m1 0h1m5 0h2M0 28.5h1m6 0h1m1 0h1m2 0h1m19 0h3m13 0h1m1 0h1m6 0h3m1 0h1m13 0h2m3 0h1m1 0h4m2 0h1M8 29.5h1m3 0h1m5 0h1m4 0h1m8 0h1m1 0h1m2 0h1m2 0h1m1 0h1m7 0h1m4 0h1m10 0h2m2 0h2m2 0h2m1 0h1m5 0h2m5 0h1M5 30.5h1m1 0h4m3 0h1m1 0h1m3 0h2m8 0h1m2 0h2m7 0h1m3 0h1m1 0h1m16 0h1m4 0h1m1 0h1m1 0h1m2 0h3m2 0h1m1 0h3M2 31.5h2m2 0h1m2 0h1m1 0h1m3 0h1m6 0h2m2 0h2m2 0h1m2 0h1m3 0h2m1 0h1m9 0h1m1 0h1m4 0h1m1 0h2m2 0h2m3 0h1m2 0h1m6 0h1m3 0h1m2 0h1m1 0h1M0 32.5h1m7 0h1m2 0h1m2 0h1m4 0h2m5 0h1m3 0h1m3 0h2m1 0h1m16 0h2m1 0h1m4 0h1m10 0h1m7 0h1m1 0h2m4 0h1M41 33.5h1m27 0h2m5 0h1M4 34.5h1m2 0h1m12 0h2m18 0h1m13 0h1m15 0h1m12 0h1m6 0h1M2 35.5h1m1 0h1m1 0h1m1 0h1m2 0h2m5 0h1m6 0h1m3 0h1m12 0h1m1 0h1m4 0h1m1 0h2m3 0h1m2 0h1m4 0h1m3 0h2m4 0h1m1 0h1m1 0h1m2 0h3m3 0h4M10 36.5h1m13 0h3m1 0h1m3 0h1m3 0h1m3 0h2m7 0h1m15 0h2m6 0h1m8 0h3M0 37.5h1m2 0h1m3 0h2m3 0h1m3 0h1m7 0h2m2 0h2m1 0h1m4 0h2m4 0h1m4 0h1m3 0h1m4 0h2m1 0h1m8 0h1m8 0h1m2 0h1m9 0h1M2 38.5h2m4 0h2m5 0h1m3 0h1m4 0h1m4 0h1m3 0h2m7 0h1m4 0h1m2 0h1m1 0h1m3 0h3m2 0h1m5 0h1m3 0h1M4 39.5h1m5 0h1m5 0h1m4 0h1m2 0h1m2 0h1m2 0h1m16 0h1m2 0h2m3 0h3m3 0h1m6 0h1m1 0h1m5 0h1m2 0h1m1 0h1m4 0h1m3 0h1M6 40.5h3m1 0h1m2 0h2m6 0h1m1 0h1m1 0h1m2 0h1m2 0h2m2 0h1m1 0h3m1 0h3m3 0h1m2 0h1m4 0h1m5 0h2m2 0h2m4 0h3m1 0h1M6 41.5h1m3 0h1m7 0h2m9 0h1m1 0h2m9 0h1m1 0h2m1 0h2m6 0h1m3 0h2m2 0h2m6 0h5m1 0h1m1 0h2m7 0h2M4 42.5h1m6 0h1m3 0h2m3 0h1m10 0h1m2 0h1m1 0h1m1 0h1m1 0h3m1 0h1m1 0h1m5 0h1m2 0h1m10 0h1m1 0h2m2 0h1m1 0h1M5 43.5h1m1 0h1m27 0h1m5 0h1m1 0h1m1 0h1m1 0h1m20 0h2m1 0h1m2 0h1m2 0h1m1 0h1m6 0h4M10 44.5h2m6 0h1m19 0h1m5 0h1m4 0h2m6 0h1m12 0h2m6 0h1m1 0h2m7 0h1M0 45.5h5m5 0h1m10 0h1m2 0h1m2 0h2m2 0h1m6 0h1m2 0h2m3 0h1m1 0h2m1 0h1m1 0h1m1 0h1m3 0h1m2 0h1m11 0h1m4 0h1m1 0h3m4 0h1M3 46.5h1m1 0h1m3 0h1m1 0h1m2 0h1m3 0h1m5 0h1m5 0h1m1 0h1m1 0h1m15 0h1m1 0h2m2 0h1m1 0h1m1 0h1m3 0h2m4 0h2m4 0h1m3 0h1m4 0h1M4 47.5h1m5 0h1m4 0h2m4 0h1m2 0h2m2 0h1m2 0h2m1 0h2m6 0h1m1 0h1m8 0h1m7 0h1m2 0h1m10 0h1m1 0h1m3 0h2m1 0h2M4 48.5h1m6 0h2m1 0h1m13 0h2m3 0h1m4 0h1m3 0h1m3 0h1m2 0h1m2 0h3m2 0h1m17 0h1m1 0h2m3 0h1m1 0h1m1 0h1M1 49.5h1m1 0h1m6 0h1m2 0h1m2 0h1m1 0h1m8 0h2m3 0h1m4 0h2m2 0h2m3 0h3m2 0h1m1 0h1m2 0h1m11 0h1m3 0h2m2 0h2m1 0h1m1 0h2m2 0h5M0 50.5h1m1 0h1m1 0h2m8 0h2m5 0h1m14 0h1m3 0h1m3 0h1m7 0h1m4 0h1m7 0h1m1 0h1m1 0h2m7 0h1m11 0h1M1 51.5h1m1 0h2m1 0h1m14 0h3m1 0h1m2 0h1m1 0h1m2 0h1m11 0h1m15 0h1m3 0h1m14 0h1M1 52.5h1m4 0h1m11 0h1m1 0h1m5 0h3m8 0h6m8 0h1m4 0h1m4 0h1m2 0h1m5 0h2m3 0h1m1 0h1m4 0h1m1 0h1M0 53.5h1m9 0h1m3 0h1m5 0h1m1 0h1m9 0h1m13 0h2m4 0h3m3 0h1m2 0h1m9 0h1m4 0h1m4 0h1m1 0h3m2 0h1M1 54.5h3m1 0h1m7 0h2m7 0h1m2 0h2m3 0h1m7 0h2m7 0h1m4 0h3m2 0h1m2 0h2m1 0h1m3 0h2m10 0h1m6 0h2M4 55.5h2m10 0h2m4 0h1m8 0h1m1 0h1m3 0h1m8 0h1m3 0h1m7 0h2m8 0h1m7 0h1m5 0h2m2 0h1m3 0h1M3 56.5h3m3 0h1m4 0h1m3 0h1m4 0h2m27 0h2m2 0h1m2 0h1m1 0h1m3 0h1m3 0h1m4 0h1m4 0h1m8 0h1m1 0h1M2 57.5h1m2 0h1m2 0h2m4 0h1m1 0h1m1 0h1m6 0h1m4 0h1m9 0h1m3 0h1m9 0h1m1 0h1m3 0h2m1 0h1m1 0h1m10 0h1m1 0h1m8 0h1m1 0h1M5 58.5h1m3 0h2m4 0h2m4 0h1m2 0h1m7 0h1m11 0h2m2 0h1m6 0h1m12 0h2m5 0h2m1 0h1m3 0h1m4 0h1M14 59.5h2m5 0h1m2 0h1m9 0h1m2 0h1m4 0h1m10 0h1m5 0h2m1 0h1m1 0h1m5 0h2m4 0h1m1 0h1m5 0h3M7 60.5h1m11 0h1m16 0h1m1 0h1m5 0h1m3 0h1m1 0h1m5 0h1m3 0h1m24 0h1M1 61.5h1m10 0h1m4 0h1m10 0h1m8 0h1m3 0h1m6 0h1m16 0h1M17 62.5h1m4 0h1m4 0h1m2 0h1m10 0h1m3 0h1m1 0h1m16 0h1m17 0h1M1 63.5h1m5 0h1m7 0h1m1 0h2m2 0h1m3 0h2m4 0h1m7 0h2m9 0h2m5 0h1m4 0h1m6 0h1m7 0h1m3 0h1m3 0h1M0 64.5h1m3 0h1m6 0h1m3 0h1m2 0h1m7 0h2m1 0h1m6 0h2m8 0h1m4 0h1m9 0h1m1 0h1m2 0h1m6 0h1m4 0h1m5 0h1m3 0h1M1 65.5h1m2 0h2m13 0h1m3 0h2m1 0h3m11 0h1m2 0h2m3 0h1m3 0h2m1 0h1m1 0h1m5 0h1m5 0h6m2 0h1m5 0h1m6 0h1M3 66.5h1m6 0h3m1 0h1m5 0h1m4 0h1m7 0h1m10 0h2m10 0h2m2 0h1m2 0h1m13 0h1m4 0h1m7 0h1M39 67.5h1m13 0h2M5 69.5h2m1 0h4m5 0h1m6 0h1m4 0h1m5 0h4m4 0h1m1 0h1m6 0h1m4 0h1m1 0h2m2 0h1m2 0h1m2 0h1m10 0h3m1 0h1m3 0h1M3 70.5h1m2 0h1m7 0h1m2 0h2m12 0h1m2 0h1m1 0h1m1 0h2m3 0h1m2 0h1m1 0h1m6 0h1m9 0h2m1 0h1m3 0h1m1 0h1m1 0h1m1 0h1m5 0h1M3 71.5h1m4 0h1m2 0h2m1 0h2m15 0h2m11 0h1m1 0h1m1 0h1m4 0h1m6 0h1m2 0h1m7 0h1m14 0h1M1 72.5h1m4 0h1m2 0h1m3 0h1m1 0h1m1 0h3m4 0h1m1 0h1m1 0h2m3 0h1m10 0h1m4 0h1m4 0h2m8 0h1m3 0h1m10 0h1m3 0h1m2 0h2m1 0h1M3 73.5h1m1 0h1m10 0h2m4 0h1m1 0h1m3 0h1m2 0h1m3 0h1m9 0h1m1 0h1m20 0h1m13 0h2m5 0h1M8 74.5h1m2 0h1m7 0h3m6 0h1m3 0h5m1 0h1m8 0h3m7 0h2m1 0h2m10 0h2m13 0h2M20 75.5h1m4 0h1m13 0h1m1 0h1m6 0h1m11 0h2m1 0h2m1 0h1m3 0h1m7 0h2m2 0h1m3 0h1M4 76.5h1m7 0h1m2 0h2m4 0h2m1 0h1m6 0h1m2 0h2m1 0h2m1 0h1m5 0h2m6 0h1m1 0h1m2 0h3m2 0h1m1 0h1m1 0h1m2 0h1m5 0h5M3 77.5h1m1 0h1m7 0h2m2 0h1m2 0h1m1 0h3m5 0h2m13 0h1m1 0h1m9 0h1m6 0h1m6 0h1m17 0h1M3 78.5h1m2 0h1m10 0h1m2 0h1m11 0h1m14 0h1m7 0h1m3 0h1m12 0h1m4 0h2m9 0h1M0 79.5h1m5 0h2m12 0h1m14 0h1m2 0h1m6 0h1m2 0h2m1 0h1m11 0h1M6 80.5h1m1 0h1m7 0h1m28 0h1M6 81.5h1m8 0h1m28 0h1m12 0h2m31 0h1M21 82.5h1M8 83.5h1m23 0h1m10 0h1m5 0h2m13 0h1M34 84.5h1M5 85.5h2m16 0h1m8 0h1m18 0h1m24 0h1M28 86.5h1m41 0h5M3 87.5h1m46 0h1m21 0h1m1 0h1M16 88.5h1m57 0h1M8 89.5h1m28 0h1m30 0h1M10 90.5h1m29 0h1M27 91.5h1m5 0h1m6 0h1m36 0h1M57 92.5h1M58 95.5h1m16 0h1m1 0h1M0 96.5h1m26 0h1m4 0h1m12 0h1m13 0h1m9 0h1m13 0h2m2 0h1M19 97.5h1m15 0h1m5 0h1m9 0h1m9 0h2m10 0h2m4 0h1m10 0h1M10 98.5h1m4 0h1m1 0h2m3 0h1m2 0h1m3 0h2m6 0h1m4 0h1m7 0h1m6 0h2M2 99.5h3m5 0h1m5 0h1m5 0h1m1 0h1m5 0h1m5 0h2m13 0h1m5 0h1m5 0h1m5 0h3m6 0h1m1 0h1"/>
<path stroke="#ee6e22" d="M9 13.5h1m56 0h1m19 0h1M66 14.5h1M9 16.5h1m6 0h1M54 17.5h1m9 0h1m1 0h1M5 18.5h1m74 0h1M8 19.5h2m12 0h2m2 0h2m4 0h1m7 0h1m5 0h1m3 0h1m8 0h2m15 0h3m11 0h1M7 20.5h1m6 0h1m1 0h2m1 0h2m2 0h2m1 0h1m5 0h1m5 0h1m15 0h1m1 0h1m3 0h1m2 0h1m1 0h2m1 0h1m7 0h1m2 0h1M0 21.5h2m4 0h2m2 0h2m14 0h1m3 0h1m6 0h1m12 0h1m11 0h1m12 0h1m4 0h1m3 0h2m3 0h1M6 22.5h1m4 0h1m2 0h1m4 0h2m11 0h1m1 0h1m6 0h2m2 0h1m4 0h1m4 0h1m6 0h1m3 0h1m2 0h1m4 0h1m8 0h1M9 23.5h2m10 0h2m17 0h5m6 0h1m14 0h3m1 0h1m6 0h1m1 0h3m2 0h2m3 0h1M5 24.5h1m1 0h3m2 0h1m7 0h1m1 0h1m3 0h1m13 0h1m6 0h2m3 0h3m6 0h2m7 0h1m5 0h1M17 25.5h2m5 0h2m3 0h1m7 0h1m1 0h1m4 0h2m6 0h3m5 0h3m2 0h2m2 0h1m2 0h2m1 0h1m1 0h2m1 0h1M3 26.5h1m4 0h1m2 0h1m1 0h2m10 0h1m2 0h1m1 0h1m4 0h1m3 0h1m1 0h6m3 0h3m1 0h1m10 0h1m9 0h2M5 27.5h2m8 0h2m13 0h3m2 0h1m1 0h3m1 0h1m2 0h1m8 0h1m1 0h1m3 0h7m4 0h2m5 0h1m11 0h1M6 28.5h1m3 0h1m2 0h4m7 0h2m13 0h1m1 0h1m3 0h2m13 0h1m4 0h1m1 0h1m10 0h2m10 0h1M5 29.5h3m5 0h2m2 0h1m3 0h2m10 0h1m4 0h1m2 0h1m11 0h1M6 30.5h1m8 0h1m6 0h1m16 0h1m7 0h1m3 0h1m1 0h3m10 0h1m1 0h1m2 0h1m3 0h2m6 0h1M7 31.5h2m12 0h1m2 0h2m2 0h2m6 0h1m2 0h1m5 0h1m5 0h1m14 0h1m8 0h1m13 0h1M1 32.5h3m8 0h1m12 0h1m1 0h1m8 0h1m3 0h2m7 0h3m1 0h1m10 0h1m1 0h1m1 0h1m3 0h1m4 0h3m2 0h1m3 0h1M2 33.5h1m5 0h3m18 0h1m12 0h1m42 0h1M2 34.5h1m2 0h1m5 0h2m23 0h2m1 0h1m1 0h1m2 0h2m10 0h2m2 0h1m13 0h1m6 0h1m3 0h1m3 0h1M13 35.5h1m2 0h2m4 0h3m8 0h1m9 0h1m13 0h2m1 0h1m14 0h1m1 0h1M0 36.5h3m5 0h2m8 0h2m3 0h1m3 0h1m5 0h1m8 0h2m4 0h1m19 0h1m5 0h2m9 0h2M4 37.5h3m4 0h1m6 0h2m14 0h2m5 0h1m1 0h3m9 0h1m2 0h1m4 0h1m3 0h1m10 0h2m6 0h1M1 38.5h1m3 0h3m10 0h1m29 0h1m11 0h1M0 39.5h2m1 0h1m2 0h3m2 0h1m14 0h1m2 0h1m6 0h2m14 0h1m7 0h1m2 0h3m1 0h1m1 0h1m2 0h2M22 40.5h1m1 0h1m4 0h2m3 0h1m11 0h1m4 0h1m15 0h1M7 41.5h3m3 0h2m6 0h1m21 0h1m2 0h1m20 0h2m7 0h1m1 0h1m4 0h2m1 0h2M9 42.5h2m22 0h1m5 0h1m7 0h2m7 0h1m8 0h1m4 0h2m1 0h1M0 43.5h1m3 0h1m4 0h1m5 0h2m2 0h1m2 0h2m1 0h1m4 0h1m2 0h2m1 0h2m2 0h1m1 0h1m3 0h1m1 0h1m7 0h1m21 0h1m2 0h1m8 0h1M4 44.5h1m3 0h1m5 0h1m1 0h1m5 0h2m2 0h4m4 0h2m3 0h1m3 0h1m4 0h1m4 0h1m5 0h1m6 0h1m1 0h2m2 0h1m9 0h3m1 0h1m1 0h1m1 0h1M23 45.5h1m10 0h1m5 0h1m6 0h1m13 0h1m3 0h1m9 0h4m1 0h1m5 0h2M4 46.5h1m1 0h3m12 0h1m9 0h1m1 0h1m3 0h2m6 0h1m1 0h1m15 0h1m2 0h2m7 0h1m10 0h1m3 0h1M2 47.5h2m3 0h1m1 0h1m1 0h2m7 0h1m1 0h2m9 0h1m9 0h1m3 0h4m1 0h1m2 0h4m4 0h1m2 0h1m1 0h4m1 0h2m1 0h1m3 0h1m5 0h1M0 48.5h3m2 0h1m28 0h2m3 0h1m3 0h1m23 0h1m3 0h1m4 0h1m2 0h1m3 0h1m3 0h1M0 49.5h1m1 0h1m5 0h2m1 0h2m2 0h1m6 0h1m11 0h2m9 0h1m21 0h1m22 0h1M34 50.5h2m17 0h1M2 51.5h1m13 0h4m4 0h1m7 0h1m19 0h1m1 0h1M15 52.5h2m2 0h1m2 0h1m1 0h1m20 0h1m6 0h1m1 0h2m6 0h2m12 0h1m6 0h1m2 0h1M9 53.5h1m3 0h1m2 0h4m13 0h2m2 0h1m25 0h2m7 0h1m7 0h1m5 0h1M4 54.5h1m50 0h2M6 55.5h3m14 0h1m1 0h2m9 0h1m5 0h1m11 0h1m1 0h1m6 0h5m12 0h2m2 0h2m1 0h1M0 56.5h3m40 0h3m8 0h2m4 0h1m5 0h1m1 0h1m17 0h1M7 57.5h1m2 0h4m5 0h3m1 0h2m3 0h2m7 0h1m5 0h1m1 0h2m1 0h3m1 0h2m1 0h1m8 0h1m1 0h1m2 0h1m3 0h1m16 0h1M0 58.5h1m1 0h1m4 0h2m4 0h1m11 0h1m12 0h6m28 0h2m5 0h1m4 0h1M1 59.5h2m2 0h1m17 0h1m15 0h1m3 0h2m7 0h1m8 0h1m3 0h2m10 0h1M2 60.5h1m2 0h1m2 0h2m2 0h2m2 0h2m6 0h3m1 0h2m17 0h1m3 0h1m10 0h1m1 0h1m2 0h1m1 0h1m2 0h2m8 0h1m1 0h1M6 61.5h2m3 0h1m1 0h2m1 0h1m19 0h1m1 0h1m8 0h1m10 0h2m2 0h3m1 0h1m5 0h1m1 0h1m9 0h1M1 62.5h1m4 0h2m2 0h2m1 0h1m9 0h1m8 0h1m3 0h1m3 0h1m5 0h1m2 0h2m14 0h1m20 0h2M2 63.5h2m4 0h2m1 0h1m4 0h1m5 0h1m4 0h4m3 0h4m36 0h3M3 64.5h1m8 0h3m4 0h1m1 0h1m2 0h2m4 0h2m3 0h1m2 0h2m1 0h2m1 0h2m1 0h1m1 0h2m1 0h3m5 0h1m3 0h2m3 0h3m9 0h1m7 0h1M0 65.5h1m1 0h1m3 0h2m1 0h1m2 0h1m7 0h1m8 0h1m1 0h1m6 0h1m2 0h2m11 0h1m4 0h2m4 0h4m10 0h1m1 0h2m5 0h1M13 66.5h1m7 0h1m6 0h1m1 0h1m9 0h2m10 0h1m1 0h1m3 0h1m2 0h1m6 0h1m2 0h2m1 0h3m1 0h1m8 0h3M1 67.5h1m22 0h1m2 0h1m2 0h1m7 0h1m23 0h2m8 0h1m13 0h1M3 69.5h2m14 0h1m1 0h1m8 0h1m8 0h1m16 0h1m7 0h2m1 0h2m1 0h1m2 0h3m3 0h1m6 0h2M2 70.5h1m1 0h2m14 0h4m5 0h2m4 0h1m1 0h1m14 0h1m11 0h1m2 0h1m9 0h1m4 0h2m1 0h1M0 71.5h3m4 0h1m5 0h1m7 0h1m1 0h2m9 0h1m3 0h1m1 0h2m9 0h1m2 0h2m9 0h1m6 0h1m1 0h2m2 0h1m3 0h1m1 0h2m3 0h1M2 72.5h1m2 0h1m1 0h2m3 0h1m1 0h1m10 0h1m17 0h1m7 0h1m1 0h1m12 0h2m6 0h2m1 0h2m5 0h1M4 73.5h1m3 0h1m1 0h2m1 0h1m1 0h1m4 0h2m4 0h2m1 0h2m3 0h1m1 0h1m5 0h1m3 0h1m2 0h1m1 0h1m6 0h1m6 0h1m5 0h1m4 0h2m3 0h1m2 0h1m2 0h2M15 74.5h1m1 0h2m4 0h1m5 0h1m1 0h1m8 0h1m2 0h1m7 0h5m7 0h2m2 0h5m6 0h1m7 0h1m3 0h1M3 75.5h1m7 0h1m6 0h1m2 0h4m3 0h2m4 0h1m5 0h1m4 0h1m7 0h2m2 0h1m7 0h1m1 0h3m6 0h2m2 0h1m2 0h3m1 0h1m1 0h2M5 76.5h1m1 0h2m9 0h2m8 0h3m1 0h2m5 0h1m3 0h2m10 0h1m1 0h2m17 0h1m7 0h1m5 0h1M0 77.5h1m5 0h1m4 0h1m3 0h2m1 0h2m9 0h1m2 0h2m1 0h1m5 0h1m4 0h1m3 0h1m3 0h1m6 0h1m15 0h1m2 0h1m1 0h3m2 0h2M5 78.5h1m6 0h3m3 0h2m1 0h3m2 0h1m4 0h1m8 0h1m2 0h2m1 0h1m4 0h2m1 0h1m1 0h1m8 0h1m1 0h1m1 0h1m1 0h1m2 0h3m8 0h1m3 0h1M1 79.5h1m9 0h1m2 0h1m9 0h3m5 0h3m6 0h1m1 0h1m10 0h1m10 0h1m3 0h1m2 0h1m5 0h1m2 0h1m3 0h1M0 80.5h1m9 0h1m4 0h1m21 0h1m20 0h1m27 0h1M7 81.5h1m18 0h1m39 0h2m20 0h1M2 82.5h1m25 0h1m2 0h1m3 0h1m8 0h1m5 0h2m4 0h1m6 0h1m18 0h1m3 0h1m3 0h1M12 83.5h1m2 0h1m14 0h2m1 0h1m3 0h1m1 0h3m15 0h1m3 0h1m3 0h1m4 0h1m5 0h2m9 0h1m1 0h1M12 84.5h1m22 0h3m4 0h1m1 0h1m4 0h1m1 0h1m36 0h1m1 0h1M17 85.5h2m7 0h1m36 0h2m23 0h1M0 86.5h1m19 0h1M2 87.5h1m1 0h1m14 0h1m8 0h1m7 0h1m44 0h1m6 0h2M20 88.5h1m21 0h1m28 0h1m5 0h1m10 0h1M9 89.5h1m26 0h1m10 0h1m25 0h1M9 90.5h1m8 0h1m2 0h1m34 0h1M7 91.5h1m10 0h2m12 0h1m32 0h1m19 0h1M8 92.5h1m19 0h1m15 0h1m9 0h1M12 94.5h1M2 95.5h1m28 0h3m25 0h1m6 0h1m13 0h1m9 0h1M2 96.5h1m21 0h1m5 0h1m7 0h1m17 0h1m13 0h1m10 0h1m6 0h1M1 97.5h1m2 0h1m2 0h1m5 0h1m2 0h1m1 0h1m8 0h2m3 0h1m1 0h1m30 0h1m3 0h1m6 0h1m1 0h1m1 0h1M0 98.5h1m3 0h1m1 0h2m3 0h1m4 0h1m3 0h2m1 0h2m1 0h1m6 0h1m1 0h1m2 0h1m1 0h1m3 0h1m2 0h1m5 0h3m8 0h1m2 0h3m11 0h1m2 0h1m3 0h3M1 99.5h1m5 0h1m5 0h3m5 0h1m11 0h1m1 0h1m8 0h2m12 0h1m2 0h1m5 0h2m7 0h1m11 0h1"/>
<path stroke="#f47b19" d="M47 19.5h1m25 0h1M3 20.5h1m1 0h2m1 0h1m1 0h4m1 0h1m2 0h1m2 0h1m7 0h1m1 0h1m4 0h2m2 0h1m1 0h1m1 0h1m2 0h2m1 0h2m3 0h1m1 0h3m1 0h2m6 0h1m8 0h1m3 0h1m4 0h1M2 21.5h2m12 0h2m2 0h1m1 0h1m1 0h2m3 0h1m1 0h2m1 0h1m1 0h1m3 0h1m3 0h2m1 0h1m6 0h1m1 0h1m1 0h1m2 0h1m2 0h1m3 0h1m3 0h1m1 0h1m1 0h1m9 0h2M3 22.5h1m11 0h1m5 0h1m11 0h1m3 0h1m8 0h2m6 0h1m26 0h2M2 23.5h1m2 0h2m4 0h1m22 0h1m2 0h1m40 0h1m11 0h1M1 24.5h4m16 0h1m15 0h3m11 0h1m15 0h2m8 0h1M15 25.5h2m5 0h2m6 0h1m43 0h1M7 26.5h1m1 0h2m18 0h1m23 0h1m6 0h1M0 27.5h1m11 0h2m19 0h2m10 0h1m8 0h1m11 0h1m23 0h1M5 28.5h1m34 0h1m6 0h1m18 0h1M39 29.5h1M52 30.5h1m14 0h1M12 31.5h3m19 0h2m22 0h1m8 0h1m8 0h2m8 0h1M23 32.5h2m3 0h2m22 0h1m10 0h1m3 0h1M19 33.5h1m5 0h1m6 0h1m3 0h2m5 0h1m4 0h2m2 0h1m3 0h2m8 0h1m8 0h1m12 0h2M0 34.5h1m2 0h1m2 0h1m1 0h1m8 0h1m6 0h2m1 0h3m1 0h1m3 0h1m2 0h1m3 0h2m3 0h1m2 0h1m2 0h1m5 0h1m1 0h2m2 0h1m6 0h1m2 0h1m2 0h2m7 0h2M3 35.5h1m5 0h1M51 36.5h1m15 0h1M13 37.5h3m36 0h1M0 38.5h1M2 39.5h1m6 0h1m15 0h1m40 0h1m10 0h2M22 41.5h1M1 43.5h2m5 0h1m3 0h1m4 0h2m9 0h2m1 0h2m5 0h2m9 0h2m6 0h2m8 0h1m4 0h2m1 0h2m3 0h1M9 44.5h1m2 0h2m5 0h3m8 0h1m1 0h2m6 0h3m2 0h3m3 0h2m2 0h2m3 0h2m1 0h3m7 0h1m13 0h1M39 45.5h1m20 0h1m5 0h2M12 46.5h2m25 0h2m5 0h1m4 0h1m2 0h2M8 47.5h1m20 0h2m20 0h1m15 0h1m10 0h2M19 49.5h1M53 51.5h1M23 52.5h1m29 0h1M1 55.5h2m6 0h1m14 0h1m9 0h2m19 0h1M67 56.5h1m19 0h1M6 57.5h1m60 0h2M1 58.5h1m4 0h1m7 0h1m50 0h2M22 59.5h1M4 60.5h1m1 0h1m4 0h1m8 0h2m1 0h1m3 0h1m2 0h4m1 0h1m5 0h2m6 0h1m4 0h1m2 0h2m11 0h2m4 0h1m6 0h1m2 0h5M4 61.5h2m4 0h1m4 0h1m2 0h1m2 0h1m4 0h2m3 0h1m1 0h3m4 0h1m1 0h1m2 0h2m3 0h5m1 0h2m2 0h1m6 0h2m2 0h1m1 0h1m1 0h3m2 0h4m1 0h2m1 0h2M3 62.5h1m1 0h1m3 0h1m4 0h1m4 0h2m3 0h3m1 0h2m1 0h1m5 0h1m13 0h1m1 0h2m2 0h1m4 0h2m4 0h1m5 0h1m4 0h1m3 0h1m1 0h1M0 63.5h1m11 0h1m10 0h1m34 0h3M9 64.5h1m12 0h2m19 0h1m14 0h2m19 0h2m1 0h2M8 65.5h1m7 0h2m4 0h1m7 0h1m1 0h2m1 0h3m20 0h1m5 0h1m15 0h1m6 0h1M0 66.5h3m1 0h3m22 0h1m6 0h2m9 0h1m1 0h2m2 0h1m10 0h2m1 0h1m1 0h1m3 0h1m12 0h1M3 67.5h1m3 0h1m9 0h1m2 0h2m4 0h1m13 0h1m8 0h2m6 0h1m16 0h2m11 0h4M20 69.5h1m34 0h1m15 0h2M47 70.5h1M4 71.5h1m1 0h1m15 0h1m6 0h2m2 0h1m5 0h1m9 0h2m13 0h1m8 0h1m9 0h1m6 0h1M3 72.5h2m5 0h2m18 0h2m5 0h3m12 0h1m19 0h2m2 0h1M0 73.5h2m7 0h1m2 0h1m1 0h1m10 0h1m12 0h1m2 0h1m1 0h2m5 0h1m1 0h2m7 0h4m4 0h2m3 0h1m3 0h3m4 0h2M12 74.5h2m2 0h1m22 0h1m4 0h1m29 0h4M4 75.5h1m1 0h1m2 0h2m1 0h3m2 0h1m17 0h3m4 0h3m10 0h2m31 0h1M6 76.5h1m16 0h1m1 0h1m1 0h1m13 0h2m2 0h1m21 0h1M1 77.5h2m4 0h2m1 0h1m10 0h1m5 0h2m5 0h1m2 0h1m1 0h2m1 0h1m1 0h1m3 0h1m3 0h2m18 0h5m4 0h1M0 78.5h1m1 0h1m6 0h1m1 0h1m3 0h2m10 0h4m2 0h3m3 0h1m5 0h1m7 0h1m3 0h2m3 0h1m1 0h1m3 0h1m1 0h1m9 0h4m2 0h2M2 79.5h4m7 0h1m7 0h1m7 0h2m5 0h2m2 0h1m1 0h1m1 0h1m11 0h2m1 0h1m13 0h1m13 0h1M4 80.5h1m4 0h1m4 0h1m2 0h1m2 0h1m1 0h1m6 0h4m6 0h1m3 0h1m3 0h1m3 0h1m7 0h2m1 0h2m12 0h1M4 81.5h2m4 0h1m3 0h1m5 0h1m10 0h1m13 0h1m5 0h1m13 0h1m2 0h2m3 0h1m4 0h1m10 0h1M0 82.5h1m3 0h3m5 0h3m4 0h1m4 0h2m1 0h1m1 0h2m6 0h1m1 0h1m3 0h1m3 0h3m4 0h2m3 0h1m5 0h1m2 0h2m2 0h1m6 0h2m2 0h3m1 0h1m1 0h1M3 83.5h1m3 0h1m2 0h2m1 0h1m3 0h2m1 0h1m1 0h6m6 0h2m2 0h1m7 0h3m2 0h1m1 0h1m1 0h2m1 0h1m1 0h1m1 0h1m5 0h2m1 0h1m3 0h1m2 0h2m5 0h2m1 0h1m1 0h1M3 84.5h2m2 0h1m12 0h1m4 0h9m4 0h1m4 0h1m1 0h3m10 0h2m2 0h1m2 0h1m1 0h3m4 0h2m1 0h1m9 0h1m1 0h1M11 85.5h2m7 0h1m3 0h1m6 0h1m15 0h1m4 0h1m9 0h1m5 0h2m4 0h2m2 0h1m10 0h1M24 86.5h1m2 0h1m6 0h1m44 0h1M12 87.5h2m4 0h1m1 0h1m1 0h1m2 0h2m5 0h1m5 0h1m7 0h3m5 0h1m7 0h2m7 0h1m3 0h1m6 0h1m2 0h3m2 0h1M4 88.5h4m2 0h1m6 0h1m10 0h1m12 0h1m7 0h1m3 0h1m5 0h1m3 0h1m6 0h1m10 0h2m6 0h1M41 89.5h1m11 0h1m18 0h1m1 0h1M11 90.5h1m2 0h1m15 0h1m8 0h1m15 0h1m7 0h1m21 0h1m3 0h1M24 91.5h3m12 0h1m13 0h1m30 0h1m4 0h1M22 92.5h1m4 0h1m28 0h1m1 0h1m2 0h1m12 0h1m11 0h2M41 93.5h2m11 0h2m6 0h1M6 94.5h1m6 0h1m58 0h1M20 95.5h8m11 0h2m2 0h1m2 0h1m4 0h1m5 0h1m9 0h1m2 0h1m3 0h1m1 0h1m1 0h2m3 0h1m2 0h2m1 0h1M1 96.5h1m3 0h4m1 0h1m2 0h1m1 0h2m2 0h3m6 0h2m1 0h1m7 0h1m4 0h1m1 0h1m2 0h2m9 0h2m9 0h1m1 0h1m1 0h1m4 0h1m1 0h1m2 0h2m2 0h1M5 97.5h1m11 0h1m2 0h1m3 0h1m4 0h1m10 0h1m8 0h1m16 0h1m1 0h1m1 0h2m3 0h1m5 0h3m1 0h1M2 98.5h2m1 0h1m13 0h1m14 0h1m4 0h1m3 0h1m1 0h2m4 0h2m12 0h2m5 0h4m7 0h1m1 0h3M0 99.5h1m4 0h2m4 0h1m22 0h1m24 0h2m4 0h2m8 0h1m10 0h2"/>
<path stroke="#f78a14" d="M0 20.5h3m6 0h1m20 0h1m8 0h1m1 0h1m1 0h1m1 0h2m2 0h1m2 0h2m16 0h4m6 0h2m1 0h4M8 21.5h2m4 0h2m2 0h2m3 0h1m9 0h1m1 0h1m3 0h1m11 0h3m1 0h1m1 0h1m1 0h1m3 0h1m1 0h3m1 0h1m3 0h1m7 0h2M14 27.5h1M4 33.5h1m2 0h1m12 0h2m4 0h1m8 0h1m2 0h1m1 0h1m3 0h1m5 0h1m7 0h1m1 0h2m3 0h1m1 0h2m2 0h1m2 0h1m2 0h2m2 0h4m5 0h1M1 34.5h1m7 0h1m6 0h1m5 0h2m2 0h1m3 0h1m1 0h3m11 0h1m1 0h2m1 0h1m6 0h1m4 0h2m1 0h1m1 0h2m3 0h1m2 0h2m2 0h1M3 43.5h1m9 0h2m37 0h1m12 0h2M15 44.5h1m51 0h1M3 60.5h1m18 0h1m11 0h1m2 0h1m5 0h1m8 0h2m7 0h1m4 0h1m10 0h2M2 61.5h2m4 0h2m9 0h2m1 0h4m3 0h2m1 0h1m6 0h1m3 0h2m10 0h1m5 0h1m7 0h2m7 0h2m7 0h1m2 0h1M2 62.5h1m5 0h1m7 0h1m35 0h1m3 0h1m1 0h2m1 0h1m7 0h5m1 0h1m5 0h1m2 0h1m4 0h1M61 63.5h1M21 65.5h1m12 0h1M48 66.5h1m2 0h1m14 0h1m3 0h1M0 67.5h1m1 0h1m1 0h3m9 0h1m1 0h2m2 0h2m5 0h1m1 0h2m8 0h1m1 0h3m5 0h2m2 0h2m1 0h2m6 0h1m1 0h3m2 0h1m2 0h7m1 0h2M5 71.5h1m70 0h2M37 73.5h1m1 0h2m34 0h1M5 75.5h1M26 76.5h1M9 77.5h1m26 0h1m6 0h1m5 0h1M1 78.5h1m8 0h1m52 0h1m15 0h1m10 0h1M12 79.5h1m5 0h2m3 0h1m7 0h1m7 0h1m12 0h1m2 0h1m2 0h1m27 0h1m3 0h1M1 80.5h2m2 0h1m5 0h3m5 0h1m1 0h1m2 0h2m2 0h1m4 0h1m2 0h1m3 0h1m7 0h1m1 0h1m1 0h1m1 0h4m3 0h1m2 0h1m3 0h2m2 0h1m2 0h1m3 0h1m2 0h4m2 0h3M0 81.5h1m2 0h1m4 0h2m1 0h1m10 0h1m4 0h2m1 0h1m12 0h1m2 0h2m2 0h1m8 0h2m3 0h1m7 0h1m8 0h1m5 0h1M1 82.5h1m5 0h5m3 0h3m4 0h2m2 0h1m5 0h1m1 0h1m3 0h1m1 0h3m2 0h2m5 0h2m6 0h2m2 0h1m1 0h2m2 0h2m1 0h5m3 0h1m6 0h1M0 83.5h1m1 0h1m1 0h3m2 0h1m4 0h1m1 0h1m2 0h1m1 0h1m6 0h2m14 0h2m8 0h1m4 0h1m3 0h1m2 0h1m5 0h3m5 0h5M0 84.5h1m1 0h1m2 0h2m1 0h1m2 0h1m2 0h1m1 0h4m1 0h2m16 0h3m10 0h1m1 0h1m1 0h2m2 0h2m1 0h2m1 0h1m4 0h3m2 0h1m1 0h1m1 0h6M4 85.5h1m2 0h2m1 0h1m5 0h1m4 0h2m2 0h1m1 0h4m2 0h1m2 0h1m1 0h3m1 0h3m4 0h1m3 0h2m2 0h1m1 0h1m1 0h1m3 0h1m1 0h1m12 0h1m2 0h2m5 0h1M1 86.5h1m4 0h2m11 0h1m1 0h3m1 0h2m4 0h1m6 0h1m13 0h1m6 0h2m3 0h2m1 0h3m5 0h1m1 0h2m2 0h2m2 0h1M1 87.5h1m4 0h4m1 0h1m2 0h4m3 0h1m1 0h2m6 0h1m3 0h1m1 0h1m1 0h4m2 0h1m5 0h3m1 0h5m4 0h1m3 0h3m5 0h3m1 0h1m3 0h1M27 88.5h1m1 0h1m5 0h2m8 0h4m1 0h3m1 0h1m2 0h2m1 0h3m1 0h1m4 0h1m2 0h2m1 0h1m2 0h1m1 0h1m2 0h3m1 0h1M17 89.5h1m2 0h1m4 0h1m1 0h1m10 0h1m15 0h1m2 0h2m10 0h1m12 0h1m1 0h1M4 90.5h3m1 0h1m4 0h1m1 0h3m1 0h1m3 0h4m4 0h1m4 0h2m8 0h1m3 0h2m1 0h1m8 0h1m1 0h1m13 0h1m5 0h1m2 0h1m2 0h1M3 91.5h1m1 0h2m1 0h2m7 0h1m2 0h1m7 0h1m5 0h1m3 0h1m3 0h1m6 0h2m3 0h2m6 0h1m9 0h3m1 0h1m1 0h1m1 0h2m4 0h1m1 0h1M9 92.5h2m1 0h2m1 0h1m3 0h1m1 0h1m14 0h1m4 0h3m1 0h2m2 0h1m2 0h2m1 0h1m3 0h2m1 0h1m2 0h1m4 0h1m4 0h1m4 0h2m6 0h1M2 93.5h1m25 0h1M28 94.5h1m56 0h1M0 95.5h2m1 0h3m1 0h4m3 0h4m1 0h1m8 0h2m5 0h4m2 0h2m4 0h1m1 0h2m1 0h3m1 0h1m3 0h4m1 0h1m6 0h2m7 0h2m1 0h2m2 0h1M9 96.5h1m1 0h2m1 0h1m2 0h2m6 0h2m8 0h3m2 0h4m4 0h1m2 0h5m22 0h2m10 0h1M0 97.5h1m9 0h2m3 0h1m9 0h2m6 0h1m4 0h2m2 0h7m3 0h7m4 0h2m2 0h1m20 0h2M82 98.5h1"/>
<path stroke="#fa990e" d="M48 21.5h2m10 0h1M0 33.5h2m1 0h1m1 0h2m6 0h1m1 0h4m3 0h1m1 0h1m2 0h2m1 0h2m1 0h2m4 0h1m5 0h3m3 0h1m1 0h3m3 0h1m2 0h3m7 0h2m5 0h2m5 0h2M13 34.5h3m36 0h1m14 0h1m18 0h1M51 43.5h1M15 62.5h1m39 0h1m4 0h1m15 0h2m2 0h1m9 0h1M8 67.5h1m1 0h6m12 0h1m4 0h5m4 0h1m3 0h3m11 0h2m2 0h2m1 0h1m15 0h1M22 79.5h1m30 0h1M18 80.5h1m4 0h1m2 0h2m6 0h2m5 0h2m6 0h1m3 0h1m11 0h3m2 0h2m1 0h2m2 0h2m1 0h2m5 0h1M1 81.5h2m13 0h1m1 0h2m1 0h1m1 0h3m3 0h1m2 0h1m2 0h8m6 0h1m2 0h1m3 0h1m4 0h2m7 0h2m2 0h4m1 0h2m1 0h3M18 82.5h1m14 0h1m44 0h1M1 83.5h1m50 0h1m14 0h1M1 84.5h1m7 0h2m4 0h1m37 0h1m1 0h1m23 0h1m6 0h1M0 85.5h1m1 0h2m5 0h1m3 0h1m1 0h1m18 0h2m1 0h1m3 0h1m3 0h2m1 0h1m7 0h1m1 0h1m1 0h1m5 0h1m3 0h4m5 0h1m1 0h2m2 0h3M3 86.5h3m2 0h1m1 0h5m1 0h3m10 0h2m2 0h1m1 0h3m1 0h9m1 0h3m1 0h6m2 0h3m2 0h1m9 0h1m3 0h1m2 0h2m1 0h4M0 87.5h1m9 0h1m18 0h2m2 0h2m8 0h2m15 0h2m3 0h3m11 0h1m3 0h1M0 88.5h1m2 0h1m4 0h2m1 0h2m1 0h2m2 0h2m1 0h2m1 0h3m7 0h1m2 0h2m1 0h1m2 0h2m10 0h2m8 0h4m7 0h1m9 0h1m3 0h1M0 89.5h1m1 0h4m4 0h1m3 0h1m1 0h1m1 0h2m1 0h1m2 0h1m1 0h1m1 0h1m2 0h2m2 0h1m6 0h2m2 0h1m1 0h4m3 0h2m2 0h1m4 0h1m2 0h1m3 0h1m8 0h2m1 0h1m2 0h3M1 90.5h1m1 0h1m3 0h1m12 0h1m1 0h1m6 0h1m2 0h4m2 0h1m2 0h1m5 0h3m2 0h1m1 0h1m2 0h3m5 0h1m2 0h2m2 0h1m1 0h2m1 0h1m3 0h3M0 91.5h3m1 0h1m5 0h3m1 0h1m6 0h1m7 0h1m1 0h1m3 0h3m3 0h1m1 0h4m1 0h1m7 0h6m2 0h1m1 0h3m2 0h1m3 0h1m6 0h2m3 0h1m2 0h1M0 92.5h2m1 0h1m3 0h1m3 0h1m2 0h1m1 0h3m1 0h1m2 0h4m2 0h3m2 0h2m2 0h1m1 0h1m6 0h2m1 0h2m11 0h2m4 0h1m2 0h2m2 0h2m1 0h1m2 0h1m1 0h2m3 0h2M17 93.5h1m38 0h1m14 0h1M2 94.5h2m6 0h1m6 0h1m11 0h1m9 0h2m5 0h1m3 0h2m4 0h1m7 0h1m24 0h1M6 95.5h1m4 0h3m4 0h1m15 0h1m9 0h2m9 0h1m8 0h1m6 0h1M47 96.5h1m26 0h1M8 97.5h1m5 0h1m6 0h3m62 0h2"/>
<path stroke="#fca80e" d="M14 33.5h1m8 0h1M9 67.5h1M12 81.5h2m3 0h1m15 0h2m13 0h1m4 0h3m7 0h1m21 0h2M1 85.5h1m12 0h1m40 0h1M2 86.5h1m6 0h1m5 0h1m16 0h1m15 0h1m41 0h1M1 88.5h2m10 0h1m9 0h1m6 0h4m5 0h1m39 0h1M1 89.5h1m4 0h2m3 0h3m1 0h1m6 0h2m5 0h2m2 0h2m5 0h1m3 0h2m6 0h1m7 0h4m1 0h2m3 0h1m4 0h5m5 0h1m3 0h2M0 90.5h1m1 0h1m9 0h1m14 0h2m13 0h4m14 0h2m4 0h2m2 0h2m1 0h1m2 0h1m2 0h2m5 0h1M13 91.5h1m1 0h2m5 0h2m6 0h1m16 0h1m3 0h2m10 0h1m5 0h2m8 0h1M2 92.5h1m1 0h3m25 0h2m3 0h1m1 0h1m26 0h1m1 0h1m2 0h1m6 0h1m4 0h1M0 93.5h2m1 0h1m3 0h1m8 0h1m4 0h2m6 0h3m8 0h1m5 0h1m1 0h1m12 0h1m8 0h1m1 0h1m7 0h1m8 0h1M4 94.5h2m1 0h1m1 0h1m1 0h1m2 0h1m8 0h1m3 0h1m2 0h2m3 0h2m1 0h1m2 0h2m4 0h3m7 0h1m4 0h2m1 0h1m1 0h3m1 0h1m1 0h1m2 0h2m3 0h3m2 0h1m1 0h1m1 0h1M9 97.5h1"/>
<path stroke="#fab821" d="M5 68.5h2m2 0h1m3 0h1m4 0h2m3 0h1m7 0h1m3 0h2m2 0h3m7 0h1m2 0h1m2 0h1m1 0h1m6 0h1m9 0h1m3 0h1m2 0h1M39 89.5h1M67 92.5h1M4 93.5h1m1 0h1m1 0h1m2 0h2m1 0h2m2 0h3m2 0h1m1 0h3m4 0h2m2 0h1m1 0h2m3 0h3m1 0h1m1 0h3m1 0h1m3 0h3m3 0h3m2 0h2m4 0h2m1 0h3m1 0h1m1 0h3m1 0h2m1 0h1M0 94.5h2m6 0h1m6 0h2m1 0h5m1 0h3m5 0h3m2 0h1m5 0h3m6 0h4m2 0h4m4 0h1m3 0h1m3 0h2m2 0h3m3 0h1m2 0h1"/>
<path stroke="#f8c835" d="M0 68.5h5m2 0h2m1 0h3m1 0h4m2 0h3m1 0h7m1 0h3m2 0h2m3 0h7m1 0h2m1 0h2m1 0h1m1 0h6m1 0h9m1 0h3m1 0h2m1 0h9M5 93.5h1m4 0h1m2 0h1m10 0h1m9 0h2m1 0h1m14 0h1m7 0h1m5 0h2m5 0h1m2 0h1m5 0h1m3 0h1"/>
<path stroke="#f6d849" d="M9 93.5h1"/></g></g></g>
<path stroke="rgba(0,0,0,0.07)" stroke-width="1" fill="none" d="M253.3 857V1622M432.8 857V1622M612.2 857V1622M791.6 857V1622M971.1 857V1622M1150.5 857V1622M1330.0 857V1622M1509.4 857V1622M1688.9 857V1622M1868.3 857V1622"/>
<path stroke="#000" stroke-width="2" fill="none" d="M112 80V845.5"/>
<path stroke="#000" stroke-width="1.4" d="M104 96.0H112"/>
<text x="95" y="102.0" class="yl">1e-4</text>
<path stroke="#000" stroke-width="1.4" d="M104 133.4H112"/>
<text x="95" y="139.4" class="yl">9e-5</text>
<path stroke="#000" stroke-width="1.4" d="M104 170.9H112"/>
<text x="95" y="176.9" class="yl">8e-5</text>
<path stroke="#000" stroke-width="1.4" d="M104 208.3H112"/>
<text x="95" y="214.3" class="yl">7e-5</text>
<path stroke="#000" stroke-width="1.4" d="M104 245.8H112"/>
<text x="95" y="251.8" class="yl">6e-5</text>
<path stroke="#000" stroke-width="1.4" d="M104 283.2H112"/>
<text x="95" y="289.2" class="yl">5e-5</text>
<path stroke="#000" stroke-width="1.4" d="M104 320.7H112"/>
<text x="95" y="326.7" class="yl">4e-5</text>
<path stroke="#000" stroke-width="1.4" d="M104 358.1H112"/>
<text x="95" y="364.1" class="yl">3e-5</text>
<path stroke="#000" stroke-width="1.4" d="M104 395.6H112"/>
<text x="95" y="401.6" class="yl">2e-5</text>
<path stroke="#000" stroke-width="1.4" d="M104 433.1H112"/>
<text x="95" y="439.1" class="yl">1e-5</text>
<path stroke="#000" stroke-width="1.4" d="M104 470.5H112"/>
<text x="95" y="476.5" class="yl">0</text>
<path stroke="#000" stroke-width="1.4" d="M104 507.9H112"/>
<text x="95" y="514.0" class="yl">-1e-5</text>
<path stroke="#000" stroke-width="1.4" d="M104 545.4H112"/>
<text x="95" y="551.4" class="yl">-2e-5</text>
<path stroke="#000" stroke-width="1.4" d="M104 582.9H112"/>
<text x="95" y="588.9" class="yl">-3e-5</text>
<path stroke="#000" stroke-width="1.4" d="M104 620.3H112"/>
<text x="95" y="626.3" class="yl">-4e-5</text>
<path stroke="#000" stroke-width="1.4" d="M104 657.8H112"/>
<text x="95" y="663.8" class="yl">-5e-5</text>
<path stroke="#000" stroke-width="1.4" d="M104 695.2H112"/>
<text x="95" y="701.2" class="yl">-6e-5</text>
<path stroke="#000" stroke-width="1.4" d="M104 732.7H112"/>
<text x="95" y="738.7" class="yl">-7e-5</text>
<path stroke="#000" stroke-width="1.4" d="M104 770.1H112"/>
<text x="95" y="776.1" class="yl">-8e-5</text>
<path stroke="#000" stroke-width="1.4" d="M104 807.5H112"/>
<path stroke="#000" stroke-width="1.4" d="M104 845.0H112"/>
<text x="95" y="838.0" class="yl">-1e-4</text>
<path stroke="#000" stroke-width="2" fill="none" d="M112 857V1624"/>
<path stroke="#000" stroke-width="1.4" d="M104 858.4H112"/>
<text x="95" y="876.0" class="yl">50</text>
<path stroke="#000" stroke-width="1.4" d="M104 935.3H112"/>
<text x="95" y="941.3" class="yl">45</text>
<path stroke="#000" stroke-width="1.4" d="M104 1012.2H112"/>
<text x="95" y="1018.2" class="yl">40</text>
<path stroke="#000" stroke-width="1.4" d="M104 1089.1H112"/>
<text x="95" y="1095.1" class="yl">35</text>
<path stroke="#000" stroke-width="1.4" d="M104 1166.0H112"/>
<text x="95" y="1172.0" class="yl">30</text>
<path stroke="#000" stroke-width="1.4" d="M104 1242.9H112"/>
<text x="95" y="1248.9" class="yl">25</text>
<path stroke="#000" stroke-width="1.4" d="M104 1319.8H112"/>
<text x="95" y="1325.8" class="yl">20</text>
<path stroke="#000" stroke-width="1.4" d="M104 1396.7H112"/>
<text x="95" y="1402.7" class="yl">15</text>
<path stroke="#000" stroke-width="1.4" d="M104 1473.6H112"/>
<text x="95" y="1479.6" class="yl">10</text>
<path stroke="#000" stroke-width="1.4" d="M104 1550.5H112"/>
<text x="95" y="1556.5" class="yl">5</text>
<path stroke="#000" stroke-width="1.6" fill="none" d="M121 1628.5H1920"/>
<path stroke="#000" stroke-width="1" stroke-opacity="0.85" d="M133.7 1629V1637"/>
<path stroke="#000" stroke-width="1" stroke-opacity="0.85" d="M163.6 1629V1637"/>
<path stroke="#000" stroke-width="1" stroke-opacity="0.85" d="M193.5 1629V1637"/>
<path stroke="#000" stroke-width="1" stroke-opacity="0.85" d="M223.4 1629V1637"/>
<path stroke="#000" stroke-width="1" stroke-opacity="0.85" d="M253.3 1629V1643"/>
<path stroke="#000" stroke-width="1" stroke-opacity="0.85" d="M283.2 1629V1637"/>
<path stroke="#000" stroke-width="1" stroke-opacity="0.85" d="M313.1 1629V1637"/>
<path stroke="#000" stroke-width="1" stroke-opacity="0.85" d="M343.0 1629V1637"/>
<path stroke="#000" stroke-width="1" stroke-opacity="0.85" d="M372.9 1629V1637"/>
<path stroke="#000" stroke-width="1" stroke-opacity="0.85" d="M402.8 1629V1637"/>
<path stroke="#000" stroke-width="1" stroke-opacity="0.85" d="M432.8 1629V1643"/>
<path stroke="#000" stroke-width="1" stroke-opacity="0.85" d="M462.7 1629V1637"/>
<path stroke="#000" stroke-width="1" stroke-opacity="0.85" d="M492.6 1629V1637"/>
<path stroke="#000" stroke-width="1" stroke-opacity="0.85" d="M522.5 1629V1637"/>
<path stroke="#000" stroke-width="1" stroke-opacity="0.85" d="M552.4 1629V1637"/>
<path stroke="#000" stroke-width="1" stroke-opacity="0.85" d="M582.3 1629V1637"/>
<path stroke="#000" stroke-width="1" stroke-opacity="0.85" d="M612.2 1629V1643"/>
<path stroke="#000" stroke-width="1" stroke-opacity="0.85" d="M642.1 1629V1637"/>
<path stroke="#000" stroke-width="1" stroke-opacity="0.85" d="M672.0 1629V1637"/>
<path stroke="#000" stroke-width="1" stroke-opacity="0.85" d="M701.9 1629V1637"/>
<path stroke="#000" stroke-width="1" stroke-opacity="0.85" d="M731.8 1629V1637"/>
<path stroke="#000" stroke-width="1" stroke-opacity="0.85" d="M761.7 1629V1637"/>
<path stroke="#000" stroke-width="1" stroke-opacity="0.85" d="M791.6 1629V1643"/>
<path stroke="#000" stroke-width="1" stroke-opacity="0.85" d="M821.6 1629V1637"/>
<path stroke="#000" stroke-width="1" stroke-opacity="0.85" d="M851.5 1629V1637"/>
<path stroke="#000" stroke-width="1" stroke-opacity="0.85" d="M881.4 1629V1637"/>
<path stroke="#000" stroke-width="1" stroke-opacity="0.85" d="M911.3 1629V1637"/>
<path stroke="#000" stroke-width="1" stroke-opacity="0.85" d="M941.2 1629V1637"/>
<path stroke="#000" stroke-width="1" stroke-opacity="0.85" d="M971.1 1629V1643"/>
<path stroke="#000" stroke-width="1" stroke-opacity="0.85" d="M1001.0 1629V1637"/>
<path stroke="#000" stroke-width="1" stroke-opacity="0.85" d="M1030.9 1629V1637"/>
<path stroke="#000" stroke-width="1" stroke-opacity="0.85" d="M1060.8 1629V1637"/>
<path stroke="#000" stroke-width="1" stroke-opacity="0.85" d="M1090.7 1629V1637"/>
<path stroke="#000" stroke-width="1" stroke-opacity="0.85" d="M1120.6 1629V1637"/>
<path stroke="#000" stroke-width="1" stroke-opacity="0.85" d="M1150.5 1629V1643"/>
<path stroke="#000" stroke-width="1" stroke-opacity="0.85" d="M1180.5 1629V1637"/>
<path stroke="#000" stroke-width="1" stroke-opacity="0.85" d="M1210.4 1629V1637"/>
<path stroke="#000" stroke-width="1" stroke-opacity="0.85" d="M1240.3 1629V1637"/>
<path stroke="#000" stroke-width="1" stroke-opacity="0.85" d="M1270.2 1629V1637"/>
<path stroke="#000" stroke-width="1" stroke-opacity="0.85" d="M1300.1 1629V1637"/>
<path stroke="#000" stroke-width="1" stroke-opacity="0.85" d="M1330.0 1629V1643"/>
<path stroke="#000" stroke-width="1" stroke-opacity="0.85" d="M1359.9 1629V1637"/>
<path stroke="#000" stroke-width="1" stroke-opacity="0.85" d="M1389.8 1629V1637"/>
<path stroke="#000" stroke-width="1" stroke-opacity="0.85" d="M1419.7 1629V1637"/>
<path stroke="#000" stroke-width="1" stroke-opacity="0.85" d="M1449.6 1629V1637"/>
<path stroke="#000" stroke-width="1" stroke-opacity="0.85" d="M1479.5 1629V1637"/>
<path stroke="#000" stroke-width="1" stroke-opacity="0.85" d="M1509.4 1629V1643"/>
<path stroke="#000" stroke-width="1" stroke-opacity="0.85" d="M1539.4 1629V1637"/>
<path stroke="#000" stroke-width="1" stroke-opacity="0.85" d="M1569.3 1629V1637"/>
<path stroke="#000" stroke-width="1" stroke-opacity="0.85" d="M1599.2 1629V1637"/>
<path stroke="#000" stroke-width="1" stroke-opacity="0.85" d="M1629.1 1629V1637"/>
<path stroke="#000" stroke-width="1" stroke-opacity="0.85" d="M1659.0 1629V1637"/>
<path stroke="#000" stroke-width="1" stroke-opacity="0.85" d="M1688.9 1629V1643"/>
<path stroke="#000" stroke-width="1" stroke-opacity="0.85" d="M1718.8 1629V1637"/>
<path stroke="#000" stroke-width="1" stroke-opacity="0.85" d="M1748.7 1629V1637"/>
<path stroke="#000" stroke-width="1" stroke-opacity="0.85" d="M1778.6 1629V1637"/>
<path stroke="#000" stroke-width="1" stroke-opacity="0.85" d="M1808.5 1629V1637"/>
<path stroke="#000" stroke-width="1" stroke-opacity="0.85" d="M1838.4 1629V1637"/>
<path stroke="#000" stroke-width="1" stroke-opacity="0.85" d="M1868.3 1629V1643"/>
<path stroke="#000" stroke-width="1" stroke-opacity="0.85" d="M1898.3 1629V1637"/>
<text x="253.3" y="1663" class="xl">14:34:00</text>
<text x="432.8" y="1663" class="xl">14:35:00</text>
<text x="612.2" y="1663" class="xl">14:36:00</text>
<text x="791.6" y="1663" class="xl">14:37:00</text>
<text x="971.1" y="1663" class="xl">14:38:00</text>
<text x="1150.5" y="1663" class="xl">14:39:00</text>
<text x="1330.0" y="1663" class="xl">14:40:00</text>
<text x="1509.4" y="1663" class="xl">14:41:00</text>
<text x="1688.9" y="1663" class="xl">14:42:00</text>
<text x="1868.3" y="1663" class="xl">14:43:00</text>
<text x="253.3" y="1684" class="xl">2025-10-14</text>
<text x="0" y="0" transform="translate(22,462.5) rotate(-90)" style="font-size:18px;fill:#000;text-anchor:middle">M/S</text>
<text x="0" y="0" transform="translate(22,1239) rotate(-90)" style="font-size:17.5px;fill:#000;text-anchor:middle">Frequency in Hz</text>
<text x="1020.5" y="1679" style="font-size:18px;fill:#e8e8e8;text-anchor:middle">UTC</text>
</svg>
</div></body></html>
